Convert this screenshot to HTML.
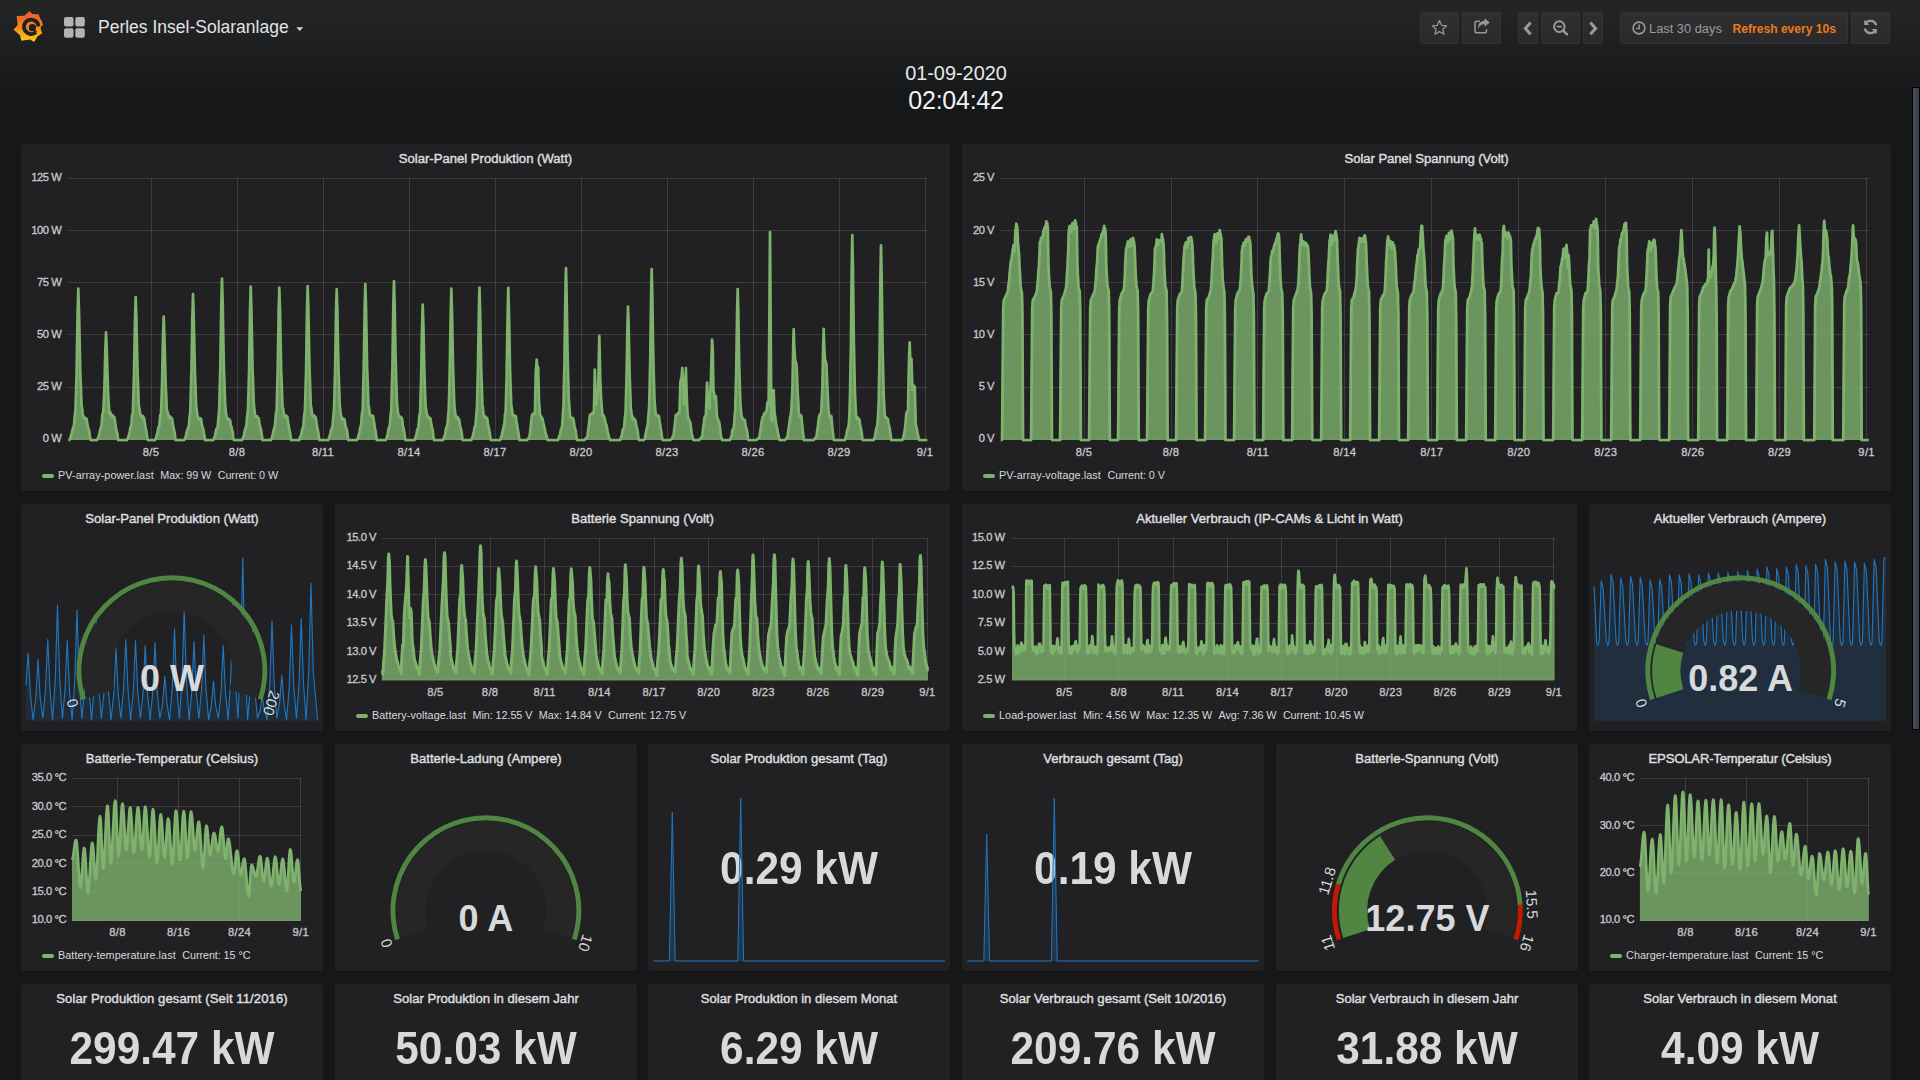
<!DOCTYPE html><html lang="de"><head><meta charset="utf-8"><title>Grafana - Perles Insel-Solaranlage</title><style>
*{box-sizing:border-box;margin:0;padding:0}
html,body{width:1920px;height:1080px;overflow:hidden}
body{background:#161719 linear-gradient(180deg,#222426 10px,#161719 100px) no-repeat;background-size:1920px 1080px;font-family:"Liberation Sans",sans-serif;color:#d8d9da;position:relative}
.panel{position:absolute;background:#212124;border:1px solid #141414;border-radius:3px;overflow:hidden}
.pt{position:absolute;left:0;right:0;top:7px;text-align:center;font-size:13.1px;font-weight:normal;-webkit-text-stroke:0.45px #dcddde;color:#dcddde;line-height:16px;white-space:nowrap;letter-spacing:0}
.lg{position:absolute;bottom:8.9px;height:14px;font-size:10.8px;line-height:14px;color:#d8d9da;white-space:nowrap}
.lg i{display:inline-block;width:12px;height:4px;border-radius:2px;background:#7eb26d;vertical-align:middle;margin:0 4px 1px 0}
.lg .al{letter-spacing:.08px}
.lg .lv{margin-left:6.5px;letter-spacing:-.07px}
.big{position:absolute;left:0;right:0;text-align:center;font-weight:bold;font-size:42.4px;line-height:48px;color:#d8d9da;white-space:nowrap;transform:scaleY(1.1);transform-origin:50% 56%}
svg.ov{position:absolute;left:0;top:0;width:1920px;height:1080px;pointer-events:none;overflow:hidden}
svg text.ax{font-family:"Liberation Sans",sans-serif;font-size:11.2px;fill:#c9cacb;stroke:#c9cacb;stroke-width:0.3px;letter-spacing:-0.45px}
svg text.axx{font-family:"Liberation Sans",sans-serif;font-size:11.2px;fill:#c9cacb;stroke:#c9cacb;stroke-width:0.3px;letter-spacing:0.3px}
svg text.gl{font-family:"Liberation Sans",sans-serif;font-size:15px;fill:#d8d9da}
svg text.gv{font-family:"Liberation Sans",sans-serif;font-weight:bold;fill:#d8d9da}
.nb{position:absolute;top:12px;height:32px;border:1px solid #333336;border-radius:2px;background:linear-gradient(180deg,#2f2f32,#2a2a2d);color:#8e8e8e}
.nb svg{position:absolute;left:0;top:0}
#title{position:absolute;left:98px;top:16px;font-size:17.5px;line-height:22px;color:#e3e3e4;white-space:nowrap}
#clock{position:absolute;left:756px;width:400px;top:62px;text-align:center;color:#e8e8e9}
#clock .d{font-size:19.9px;line-height:22px}
#clock .t{font-size:25px;line-height:29px;margin-top:1.5px;color:#f2f2f3;letter-spacing:-0.25px}
#tp{position:absolute;left:1620px;top:12px;width:228px;height:32px;border:1px solid #333336;border-radius:2px;background:linear-gradient(180deg,#2f2f32,#2a2a2d);white-space:nowrap}
#tp .l{position:absolute;left:28px;top:8px;font-size:12.85px;line-height:16px;color:#9c9c9e}
#tp .r{position:absolute;left:111.5px;top:8px;font-size:12.1px;line-height:16px;color:#eb7b18;font-weight:bold}
#sb{position:absolute;left:1912px;top:87px;width:8px;height:643px;background:linear-gradient(90deg,#474b64,#3b3b40);border:1px solid #000;border-radius:1px}
</style></head><body>
<svg style="position:absolute;left:8px;top:4px" width="44" height="44" viewBox="0 0 1080 1080"><defs><linearGradient id="lg" x1="0" y1="0.15" x2="0" y2="0.88"><stop offset="0" stop-color="#f05a28"/><stop offset="0.25" stop-color="#f26a24"/><stop offset="0.6" stop-color="#f7941d"/><stop offset="1" stop-color="#fdd40c"/></linearGradient>
<mask id="lm"><rect width="1080" height="1080" fill="#000"/><path fill="#fff" d="M525,170 L598,248 L748,250 Q772,290 780,335 Q842,405 860,522 L815,538 L800,600 L840,715 L722,800 L640,934 L548,874 L326,899 L296,764 L136,630 L238,518 L210,296 L402,288 Z"/>
<path fill="#000" d="M713.98,731.59 A224,224 0 1 1 793.45,544.37 L700.68,550.86 A131,131 0 1 0 654.21,660.35 Z"/><circle cx="598" cy="581" r="90" fill="#000"/><path fill="#000" d="M712.91,678.42 A150,150 0 0 1 649.30,722.95 L625.36,657.18 A80,80 0 0 0 659.28,633.42 Z"/></mask></defs>
<rect width="1080" height="1080" fill="url(#lg)" mask="url(#lm)"/>
</svg>
<svg style="position:absolute;left:64px;top:17px" width="21" height="21" viewBox="0 0 21 21"><g fill="#b3b3b3"><rect x="0" y="0" width="9.5" height="9.5" rx="2"/><rect x="11.3" y="0" width="9.5" height="9.5" rx="2"/><rect x="0" y="11.3" width="9.5" height="9.5" rx="2"/><rect x="11.3" y="11.3" width="9.5" height="9.5" rx="2"/></g></svg>
<div id="title">Perles Insel-Solaranlage</div>
<svg style="position:absolute;left:296px;top:27px" width="8" height="5" viewBox="0 0 8 5"><path d="M0.3,0.3 L7.2,0.3 L3.75,4 Z" fill="#d8d9da"/></svg>
<div class="nb" style="left:1420px;width:39px"><svg width="37" height="30" viewBox="0 0 37 30"><path d="M18.5,7.6 L20.6,12.3 L25.6,12.8 L21.9,16.2 L23,21.2 L18.5,18.6 L14,21.2 L15.1,16.2 L11.4,12.8 L16.4,12.3 Z" fill="none" stroke="#969698" stroke-width="1.25" stroke-linejoin="round"/></svg></div>
<div class="nb" style="left:1462px;width:39px"><svg width="37" height="30" viewBox="0 0 37 30"><g transform="translate(0,-1.3)"><path d="M17,9.5 H13.8 Q12,9.5 12,11.3 V19.2 Q12,21 13.8,21 H21.7 Q23.5,21 23.5,19.2 V17.5" fill="none" stroke="#98989a" stroke-width="1.5"/><path d="M21.5,6.5 L26.8,10.8 L21.5,15 V12.6 Q16.5,12.4 15.2,17.5 Q14.3,9.6 21.5,9 Z" fill="#98989a"/></g></svg></div>
<div class="nb" style="left:1518px;width:20px"><svg width="18" height="30" viewBox="0 0 18 30"><path d="M11.6,9.5 L6.4,15.4 L11.6,21.3" fill="none" stroke="#9a9a9c" stroke-width="3"/></svg></div>
<div class="nb" style="left:1541px;width:39px"><svg width="37" height="30" viewBox="0 0 37 30"><circle cx="17.3" cy="13.6" r="5.3" fill="none" stroke="#9a9a9c" stroke-width="2"/><path d="M21.2,17.6 L25,21.4" stroke="#9a9a9c" stroke-width="2.6" stroke-linecap="round"/><path d="M14.6,13.6 H20" stroke="#9a9a9c" stroke-width="1.7"/></svg></div>
<div class="nb" style="left:1583px;width:20px"><svg width="18" height="30" viewBox="0 0 18 30"><path d="M6.4,9.5 L11.6,15.4 L6.4,21.3" fill="none" stroke="#9a9a9c" stroke-width="3"/></svg></div>
<div id="tp"><svg style="position:absolute;left:10px;top:7px" width="16" height="16" viewBox="0 0 16 16"><circle cx="8" cy="8" r="5.9" fill="none" stroke="#9a9a9c" stroke-width="1.6"/><path d="M8.2,4.6 V8.4 H5.4" fill="none" stroke="#9a9a9c" stroke-width="1.5"/></svg><span class="l">Last 30 days</span><span class="r">Refresh every 10s</span></div>
<div class="nb" style="left:1851px;width:39px"><svg width="37" height="30" viewBox="0 0 37 30"><g transform="translate(0,-1)"><path d="M24.2,13.2 A6,6 0 0 0 13.4,11.6" fill="none" stroke="#9a9a9c" stroke-width="2.3"/><path d="M12.2,7.8 V13 H17.4 Z" fill="#9a9a9c"/><path d="M12.8,16.6 A6,6 0 0 0 23.6,18.4" fill="none" stroke="#9a9a9c" stroke-width="2.3"/><path d="M24.8,22.2 V17 H19.6 Z" fill="#9a9a9c"/></g></svg></div>
<div id="clock"><div class="d">01-09-2020</div><div class="t">02:04:42</div></div>
<div id="sb"></div>
<div class="panel " style="left:20px;top:143px;width:931px;height:349px"><div class="pt">Solar-Panel Produktion (Watt)</div><div class="lg" style="left:21px"><i></i><span class="al">PV-array-power.last</span><span class="lv">Max: 99 W</span><span class="lv">Current: 0 W</span></div></div>
<div class="panel " style="left:961px;top:143px;width:931px;height:349px"><div class="pt" style="letter-spacing:-0.045px">Solar Panel Spannung (Volt)</div><div class="lg" style="left:21px"><i></i><span class="al">PV-array-voltage.last</span><span class="lv">Current: 0 V</span></div></div>
<div class="panel " style="left:20px;top:503px;width:304px;height:229px"><div class="pt">Solar-Panel Produktion (Watt)</div></div>
<div class="panel " style="left:334px;top:503px;width:617px;height:229px"><div class="pt">Batterie Spannung (Volt)</div><div class="lg" style="left:21px"><i></i><span class="al">Battery-voltage.last</span><span class="lv">Min: 12.55 V</span><span class="lv">Max: 14.84 V</span><span class="lv">Current: 12.75 V</span></div></div>
<div class="panel " style="left:961px;top:503px;width:617px;height:229px"><div class="pt">Aktueller Verbrauch (IP-CAMs &amp; Licht in Watt)</div><div class="lg" style="left:21px"><i></i><span class="al">Load-power.last</span><span class="lv">Min: 4.56 W</span><span class="lv">Max: 12.35 W</span><span class="lv">Avg: 7.36 W</span><span class="lv">Current: 10.45 W</span></div></div>
<div class="panel " style="left:1588px;top:503px;width:304px;height:229px"><div class="pt">Aktueller Verbrauch (Ampere)</div></div>
<div class="panel " style="left:20px;top:743px;width:304px;height:229px"><div class="pt" style="letter-spacing:0.05px">Batterie-Temperatur (Celsius)</div><div class="lg" style="left:21px"><i></i><span class="al">Battery-temperature.last</span><span class="lv">Current: 15 °C</span></div></div>
<div class="panel " style="left:334px;top:743px;width:304px;height:229px"><div class="pt">Batterie-Ladung (Ampere)</div></div>
<div class="panel " style="left:647px;top:743px;width:304px;height:229px"><div class="pt">Solar Produktion gesamt (Tag)</div><div class="big" style="top:100.7px">0.29 kW</div></div>
<div class="panel " style="left:961px;top:743px;width:304px;height:229px"><div class="pt">Verbrauch gesamt (Tag)</div><div class="big" style="top:100.7px">0.19 kW</div></div>
<div class="panel " style="left:1275px;top:743px;width:304px;height:229px"><div class="pt">Batterie-Spannung (Volt)</div></div>
<div class="panel " style="left:1588px;top:743px;width:304px;height:229px"><div class="pt" style="letter-spacing:-0.17px">EPSOLAR-Temperatur (Celsius)</div><div class="lg" style="left:21px"><i></i><span class="al">Charger-temperature.last</span><span class="lv">Current: 15 °C</span></div></div>
<div class="panel " style="left:20px;top:983px;width:304px;height:229px"><div class="pt" style="letter-spacing:0.085px">Solar Produktion gesamt (Seit 11/2016)</div><div class="big" style="top:41.3px">299.47 kW</div></div>
<div class="panel " style="left:334px;top:983px;width:304px;height:229px"><div class="pt">Solar Produktion in diesem Jahr</div><div class="big" style="top:41.3px">50.03 kW</div></div>
<div class="panel " style="left:647px;top:983px;width:304px;height:229px"><div class="pt">Solar Produktion in diesem Monat</div><div class="big" style="top:41.3px">6.29 kW</div></div>
<div class="panel " style="left:961px;top:983px;width:304px;height:229px"><div class="pt">Solar Verbrauch gesamt (Seit 10/2016)</div><div class="big" style="top:41.3px">209.76 kW</div></div>
<div class="panel " style="left:1275px;top:983px;width:304px;height:229px"><div class="pt">Solar Verbrauch in diesem Jahr</div><div class="big" style="top:41.3px">31.88 kW</div></div>
<div class="panel " style="left:1588px;top:983px;width:304px;height:229px"><div class="pt">Solar Verbrauch in diesem Monat</div><div class="big" style="top:41.3px">4.09 kW</div></div>
<svg class="ov" viewBox="0 0 1920 1080"><clipPath id="c1"><rect x="67.3" y="176.3" width="861.0" height="265.4"/></clipPath><g stroke="rgba(255,255,255,0.13)" stroke-width="1" shape-rendering="crispEdges"><line x1="151" y1="178.3" x2="151" y2="439.3"/><line x1="237" y1="178.3" x2="237" y2="439.3"/><line x1="323" y1="178.3" x2="323" y2="439.3"/><line x1="409" y1="178.3" x2="409" y2="439.3"/><line x1="495" y1="178.3" x2="495" y2="439.3"/><line x1="581" y1="178.3" x2="581" y2="439.3"/><line x1="667" y1="178.3" x2="667" y2="439.3"/><line x1="753" y1="178.3" x2="753" y2="439.3"/><line x1="839" y1="178.3" x2="839" y2="439.3"/><line x1="925" y1="178.3" x2="925" y2="439.3"/><line x1="68.3" y1="439.3" x2="927.3" y2="439.3"/><line x1="68.3" y1="387.1" x2="927.3" y2="387.1"/><line x1="68.3" y1="334.9" x2="927.3" y2="334.9"/><line x1="68.3" y1="282.7" x2="927.3" y2="282.7"/><line x1="68.3" y1="230.5" x2="927.3" y2="230.5"/><line x1="68.3" y1="178.3" x2="927.3" y2="178.3"/></g><g clip-path="url(#c1)"><g transform="translate(0,0.8)"><path d="M68.3,439.3 L68.9,439.3 L69.4,439.3 L69.5,439.1 L70.1,437.6 L70.7,436 L71.1,435.1 L71.3,433.3 L71.9,431.6 L72.5,428.9 L73.1,427.2 L73.7,425.4 L73.9,425.1 L74.3,421.1 L74.7,415.7 L74.9,414 L75.5,409 L76.1,388 L76.6,371.1 L76.7,364.6 L77.3,330.5 L77.6,312 L77.9,302 L78.3,287.7 L78.5,295.1 L79,310.4 L79.1,314.6 L79.7,343.6 L80.2,368.1 L80.3,371.8 L80.9,386.3 L81.5,403.8 L82.1,407.5 L82.7,413.2 L83.3,415.4 L83.5,416.5 L83.9,416.4 L84.5,417.6 L84.8,416.9 L85.1,418.2 L85.7,417.5 L86.3,418.9 L86.7,418.2 L86.9,420.1 L87.5,423.9 L87.6,424 L88.1,427.1 L88.5,427.8 L88.7,428.7 L89.3,430.9 L89.9,435.2 L90.5,439.3 L91.1,439.3 L91.7,439.3 L92.3,439.3 L92.9,439.3 L93.5,439.3 L94.1,439.3 L94.7,439.3 L95.3,439.3 L95.9,439.3 L96.5,439.3 L97,439.3 L97.2,439.3 L97.6,438.3 L98.2,436.8 L98.8,435 L98.8,435.1 L99.4,432.8 L100,429.7 L100.2,428.8 L100.6,427.7 L101.2,425.7 L101.6,423.4 L101.8,420.8 L102.4,413.7 L102.4,414.1 L103,411.9 L103.2,412 L103.6,404.8 L104.2,394 L104.3,390.9 L104.8,372.1 L105.3,348.7 L105.4,347.7 L106,333.3 L106,331.6 L106.6,344.2 L106.7,347.8 L107.2,364.1 L107.8,383.8 L107.9,388.6 L108.4,397.7 L109,407.6 L109.2,412.5 L109.6,411.5 L110.2,412.8 L110.4,411.6 L110.8,413.8 L111.2,414.9 L111.4,414.1 L112,415.2 L112.5,415.3 L112.6,414.4 L113.2,416 L113.8,417.1 L114.3,416.6 L114.4,416.4 L115,420 L115.2,422.4 L115.6,424.8 L116.1,427.8 L116.2,428.8 L116.8,430.6 L116.9,431 L117.4,433 L118,438.2 L118.1,439.3 L118.6,439.3 L119.2,439.3 L119.8,439.3 L120.4,439.3 L121,439.3 L121.6,439.3 L122.2,439.3 L122.8,439.3 L123.4,439.3 L124,439.3 L124.6,439.3 L125.2,439.3 L125.6,439.3 L126.2,439.3 L126.8,439.3 L126.9,439.3 L127.4,438 L128,437.3 L128.6,435.1 L128.6,435.4 L129.2,433 L129.8,430.4 L130,428.9 L130.4,426.5 L131,425.6 L131.4,423.8 L131.6,420.3 L132.1,414.4 L132.2,414.1 L132.8,411.8 L132.9,410.6 L133.4,393.7 L134,374.6 L134,374.8 L134.6,339.8 L135,319.2 L135.2,312.3 L135.7,296.2 L135.8,300.4 L136.4,317.7 L136.4,320.1 L137,347.5 L137.6,371.8 L137.6,372.5 L138.2,388.4 L138.8,405.1 L138.9,405.4 L139.4,407.8 L140,412.4 L140,411.9 L140.6,414.6 L140.8,415.3 L141.2,414.6 L141.8,415.3 L142.1,415.7 L142.4,416.7 L143,415.3 L143.6,417.3 L144,416.9 L144.2,419 L144.8,421.8 L144.9,422.8 L145.4,426.2 L145.8,427.8 L146,429.2 L146.6,431 L146.6,432.3 L147.2,436.5 L147.8,439.3 L147.8,439.3 L148.4,439.3 L149,439.3 L149.6,439.3 L150.2,439.3 L150.8,439.3 L151.4,439.3 L152,439.3 L152.6,439.3 L153.2,439.3 L153.8,439.3 L154.3,439.3 L154.9,439.3 L155,439.3 L155.5,437.9 L156.1,437 L156.6,435.1 L156.7,434.6 L157.3,432.3 L157.9,429.4 L158,428.9 L158.5,426.3 L159.1,425.4 L159.4,424.5 L159.7,420.5 L160.2,415.2 L160.3,414 L160.9,413.9 L161,413 L161.5,398.8 L162,383.6 L162.1,379.3 L162.7,350.1 L163,335.5 L163.3,327.7 L163.7,315.7 L163.9,321.8 L164.4,334.4 L164.5,338.2 L165.1,361.7 L165.6,381.3 L165.7,384.8 L166.3,396.5 L166.8,409.3 L166.9,408.7 L167.5,411 L168,412.6 L168.1,413.1 L168.7,416.4 L168.8,416 L169.3,417.1 L169.9,415.4 L170.1,416.4 L170.5,417.2 L171.1,416.7 L171.7,418 L172,417.7 L172.3,419.3 L172.8,423.5 L172.9,423.6 L173.5,427.2 L173.7,427.8 L174.1,430 L174.5,431 L174.7,431.9 L175.3,437.5 L175.7,439.3 L175.9,439.3 L176.5,439.3 L177.1,439.3 L177.7,439.3 L178.3,439.3 L178.9,439.3 L179.5,439.3 L180.1,439.3 L180.7,439.3 L181.3,439.3 L181.9,439.3 L182.5,439.3 L183,439.3 L183.6,439.3 L184.2,439.3 L184.3,439.3 L184.8,438.1 L185.4,436.5 L186,435.1 L186.6,431.6 L187.2,429.4 L187.3,428.9 L187.8,428.4 L188.4,425.9 L188.7,426 L189,423.5 L189.5,416.6 L189.6,416.9 L190.2,411.4 L190.3,410 L190.8,393.2 L191.3,373.7 L191.4,372.9 L192,337.7 L192.3,316.6 L192.6,308.4 L193,293.4 L193.2,298.6 L193.7,315.5 L193.8,320 L194.4,347.9 L194.9,370.8 L195,372.9 L195.6,388.9 L196.1,404.9 L196.2,404.9 L196.8,409.6 L197.3,414.1 L197.4,414.3 L198,417.7 L198.1,417.5 L198.6,418.6 L199.2,418.8 L199.3,417.9 L199.8,417.3 L200.4,418.2 L201,418 L201.2,419.2 L201.6,422.6 L202.1,425 L202.2,425 L202.8,427.2 L203,427.8 L203.4,429 L203.7,430.9 L204,432.9 L204.6,435.8 L204.9,439.3 L205.2,439.3 L205.8,439.3 L206.4,439.3 L207,439.3 L207.6,439.3 L208.2,439.3 L208.8,439.3 L209.4,439.3 L210,439.3 L210.6,439.3 L211.2,439.3 L211.6,439.3 L212.2,439.3 L212.8,439.3 L213.4,439.3 L213.4,439.1 L214,437.6 L214.6,436 L215,435.1 L215.2,433.6 L215.8,430.5 L216.4,428.9 L216.4,428.3 L217,427.4 L217.6,426.2 L217.7,426.7 L218.2,419.7 L218.5,417.3 L218.8,413.2 L219.3,406.9 L219.4,400.8 L220,377.7 L220.3,366.8 L220.6,347.3 L221.2,309.3 L221.3,303.4 L221.8,283.4 L222,277.9 L222.4,292.4 L222.7,301.8 L223,320.5 L223.6,352 L223.8,363.4 L224.2,375.5 L224.8,393.3 L225.1,401.7 L225.4,405.2 L226,413 L226.3,414.8 L226.6,416 L227,418.1 L227.2,417.1 L227.8,417.6 L228.3,418.5 L228.4,418.1 L229,419.2 L229.6,418.9 L230.2,419.8 L230.2,420.2 L230.8,424.5 L231,425.6 L231.4,425.9 L231.9,427.8 L232,429.2 L232.6,430.3 L232.7,430.9 L233.2,435.9 L233.8,439.2 L233.8,439.3 L234.4,439.3 L235,439.3 L235.6,439.3 L236.2,439.3 L236.8,439.3 L237.4,439.3 L238,439.3 L238.6,439.3 L239.2,439.3 L239.8,439.3 L240.3,439.3 L240.9,439.3 L241.5,439.3 L242.1,439.3 L242.1,439.3 L242.7,437.8 L243.3,436.3 L243.8,435.1 L243.9,435 L244.5,431.2 L245.1,428.9 L245.7,426.9 L246.3,424.7 L246.5,424.5 L246.9,418.1 L247.2,415.1 L247.5,413.3 L248,408.4 L248.1,405.8 L248.7,383.5 L249.1,370 L249.3,354.7 L249.9,318.4 L250,310.4 L250.5,293.5 L250.7,285.7 L251.1,298.5 L251.4,308.6 L251.7,324.8 L252.3,355.5 L252.5,367 L252.9,376.9 L253.5,395.5 L253.8,403.4 L254.1,405.5 L254.7,411.3 L254.9,412.5 L255.3,414.3 L255.7,415.9 L255.9,415.3 L256.5,415.3 L257,416.3 L257.1,415.6 L257.7,417.1 L258.3,417.1 L258.8,417.6 L258.9,418.6 L259.5,423 L259.7,423.4 L260.1,425.6 L260.5,427.8 L260.7,427.8 L261.3,430.2 L261.3,430.9 L261.9,434.8 L262.5,439.3 L262.5,439.3 L263.1,439.3 L263.7,439.3 L264.3,439.3 L264.9,439.3 L265.5,439.3 L266.1,439.3 L266.7,439.3 L267.3,439.3 L267.9,439.3 L268.5,439.3 L269,439.3 L269.6,439.3 L270.2,439.3 L270.8,439.3 L271.4,437.8 L272,436.7 L272.4,435.1 L272.6,435 L273.2,431.6 L273.7,428.9 L273.8,429.2 L274.4,426.7 L275,423.7 L275.1,423 L275.6,416.8 L275.8,413.6 L276.2,411.6 L276.6,408.7 L276.8,403.6 L277.4,380.9 L277.7,370.7 L278,351.2 L278.6,315.1 L278.6,311.3 L279.2,292.5 L279.3,286.9 L279.8,303.8 L280,309.7 L280.4,329 L281,360.9 L281.1,367.5 L281.6,380.1 L282.2,397.7 L282.4,403.6 L282.8,406.6 L283.4,409.5 L283.5,411.1 L284,414.1 L284.3,414.5 L284.6,415.3 L285.2,414.8 L285.5,414.9 L285.8,416 L286.4,414.8 L287,416.4 L287.4,416.1 L287.6,418.3 L288.2,422.6 L288.2,422 L288.8,425.4 L289.1,427.8 L289.4,429.1 L289.8,431 L290,431.6 L290.6,435.9 L291,439.3 L291.2,439.3 L291.8,439.3 L292.4,439.3 L293,439.3 L293.6,439.3 L294.2,439.3 L294.8,439.3 L295.4,439.3 L296,439.3 L296.6,439.3 L297.2,439.3 L297.6,439.3 L298.2,439.3 L298.8,439.3 L299.2,439.3 L299.4,438.7 L300,436.2 L300.6,435.3 L300.8,435.1 L301.2,433.9 L301.8,430.5 L302.2,428.8 L302.4,428.5 L303,426.5 L303.5,423.6 L303.6,422.1 L304.2,414.2 L304.3,414.2 L304.8,410.6 L305,408.3 L305.4,394.1 L306,371.9 L306.1,370.1 L306.6,334.5 L307,309.7 L307.2,302.3 L307.7,285.4 L307.8,289.7 L308.4,308.3 L308.4,311.3 L309,342.8 L309.5,366.6 L309.6,369.9 L310.2,387.3 L310.7,403.1 L310.8,404.8 L311.4,407.4 L311.9,411.7 L312,411.9 L312.6,415.7 L312.7,415 L313.2,415.3 L313.8,415.2 L313.9,415.5 L314.4,415 L315,416.5 L315.6,416.5 L315.7,416.7 L316.2,419.5 L316.6,422.6 L316.8,423.6 L317.4,427.8 L317.4,426.9 L318,430.4 L318.2,431 L318.6,433.9 L319.2,438.6 L319.3,439.3 L319.8,439.3 L320.4,439.3 L321,439.3 L321.6,439.3 L322.2,439.3 L322.8,439.3 L323.4,439.3 L324,439.3 L324.6,439.3 L325.2,439.3 L325.8,439.3 L326.3,439.3 L326.9,439.3 L327.5,439.3 L328.1,439.3 L328.3,439.3 L328.7,438.2 L329.3,436.2 L329.9,435.1 L329.9,434.4 L330.5,431.9 L331.1,428.9 L331.2,428.9 L331.7,428.4 L332.3,425.8 L332.5,426.1 L332.9,420.5 L333.3,416.7 L333.5,413.6 L334,409.2 L334.1,407 L334.7,384.8 L335.1,371.2 L335.3,358.5 L335.9,320 L336,312.7 L336.5,294.8 L336.7,288.4 L337.1,302.4 L337.4,311 L337.7,329 L338.3,358.5 L338.5,368.4 L338.9,379.9 L339.5,396.7 L339.7,403.9 L340.1,407.3 L340.7,413.7 L340.9,414.2 L341.3,415.5 L341.6,417.6 L341.9,418.6 L342.5,417.2 L342.9,418 L343.1,418.8 L343.7,418.9 L344.3,418.4 L344.7,419.2 L344.9,421.7 L345.5,425.8 L345.5,425.1 L346.1,427 L346.4,427.8 L346.7,428.8 L347.1,431 L347.3,431.6 L347.9,436.3 L348.3,439.3 L348.5,439.3 L349.1,439.3 L349.7,439.3 L350.3,439.3 L350.9,439.3 L351.5,439.3 L352.1,439.3 L352.7,439.3 L353.3,439.3 L353.9,439.3 L354.5,439.3 L355,439.3 L355.6,439.3 L356.2,439.3 L356.8,439.3 L356.9,439.3 L357.4,438.1 L358,436.6 L358.5,435.1 L358.6,434 L359.2,432.9 L359.8,429.8 L359.8,428.9 L360.4,426.5 L361,424.3 L361.2,423 L361.6,417.4 L361.9,413.6 L362.2,411.4 L362.7,408.1 L362.8,404.1 L363.4,380.8 L363.7,369.1 L364,351.5 L364.6,313.3 L364.6,308.3 L365.2,288.5 L365.3,283.3 L365.8,299.3 L366,306.8 L366.4,327.5 L367,360.4 L367.1,366 L367.6,379.8 L368.2,397.6 L368.3,402.8 L368.8,406.2 L369.4,410.5 L369.4,411.1 L370,414.1 L370.2,414.5 L370.6,414.5 L371.2,414.8 L371.4,414.9 L371.8,414.9 L372.4,416.5 L373,415 L373.2,416.2 L373.6,418.6 L374.1,422 L374.2,423 L374.8,426.3 L374.9,427.8 L375.4,429.6 L375.7,431 L376,433.3 L376.6,437.7 L376.8,439.3 L377.2,439.3 L377.8,439.3 L378.4,439.3 L379,439.3 L379.6,439.3 L380.2,439.3 L380.8,439.3 L381.4,439.3 L382,439.3 L382.6,439.3 L383.2,439.3 L383.6,439.3 L384.2,439.3 L384.8,439.3 L385.4,439.3 L385.7,439.3 L386,438.3 L386.6,437.7 L387.2,435.1 L387.3,435.1 L387.8,432.6 L388.4,428.6 L388.6,428.8 L389,426.3 L389.6,425.5 L389.9,424.1 L390.2,419.7 L390.6,414.7 L390.8,413.5 L391.4,407.5 L391.4,405.4 L392,381.4 L392.4,367.8 L392.6,351.8 L393.2,312.9 L393.3,305.6 L393.8,286.9 L394,280.3 L394.4,296.8 L394.7,304.2 L395,324.4 L395.6,356.1 L395.8,364.5 L396.2,379.6 L396.8,396.8 L397,402.3 L397.4,407.2 L398,412.1 L398.1,412.2 L398.6,415.1 L398.9,415.5 L399.2,415.3 L399.8,416.2 L400.1,416 L400.4,416.5 L401,416.4 L401.6,417.9 L401.9,417.2 L402.2,419.4 L402.7,423 L402.8,424.6 L403.4,427.2 L403.5,427.8 L404,430.4 L404.3,430.9 L404.6,434.2 L405.2,438 L405.4,439.3 L405.8,439.3 L406.4,439.3 L407,439.3 L407.6,439.3 L408.2,439.3 L408.8,439.3 L409.4,439.3 L410,439.3 L410.6,439.3 L411.2,439.3 L411.8,439.3 L412.3,439.3 L412.9,439.3 L413.5,439.3 L414.1,439.3 L414.4,439.3 L414.7,438.6 L415.3,437.1 L415.9,435.7 L416,435.1 L416.5,432.9 L417.1,429.8 L417.3,428.9 L417.7,428.3 L418.3,426.3 L418.6,424.7 L418.9,420.8 L419.4,415.4 L419.5,414.4 L420.1,412.2 L420.1,411.9 L420.7,391.3 L421.1,378 L421.3,367.5 L421.9,332.8 L422.1,325.1 L422.5,310.7 L422.7,303.7 L423.1,315.7 L423.4,324.1 L423.7,339.6 L424.3,367.2 L424.5,375.4 L424.9,387.3 L425.5,402.9 L425.7,406.9 L426.1,408.3 L426.7,413 L426.8,412.9 L427.3,414.1 L427.5,416.2 L427.9,415.5 L428.5,417.3 L428.7,416.6 L429.1,417.4 L429.7,416.8 L430.3,418.2 L430.5,417.9 L430.9,421.5 L431.3,423.7 L431.5,423.8 L432.1,427.6 L432.2,427.8 L432.7,429.4 L432.9,430.9 L433.3,434.6 L433.9,438.3 L434,439.3 L434.5,439.3 L435.1,439.3 L435.7,439.3 L436.3,439.3 L436.9,439.3 L437.5,439.3 L438.1,439.3 L438.7,439.3 L439.3,439.3 L439.9,439.3 L440.5,439.3 L441,439.3 L441.6,439.3 L442.2,439.3 L442.8,439.3 L443.1,439.3 L443.4,438.5 L444,436.5 L444.6,436.3 L444.7,435.1 L445.2,433.2 L445.8,429.3 L445.9,428.9 L446.4,426.8 L447,425 L447.2,425.3 L447.6,421.8 L448,415.9 L448.2,414 L448.7,409 L448.8,406.3 L449.4,384.5 L449.7,371 L450,355.2 L450.6,317.9 L450.7,312.1 L451.2,293.4 L451.3,287.7 L451.8,305.1 L452,310.7 L452.4,333.5 L453,363.6 L453.1,367.8 L453.6,383.4 L454.2,401.1 L454.3,403.8 L454.8,409 L455.4,413.4 L455.4,414.1 L456,416.8 L456.1,416.7 L456.6,416.2 L457.2,416.1 L457.3,417.2 L457.8,416.6 L458.4,418.8 L459,419.3 L459.1,418.4 L459.6,421.1 L459.9,424.3 L460.2,425.5 L460.7,427.8 L460.8,427.5 L461.4,430.9 L461.5,430.9 L462,434.9 L462.6,439.3 L463.2,439.3 L463.8,439.3 L464.4,439.3 L465,439.3 L465.6,439.3 L466.2,439.3 L466.8,439.3 L467.4,439.3 L468,439.3 L468.6,439.3 L469.2,439.3 L469.6,439.3 L470.2,439.3 L470.8,439.3 L471.3,439.3 L471.4,439 L472,437.4 L472.6,435.9 L472.9,435.1 L473.2,433.2 L473.8,431.5 L474.2,428.9 L474.4,427.6 L475,425.4 L475.5,424.8 L475.6,423.2 L476.2,415.4 L476.2,415.1 L476.8,409.1 L476.9,408.8 L477.4,389.8 L477.9,370.7 L478,364.9 L478.6,326 L478.9,311.1 L479.2,296.6 L479.5,286.7 L479.8,299.7 L480.1,309.4 L480.4,324.3 L481,356.1 L481.2,367.7 L481.6,379 L482.2,396.8 L482.4,403.6 L482.8,406.7 L483.4,412.3 L483.5,412.9 L484,415 L484.3,416.3 L484.6,416.4 L485.2,415.6 L485.5,416.7 L485.8,416.3 L486.4,417.9 L487,417 L487.2,417.9 L487.6,420.5 L488,423.8 L488.2,424.2 L488.8,427 L488.9,427.8 L489.4,430.5 L489.6,431 L490,433.5 L490.6,438.8 L490.7,439.3 L491.2,439.3 L491.8,439.3 L492.4,439.3 L493,439.3 L493.6,439.3 L494.2,439.3 L494.8,439.3 L495.4,439.3 L496,439.3 L496.6,439.3 L497.2,439.3 L497.8,439.3 L498.3,439.3 L498.9,439.3 L499.5,439.3 L500.1,439.3 L500.2,439.3 L500.7,437.9 L501.3,435.9 L501.7,435.1 L501.9,433.7 L502.5,430.8 L503,428.8 L503.1,428.6 L503.7,425.4 L504.3,423.3 L504.3,424 L504.9,415.7 L505,413.9 L505.5,410.6 L505.7,408.8 L506.1,396.2 L506.7,372.7 L506.7,370.9 L507.3,334.2 L507.7,311.1 L507.9,301.7 L508.3,287.1 L508.5,294.8 L508.9,309.6 L509.1,317.6 L509.7,350 L510,367.7 L510.3,376.2 L510.9,393.8 L511.2,403.5 L511.5,405.5 L512.1,409.9 L512.3,411.4 L512.7,413.4 L513,414.7 L513.3,413.8 L513.9,414.8 L514.2,415.2 L514.5,414.9 L515.1,415.3 L515.7,415.2 L516,416.4 L516.3,419.9 L516.8,422.3 L516.9,422.9 L517.5,426.7 L517.6,427.8 L518.1,430.5 L518.3,431 L518.7,434 L519.3,438.4 L519.4,439.3 L519.9,439.3 L520.5,439.3 L521.1,439.3 L521.7,439.3 L522.3,439.3 L522.9,439.3 L523.5,439.3 L524.1,439.3 L524.7,439.3 L525.3,439.3 L525.9,439.3 L526.5,439.3 L527,439.3 L527.6,438.5 L528.2,437.6 L528.8,437.5 L529.2,436.2 L529.4,435.5 L530,432 L530.6,427.5 L530.6,426.8 L531.2,420.7 L531.8,415.9 L532,414.2 L532.4,414.1 L533,412.9 L533.6,413.5 L534.2,412.4 L534.8,413 L534.9,413 L535.4,389.7 L535.8,370.5 L536,369 L536.6,360.3 L536.7,358.9 L537.2,365.8 L537.4,370.3 L537.8,369.3 L538.2,366.3 L538.4,374.9 L538.9,397.4 L539,399.7 L539.6,408.3 L540,414.2 L540.2,415.2 L540.8,415.4 L541.4,416 L542,418.1 L542.1,417.4 L542.6,418.2 L543.2,421.7 L543.8,423.9 L544,424.7 L544.4,426.4 L545,429.7 L545.6,432.6 L545.8,433 L546.2,434.1 L546.8,436.4 L547.4,438.6 L547.6,439.3 L548,439.3 L548.6,439.3 L549.2,439.3 L549.8,439.3 L550.4,439.3 L551,439.3 L551.6,439.3 L552.2,439.3 L552.8,439.3 L553.4,439.3 L554,439.3 L554.6,439.3 L555.2,439.3 L555.6,439.3 L556.2,439.3 L556.8,439.3 L557.4,439.3 L558,439.3 L558,439.2 L558.6,437.5 L559.2,435.4 L559.5,435.1 L559.8,434 L560.4,431.6 L560.8,428.9 L561,428.8 L561.6,427.7 L562,425.8 L562.2,423.9 L562.8,416.4 L562.8,414.6 L563.4,405.8 L563.5,404.9 L564,379.7 L564.5,361.9 L564.6,348.7 L565.2,305.5 L565.4,294.8 L565.8,273.3 L566,267.3 L566.4,284.3 L566.6,293 L567,318.7 L567.6,353.3 L567.7,358.3 L568.2,377.2 L568.8,398.2 L568.9,399.6 L569.4,406 L570,413.9 L570,414.8 L570.6,417 L570.7,417.2 L571.2,416.5 L571.8,417.2 L571.8,417.7 L572.4,418.1 L573,417.5 L573.6,418.9 L573.6,418.8 L574.2,423.6 L574.4,424.7 L574.8,427.3 L575.2,427.8 L575.4,428.7 L575.9,430.9 L576,432.1 L576.6,437.3 L577,439.3 L577.2,439.3 L577.8,439.3 L578.4,439.3 L579,439.3 L579.6,439.3 L580.2,439.3 L580.8,439.3 L581.4,439.3 L582,439.3 L582.6,439.3 L583.2,439.3 L583.8,439.3 L584.3,439.3 L584.9,438.7 L585.5,438 L586.1,437.4 L586.7,436.7 L587.2,436.2 L587.3,436.4 L587.9,431.6 L588.5,426.9 L588.6,426.7 L589.1,421.9 L589.7,416.7 L589.9,414.2 L590.3,413.9 L590.9,413.9 L591.5,412.8 L592.1,413 L592.7,411.8 L593.3,411.5 L593.9,411.7 L593.9,412 L594.5,384.9 L594.8,368.8 L595.1,378.5 L595.7,396.2 L595.7,397.6 L596.3,401 L596.6,403.8 L596.9,400.5 L597.5,394.9 L598.1,388.8 L598.2,387.1 L598.7,363.4 L599.3,335.1 L599.3,335 L599.9,363 L600.2,376.7 L600.5,383.7 L601.1,397.5 L601.1,397.2 L601.7,405.4 L602.3,412.3 L602.5,414.2 L602.9,413.8 L603.5,414.8 L604.1,415.8 L604.7,417.4 L604.7,418.5 L605.3,420.9 L605.9,422.9 L606.5,424.7 L606.5,425.1 L607.1,427.5 L607.7,431.4 L608.2,433 L608.3,433.2 L608.9,436.2 L609.5,437.5 L610,439.3 L610.1,439.3 L610.7,439.3 L611.3,439.3 L611.9,439.3 L612.5,439.3 L613,439.3 L613.6,439.3 L614.2,439.3 L614.8,439.3 L615.4,439.3 L616,439.3 L616.6,439.3 L617.2,439.3 L617.8,439.3 L618.4,439.3 L619,439.3 L619.6,439.3 L620.1,439.3 L620.2,439.1 L620.8,437.4 L621.4,435.4 L621.6,435.1 L622,433.1 L622.6,430 L622.8,428.9 L623.2,428.5 L623.8,427.2 L624.1,426.6 L624.4,423.5 L624.8,417.2 L625,416.4 L625.5,412.5 L625.6,410 L626.2,389.3 L626.5,379 L626.8,363.4 L627.4,327.3 L628,307.4 L628,305.8 L628.6,323.5 L628.6,325.8 L629.2,351.7 L629.7,376.6 L629.8,378.2 L630.4,395.4 L630.8,407.3 L631,408.4 L631.6,412.9 L631.9,414.7 L632.2,415.3 L632.6,418.1 L632.8,418.4 L633.4,418 L633.8,418.5 L634,417.6 L634.6,419.4 L635.2,419.4 L635.5,419.7 L635.8,421.5 L636.3,425.6 L636.4,425 L637,427.7 L637.1,427.8 L637.6,430.3 L637.8,430.9 L638.2,434.9 L638.8,438.8 L638.8,439.3 L639.4,439.3 L640,439.3 L640.6,439.3 L641.2,439.3 L641.6,439.3 L642.2,439.3 L642.8,439.3 L643.4,439.3 L643.8,439.3 L644,438.8 L644.6,438 L645.2,436.3 L645.3,435.1 L645.8,432.5 L646.4,429.6 L646.6,428.9 L647,426.4 L647.6,424.5 L647.8,423.3 L648.2,417.1 L648.5,414 L648.8,410.8 L649.2,405 L649.4,396.4 L650,369 L650.2,362.3 L650.6,329.9 L651.1,295.8 L651.2,289.1 L651.7,268.3 L651.8,273.6 L652.3,294.1 L652.4,301 L653,338.7 L653.4,359 L653.6,369 L654.2,390 L654.5,399.7 L654.8,402.8 L655.4,410.1 L655.6,411.4 L656,414.4 L656.3,414.8 L656.6,414.5 L657.2,415 L657.4,415.2 L657.8,414.6 L658.4,415 L659,415.5 L659.1,416.5 L659.6,420.4 L659.9,422.3 L660.2,424 L660.7,427.8 L660.8,428.8 L661.4,430.9 L661.4,431.6 L662,436.1 L662.5,439.3 L662.6,439.3 L663.2,439.3 L663.8,439.3 L664.4,439.3 L665,439.3 L665.6,439.3 L666.2,439.3 L666.8,439.3 L667.4,439.3 L668,439.3 L668.6,439.3 L669.2,439.3 L669.8,439.3 L670.3,439.3 L670.9,438.6 L671.5,438 L672.1,437.3 L672.7,435.9 L673.2,436.2 L673.3,435.8 L673.9,431.3 L674.5,426.8 L674.5,427 L675.1,421.3 L675.7,415.5 L675.8,414.2 L676.3,414.2 L676.9,414.3 L677.5,413.2 L678.1,412.3 L678.7,412.5 L679.3,411.6 L679.5,412 L679.9,397.2 L680.4,380.9 L680.5,381 L681.1,377.8 L681.6,376.7 L681.7,374.4 L682.3,367.1 L682.3,367.7 L682.9,378.2 L683,378.7 L683.5,393.2 L683.9,403.8 L684.1,403.2 L684.7,401.7 L684.8,401.6 L685.3,384 L685.9,367.4 L685.9,367.4 L686.5,387.8 L686.8,397.4 L687.1,404.5 L687.7,414.2 L687.8,416.3 L688.3,416.7 L688.9,419.3 L689.5,420.4 L690,420.5 L690.1,420.7 L690.7,424.6 L691.3,430.6 L691.8,433 L691.9,433.2 L692.5,436.4 L693.1,437.8 L693.5,439.3 L693.7,439.3 L694.3,439.3 L694.9,439.3 L695.5,439.3 L696.1,439.3 L696.7,439.3 L697.3,439.3 L697.9,439.3 L698.5,439.3 L699,439.3 L699.6,438.7 L700.2,438 L700.8,437.4 L701.4,436.5 L702,436.1 L702,436.6 L702.6,432.3 L703.2,426.9 L703.3,426.8 L703.8,422.7 L704.4,417.4 L704.6,416.3 L705,415.9 L705.6,415.1 L705.9,414.2 L706.2,406 L706.8,390.6 L707.1,381.7 L707.4,388.7 L708,405.3 L708,405.9 L708.6,406.3 L709.2,407.2 L709.4,408 L709.8,399.4 L710.4,388.4 L711,376.7 L711,375.3 L711.6,353.8 L712,338.7 L712.2,340.1 L712.7,347.4 L712.8,351.4 L713.4,387.3 L713.4,389.2 L714,392.4 L714.6,396.3 L714.6,397.5 L715.2,396.4 L715.8,395.6 L715.9,395.5 L716.4,404.9 L716.9,416.2 L717,415.9 L717.6,417.9 L718.2,419.1 L718.8,420.9 L719,420.5 L719.4,422.9 L720,426.7 L720.6,432.3 L720.7,433.1 L721.2,436 L721.8,438.1 L722,439.3 L722.4,439.3 L723,439.3 L723.6,439.3 L724.2,439.3 L724.8,439.3 L725.4,439.3 L726,439.3 L726.6,439.3 L727.2,439.3 L727.6,439.3 L728.2,439.3 L728.8,439.3 L729.4,439.3 L730,439.3 L730,439.2 L730.6,437.5 L731.2,435.9 L731.5,435.1 L731.8,433.6 L732.4,429.1 L732.7,428.9 L733,429 L733.6,427.1 L733.9,426.1 L734.2,422.2 L734.6,416.8 L734.8,413.6 L735.3,409 L735.4,402 L736,379.5 L736.2,371.2 L736.6,344.3 L737.1,312.7 L737.2,306.7 L737.7,288.4 L737.8,293.4 L738.3,310.8 L738.4,317.6 L739,352.6 L739.3,368.2 L739.6,378.6 L740.2,397.4 L740.5,403.9 L740.8,408.2 L741.4,414.1 L741.5,414.2 L742,416.4 L742.2,417.6 L742.6,417.5 L743.2,418.5 L743.3,418 L743.8,419 L744.4,419.3 L745,419.3 L745,420.5 L745.6,423.8 L745.8,425.1 L746.2,427.2 L746.5,427.8 L746.8,429.1 L747.2,431 L747.4,432.1 L748,437.6 L748.3,439.3 L748.6,439.3 L749.2,439.3 L749.8,439.3 L750.4,439.3 L751,439.3 L751.6,439.3 L752.2,439.3 L752.8,439.3 L753.4,439.3 L754,439.3 L754.6,439.3 L755.2,439.3 L755.8,439.3 L756.3,439.3 L756.9,438.7 L757.5,438.1 L758.1,437.5 L758.7,437.5 L759.3,435.6 L759.5,436.1 L759.9,432.5 L760.5,429.3 L760.8,426.8 L761.1,424.9 L761.7,420.4 L762.3,417.7 L762.5,416.3 L762.9,416.3 L763.5,415.8 L764.1,412.9 L764.7,412.3 L765.3,412.3 L765.9,411 L766.5,410.1 L766.6,410.1 L767.1,405.2 L767.4,401.8 L767.7,401.2 L768.3,402.9 L768.6,403.5 L768.9,371.5 L769.4,314.1 L769.5,299.9 L770,231.2 L770.1,245.9 L770.6,313.5 L770.7,328.7 L771.3,408.8 L771.4,418.4 L771.9,419.1 L772.4,420.5 L772.5,417.8 L773.1,404.2 L773.7,389.3 L773.7,390.3 L774.3,406.1 L774.5,410.1 L774.9,414.1 L775.5,417.7 L776,422.6 L776.1,423 L776.7,425.7 L777.3,427.8 L777.7,431 L777.9,432.3 L778.5,434.6 L779.1,437.6 L779.4,439.3 L779.7,439.3 L780.3,439.3 L780.9,439.3 L781.5,439.3 L782.1,439.3 L782.7,439.3 L783.3,439.3 L783.9,439.3 L784.5,439.3 L785,439.3 L785.6,438.6 L786.2,437.8 L786.8,436.5 L787.4,437.4 L787.5,436.2 L788,432.3 L788.6,427.8 L788.8,426.8 L789.2,423.2 L789.8,419.8 L790.1,416.3 L790.4,415.7 L791,412.4 L791.1,412.2 L791.6,404.5 L792.2,391.9 L792.4,387.2 L792.8,368 L793.3,341.1 L793.4,337.1 L793.7,328.2 L794,336.8 L794.3,347.3 L794.6,350.4 L795.2,359.5 L795.2,359.9 L795.8,361.1 L796.4,363.8 L796.5,364.1 L797,374.5 L797.5,387.1 L797.6,390.3 L798.2,400.3 L798.7,410.1 L798.8,411.4 L799.4,414.4 L799.7,416.3 L800,416.1 L800.6,416.5 L801.2,414.7 L801.4,415.3 L801.8,419.9 L802.4,426.2 L802.7,428.9 L803,432.3 L803.6,436.7 L803.9,439.3 L804.2,439.3 L804.8,439.3 L805.4,439.3 L806,439.3 L806.6,439.3 L807.2,439.3 L807.8,439.3 L808.4,439.3 L809,439.3 L809.6,439.3 L810.2,439.3 L810.8,439.3 L811.4,439.3 L812,439.3 L812.6,439.3 L813.2,439.3 L813.6,439.3 L814.2,438.6 L814.8,438 L815.4,437.3 L816,436.2 L816.4,436.2 L816.6,435 L817.2,429.9 L817.7,426.7 L817.8,426.6 L818.4,421 L819,416.3 L819,416.3 L819.6,414.1 L820.2,413.2 L820.8,412.4 L821.2,412.1 L821.4,407.6 L822,395 L822.4,386.9 L822.6,375.1 L823.2,343.6 L823.3,341.4 L823.7,328.1 L823.8,332.5 L824.3,347.4 L824.4,349.5 L825,358.5 L825.2,359.9 L825.6,360.3 L826.2,362.7 L826.5,364.3 L826.8,373.2 L827.4,387.2 L827.4,387.1 L828,399.4 L828.6,410 L828.6,410.5 L829.2,413.8 L829.6,416.3 L829.8,416.6 L830.4,416.2 L831,415.7 L831.3,415.3 L831.6,418.3 L832.2,425.6 L832.6,428.9 L832.8,431.5 L833.4,435.3 L833.9,439.3 L834,439.3 L834.6,439.3 L835.2,439.3 L835.8,439.3 L836.4,439.3 L837,439.3 L837.6,439.3 L838.2,439.3 L838.8,439.3 L839.4,439.3 L840,439.3 L840.6,439.3 L841.2,439.3 L841.8,439.3 L842.3,439.3 L842.9,439.3 L843.5,439.3 L844.1,439.3 L844.7,439.3 L844.8,439.3 L845.3,437.8 L845.9,435.2 L846.2,435.1 L846.5,433.6 L847.1,430 L847.4,428.9 L847.7,428.4 L848.3,425.7 L848.6,425.6 L848.9,422.1 L849.3,416.2 L849.5,410.6 L849.9,398.4 L850.1,390 L850.7,355.5 L850.9,347 L851.3,304.8 L851.7,267.2 L851.9,256.7 L852.3,234.3 L852.5,245.4 L852.9,265 L853.1,281.3 L853.7,328.1 L853.9,342.9 L854.3,362.6 L854.9,389.8 L855,392.9 L855.5,404.3 L856,413.6 L856.1,415 L856.7,417 L856.7,417.3 L857.3,418.2 L857.8,417.5 L857.9,416.7 L858.5,418.2 L859.1,418.5 L859.4,418.7 L859.7,421 L860.1,424.6 L860.3,424.8 L860.9,427.8 L860.9,427.3 L861.5,431 L861.6,430.9 L862.1,435.8 L862.6,439.3 L862.7,439.3 L863.3,439.3 L863.9,439.3 L864.5,439.3 L865.1,439.3 L865.7,439.3 L866.3,439.3 L866.9,439.3 L867.5,439.3 L868.1,439.3 L868.7,439.3 L869.3,439.3 L869.9,439.3 L870.5,439.3 L871,439.3 L871.6,439.3 L872.2,439.3 L872.8,439.3 L873.4,439.3 L873.6,439.3 L874,438.1 L874.6,437.3 L875,435.1 L875.2,434.3 L875.8,430.5 L876.2,428.8 L876.4,427.2 L877,425.7 L877.3,425.2 L877.6,421.4 L878,415.9 L878.2,411.3 L878.7,400.4 L878.8,395.1 L879.4,362.7 L879.6,351.7 L880,315.7 L880.4,275.4 L880.6,266.6 L881,244.5 L881.2,253.9 L881.6,273.6 L881.8,287.9 L882.4,331.9 L882.6,347.5 L883,364 L883.6,390.1 L883.7,395.1 L884.2,404 L884.7,413.3 L884.8,414.6 L885.3,416.7 L885.4,416.2 L886,416.1 L886.4,417.1 L886.6,417.1 L887.2,418 L887.8,418.2 L888,418.4 L888.4,421.9 L888.8,424.2 L889,424.7 L889.5,427.8 L889.6,427 L890.2,430.8 L890.2,431 L890.8,435.3 L891.2,439.3 L891.4,439.3 L892,439.3 L892.6,439.3 L893.2,439.3 L893.8,439.3 L894.4,439.3 L895,439.3 L895.6,439.3 L896.2,439.3 L896.8,439.3 L897.4,439.3 L898,439.3 L898.6,439.3 L899.2,439.3 L899.6,439.3 L900.2,439.3 L900.8,439.3 L901.4,439.3 L902,439.3 L902.3,439.3 L902.6,438.4 L903.2,437.5 L903.8,434.3 L903.9,435.1 L904.4,431.1 L905,428 L905.1,426.8 L905.6,421.7 L906.2,414.3 L906.4,412.2 L906.8,411.4 L907.4,410.4 L908,409.9 L908.6,377.1 L908.9,364 L909.2,353 L909.7,341.5 L909.8,345.6 L910.4,361.9 L911,359.8 L911.5,357.9 L911.6,363.1 L912.2,383.9 L912.4,389.1 L912.8,388.2 L913.4,384.4 L913.5,385 L914,385.3 L914.6,385.8 L914.8,386.1 L915.2,403.4 L915.7,422.5 L915.8,424 L916.4,425.9 L917,429 L917.6,433 L917.6,432.6 L918.2,435.3 L918.8,437.8 L919.2,439.3 L919.4,439.3 L920,439.3 L920.6,439.3 L921.2,439.3 L921.8,439.3 L922.4,439.3 L923,439.3 L923.6,439.3 L924.2,439.3 L924.8,439.3 L925.4,439.3 L926,439.3 L926.6,439.3 L927.2,439.3 L927.3,439.3 L927.3,439.3 L68.3,439.3 Z" fill="#7eb26d" fill-opacity="0.8" stroke="none"/><path d="M68.3,439.3 L68.9,439.3 L69.4,439.3 L69.5,439.1 L70.1,437.6 L70.7,436 L71.1,435.1 L71.3,433.3 L71.9,431.6 L72.5,428.9 L73.1,427.2 L73.7,425.4 L73.9,425.1 L74.3,421.1 L74.7,415.7 L74.9,414 L75.5,409 L76.1,388 L76.6,371.1 L76.7,364.6 L77.3,330.5 L77.6,312 L77.9,302 L78.3,287.7 L78.5,295.1 L79,310.4 L79.1,314.6 L79.7,343.6 L80.2,368.1 L80.3,371.8 L80.9,386.3 L81.5,403.8 L82.1,407.5 L82.7,413.2 L83.3,415.4 L83.5,416.5 L83.9,416.4 L84.5,417.6 L84.8,416.9 L85.1,418.2 L85.7,417.5 L86.3,418.9 L86.7,418.2 L86.9,420.1 L87.5,423.9 L87.6,424 L88.1,427.1 L88.5,427.8 L88.7,428.7 L89.3,430.9 L89.9,435.2 L90.5,439.3 L91.1,439.3 L91.7,439.3 L92.3,439.3 L92.9,439.3 L93.5,439.3 L94.1,439.3 L94.7,439.3 L95.3,439.3 L95.9,439.3 L96.5,439.3 L97,439.3 L97.2,439.3 L97.6,438.3 L98.2,436.8 L98.8,435 L98.8,435.1 L99.4,432.8 L100,429.7 L100.2,428.8 L100.6,427.7 L101.2,425.7 L101.6,423.4 L101.8,420.8 L102.4,413.7 L102.4,414.1 L103,411.9 L103.2,412 L103.6,404.8 L104.2,394 L104.3,390.9 L104.8,372.1 L105.3,348.7 L105.4,347.7 L106,333.3 L106,331.6 L106.6,344.2 L106.7,347.8 L107.2,364.1 L107.8,383.8 L107.9,388.6 L108.4,397.7 L109,407.6 L109.2,412.5 L109.6,411.5 L110.2,412.8 L110.4,411.6 L110.8,413.8 L111.2,414.9 L111.4,414.1 L112,415.2 L112.5,415.3 L112.6,414.4 L113.2,416 L113.8,417.1 L114.3,416.6 L114.4,416.4 L115,420 L115.2,422.4 L115.6,424.8 L116.1,427.8 L116.2,428.8 L116.8,430.6 L116.9,431 L117.4,433 L118,438.2 L118.1,439.3 L118.6,439.3 L119.2,439.3 L119.8,439.3 L120.4,439.3 L121,439.3 L121.6,439.3 L122.2,439.3 L122.8,439.3 L123.4,439.3 L124,439.3 L124.6,439.3 L125.2,439.3 L125.6,439.3 L126.2,439.3 L126.8,439.3 L126.9,439.3 L127.4,438 L128,437.3 L128.6,435.1 L128.6,435.4 L129.2,433 L129.8,430.4 L130,428.9 L130.4,426.5 L131,425.6 L131.4,423.8 L131.6,420.3 L132.1,414.4 L132.2,414.1 L132.8,411.8 L132.9,410.6 L133.4,393.7 L134,374.6 L134,374.8 L134.6,339.8 L135,319.2 L135.2,312.3 L135.7,296.2 L135.8,300.4 L136.4,317.7 L136.4,320.1 L137,347.5 L137.6,371.8 L137.6,372.5 L138.2,388.4 L138.8,405.1 L138.9,405.4 L139.4,407.8 L140,412.4 L140,411.9 L140.6,414.6 L140.8,415.3 L141.2,414.6 L141.8,415.3 L142.1,415.7 L142.4,416.7 L143,415.3 L143.6,417.3 L144,416.9 L144.2,419 L144.8,421.8 L144.9,422.8 L145.4,426.2 L145.8,427.8 L146,429.2 L146.6,431 L146.6,432.3 L147.2,436.5 L147.8,439.3 L147.8,439.3 L148.4,439.3 L149,439.3 L149.6,439.3 L150.2,439.3 L150.8,439.3 L151.4,439.3 L152,439.3 L152.6,439.3 L153.2,439.3 L153.8,439.3 L154.3,439.3 L154.9,439.3 L155,439.3 L155.5,437.9 L156.1,437 L156.6,435.1 L156.7,434.6 L157.3,432.3 L157.9,429.4 L158,428.9 L158.5,426.3 L159.1,425.4 L159.4,424.5 L159.7,420.5 L160.2,415.2 L160.3,414 L160.9,413.9 L161,413 L161.5,398.8 L162,383.6 L162.1,379.3 L162.7,350.1 L163,335.5 L163.3,327.7 L163.7,315.7 L163.9,321.8 L164.4,334.4 L164.5,338.2 L165.1,361.7 L165.6,381.3 L165.7,384.8 L166.3,396.5 L166.8,409.3 L166.9,408.7 L167.5,411 L168,412.6 L168.1,413.1 L168.7,416.4 L168.8,416 L169.3,417.1 L169.9,415.4 L170.1,416.4 L170.5,417.2 L171.1,416.7 L171.7,418 L172,417.7 L172.3,419.3 L172.8,423.5 L172.9,423.6 L173.5,427.2 L173.7,427.8 L174.1,430 L174.5,431 L174.7,431.9 L175.3,437.5 L175.7,439.3 L175.9,439.3 L176.5,439.3 L177.1,439.3 L177.7,439.3 L178.3,439.3 L178.9,439.3 L179.5,439.3 L180.1,439.3 L180.7,439.3 L181.3,439.3 L181.9,439.3 L182.5,439.3 L183,439.3 L183.6,439.3 L184.2,439.3 L184.3,439.3 L184.8,438.1 L185.4,436.5 L186,435.1 L186.6,431.6 L187.2,429.4 L187.3,428.9 L187.8,428.4 L188.4,425.9 L188.7,426 L189,423.5 L189.5,416.6 L189.6,416.9 L190.2,411.4 L190.3,410 L190.8,393.2 L191.3,373.7 L191.4,372.9 L192,337.7 L192.3,316.6 L192.6,308.4 L193,293.4 L193.2,298.6 L193.7,315.5 L193.8,320 L194.4,347.9 L194.9,370.8 L195,372.9 L195.6,388.9 L196.1,404.9 L196.2,404.9 L196.8,409.6 L197.3,414.1 L197.4,414.3 L198,417.7 L198.1,417.5 L198.6,418.6 L199.2,418.8 L199.3,417.9 L199.8,417.3 L200.4,418.2 L201,418 L201.2,419.2 L201.6,422.6 L202.1,425 L202.2,425 L202.8,427.2 L203,427.8 L203.4,429 L203.7,430.9 L204,432.9 L204.6,435.8 L204.9,439.3 L205.2,439.3 L205.8,439.3 L206.4,439.3 L207,439.3 L207.6,439.3 L208.2,439.3 L208.8,439.3 L209.4,439.3 L210,439.3 L210.6,439.3 L211.2,439.3 L211.6,439.3 L212.2,439.3 L212.8,439.3 L213.4,439.3 L213.4,439.1 L214,437.6 L214.6,436 L215,435.1 L215.2,433.6 L215.8,430.5 L216.4,428.9 L216.4,428.3 L217,427.4 L217.6,426.2 L217.7,426.7 L218.2,419.7 L218.5,417.3 L218.8,413.2 L219.3,406.9 L219.4,400.8 L220,377.7 L220.3,366.8 L220.6,347.3 L221.2,309.3 L221.3,303.4 L221.8,283.4 L222,277.9 L222.4,292.4 L222.7,301.8 L223,320.5 L223.6,352 L223.8,363.4 L224.2,375.5 L224.8,393.3 L225.1,401.7 L225.4,405.2 L226,413 L226.3,414.8 L226.6,416 L227,418.1 L227.2,417.1 L227.8,417.6 L228.3,418.5 L228.4,418.1 L229,419.2 L229.6,418.9 L230.2,419.8 L230.2,420.2 L230.8,424.5 L231,425.6 L231.4,425.9 L231.9,427.8 L232,429.2 L232.6,430.3 L232.7,430.9 L233.2,435.9 L233.8,439.2 L233.8,439.3 L234.4,439.3 L235,439.3 L235.6,439.3 L236.2,439.3 L236.8,439.3 L237.4,439.3 L238,439.3 L238.6,439.3 L239.2,439.3 L239.8,439.3 L240.3,439.3 L240.9,439.3 L241.5,439.3 L242.1,439.3 L242.1,439.3 L242.7,437.8 L243.3,436.3 L243.8,435.1 L243.9,435 L244.5,431.2 L245.1,428.9 L245.7,426.9 L246.3,424.7 L246.5,424.5 L246.9,418.1 L247.2,415.1 L247.5,413.3 L248,408.4 L248.1,405.8 L248.7,383.5 L249.1,370 L249.3,354.7 L249.9,318.4 L250,310.4 L250.5,293.5 L250.7,285.7 L251.1,298.5 L251.4,308.6 L251.7,324.8 L252.3,355.5 L252.5,367 L252.9,376.9 L253.5,395.5 L253.8,403.4 L254.1,405.5 L254.7,411.3 L254.9,412.5 L255.3,414.3 L255.7,415.9 L255.9,415.3 L256.5,415.3 L257,416.3 L257.1,415.6 L257.7,417.1 L258.3,417.1 L258.8,417.6 L258.9,418.6 L259.5,423 L259.7,423.4 L260.1,425.6 L260.5,427.8 L260.7,427.8 L261.3,430.2 L261.3,430.9 L261.9,434.8 L262.5,439.3 L262.5,439.3 L263.1,439.3 L263.7,439.3 L264.3,439.3 L264.9,439.3 L265.5,439.3 L266.1,439.3 L266.7,439.3 L267.3,439.3 L267.9,439.3 L268.5,439.3 L269,439.3 L269.6,439.3 L270.2,439.3 L270.8,439.3 L271.4,437.8 L272,436.7 L272.4,435.1 L272.6,435 L273.2,431.6 L273.7,428.9 L273.8,429.2 L274.4,426.7 L275,423.7 L275.1,423 L275.6,416.8 L275.8,413.6 L276.2,411.6 L276.6,408.7 L276.8,403.6 L277.4,380.9 L277.7,370.7 L278,351.2 L278.6,315.1 L278.6,311.3 L279.2,292.5 L279.3,286.9 L279.8,303.8 L280,309.7 L280.4,329 L281,360.9 L281.1,367.5 L281.6,380.1 L282.2,397.7 L282.4,403.6 L282.8,406.6 L283.4,409.5 L283.5,411.1 L284,414.1 L284.3,414.5 L284.6,415.3 L285.2,414.8 L285.5,414.9 L285.8,416 L286.4,414.8 L287,416.4 L287.4,416.1 L287.6,418.3 L288.2,422.6 L288.2,422 L288.8,425.4 L289.1,427.8 L289.4,429.1 L289.8,431 L290,431.6 L290.6,435.9 L291,439.3 L291.2,439.3 L291.8,439.3 L292.4,439.3 L293,439.3 L293.6,439.3 L294.2,439.3 L294.8,439.3 L295.4,439.3 L296,439.3 L296.6,439.3 L297.2,439.3 L297.6,439.3 L298.2,439.3 L298.8,439.3 L299.2,439.3 L299.4,438.7 L300,436.2 L300.6,435.3 L300.8,435.1 L301.2,433.9 L301.8,430.5 L302.2,428.8 L302.4,428.5 L303,426.5 L303.5,423.6 L303.6,422.1 L304.2,414.2 L304.3,414.2 L304.8,410.6 L305,408.3 L305.4,394.1 L306,371.9 L306.1,370.1 L306.6,334.5 L307,309.7 L307.2,302.3 L307.7,285.4 L307.8,289.7 L308.4,308.3 L308.4,311.3 L309,342.8 L309.5,366.6 L309.6,369.9 L310.2,387.3 L310.7,403.1 L310.8,404.8 L311.4,407.4 L311.9,411.7 L312,411.9 L312.6,415.7 L312.7,415 L313.2,415.3 L313.8,415.2 L313.9,415.5 L314.4,415 L315,416.5 L315.6,416.5 L315.7,416.7 L316.2,419.5 L316.6,422.6 L316.8,423.6 L317.4,427.8 L317.4,426.9 L318,430.4 L318.2,431 L318.6,433.9 L319.2,438.6 L319.3,439.3 L319.8,439.3 L320.4,439.3 L321,439.3 L321.6,439.3 L322.2,439.3 L322.8,439.3 L323.4,439.3 L324,439.3 L324.6,439.3 L325.2,439.3 L325.8,439.3 L326.3,439.3 L326.9,439.3 L327.5,439.3 L328.1,439.3 L328.3,439.3 L328.7,438.2 L329.3,436.2 L329.9,435.1 L329.9,434.4 L330.5,431.9 L331.1,428.9 L331.2,428.9 L331.7,428.4 L332.3,425.8 L332.5,426.1 L332.9,420.5 L333.3,416.7 L333.5,413.6 L334,409.2 L334.1,407 L334.7,384.8 L335.1,371.2 L335.3,358.5 L335.9,320 L336,312.7 L336.5,294.8 L336.7,288.4 L337.1,302.4 L337.4,311 L337.7,329 L338.3,358.5 L338.5,368.4 L338.9,379.9 L339.5,396.7 L339.7,403.9 L340.1,407.3 L340.7,413.7 L340.9,414.2 L341.3,415.5 L341.6,417.6 L341.9,418.6 L342.5,417.2 L342.9,418 L343.1,418.8 L343.7,418.9 L344.3,418.4 L344.7,419.2 L344.9,421.7 L345.5,425.8 L345.5,425.1 L346.1,427 L346.4,427.8 L346.7,428.8 L347.1,431 L347.3,431.6 L347.9,436.3 L348.3,439.3 L348.5,439.3 L349.1,439.3 L349.7,439.3 L350.3,439.3 L350.9,439.3 L351.5,439.3 L352.1,439.3 L352.7,439.3 L353.3,439.3 L353.9,439.3 L354.5,439.3 L355,439.3 L355.6,439.3 L356.2,439.3 L356.8,439.3 L356.9,439.3 L357.4,438.1 L358,436.6 L358.5,435.1 L358.6,434 L359.2,432.9 L359.8,429.8 L359.8,428.9 L360.4,426.5 L361,424.3 L361.2,423 L361.6,417.4 L361.9,413.6 L362.2,411.4 L362.7,408.1 L362.8,404.1 L363.4,380.8 L363.7,369.1 L364,351.5 L364.6,313.3 L364.6,308.3 L365.2,288.5 L365.3,283.3 L365.8,299.3 L366,306.8 L366.4,327.5 L367,360.4 L367.1,366 L367.6,379.8 L368.2,397.6 L368.3,402.8 L368.8,406.2 L369.4,410.5 L369.4,411.1 L370,414.1 L370.2,414.5 L370.6,414.5 L371.2,414.8 L371.4,414.9 L371.8,414.9 L372.4,416.5 L373,415 L373.2,416.2 L373.6,418.6 L374.1,422 L374.2,423 L374.8,426.3 L374.9,427.8 L375.4,429.6 L375.7,431 L376,433.3 L376.6,437.7 L376.8,439.3 L377.2,439.3 L377.8,439.3 L378.4,439.3 L379,439.3 L379.6,439.3 L380.2,439.3 L380.8,439.3 L381.4,439.3 L382,439.3 L382.6,439.3 L383.2,439.3 L383.6,439.3 L384.2,439.3 L384.8,439.3 L385.4,439.3 L385.7,439.3 L386,438.3 L386.6,437.7 L387.2,435.1 L387.3,435.1 L387.8,432.6 L388.4,428.6 L388.6,428.8 L389,426.3 L389.6,425.5 L389.9,424.1 L390.2,419.7 L390.6,414.7 L390.8,413.5 L391.4,407.5 L391.4,405.4 L392,381.4 L392.4,367.8 L392.6,351.8 L393.2,312.9 L393.3,305.6 L393.8,286.9 L394,280.3 L394.4,296.8 L394.7,304.2 L395,324.4 L395.6,356.1 L395.8,364.5 L396.2,379.6 L396.8,396.8 L397,402.3 L397.4,407.2 L398,412.1 L398.1,412.2 L398.6,415.1 L398.9,415.5 L399.2,415.3 L399.8,416.2 L400.1,416 L400.4,416.5 L401,416.4 L401.6,417.9 L401.9,417.2 L402.2,419.4 L402.7,423 L402.8,424.6 L403.4,427.2 L403.5,427.8 L404,430.4 L404.3,430.9 L404.6,434.2 L405.2,438 L405.4,439.3 L405.8,439.3 L406.4,439.3 L407,439.3 L407.6,439.3 L408.2,439.3 L408.8,439.3 L409.4,439.3 L410,439.3 L410.6,439.3 L411.2,439.3 L411.8,439.3 L412.3,439.3 L412.9,439.3 L413.5,439.3 L414.1,439.3 L414.4,439.3 L414.7,438.6 L415.3,437.1 L415.9,435.7 L416,435.1 L416.5,432.9 L417.1,429.8 L417.3,428.9 L417.7,428.3 L418.3,426.3 L418.6,424.7 L418.9,420.8 L419.4,415.4 L419.5,414.4 L420.1,412.2 L420.1,411.9 L420.7,391.3 L421.1,378 L421.3,367.5 L421.9,332.8 L422.1,325.1 L422.5,310.7 L422.7,303.7 L423.1,315.7 L423.4,324.1 L423.7,339.6 L424.3,367.2 L424.5,375.4 L424.9,387.3 L425.5,402.9 L425.7,406.9 L426.1,408.3 L426.7,413 L426.8,412.9 L427.3,414.1 L427.5,416.2 L427.9,415.5 L428.5,417.3 L428.7,416.6 L429.1,417.4 L429.7,416.8 L430.3,418.2 L430.5,417.9 L430.9,421.5 L431.3,423.7 L431.5,423.8 L432.1,427.6 L432.2,427.8 L432.7,429.4 L432.9,430.9 L433.3,434.6 L433.9,438.3 L434,439.3 L434.5,439.3 L435.1,439.3 L435.7,439.3 L436.3,439.3 L436.9,439.3 L437.5,439.3 L438.1,439.3 L438.7,439.3 L439.3,439.3 L439.9,439.3 L440.5,439.3 L441,439.3 L441.6,439.3 L442.2,439.3 L442.8,439.3 L443.1,439.3 L443.4,438.5 L444,436.5 L444.6,436.3 L444.7,435.1 L445.2,433.2 L445.8,429.3 L445.9,428.9 L446.4,426.8 L447,425 L447.2,425.3 L447.6,421.8 L448,415.9 L448.2,414 L448.7,409 L448.8,406.3 L449.4,384.5 L449.7,371 L450,355.2 L450.6,317.9 L450.7,312.1 L451.2,293.4 L451.3,287.7 L451.8,305.1 L452,310.7 L452.4,333.5 L453,363.6 L453.1,367.8 L453.6,383.4 L454.2,401.1 L454.3,403.8 L454.8,409 L455.4,413.4 L455.4,414.1 L456,416.8 L456.1,416.7 L456.6,416.2 L457.2,416.1 L457.3,417.2 L457.8,416.6 L458.4,418.8 L459,419.3 L459.1,418.4 L459.6,421.1 L459.9,424.3 L460.2,425.5 L460.7,427.8 L460.8,427.5 L461.4,430.9 L461.5,430.9 L462,434.9 L462.6,439.3 L463.2,439.3 L463.8,439.3 L464.4,439.3 L465,439.3 L465.6,439.3 L466.2,439.3 L466.8,439.3 L467.4,439.3 L468,439.3 L468.6,439.3 L469.2,439.3 L469.6,439.3 L470.2,439.3 L470.8,439.3 L471.3,439.3 L471.4,439 L472,437.4 L472.6,435.9 L472.9,435.1 L473.2,433.2 L473.8,431.5 L474.2,428.9 L474.4,427.6 L475,425.4 L475.5,424.8 L475.6,423.2 L476.2,415.4 L476.2,415.1 L476.8,409.1 L476.9,408.8 L477.4,389.8 L477.9,370.7 L478,364.9 L478.6,326 L478.9,311.1 L479.2,296.6 L479.5,286.7 L479.8,299.7 L480.1,309.4 L480.4,324.3 L481,356.1 L481.2,367.7 L481.6,379 L482.2,396.8 L482.4,403.6 L482.8,406.7 L483.4,412.3 L483.5,412.9 L484,415 L484.3,416.3 L484.6,416.4 L485.2,415.6 L485.5,416.7 L485.8,416.3 L486.4,417.9 L487,417 L487.2,417.9 L487.6,420.5 L488,423.8 L488.2,424.2 L488.8,427 L488.9,427.8 L489.4,430.5 L489.6,431 L490,433.5 L490.6,438.8 L490.7,439.3 L491.2,439.3 L491.8,439.3 L492.4,439.3 L493,439.3 L493.6,439.3 L494.2,439.3 L494.8,439.3 L495.4,439.3 L496,439.3 L496.6,439.3 L497.2,439.3 L497.8,439.3 L498.3,439.3 L498.9,439.3 L499.5,439.3 L500.1,439.3 L500.2,439.3 L500.7,437.9 L501.3,435.9 L501.7,435.1 L501.9,433.7 L502.5,430.8 L503,428.8 L503.1,428.6 L503.7,425.4 L504.3,423.3 L504.3,424 L504.9,415.7 L505,413.9 L505.5,410.6 L505.7,408.8 L506.1,396.2 L506.7,372.7 L506.7,370.9 L507.3,334.2 L507.7,311.1 L507.9,301.7 L508.3,287.1 L508.5,294.8 L508.9,309.6 L509.1,317.6 L509.7,350 L510,367.7 L510.3,376.2 L510.9,393.8 L511.2,403.5 L511.5,405.5 L512.1,409.9 L512.3,411.4 L512.7,413.4 L513,414.7 L513.3,413.8 L513.9,414.8 L514.2,415.2 L514.5,414.9 L515.1,415.3 L515.7,415.2 L516,416.4 L516.3,419.9 L516.8,422.3 L516.9,422.9 L517.5,426.7 L517.6,427.8 L518.1,430.5 L518.3,431 L518.7,434 L519.3,438.4 L519.4,439.3 L519.9,439.3 L520.5,439.3 L521.1,439.3 L521.7,439.3 L522.3,439.3 L522.9,439.3 L523.5,439.3 L524.1,439.3 L524.7,439.3 L525.3,439.3 L525.9,439.3 L526.5,439.3 L527,439.3 L527.6,438.5 L528.2,437.6 L528.8,437.5 L529.2,436.2 L529.4,435.5 L530,432 L530.6,427.5 L530.6,426.8 L531.2,420.7 L531.8,415.9 L532,414.2 L532.4,414.1 L533,412.9 L533.6,413.5 L534.2,412.4 L534.8,413 L534.9,413 L535.4,389.7 L535.8,370.5 L536,369 L536.6,360.3 L536.7,358.9 L537.2,365.8 L537.4,370.3 L537.8,369.3 L538.2,366.3 L538.4,374.9 L538.9,397.4 L539,399.7 L539.6,408.3 L540,414.2 L540.2,415.2 L540.8,415.4 L541.4,416 L542,418.1 L542.1,417.4 L542.6,418.2 L543.2,421.7 L543.8,423.9 L544,424.7 L544.4,426.4 L545,429.7 L545.6,432.6 L545.8,433 L546.2,434.1 L546.8,436.4 L547.4,438.6 L547.6,439.3 L548,439.3 L548.6,439.3 L549.2,439.3 L549.8,439.3 L550.4,439.3 L551,439.3 L551.6,439.3 L552.2,439.3 L552.8,439.3 L553.4,439.3 L554,439.3 L554.6,439.3 L555.2,439.3 L555.6,439.3 L556.2,439.3 L556.8,439.3 L557.4,439.3 L558,439.3 L558,439.2 L558.6,437.5 L559.2,435.4 L559.5,435.1 L559.8,434 L560.4,431.6 L560.8,428.9 L561,428.8 L561.6,427.7 L562,425.8 L562.2,423.9 L562.8,416.4 L562.8,414.6 L563.4,405.8 L563.5,404.9 L564,379.7 L564.5,361.9 L564.6,348.7 L565.2,305.5 L565.4,294.8 L565.8,273.3 L566,267.3 L566.4,284.3 L566.6,293 L567,318.7 L567.6,353.3 L567.7,358.3 L568.2,377.2 L568.8,398.2 L568.9,399.6 L569.4,406 L570,413.9 L570,414.8 L570.6,417 L570.7,417.2 L571.2,416.5 L571.8,417.2 L571.8,417.7 L572.4,418.1 L573,417.5 L573.6,418.9 L573.6,418.8 L574.2,423.6 L574.4,424.7 L574.8,427.3 L575.2,427.8 L575.4,428.7 L575.9,430.9 L576,432.1 L576.6,437.3 L577,439.3 L577.2,439.3 L577.8,439.3 L578.4,439.3 L579,439.3 L579.6,439.3 L580.2,439.3 L580.8,439.3 L581.4,439.3 L582,439.3 L582.6,439.3 L583.2,439.3 L583.8,439.3 L584.3,439.3 L584.9,438.7 L585.5,438 L586.1,437.4 L586.7,436.7 L587.2,436.2 L587.3,436.4 L587.9,431.6 L588.5,426.9 L588.6,426.7 L589.1,421.9 L589.7,416.7 L589.9,414.2 L590.3,413.9 L590.9,413.9 L591.5,412.8 L592.1,413 L592.7,411.8 L593.3,411.5 L593.9,411.7 L593.9,412 L594.5,384.9 L594.8,368.8 L595.1,378.5 L595.7,396.2 L595.7,397.6 L596.3,401 L596.6,403.8 L596.9,400.5 L597.5,394.9 L598.1,388.8 L598.2,387.1 L598.7,363.4 L599.3,335.1 L599.3,335 L599.9,363 L600.2,376.7 L600.5,383.7 L601.1,397.5 L601.1,397.2 L601.7,405.4 L602.3,412.3 L602.5,414.2 L602.9,413.8 L603.5,414.8 L604.1,415.8 L604.7,417.4 L604.7,418.5 L605.3,420.9 L605.9,422.9 L606.5,424.7 L606.5,425.1 L607.1,427.5 L607.7,431.4 L608.2,433 L608.3,433.2 L608.9,436.2 L609.5,437.5 L610,439.3 L610.1,439.3 L610.7,439.3 L611.3,439.3 L611.9,439.3 L612.5,439.3 L613,439.3 L613.6,439.3 L614.2,439.3 L614.8,439.3 L615.4,439.3 L616,439.3 L616.6,439.3 L617.2,439.3 L617.8,439.3 L618.4,439.3 L619,439.3 L619.6,439.3 L620.1,439.3 L620.2,439.1 L620.8,437.4 L621.4,435.4 L621.6,435.1 L622,433.1 L622.6,430 L622.8,428.9 L623.2,428.5 L623.8,427.2 L624.1,426.6 L624.4,423.5 L624.8,417.2 L625,416.4 L625.5,412.5 L625.6,410 L626.2,389.3 L626.5,379 L626.8,363.4 L627.4,327.3 L628,307.4 L628,305.8 L628.6,323.5 L628.6,325.8 L629.2,351.7 L629.7,376.6 L629.8,378.2 L630.4,395.4 L630.8,407.3 L631,408.4 L631.6,412.9 L631.9,414.7 L632.2,415.3 L632.6,418.1 L632.8,418.4 L633.4,418 L633.8,418.5 L634,417.6 L634.6,419.4 L635.2,419.4 L635.5,419.7 L635.8,421.5 L636.3,425.6 L636.4,425 L637,427.7 L637.1,427.8 L637.6,430.3 L637.8,430.9 L638.2,434.9 L638.8,438.8 L638.8,439.3 L639.4,439.3 L640,439.3 L640.6,439.3 L641.2,439.3 L641.6,439.3 L642.2,439.3 L642.8,439.3 L643.4,439.3 L643.8,439.3 L644,438.8 L644.6,438 L645.2,436.3 L645.3,435.1 L645.8,432.5 L646.4,429.6 L646.6,428.9 L647,426.4 L647.6,424.5 L647.8,423.3 L648.2,417.1 L648.5,414 L648.8,410.8 L649.2,405 L649.4,396.4 L650,369 L650.2,362.3 L650.6,329.9 L651.1,295.8 L651.2,289.1 L651.7,268.3 L651.8,273.6 L652.3,294.1 L652.4,301 L653,338.7 L653.4,359 L653.6,369 L654.2,390 L654.5,399.7 L654.8,402.8 L655.4,410.1 L655.6,411.4 L656,414.4 L656.3,414.8 L656.6,414.5 L657.2,415 L657.4,415.2 L657.8,414.6 L658.4,415 L659,415.5 L659.1,416.5 L659.6,420.4 L659.9,422.3 L660.2,424 L660.7,427.8 L660.8,428.8 L661.4,430.9 L661.4,431.6 L662,436.1 L662.5,439.3 L662.6,439.3 L663.2,439.3 L663.8,439.3 L664.4,439.3 L665,439.3 L665.6,439.3 L666.2,439.3 L666.8,439.3 L667.4,439.3 L668,439.3 L668.6,439.3 L669.2,439.3 L669.8,439.3 L670.3,439.3 L670.9,438.6 L671.5,438 L672.1,437.3 L672.7,435.9 L673.2,436.2 L673.3,435.8 L673.9,431.3 L674.5,426.8 L674.5,427 L675.1,421.3 L675.7,415.5 L675.8,414.2 L676.3,414.2 L676.9,414.3 L677.5,413.2 L678.1,412.3 L678.7,412.5 L679.3,411.6 L679.5,412 L679.9,397.2 L680.4,380.9 L680.5,381 L681.1,377.8 L681.6,376.7 L681.7,374.4 L682.3,367.1 L682.3,367.7 L682.9,378.2 L683,378.7 L683.5,393.2 L683.9,403.8 L684.1,403.2 L684.7,401.7 L684.8,401.6 L685.3,384 L685.9,367.4 L685.9,367.4 L686.5,387.8 L686.8,397.4 L687.1,404.5 L687.7,414.2 L687.8,416.3 L688.3,416.7 L688.9,419.3 L689.5,420.4 L690,420.5 L690.1,420.7 L690.7,424.6 L691.3,430.6 L691.8,433 L691.9,433.2 L692.5,436.4 L693.1,437.8 L693.5,439.3 L693.7,439.3 L694.3,439.3 L694.9,439.3 L695.5,439.3 L696.1,439.3 L696.7,439.3 L697.3,439.3 L697.9,439.3 L698.5,439.3 L699,439.3 L699.6,438.7 L700.2,438 L700.8,437.4 L701.4,436.5 L702,436.1 L702,436.6 L702.6,432.3 L703.2,426.9 L703.3,426.8 L703.8,422.7 L704.4,417.4 L704.6,416.3 L705,415.9 L705.6,415.1 L705.9,414.2 L706.2,406 L706.8,390.6 L707.1,381.7 L707.4,388.7 L708,405.3 L708,405.9 L708.6,406.3 L709.2,407.2 L709.4,408 L709.8,399.4 L710.4,388.4 L711,376.7 L711,375.3 L711.6,353.8 L712,338.7 L712.2,340.1 L712.7,347.4 L712.8,351.4 L713.4,387.3 L713.4,389.2 L714,392.4 L714.6,396.3 L714.6,397.5 L715.2,396.4 L715.8,395.6 L715.9,395.5 L716.4,404.9 L716.9,416.2 L717,415.9 L717.6,417.9 L718.2,419.1 L718.8,420.9 L719,420.5 L719.4,422.9 L720,426.7 L720.6,432.3 L720.7,433.1 L721.2,436 L721.8,438.1 L722,439.3 L722.4,439.3 L723,439.3 L723.6,439.3 L724.2,439.3 L724.8,439.3 L725.4,439.3 L726,439.3 L726.6,439.3 L727.2,439.3 L727.6,439.3 L728.2,439.3 L728.8,439.3 L729.4,439.3 L730,439.3 L730,439.2 L730.6,437.5 L731.2,435.9 L731.5,435.1 L731.8,433.6 L732.4,429.1 L732.7,428.9 L733,429 L733.6,427.1 L733.9,426.1 L734.2,422.2 L734.6,416.8 L734.8,413.6 L735.3,409 L735.4,402 L736,379.5 L736.2,371.2 L736.6,344.3 L737.1,312.7 L737.2,306.7 L737.7,288.4 L737.8,293.4 L738.3,310.8 L738.4,317.6 L739,352.6 L739.3,368.2 L739.6,378.6 L740.2,397.4 L740.5,403.9 L740.8,408.2 L741.4,414.1 L741.5,414.2 L742,416.4 L742.2,417.6 L742.6,417.5 L743.2,418.5 L743.3,418 L743.8,419 L744.4,419.3 L745,419.3 L745,420.5 L745.6,423.8 L745.8,425.1 L746.2,427.2 L746.5,427.8 L746.8,429.1 L747.2,431 L747.4,432.1 L748,437.6 L748.3,439.3 L748.6,439.3 L749.2,439.3 L749.8,439.3 L750.4,439.3 L751,439.3 L751.6,439.3 L752.2,439.3 L752.8,439.3 L753.4,439.3 L754,439.3 L754.6,439.3 L755.2,439.3 L755.8,439.3 L756.3,439.3 L756.9,438.7 L757.5,438.1 L758.1,437.5 L758.7,437.5 L759.3,435.6 L759.5,436.1 L759.9,432.5 L760.5,429.3 L760.8,426.8 L761.1,424.9 L761.7,420.4 L762.3,417.7 L762.5,416.3 L762.9,416.3 L763.5,415.8 L764.1,412.9 L764.7,412.3 L765.3,412.3 L765.9,411 L766.5,410.1 L766.6,410.1 L767.1,405.2 L767.4,401.8 L767.7,401.2 L768.3,402.9 L768.6,403.5 L768.9,371.5 L769.4,314.1 L769.5,299.9 L770,231.2 L770.1,245.9 L770.6,313.5 L770.7,328.7 L771.3,408.8 L771.4,418.4 L771.9,419.1 L772.4,420.5 L772.5,417.8 L773.1,404.2 L773.7,389.3 L773.7,390.3 L774.3,406.1 L774.5,410.1 L774.9,414.1 L775.5,417.7 L776,422.6 L776.1,423 L776.7,425.7 L777.3,427.8 L777.7,431 L777.9,432.3 L778.5,434.6 L779.1,437.6 L779.4,439.3 L779.7,439.3 L780.3,439.3 L780.9,439.3 L781.5,439.3 L782.1,439.3 L782.7,439.3 L783.3,439.3 L783.9,439.3 L784.5,439.3 L785,439.3 L785.6,438.6 L786.2,437.8 L786.8,436.5 L787.4,437.4 L787.5,436.2 L788,432.3 L788.6,427.8 L788.8,426.8 L789.2,423.2 L789.8,419.8 L790.1,416.3 L790.4,415.7 L791,412.4 L791.1,412.2 L791.6,404.5 L792.2,391.9 L792.4,387.2 L792.8,368 L793.3,341.1 L793.4,337.1 L793.7,328.2 L794,336.8 L794.3,347.3 L794.6,350.4 L795.2,359.5 L795.2,359.9 L795.8,361.1 L796.4,363.8 L796.5,364.1 L797,374.5 L797.5,387.1 L797.6,390.3 L798.2,400.3 L798.7,410.1 L798.8,411.4 L799.4,414.4 L799.7,416.3 L800,416.1 L800.6,416.5 L801.2,414.7 L801.4,415.3 L801.8,419.9 L802.4,426.2 L802.7,428.9 L803,432.3 L803.6,436.7 L803.9,439.3 L804.2,439.3 L804.8,439.3 L805.4,439.3 L806,439.3 L806.6,439.3 L807.2,439.3 L807.8,439.3 L808.4,439.3 L809,439.3 L809.6,439.3 L810.2,439.3 L810.8,439.3 L811.4,439.3 L812,439.3 L812.6,439.3 L813.2,439.3 L813.6,439.3 L814.2,438.6 L814.8,438 L815.4,437.3 L816,436.2 L816.4,436.2 L816.6,435 L817.2,429.9 L817.7,426.7 L817.8,426.6 L818.4,421 L819,416.3 L819,416.3 L819.6,414.1 L820.2,413.2 L820.8,412.4 L821.2,412.1 L821.4,407.6 L822,395 L822.4,386.9 L822.6,375.1 L823.2,343.6 L823.3,341.4 L823.7,328.1 L823.8,332.5 L824.3,347.4 L824.4,349.5 L825,358.5 L825.2,359.9 L825.6,360.3 L826.2,362.7 L826.5,364.3 L826.8,373.2 L827.4,387.2 L827.4,387.1 L828,399.4 L828.6,410 L828.6,410.5 L829.2,413.8 L829.6,416.3 L829.8,416.6 L830.4,416.2 L831,415.7 L831.3,415.3 L831.6,418.3 L832.2,425.6 L832.6,428.9 L832.8,431.5 L833.4,435.3 L833.9,439.3 L834,439.3 L834.6,439.3 L835.2,439.3 L835.8,439.3 L836.4,439.3 L837,439.3 L837.6,439.3 L838.2,439.3 L838.8,439.3 L839.4,439.3 L840,439.3 L840.6,439.3 L841.2,439.3 L841.8,439.3 L842.3,439.3 L842.9,439.3 L843.5,439.3 L844.1,439.3 L844.7,439.3 L844.8,439.3 L845.3,437.8 L845.9,435.2 L846.2,435.1 L846.5,433.6 L847.1,430 L847.4,428.9 L847.7,428.4 L848.3,425.7 L848.6,425.6 L848.9,422.1 L849.3,416.2 L849.5,410.6 L849.9,398.4 L850.1,390 L850.7,355.5 L850.9,347 L851.3,304.8 L851.7,267.2 L851.9,256.7 L852.3,234.3 L852.5,245.4 L852.9,265 L853.1,281.3 L853.7,328.1 L853.9,342.9 L854.3,362.6 L854.9,389.8 L855,392.9 L855.5,404.3 L856,413.6 L856.1,415 L856.7,417 L856.7,417.3 L857.3,418.2 L857.8,417.5 L857.9,416.7 L858.5,418.2 L859.1,418.5 L859.4,418.7 L859.7,421 L860.1,424.6 L860.3,424.8 L860.9,427.8 L860.9,427.3 L861.5,431 L861.6,430.9 L862.1,435.8 L862.6,439.3 L862.7,439.3 L863.3,439.3 L863.9,439.3 L864.5,439.3 L865.1,439.3 L865.7,439.3 L866.3,439.3 L866.9,439.3 L867.5,439.3 L868.1,439.3 L868.7,439.3 L869.3,439.3 L869.9,439.3 L870.5,439.3 L871,439.3 L871.6,439.3 L872.2,439.3 L872.8,439.3 L873.4,439.3 L873.6,439.3 L874,438.1 L874.6,437.3 L875,435.1 L875.2,434.3 L875.8,430.5 L876.2,428.8 L876.4,427.2 L877,425.7 L877.3,425.2 L877.6,421.4 L878,415.9 L878.2,411.3 L878.7,400.4 L878.8,395.1 L879.4,362.7 L879.6,351.7 L880,315.7 L880.4,275.4 L880.6,266.6 L881,244.5 L881.2,253.9 L881.6,273.6 L881.8,287.9 L882.4,331.9 L882.6,347.5 L883,364 L883.6,390.1 L883.7,395.1 L884.2,404 L884.7,413.3 L884.8,414.6 L885.3,416.7 L885.4,416.2 L886,416.1 L886.4,417.1 L886.6,417.1 L887.2,418 L887.8,418.2 L888,418.4 L888.4,421.9 L888.8,424.2 L889,424.7 L889.5,427.8 L889.6,427 L890.2,430.8 L890.2,431 L890.8,435.3 L891.2,439.3 L891.4,439.3 L892,439.3 L892.6,439.3 L893.2,439.3 L893.8,439.3 L894.4,439.3 L895,439.3 L895.6,439.3 L896.2,439.3 L896.8,439.3 L897.4,439.3 L898,439.3 L898.6,439.3 L899.2,439.3 L899.6,439.3 L900.2,439.3 L900.8,439.3 L901.4,439.3 L902,439.3 L902.3,439.3 L902.6,438.4 L903.2,437.5 L903.8,434.3 L903.9,435.1 L904.4,431.1 L905,428 L905.1,426.8 L905.6,421.7 L906.2,414.3 L906.4,412.2 L906.8,411.4 L907.4,410.4 L908,409.9 L908.6,377.1 L908.9,364 L909.2,353 L909.7,341.5 L909.8,345.6 L910.4,361.9 L911,359.8 L911.5,357.9 L911.6,363.1 L912.2,383.9 L912.4,389.1 L912.8,388.2 L913.4,384.4 L913.5,385 L914,385.3 L914.6,385.8 L914.8,386.1 L915.2,403.4 L915.7,422.5 L915.8,424 L916.4,425.9 L917,429 L917.6,433 L917.6,432.6 L918.2,435.3 L918.8,437.8 L919.2,439.3 L919.4,439.3 L920,439.3 L920.6,439.3 L921.2,439.3 L921.8,439.3 L922.4,439.3 L923,439.3 L923.6,439.3 L924.2,439.3 L924.8,439.3 L925.4,439.3 L926,439.3 L926.6,439.3 L927.2,439.3 L927.3,439.3" fill="none" stroke="#7eb26d" stroke-width="2.7" stroke-linejoin="round" stroke-linecap="butt"/></g></g><text class="ax" x="61.4" y="442.4" text-anchor="end">0 W</text><text class="ax" x="61.4" y="390.2" text-anchor="end">25 W</text><text class="ax" x="61.4" y="338" text-anchor="end">50 W</text><text class="ax" x="61.4" y="285.8" text-anchor="end">75 W</text><text class="ax" x="61.4" y="233.6" text-anchor="end">100 W</text><text class="ax" x="61.4" y="181.4" text-anchor="end">125 W</text><text class="axx" x="151" y="456.3" text-anchor="middle">8/5</text><text class="axx" x="237" y="456.3" text-anchor="middle">8/8</text><text class="axx" x="323" y="456.3" text-anchor="middle">8/11</text><text class="axx" x="409" y="456.3" text-anchor="middle">8/14</text><text class="axx" x="495" y="456.3" text-anchor="middle">8/17</text><text class="axx" x="581" y="456.3" text-anchor="middle">8/20</text><text class="axx" x="667" y="456.3" text-anchor="middle">8/23</text><text class="axx" x="753" y="456.3" text-anchor="middle">8/26</text><text class="axx" x="839" y="456.3" text-anchor="middle">8/29</text><text class="axx" x="925" y="456.3" text-anchor="middle">9/1</text><clipPath id="c2"><rect x="999.7" y="176.3" width="870.0" height="265.4"/></clipPath><g stroke="rgba(255,255,255,0.13)" stroke-width="1" shape-rendering="crispEdges"><line x1="1084" y1="178.3" x2="1084" y2="439.3"/><line x1="1171" y1="178.3" x2="1171" y2="439.3"/><line x1="1257.9" y1="178.3" x2="1257.9" y2="439.3"/><line x1="1344.8" y1="178.3" x2="1344.8" y2="439.3"/><line x1="1431.8" y1="178.3" x2="1431.8" y2="439.3"/><line x1="1518.8" y1="178.3" x2="1518.8" y2="439.3"/><line x1="1605.7" y1="178.3" x2="1605.7" y2="439.3"/><line x1="1692.7" y1="178.3" x2="1692.7" y2="439.3"/><line x1="1779.6" y1="178.3" x2="1779.6" y2="439.3"/><line x1="1866.6" y1="178.3" x2="1866.6" y2="439.3"/><line x1="1000.7" y1="439.3" x2="1868.7" y2="439.3"/><line x1="1000.7" y1="387.1" x2="1868.7" y2="387.1"/><line x1="1000.7" y1="334.9" x2="1868.7" y2="334.9"/><line x1="1000.7" y1="282.7" x2="1868.7" y2="282.7"/><line x1="1000.7" y1="230.5" x2="1868.7" y2="230.5"/><line x1="1000.7" y1="178.3" x2="1868.7" y2="178.3"/></g><g clip-path="url(#c2)"><g transform="translate(0,0.8)"><path d="M1000.7,439.3 L1001.2,439.3 L1001.8,439.3 L1002.1,438.8 L1002.4,408.1 L1002.6,376.3 L1002.9,347.4 L1003.3,305.7 L1003.5,304.1 L1003.8,299.4 L1004,299 L1004.6,297.8 L1005.1,296.7 L1005.7,295.5 L1005.8,295.2 L1006.2,294.2 L1006.8,293 L1007.3,291.7 L1007.8,290.6 L1007.9,290.2 L1008.4,284.9 L1008.5,283.8 L1009,281.6 L1009.4,276.8 L1009.5,274.1 L1010.1,268.2 L1010.2,267.8 L1010.6,263.7 L1010.9,259.7 L1011.2,259.6 L1011.7,258 L1012,254 L1012.2,254.1 L1012.8,248.5 L1013.4,246.9 L1013.4,244.6 L1013.9,247.5 L1014.4,251 L1014.5,247.8 L1015,241.9 L1015.3,233.1 L1015.6,229.7 L1016.1,225.7 L1016.3,222.9 L1016.7,224 L1017.1,227 L1017.2,225.8 L1017.8,237 L1018,243.7 L1018.3,244.6 L1018.8,254.6 L1018.9,252.1 L1019.4,261.8 L1019.4,263.7 L1020,274.4 L1020.1,274.8 L1020.5,284 L1020.7,286.6 L1021.1,288.5 L1021.6,291.1 L1021.9,292.4 L1022.2,303.7 L1022.4,313.9 L1022.7,376.7 L1023,439.3 L1023.2,439.3 L1023.8,439.3 L1024.4,439.3 L1024.9,439.3 L1025.5,439.3 L1026,439.3 L1026.5,439.3 L1027.1,439.3 L1027.7,439.3 L1028.2,439.3 L1028.8,439.3 L1029.3,439.3 L1029.7,439.3 L1030.2,439.3 L1030.8,439.3 L1031.1,439.3 L1031.4,408.7 L1031.6,376.6 L1031.9,347.7 L1032.3,305.8 L1032.5,304.1 L1032.8,299.4 L1033,299.1 L1033.5,298.1 L1034.1,297.2 L1034.7,296.2 L1034.8,296 L1035.2,294.9 L1035.8,293.5 L1036.3,292.1 L1036.8,290.8 L1036.9,290.2 L1037.4,284.8 L1037.5,283.8 L1038,278.4 L1038.4,271.4 L1038.5,269.7 L1039,266.4 L1039.1,262 L1039.6,252.1 L1039.8,242.5 L1040.2,240.8 L1040.7,241.5 L1041,237.2 L1041.2,238.4 L1041.8,236.6 L1042.3,237.7 L1042.4,237.5 L1042.9,235 L1043.5,230.1 L1043.7,232.2 L1044,229.2 L1044.5,227.2 L1045,226 L1045.1,227.8 L1045.7,225.3 L1046.2,222.1 L1046.3,220.6 L1046.8,223.6 L1047.1,221.8 L1047.3,223.2 L1047.8,227.6 L1047.9,235.6 L1048.4,260.2 L1048.4,264.1 L1049,276.4 L1049,276 L1049.5,283.6 L1049.6,284.8 L1050,287.2 L1050.6,290 L1050.8,291.3 L1051.2,306.6 L1051.3,313.8 L1051.7,393.3 L1051.9,438.5 L1052.2,439.3 L1052.8,439.3 L1053.4,439.3 L1053.9,439.3 L1054.5,439.3 L1055,439.3 L1055.5,439.3 L1056.1,439.3 L1056.7,439.3 L1057.2,439.3 L1057.8,439.3 L1058.3,439.3 L1058.7,439.3 L1059.2,439.3 L1059.8,439.3 L1060.1,439.1 L1060.4,409.3 L1060.6,377.1 L1060.9,348 L1061.3,305.8 L1061.5,304.1 L1061.8,299.4 L1062,299 L1062.5,297.7 L1063.1,296.4 L1063.7,295.1 L1063.8,294.8 L1064.2,293.4 L1064.8,291.6 L1065.3,289.8 L1065.8,288.2 L1065.9,287.7 L1066.4,284.3 L1066.5,283.7 L1067,273.1 L1067.4,267.9 L1067.5,266.6 L1068,254 L1068.1,254.9 L1068.6,237.5 L1068.8,230.7 L1069.2,228.1 L1069.7,225.1 L1070,225.5 L1070.2,226.6 L1070.8,230 L1071.3,228.5 L1071.4,231.5 L1071.9,226.6 L1072.5,222.2 L1072.6,223.9 L1073,223.3 L1073.5,224.9 L1074,227.9 L1074.1,226.1 L1074.7,224.3 L1075.1,219.6 L1075.2,221.1 L1075.8,221.1 L1076,224.3 L1076.3,225.5 L1076.7,225.8 L1076.9,235.1 L1077.3,259.9 L1077.4,264.4 L1077.9,276.5 L1078,276.3 L1078.5,286.7 L1078.5,286.9 L1079,288.5 L1079.6,290.1 L1079.7,290.5 L1080.2,310.1 L1080.2,313.8 L1080.7,410.1 L1080.8,439 L1081.2,439.3 L1081.8,439.3 L1082.4,439.3 L1082.9,439.3 L1083.5,439.3 L1084,439.3 L1084.5,439.3 L1085.1,439.3 L1085.7,439.3 L1086.2,439.3 L1086.8,439.3 L1087.3,439.3 L1087.7,439.3 L1088.2,439.3 L1088.8,439.3 L1089.1,439.3 L1089.4,410 L1089.6,376.4 L1089.9,348.2 L1090.3,305.9 L1090.5,304.1 L1090.8,299.4 L1091,299 L1091.5,297.8 L1092.1,296.6 L1092.7,295.3 L1092.7,295.1 L1093.2,294 L1093.8,292.6 L1094.3,291.3 L1094.8,290.1 L1094.9,289.3 L1095.4,284.3 L1095.5,283.7 L1096,276.9 L1096.4,268.9 L1096.5,267.7 L1097,263 L1097.1,263 L1097.6,252.6 L1097.8,245.8 L1098.2,246.1 L1098.7,243.2 L1098.9,244.5 L1099.2,242.6 L1099.8,240.3 L1100.2,238.8 L1100.4,237.9 L1100.9,238.3 L1101.5,234 L1101.6,234.6 L1102,232.8 L1102.5,233.9 L1102.9,233.8 L1103.1,230.2 L1103.7,228.9 L1104.2,225.1 L1104.2,226.7 L1104.8,227.6 L1105,227.8 L1105.3,230 L1105.6,232.7 L1105.9,244.2 L1106.2,262.5 L1106.4,266.4 L1106.8,274.8 L1107,278.3 L1107.4,284.4 L1107.5,284.7 L1108,287.2 L1108.6,289.7 L1108.7,289.9 L1109.2,313.8 L1109.7,427.1 L1109.8,439.3 L1110.2,439.3 L1110.8,439.3 L1111.4,439.3 L1111.9,439.3 L1112.5,439.3 L1113,439.3 L1113.5,439.3 L1114.1,439.3 L1114.7,439.3 L1115.2,439.3 L1115.8,439.3 L1116.3,439.3 L1116.7,439.3 L1117.2,439.3 L1117.8,439.3 L1118.1,439.3 L1118.4,410.6 L1118.6,376.8 L1118.9,348.5 L1119.3,306 L1119.5,304.1 L1119.8,299.5 L1120,298.8 L1120.5,296.8 L1121.1,294.9 L1121.7,292.9 L1121.7,292.6 L1122.2,291.8 L1122.8,290.9 L1123.3,290 L1123.7,289.2 L1123.9,288.3 L1124.4,284 L1124.4,283.7 L1125,272.1 L1125.3,262.3 L1125.5,259.2 L1126,248.8 L1126,250.9 L1126.6,246 L1126.8,246 L1127.2,243.9 L1127.7,242.2 L1127.9,240.6 L1128.2,241.2 L1128.8,243.4 L1129.2,244.4 L1129.4,246.3 L1129.9,243.2 L1130.5,239.6 L1130.5,238.5 L1131,242.1 L1131.5,242.7 L1131.8,244.1 L1132.1,244.4 L1132.7,238.6 L1133,237 L1133.2,238.6 L1133.8,240.9 L1133.9,240.8 L1134.3,243.9 L1134.6,245.6 L1134.9,254.3 L1135.2,262 L1135.4,267.9 L1135.8,276 L1136,278.6 L1136.4,284.8 L1136.5,285.3 L1137,287.5 L1137.6,289.7 L1137.6,291 L1138.1,315.1 L1138.2,329.6 L1138.7,439.3 L1138.7,439.3 L1139.2,439.3 L1139.8,439.3 L1140.4,439.3 L1140.9,439.3 L1141.5,439.3 L1142,439.3 L1142.5,439.3 L1143.1,439.3 L1143.7,439.3 L1144.2,439.3 L1144.8,439.3 L1145.3,439.3 L1145.7,439.3 L1146.2,439.3 L1146.8,439.3 L1147.1,438.8 L1147.4,411.2 L1147.6,376.2 L1147.9,348.8 L1148.3,306.1 L1148.5,304.1 L1148.8,299.4 L1149,298.8 L1149.5,297.1 L1150.1,295.3 L1150.7,293.5 L1150.7,293.3 L1151.2,292.6 L1151.8,291.9 L1152.3,291.1 L1152.7,290.5 L1152.9,289.2 L1153.4,283.9 L1153.4,283.7 L1154,274.4 L1154.3,268.9 L1154.5,264.1 L1155,249.8 L1155,247.8 L1155.6,246.9 L1155.7,246 L1156.2,244.3 L1156.7,240 L1156.9,238.5 L1157.2,239.8 L1157.8,241.8 L1158.2,244.1 L1158.4,242.6 L1158.9,240.3 L1159.5,239.3 L1159.5,239.5 L1160,241 L1160.5,239.7 L1160.8,240.9 L1161.1,240.2 L1161.7,237.2 L1161.9,233.4 L1162.2,236.1 L1162.8,239.6 L1162.8,237.7 L1163.3,241.9 L1163.5,243.6 L1163.9,252.3 L1164.1,261.8 L1164.4,269.2 L1164.7,275.7 L1165,280.7 L1165.3,285.7 L1165.5,286.3 L1166,288.1 L1166.5,289.8 L1166.6,294.7 L1167,315 L1167.2,346.4 L1167.6,438.4 L1167.7,439.3 L1168.2,439.3 L1168.8,439.3 L1169.4,439.3 L1169.9,439.3 L1170.5,439.3 L1171,439.3 L1171.5,439.3 L1172.1,439.3 L1172.7,439.3 L1173.2,439.3 L1173.8,439.3 L1174.3,439.3 L1174.7,439.3 L1175.2,439.3 L1175.8,439.3 L1176.1,439.3 L1176.4,411.9 L1176.6,376.6 L1176.9,349 L1177.3,305.6 L1177.5,304.1 L1177.8,299.4 L1178,298.9 L1178.5,297.2 L1179.1,295.6 L1179.7,294 L1179.7,293.8 L1180.2,293.1 L1180.8,292.3 L1181.3,291.6 L1181.7,291 L1181.9,289.4 L1182.4,283.6 L1183,271 L1183.3,264.4 L1183.5,259.7 L1184,253.7 L1184,253.6 L1184.6,246.2 L1184.7,245.2 L1185.2,246.2 L1185.7,241.9 L1185.8,242.4 L1186.2,241.4 L1186.8,243.9 L1187.1,247 L1187.4,245.7 L1187.9,243.2 L1188.4,237.2 L1188.5,239.9 L1189,239.6 L1189.5,241 L1189.7,240.7 L1190.1,239.1 L1190.7,236 L1190.9,237.4 L1191.2,236.5 L1191.7,240.9 L1191.8,240 L1192.3,244.1 L1192.4,245.2 L1192.9,256.3 L1193,261.9 L1193.4,271.3 L1193.6,275.5 L1194,281.2 L1194.2,285.9 L1194.5,287.2 L1195,289.9 L1195.4,291.8 L1195.6,299.9 L1195.9,315 L1196.2,363.3 L1196.5,438.9 L1196.7,439.3 L1197.2,439.3 L1197.8,439.3 L1198.4,439.3 L1198.9,439.3 L1199.5,439.3 L1200,439.3 L1200.5,439.3 L1201.1,439.3 L1201.7,439.3 L1202.2,439.3 L1202.8,439.3 L1203.3,439.3 L1203.7,439.3 L1204.2,439.3 L1204.8,439.3 L1205.1,439.1 L1205.4,412.5 L1205.6,377.1 L1205.9,349.3 L1206.3,305.6 L1206.5,304.1 L1206.8,299.4 L1207,299.1 L1207.5,298.2 L1208.1,297.3 L1208.7,296.3 L1208.7,296.3 L1209.2,294.6 L1209.8,292.8 L1210.3,291 L1210.7,289.8 L1210.9,288.3 L1211.4,283.8 L1211.4,283.2 L1212,271.2 L1212.3,263.7 L1212.5,262 L1213,255.4 L1213,253.3 L1213.6,241.7 L1213.7,239.8 L1214.2,236.9 L1214.7,233.3 L1214.8,234.5 L1215.2,235.7 L1215.8,240.1 L1216.1,242.5 L1216.4,238.1 L1216.9,235.6 L1217.4,232.6 L1217.5,233.4 L1218,235.9 L1218.5,238.4 L1218.7,236.8 L1219.1,233.3 L1219.7,229.3 L1219.8,229.8 L1220.2,232.1 L1220.7,234 L1220.8,236.3 L1221.3,237 L1221.4,239.2 L1221.9,258.8 L1222,263.6 L1222.4,270.9 L1222.6,277.1 L1223,282.3 L1223.2,284.8 L1223.5,286.6 L1224,289.3 L1224.3,290.8 L1224.6,302.9 L1224.8,314.9 L1225.2,380.3 L1225.4,439.3 L1225.7,439.3 L1226.2,439.3 L1226.8,439.3 L1227.4,439.3 L1227.9,439.3 L1228.5,439.3 L1229,439.3 L1229.5,439.3 L1230.1,439.3 L1230.7,439.3 L1231.2,439.3 L1231.8,439.3 L1232.3,439.3 L1232.7,439.3 L1233.2,439.3 L1233.8,439.3 L1234.1,439.3 L1234.4,413.1 L1234.6,376.4 L1234.9,349.6 L1235.3,305.6 L1235.5,304.1 L1235.8,299.4 L1236,298.7 L1236.5,296.6 L1237.1,294.4 L1237.7,292.3 L1237.7,292.1 L1238.2,291.3 L1238.8,290.5 L1239.3,289.7 L1239.7,289.2 L1239.9,287.7 L1240.4,283.8 L1240.4,283.1 L1241,275.8 L1241.2,269.2 L1241.5,264.5 L1241.9,250.2 L1242,250 L1242.6,246.9 L1242.6,245 L1243.2,245.2 L1243.7,243 L1243.7,241.9 L1244.2,243.9 L1244.8,245 L1245,243.5 L1245.4,241.5 L1245.9,238.6 L1246.3,239.5 L1246.5,238.6 L1247,240 L1247.5,239.9 L1247.6,240.4 L1248.1,236.5 L1248.7,236 L1248.8,236.7 L1249.2,236.4 L1249.6,240.5 L1249.8,239.5 L1250.3,243.3 L1250.3,241.9 L1250.9,260.1 L1250.9,261.4 L1251.4,275.1 L1251.5,276.3 L1252,283.2 L1252.1,285.2 L1252.5,287.7 L1253,290.9 L1253.3,292.2 L1253.6,307.1 L1253.8,314.9 L1254.2,397.5 L1254.4,439.3 L1254.7,439.3 L1255.2,439.3 L1255.8,439.3 L1256.4,439.3 L1256.9,439.3 L1257.5,439.3 L1258,439.3 L1258.5,439.3 L1259.1,439.3 L1259.7,439.3 L1260.2,439.3 L1260.8,439.3 L1261.3,439.3 L1261.7,439.3 L1262.2,439.3 L1262.8,439.3 L1263.2,439.3 L1263.4,413.8 L1263.6,376.8 L1263.9,349.9 L1264.3,305.6 L1264.5,304.1 L1264.8,299.4 L1265,298.8 L1265.5,296.8 L1266.1,294.9 L1266.7,292.9 L1266.7,292.8 L1267.2,292.3 L1267.8,291.8 L1268.3,291.2 L1268.7,290.9 L1268.9,288.8 L1269.3,283.8 L1269.4,283.1 L1270,272.7 L1270.2,270 L1270.5,262.3 L1270.9,257.2 L1271,256.7 L1271.6,254.4 L1271.6,254.1 L1272.2,250.3 L1272.7,251.5 L1272.7,249.9 L1273.2,248.6 L1273.8,248 L1274,245.8 L1274.4,244.2 L1274.9,244.3 L1275.3,241.6 L1275.5,241.3 L1276,242.2 L1276.5,237.5 L1276.6,239 L1277.1,237.8 L1277.7,233.5 L1277.9,233.8 L1278.2,232.5 L1278.6,235.2 L1278.8,233.9 L1279.2,239.8 L1279.3,241.6 L1279.8,262.2 L1279.9,261.5 L1280.4,276.5 L1280.4,277.2 L1281,285.9 L1281,287 L1281.5,289.3 L1282,291.9 L1282.2,292.7 L1282.6,310.7 L1282.7,314.8 L1283.2,414.8 L1283.3,439.3 L1283.7,439.3 L1284.2,439.3 L1284.8,439.3 L1285.4,439.3 L1285.9,439.3 L1286.5,439.3 L1287,439.3 L1287.5,439.3 L1288.1,439.3 L1288.7,439.3 L1289.2,439.3 L1289.8,439.3 L1290.3,439.3 L1290.7,439.3 L1291.2,439.3 L1291.8,439.3 L1292.2,438.8 L1292.4,414.5 L1292.6,377.3 L1292.9,350.2 L1293.3,305.7 L1293.5,304.1 L1293.8,299.4 L1294,298.9 L1294.5,297.5 L1295.1,296 L1295.7,294.5 L1295.7,294.5 L1296.2,292.9 L1296.8,291.2 L1297.3,289.5 L1297.6,288.5 L1297.9,287 L1298.3,283.7 L1298.4,283.5 L1299,270.3 L1299.2,265.5 L1299.5,254.9 L1299.9,247.7 L1300,244.4 L1300.6,241 L1300.6,239 L1301.2,233.6 L1301.2,234.6 L1301.7,239.9 L1302.1,243.2 L1302.2,244.2 L1302.8,242.8 L1303.4,241.6 L1303.4,240.7 L1303.9,241.9 L1304.5,241.4 L1304.7,244.7 L1305,243.8 L1305.5,242.8 L1306,242.5 L1306.1,242.4 L1306.7,244 L1307.2,244.4 L1307.2,246.2 L1307.8,245.1 L1308.2,249.1 L1308.3,249.7 L1308.8,261 L1308.9,263.3 L1309.4,276.5 L1309.4,275.6 L1309.9,286.2 L1310,286.2 L1310.5,289.1 L1311,292 L1311.1,292.4 L1311.6,314.7 L1312.2,432.3 L1312.2,438.7 L1312.7,439.3 L1313.2,439.3 L1313.8,439.3 L1314.4,439.3 L1314.9,439.3 L1315.5,439.3 L1316,439.3 L1316.5,439.3 L1317.1,439.3 L1317.7,439.3 L1318.2,439.3 L1318.8,439.3 L1319.3,439.3 L1319.7,439.3 L1320.2,439.3 L1320.8,439.3 L1321.2,439.3 L1321.4,415.1 L1321.7,376.5 L1321.9,350.5 L1322.3,305.7 L1322.5,304.1 L1322.8,299.4 L1323,298.8 L1323.5,296.9 L1324.1,294.9 L1324.7,293 L1324.7,293 L1325.2,292.4 L1325.8,291.7 L1326.3,291.1 L1326.6,290.7 L1326.9,288.3 L1327.3,283.7 L1327.4,281.2 L1328,269.9 L1328.2,266.7 L1328.5,261 L1328.9,256.8 L1329,252.1 L1329.5,243.7 L1329.6,239.8 L1330.2,238.1 L1330.6,233.8 L1330.7,236.4 L1331.2,239.8 L1331.8,244 L1331.9,242.6 L1332.4,239.3 L1332.9,237.5 L1333.2,234.9 L1333.5,235.6 L1334,236.2 L1334.5,239.3 L1334.5,239.4 L1335.1,233.2 L1335.6,230.4 L1335.7,231.8 L1336.2,233 L1336.4,235 L1336.8,238.8 L1337.1,238.8 L1337.3,248.5 L1337.7,262 L1337.9,265 L1338.3,275.9 L1338.4,278.3 L1338.9,285.5 L1339,286 L1339.5,288.3 L1340,290.6 L1340,291.5 L1340.5,314.7 L1340.6,331.9 L1341.1,439.2 L1341.2,439.3 L1341.7,439.3 L1342.2,439.3 L1342.8,439.3 L1343.4,439.3 L1343.9,439.3 L1344.5,439.3 L1345,439.3 L1345.5,439.3 L1346.1,439.3 L1346.7,439.3 L1347.2,439.3 L1347.8,439.3 L1348.3,439.3 L1348.7,439.3 L1349.2,439.3 L1349.8,439.3 L1350.2,439.1 L1350.4,415.8 L1350.7,377 L1350.9,350.7 L1351.3,305.7 L1351.5,304.1 L1351.8,299.5 L1352,299.1 L1352.5,298.1 L1353.1,297.1 L1353.7,296.1 L1354.2,294 L1354.8,291.9 L1355.3,289.7 L1355.6,288.6 L1355.9,286.8 L1356.3,283.7 L1356.4,282.5 L1357,272 L1357.1,265.9 L1357.5,258.3 L1357.8,253.8 L1358,247.8 L1358.5,245.6 L1358.6,245.4 L1359.2,239.5 L1359.6,237.1 L1359.7,238.1 L1360.2,240.1 L1360.8,241.5 L1360.9,240.4 L1361.4,239.7 L1361.9,239.3 L1362.2,238.9 L1362.5,237.4 L1363,240 L1363.4,241 L1363.5,239.6 L1364.1,237 L1364.5,235.3 L1364.7,234.6 L1365.2,236.2 L1365.4,239 L1365.8,240.8 L1366,243.7 L1366.3,250.6 L1366.6,261.9 L1366.9,266.6 L1367.2,275.3 L1367.4,277.5 L1367.8,285.2 L1368,286 L1368.5,288.5 L1369,290.6 L1369,295.3 L1369.4,314.6 L1369.6,349.1 L1370,439.3 L1370.2,439.3 L1370.7,439.3 L1371.2,439.3 L1371.8,439.3 L1372.4,439.3 L1372.9,439.3 L1373.5,439.3 L1374,439.3 L1374.5,439.3 L1375.1,439.3 L1375.7,439.3 L1376.2,439.3 L1376.8,439.3 L1377.3,439.3 L1377.7,439.3 L1378.2,439.3 L1378.8,439.3 L1379.2,439.3 L1379.4,416.5 L1379.7,376.3 L1379.9,351 L1380.3,305.8 L1380.5,304.1 L1380.8,299.4 L1381,299 L1381.5,297.7 L1382.1,296.5 L1382.6,295.3 L1382.7,295.2 L1383.2,294.3 L1383.8,293.3 L1384.3,292.3 L1384.6,291.8 L1384.9,288.5 L1385.2,283.7 L1385.4,280.3 L1386,267 L1386.1,261.2 L1386.5,256.2 L1386.8,250.5 L1387,246.9 L1387.5,239.1 L1387.6,238.9 L1388.1,236.2 L1388.2,235.7 L1388.7,242 L1389,243.8 L1389.2,243.8 L1389.8,242 L1390.2,242 L1390.4,240.4 L1390.9,244.2 L1391.5,247.3 L1391.5,247.8 L1392,245.9 L1392.5,243.8 L1392.8,241.5 L1393.1,243.8 L1393.7,246 L1394,244.3 L1394.2,245.8 L1394.8,250.2 L1395,251.2 L1395.3,257.6 L1395.6,262.3 L1395.9,267.7 L1396.1,274.7 L1396.4,280.4 L1396.7,286.2 L1397,287.4 L1397.5,290.3 L1397.9,292.5 L1398,300.2 L1398.4,314.6 L1398.6,366.6 L1398.9,439.3 L1399.2,439.3 L1399.7,439.3 L1400.2,439.3 L1400.8,439.3 L1401.4,439.3 L1401.9,439.3 L1402.5,439.3 L1403,439.3 L1403.5,439.3 L1404.1,439.3 L1404.7,439.3 L1405.2,439.3 L1405.8,439.3 L1406.3,439.3 L1406.7,439.3 L1407.2,439.3 L1407.8,439.3 L1408.2,439.3 L1408.4,417.2 L1408.7,376.7 L1408.9,351.3 L1409.3,305.9 L1409.5,304.1 L1409.8,299.4 L1410,298.9 L1410.5,297.2 L1411.1,295.6 L1411.6,294.1 L1411.7,294.1 L1412.2,293.3 L1412.8,292.6 L1413.3,291.9 L1413.5,291.6 L1413.9,288.1 L1414.2,283.7 L1414.4,282.9 L1415,279.6 L1415.1,280.7 L1415.5,272.8 L1415.8,270.6 L1416,268.2 L1416.4,265.2 L1416.6,263.4 L1417.2,259.2 L1417.5,254.4 L1417.7,255.3 L1418.2,253.4 L1418.8,248.7 L1418.8,250.6 L1419.4,248.9 L1419.8,248.4 L1419.9,248.8 L1420.5,240.5 L1420.6,235.1 L1421,230.9 L1421.5,225.2 L1421.6,225.9 L1422.1,225.3 L1422.3,229.1 L1422.7,233.9 L1423.2,245.3 L1423.2,245.4 L1423.8,252.7 L1423.9,252.3 L1424.3,259.7 L1424.5,261.7 L1424.9,269.8 L1425.1,275.4 L1425.4,282.7 L1425.7,286.6 L1426,287.7 L1426.5,289.6 L1426.8,290.8 L1427,303 L1427.3,314.5 L1427.6,384.2 L1427.9,438.6 L1428.2,439.3 L1428.7,439.3 L1429.2,439.3 L1429.8,439.3 L1430.4,439.3 L1430.9,439.3 L1431.5,439.3 L1432,439.3 L1432.5,439.3 L1433.1,439.3 L1433.7,439.3 L1434.2,439.3 L1434.8,439.3 L1435.3,439.3 L1435.7,439.3 L1436.2,439.3 L1436.8,439.3 L1437.2,438.8 L1437.4,417.9 L1437.7,377.2 L1437.9,351.6 L1438.3,306 L1438.5,304.1 L1438.8,299.4 L1439,298.7 L1439.5,296.7 L1440.1,294.8 L1440.6,292.9 L1440.7,292.8 L1441.2,291.8 L1441.8,290.8 L1442.3,289.8 L1442.5,289.3 L1442.9,286.7 L1443.2,283.6 L1443.4,280.7 L1444,266.7 L1444.1,262.6 L1444.5,260.2 L1444.7,255.6 L1445,248.1 L1445.4,239.6 L1445.6,239.6 L1446.2,237 L1446.5,235.1 L1446.7,237.5 L1447.2,239.2 L1447.8,239.3 L1447.8,241.2 L1448.4,236.3 L1448.9,233.2 L1449,232 L1449.5,236.9 L1450,236.9 L1450.3,238.4 L1450.5,236.4 L1451.1,232 L1451.4,229.8 L1451.7,230.8 L1452.2,234.3 L1452.2,233.2 L1452.8,237.4 L1452.9,236.7 L1453.3,256.4 L1453.4,263.5 L1453.9,273.9 L1454,276.7 L1454.4,283.6 L1454.6,286.6 L1455,288.2 L1455.5,290.5 L1455.7,291.4 L1456,307 L1456.2,314.5 L1456.6,401.9 L1456.8,439.1 L1457.2,439.3 L1457.7,439.3 L1458.2,439.3 L1458.8,439.3 L1459.4,439.3 L1459.9,439.3 L1460.5,439.3 L1461,439.3 L1461.5,439.3 L1462.1,439.3 L1462.7,439.3 L1463.2,439.3 L1463.8,439.3 L1464.3,439.3 L1464.7,439.3 L1465.2,439.3 L1465.8,439.3 L1466.2,439.3 L1466.4,418.6 L1466.7,376.5 L1466.9,351.9 L1467.3,306.1 L1467.5,304.1 L1467.8,299.4 L1468,299.1 L1468.5,298.1 L1469.1,297.1 L1469.6,296.2 L1469.7,296.1 L1470.2,293.9 L1470.8,291.8 L1471.3,289.7 L1471.5,288.9 L1471.9,286.3 L1472.2,283.8 L1472.4,277.7 L1473,268.5 L1473,264.6 L1473.5,256.9 L1473.7,248.3 L1474,242.5 L1474.4,235.3 L1474.6,233.5 L1475,227.7 L1475.2,232.3 L1475.7,238.3 L1475.9,238.5 L1476.2,236.5 L1476.8,235.5 L1477.1,234.4 L1477.4,235.2 L1477.9,238 L1478.4,239 L1478.5,238.1 L1479,235.5 L1479.5,236 L1479.6,233.9 L1480.1,236.2 L1480.7,238.6 L1480.9,237.8 L1481.2,240.1 L1481.8,243.8 L1481.8,242.3 L1482.3,260.5 L1482.4,262.5 L1482.9,273.1 L1482.9,275 L1483.4,283.9 L1483.5,285.5 L1484,287.2 L1484.5,289.4 L1484.6,289.9 L1485,310.6 L1485.1,314.4 L1485.6,419.8 L1485.7,439.3 L1486.2,439.3 L1486.7,439.3 L1487.2,439.3 L1487.8,439.3 L1488.4,439.3 L1488.9,439.3 L1489.5,439.3 L1490,439.3 L1490.5,439.3 L1491.1,439.3 L1491.7,439.3 L1492.2,439.3 L1492.8,439.3 L1493.3,439.3 L1493.7,439.3 L1494.2,439.3 L1494.8,439.3 L1495.2,439.1 L1495.4,419.3 L1495.7,376.9 L1495.9,352.2 L1496.3,306.2 L1496.5,304.1 L1496.8,299.4 L1497,298.8 L1497.5,296.9 L1498.1,295 L1498.6,293.3 L1498.7,293.2 L1499.2,292.4 L1499.8,291.6 L1500.3,290.8 L1500.5,290.5 L1500.9,287 L1501.2,283.8 L1501.4,278.6 L1502,261.9 L1502,259.8 L1502.5,254.4 L1502.7,252.2 L1503,238.9 L1503.3,229 L1503.6,226.9 L1503.9,225.2 L1504.2,228.6 L1504.7,234.1 L1504.8,235.1 L1505.2,232.3 L1505.8,232.9 L1506.1,232.1 L1506.4,232 L1506.9,232.9 L1507.3,237.5 L1507.5,237.7 L1508,235.6 L1508.5,232.1 L1508.6,231.9 L1509.1,234.8 L1509.7,236.2 L1509.8,235 L1510.2,236.6 L1510.7,238.8 L1510.8,239.7 L1511.3,263.4 L1511.3,262.1 L1511.9,274.9 L1511.9,274.7 L1512.4,285 L1512.4,285.5 L1513,287.4 L1513.5,289.6 L1513.6,290.1 L1514,314.4 L1514,316.6 L1514.6,437.9 L1514.6,439.3 L1515.2,439.3 L1515.7,439.3 L1516.2,439.3 L1516.8,439.3 L1517.4,439.3 L1517.9,439.3 L1518.5,439.3 L1519,439.3 L1519.5,439.3 L1520.1,439.3 L1520.7,439.3 L1521.2,439.3 L1521.8,439.3 L1522.3,439.3 L1522.7,439.3 L1523.2,439.3 L1523.8,439.3 L1524.2,439.3 L1524.4,420 L1524.7,376.2 L1524.9,352.5 L1525.3,305.6 L1525.5,304.1 L1525.8,299.4 L1526,299 L1526.5,297.8 L1527.1,296.6 L1527.6,295.5 L1527.7,295.3 L1528.2,293.8 L1528.8,292.2 L1529.3,290.7 L1529.5,290.1 L1529.9,286.6 L1530.1,283.8 L1530.4,279.9 L1531,275.2 L1531,273.8 L1531.5,260.7 L1531.7,255.4 L1532,251.5 L1532.3,249 L1532.6,248.5 L1533.2,244.8 L1533.4,246.2 L1533.7,242.6 L1534.2,242.3 L1534.6,241.1 L1534.8,239.5 L1535.4,237.8 L1535.9,238.2 L1535.9,236.4 L1536.5,236.3 L1537,233.4 L1537.1,233.5 L1537.5,229.4 L1538.1,227.2 L1538.3,227.3 L1538.7,229.7 L1539.1,227.7 L1539.2,230.8 L1539.7,237.5 L1539.8,238 L1540.2,260.2 L1540.3,265.1 L1540.8,278.3 L1540.9,277.8 L1541.4,284.8 L1541.4,285.1 L1542,288.9 L1542.5,292.7 L1542.5,293.2 L1543,314.3 L1543,334.3 L1543.5,438.4 L1543.6,439.3 L1544.2,439.3 L1544.7,439.3 L1545.2,439.3 L1545.8,439.3 L1546.4,439.3 L1546.9,439.3 L1547.5,439.3 L1548,439.3 L1548.5,439.3 L1549.1,439.3 L1549.7,439.3 L1550.2,439.3 L1550.8,439.3 L1551.3,439.3 L1551.7,439.3 L1552.2,439.3 L1552.8,439.3 L1553.2,439.3 L1553.4,420.7 L1553.7,376.6 L1553.9,352.8 L1554.3,305.6 L1554.5,304.2 L1554.8,299.4 L1555,298.6 L1555.5,296.4 L1556.1,294.3 L1556.6,292.3 L1556.7,292.3 L1557.2,292.2 L1557.8,292 L1558.3,291.8 L1558.5,291.8 L1558.9,287.1 L1559.1,283.8 L1559.4,281.6 L1560,276.8 L1560,275.8 L1560.5,268.1 L1560.6,266.2 L1561,264.6 L1561.3,264.3 L1561.6,262.5 L1562.2,257.7 L1562.4,257.9 L1562.7,256.6 L1563.2,250.5 L1563.6,248.3 L1563.8,247.8 L1564.4,252.8 L1564.6,253.2 L1564.9,255.6 L1565.4,256.9 L1565.5,254.2 L1566,248.2 L1566.3,244.8 L1566.5,244.1 L1567,250 L1567.1,250.3 L1567.7,259.8 L1567.9,267 L1568.2,258.7 L1568.6,254.1 L1568.8,257.6 L1569.2,262.8 L1569.3,265.7 L1569.7,276.8 L1569.9,278.4 L1570.3,285 L1570.4,285.6 L1571,287.8 L1571.4,289.7 L1571.5,294.4 L1571.9,314.3 L1572,352.1 L1572.4,438.9 L1572.6,439.3 L1573.2,439.3 L1573.7,439.3 L1574.2,439.3 L1574.8,439.3 L1575.4,439.3 L1575.9,439.3 L1576.5,439.3 L1577,439.3 L1577.5,439.3 L1578.1,439.3 L1578.7,439.3 L1579.2,439.3 L1579.8,439.3 L1580.3,439.3 L1580.7,439.3 L1581.2,439.3 L1581.8,439.3 L1582.2,438.9 L1582.4,421.4 L1582.7,377.1 L1582.9,353.2 L1583.3,305.6 L1583.5,304.2 L1583.8,299.5 L1584,298.6 L1584.5,296.4 L1585.1,294.2 L1585.6,292.2 L1585.7,292.2 L1586.2,291.9 L1586.8,291.6 L1587.3,291.4 L1587.5,291.2 L1587.9,286.6 L1588.1,283.7 L1588.4,278.7 L1588.9,265.8 L1589,263.4 L1589.5,258.5 L1589.6,256.2 L1590,236.3 L1590.2,228.8 L1590.6,227.3 L1591.2,224.6 L1591.3,225.2 L1591.7,225.2 L1592.2,225.1 L1592.5,225.3 L1592.8,224.4 L1593.4,223.9 L1593.8,220.7 L1593.9,224.4 L1594.5,223.1 L1595,227.2 L1595,226.5 L1595.5,223.1 L1596.1,220.2 L1596.1,218 L1596.7,223.6 L1596.9,223.7 L1597.2,225.7 L1597.5,228.5 L1597.8,242.2 L1598.1,262.3 L1598.3,269.1 L1598.7,275.9 L1598.9,278.4 L1599.2,284.7 L1599.4,285.8 L1600,289 L1600.3,291.1 L1600.5,299.4 L1600.8,314.2 L1601,370.1 L1601.4,439.3 L1601.6,439.3 L1602.2,439.3 L1602.7,439.3 L1603.2,439.3 L1603.8,439.3 L1604.4,439.3 L1604.9,439.3 L1605.5,439.3 L1606,439.3 L1606.5,439.3 L1607.1,439.3 L1607.7,439.3 L1608.2,439.3 L1608.8,439.3 L1609.3,439.3 L1609.7,439.3 L1610.2,439.3 L1610.8,439.3 L1611.2,439.3 L1611.4,422.1 L1611.7,376.4 L1611.9,353.5 L1612.3,305.6 L1612.5,304.2 L1612.8,299.4 L1613,299 L1613.5,297.9 L1614.1,296.9 L1614.6,295.9 L1614.7,295.7 L1615.2,293.7 L1615.8,291.7 L1616.3,289.7 L1616.4,289.2 L1616.9,285.7 L1617.1,283.7 L1617.4,281 L1617.9,276.3 L1618,276.9 L1618.5,262.6 L1618.6,260 L1619,252.9 L1619.2,246.6 L1619.6,246.3 L1620.2,241.8 L1620.3,238.8 L1620.7,238.7 L1621.2,237.5 L1621.5,236.4 L1621.8,233.3 L1622.4,231.7 L1622.7,231.8 L1622.9,232.1 L1623.5,230.4 L1623.9,227.2 L1624,227.4 L1624.5,223.2 L1625.1,222.7 L1625.2,222.9 L1625.7,222 L1625.9,222 L1626.2,228.4 L1626.5,232 L1626.8,248 L1627,262 L1627.3,270 L1627.6,275.8 L1627.9,282.6 L1628.1,285.9 L1628.4,287.2 L1629,290 L1629.2,291.6 L1629.5,303.4 L1629.7,314.1 L1630,388.3 L1630.3,439.3 L1630.6,439.3 L1631.2,439.3 L1631.7,439.3 L1632.2,439.3 L1632.8,439.3 L1633.4,439.3 L1633.9,439.3 L1634.5,439.3 L1635,439.3 L1635.5,439.3 L1636.1,439.3 L1636.7,439.3 L1637.2,439.3 L1637.8,439.3 L1638.3,439.3 L1638.7,439.3 L1639.2,439.3 L1639.8,439.3 L1640.2,439.1 L1640.4,422.9 L1640.7,376.8 L1640.9,353.8 L1641.3,305.7 L1641.5,304.2 L1641.8,299.4 L1642,298.7 L1642.5,296.7 L1643.1,294.7 L1643.6,293.1 L1643.7,292.9 L1644.2,292.1 L1644.8,291.3 L1645.3,290.5 L1645.4,290.3 L1645.9,285.9 L1646.1,283.7 L1646.4,277.4 L1646.9,268.8 L1647,266.4 L1647.5,253.6 L1647.5,252 L1648,248 L1648.2,249.2 L1648.6,246.1 L1649.2,242.1 L1649.2,240.7 L1649.7,243.4 L1650.2,246.5 L1650.5,250.3 L1650.8,248.5 L1651.4,242 L1651.7,243.1 L1651.9,242.4 L1652.5,243.2 L1652.9,245.5 L1653,245.3 L1653.5,239.5 L1653.9,239.1 L1654.1,238.9 L1654.7,240.7 L1654.8,243.9 L1655.2,245.9 L1655.4,246.7 L1655.8,255.9 L1656,263 L1656.3,271 L1656.5,278 L1656.9,283 L1657.1,287.3 L1657.4,288.5 L1658,290.6 L1658.2,291.6 L1658.5,307.2 L1658.6,314.1 L1659,406.6 L1659.2,438.2 L1659.6,439.3 L1660.2,439.3 L1660.7,439.3 L1661.2,439.3 L1661.8,439.3 L1662.4,439.3 L1662.9,439.3 L1663.5,439.3 L1664,439.3 L1664.5,439.3 L1665.1,439.3 L1665.7,439.3 L1666.2,439.3 L1666.8,439.3 L1667.3,439.3 L1667.7,439.3 L1668.2,439.3 L1668.8,439.3 L1669.2,439.3 L1669.4,423.6 L1669.7,376 L1669.9,349.6 L1670.2,303.5 L1670.5,300.4 L1670.7,296.3 L1671,295.6 L1671.5,294.3 L1672.1,293.1 L1672.5,292 L1672.7,291.8 L1673.2,290.4 L1673.8,289.1 L1674.2,287.9 L1674.3,287.7 L1674.9,286.6 L1675.4,285.5 L1676,284.4 L1676.5,283.2 L1677,281.8 L1677.1,280.6 L1677.6,275.2 L1678.2,269.6 L1678.6,266 L1678.7,264.9 L1679.2,258.1 L1679.8,254.8 L1679.8,255.4 L1680.4,246.5 L1680.7,240.8 L1680.9,237.5 L1681.4,229.4 L1681.5,230.8 L1682,240.1 L1682,238.8 L1682.5,249.8 L1682.7,252.8 L1683.1,255.7 L1683.7,258.8 L1683.7,259.6 L1684.2,262.1 L1684.8,265.9 L1685.3,269.6 L1685.9,273.8 L1686.4,279.7 L1686.6,278.8 L1687,283.7 L1687.2,286.9 L1687.5,305.1 L1687.7,313.9 L1688,422.3 L1688.1,438.6 L1688.6,439.3 L1689.2,439.3 L1689.7,439.3 L1690.2,439.3 L1690.8,439.3 L1691.4,439.3 L1691.9,439.3 L1692.5,439.3 L1693,439.3 L1693.5,439.3 L1694.1,439.3 L1694.7,439.3 L1695.2,439.3 L1695.8,439.3 L1696.3,439.3 L1696.7,439.3 L1697.2,439.3 L1697.8,439.3 L1698.2,439.3 L1698.4,424.4 L1698.7,376.5 L1698.9,350 L1699.2,303.6 L1699.5,300.4 L1699.7,296.3 L1700,295.6 L1700.5,294.4 L1701.1,293.1 L1701.5,292.1 L1701.7,291.7 L1702.2,290 L1702.8,288.3 L1703.2,286.9 L1703.3,286.7 L1703.9,285.9 L1704.4,285.1 L1705,284.3 L1705.5,283.5 L1706,283.9 L1706.6,282.9 L1707.2,281.9 L1707.7,278.5 L1708.1,280.7 L1708.2,274.8 L1708.7,248.8 L1708.8,255.5 L1709.2,276.7 L1709.4,275.8 L1709.9,274.9 L1710,276.6 L1710.5,275.7 L1711,273.2 L1711.4,271.6 L1711.5,272 L1712.1,269 L1712.7,265.2 L1712.8,267.3 L1713.2,262.9 L1713.7,256.6 L1713.8,255.4 L1714.2,232.1 L1714.3,231.5 L1714.6,226.8 L1714.9,234.1 L1715.1,238.7 L1715.4,254.3 L1715.8,273.1 L1716,280.2 L1716.2,287.2 L1716.5,308.7 L1716.6,313.9 L1717,439.3 L1717,439.3 L1717.6,439.3 L1718.2,439.3 L1718.7,439.3 L1719.2,439.3 L1719.8,439.3 L1720.4,439.3 L1720.9,439.3 L1721.5,439.3 L1722,439.3 L1722.5,439.3 L1723.1,439.3 L1723.7,439.3 L1724.2,439.3 L1724.8,439.3 L1725.3,439.3 L1725.7,439.3 L1726.2,439.3 L1726.8,439.3 L1727.2,438.9 L1727.4,425.1 L1727.7,377.1 L1727.9,350.4 L1728.2,303.6 L1728.5,300.4 L1728.7,296.3 L1729,295.3 L1729.5,293.5 L1730.1,291.7 L1730.5,290.3 L1730.7,290.1 L1731.2,289.3 L1731.8,288.5 L1732.2,287.9 L1732.3,287.5 L1732.9,286.1 L1733.4,284.7 L1734,283.3 L1734.5,281.8 L1735,281.8 L1735.5,280.2 L1735.6,277.6 L1736.2,276.5 L1736.7,270.1 L1736.9,268.6 L1737.2,266.1 L1737.8,258.6 L1738.1,254.5 L1738.4,246.8 L1738.9,237.9 L1739,237 L1739.5,229 L1739.6,225.7 L1740,230.1 L1740.3,231.3 L1740.5,235.9 L1741,247.2 L1741.1,248.1 L1741.7,256.7 L1742,260.1 L1742.2,259.6 L1742.8,265.5 L1743.3,269.5 L1743.9,273.8 L1744.4,279.5 L1744.5,280.1 L1745,285.7 L1745,287.1 L1745.5,313.9 L1745.5,316.3 L1746,439.3 L1746,439.3 L1746.6,439.3 L1747.2,439.3 L1747.7,439.3 L1748.2,439.3 L1748.8,439.3 L1749.4,439.3 L1749.9,439.3 L1750.5,439.3 L1751,439.3 L1751.5,439.3 L1752.1,439.3 L1752.7,439.3 L1753.2,439.3 L1753.8,439.3 L1754.3,439.3 L1754.7,439.3 L1755.2,439.3 L1755.8,439.3 L1756.2,439.3 L1756.4,425.9 L1756.7,376.2 L1756.9,350.8 L1757.2,303.8 L1757.5,300.4 L1757.7,296.3 L1758,295.5 L1758.5,294.1 L1759.1,292.6 L1759.5,291.5 L1759.7,291.2 L1760.2,289.8 L1760.8,288.3 L1761.2,287.3 L1761.3,286.7 L1761.9,284.3 L1762.4,281.9 L1763,278.1 L1763,280 L1763.5,273 L1764,265.6 L1764.3,264.6 L1764.6,261.1 L1765.2,258.8 L1765.7,256.8 L1766.2,244.5 L1766.5,235.2 L1766.8,233.6 L1767,231.9 L1767.4,246.9 L1767.5,255.2 L1767.9,254.7 L1768.4,254.3 L1768.5,252.5 L1769,253.9 L1769.5,252.6 L1770.1,251 L1770.7,251.1 L1770.7,252.8 L1771.2,243.7 L1771.6,233.9 L1771.8,232.4 L1772.2,230 L1772.3,230 L1772.6,242.4 L1772.9,249.4 L1773.4,267.5 L1773.6,272.3 L1774,283.7 L1774,287 L1774.4,313.9 L1774.5,338.4 L1774.9,439.3 L1775,439.3 L1775.6,439.3 L1776.2,439.3 L1776.7,439.3 L1777.2,439.3 L1777.8,439.3 L1778.4,439.3 L1778.9,439.3 L1779.5,439.3 L1780,439.3 L1780.5,439.3 L1781.1,439.3 L1781.7,439.3 L1782.2,439.3 L1782.8,439.3 L1783.3,439.3 L1783.7,439.3 L1784.2,439.3 L1784.8,439.3 L1785.3,439.2 L1785.4,426.7 L1785.7,376.8 L1785.9,351.1 L1786.2,304 L1786.5,300.4 L1786.7,296.3 L1787,295.4 L1787.5,293.8 L1788.1,292.2 L1788.5,291 L1788.7,290.7 L1789.2,289.4 L1789.8,288.2 L1790.1,287.3 L1790.3,287.1 L1790.9,286.5 L1791.4,285.8 L1792,285.2 L1792.5,284.6 L1793,283.9 L1793.6,283.3 L1794.2,282.7 L1794.7,280.7 L1794.9,280.4 L1795.2,278.9 L1795.8,274.5 L1796.3,270.7 L1796.4,272.2 L1796.9,263.9 L1797.5,255.5 L1797.5,255.8 L1798,245.2 L1798.4,235.8 L1798.5,234.7 L1799,226.5 L1799.1,224.6 L1799.7,235.3 L1799.7,233.7 L1800.2,245.9 L1800.4,246.5 L1800.8,252.8 L1801.3,259.7 L1801.4,258.5 L1801.9,269.2 L1802.3,279.8 L1802.4,278.9 L1802.9,286.9 L1803,291.1 L1803.3,313.9 L1803.5,360.8 L1803.8,438.4 L1804,439.3 L1804.6,439.3 L1805.2,439.3 L1805.7,439.3 L1806.2,439.3 L1806.8,439.3 L1807.4,439.3 L1807.9,439.3 L1808.5,439.3 L1809,439.3 L1809.5,439.3 L1810.1,439.3 L1810.7,439.3 L1811.2,439.3 L1811.8,439.3 L1812.3,439.3 L1812.7,439.3 L1813.2,439.3 L1813.8,439.3 L1814.3,439.3 L1814.4,427.5 L1814.7,377.3 L1814.9,351.6 L1815.2,304.1 L1815.5,300.4 L1815.7,296.3 L1816,295.6 L1816.5,294.3 L1817.1,293 L1817.5,292 L1817.7,291.6 L1818.2,290 L1818.8,288.4 L1819.1,287.3 L1819.3,286.2 L1819.9,282.8 L1820.2,279.4 L1820.4,280.1 L1821,274 L1821.5,270.8 L1821.6,270.9 L1822,265.1 L1822.6,260.6 L1822.8,258.3 L1823.2,248.9 L1823.7,230.9 L1823.7,231 L1824.2,220.4 L1824.3,220.1 L1824.8,229.4 L1825,234.3 L1825.4,231.2 L1825.9,230.1 L1825.9,229.5 L1826.5,232.5 L1827,237.2 L1827.3,238.2 L1827.5,245.3 L1828.1,254.4 L1828.7,256.8 L1829.2,263.9 L1829.8,268.8 L1830.3,273.5 L1830.9,275.2 L1831.3,281 L1831.4,281.6 L1831.8,286.9 L1832,295.8 L1832.2,313.9 L1832.5,383.3 L1832.7,439.1 L1833,439.3 L1833.6,439.3 L1834.2,439.3 L1834.7,439.3 L1835.2,439.3 L1835.8,439.3 L1836.4,439.3 L1836.9,439.3 L1837.5,439.3 L1838,439.3 L1838.5,439.3 L1839.1,439.3 L1839.7,439.3 L1840.2,439.3 L1840.8,439.3 L1841.3,439.3 L1841.7,439.3 L1842.2,439.3 L1842.8,439.3 L1843.3,439.3 L1843.4,428.2 L1843.7,376.5 L1843.9,352 L1844.3,303.5 L1844.5,300.4 L1844.7,296.3 L1845,295.4 L1845.5,293.7 L1846.1,292 L1846.5,290.8 L1846.7,290.4 L1847.2,289 L1847.8,287.5 L1848.1,286.6 L1848.3,284.9 L1848.9,280.1 L1849,277.4 L1849.4,275.6 L1850,273.9 L1850.4,269.7 L1850.5,267.1 L1851,262.5 L1851.6,255 L1851.6,255.5 L1852.2,243.8 L1852.5,237 L1852.7,229.8 L1853.1,224.6 L1853.2,226.4 L1853.8,239.2 L1854.4,237 L1854.6,237.1 L1854.9,238.8 L1855.5,238.6 L1856,244.2 L1856,241.3 L1856.5,253.2 L1856.8,257.6 L1857.1,260.5 L1857.7,262.2 L1858.2,265.3 L1858.8,271 L1859.3,275.3 L1859.9,278.4 L1860.2,279.9 L1860.4,281.3 L1860.7,286.8 L1861,300.6 L1861.2,314 L1861.5,406.1 L1861.6,439.3 L1862,439.3 L1862.6,439.3 L1863.2,439.3 L1863.7,439.3 L1864.2,439.3 L1864.8,439.3 L1865.4,439.3 L1865.9,439.3 L1866.5,439.3 L1867,439.3 L1867.5,439.3 L1868.1,439.3 L1868.7,439.3 L1868.7,439.3 L1868.7,439.3 L1000.7,439.3 Z" fill="#7eb26d" fill-opacity="0.8" stroke="none"/><path d="M1000.7,439.3 L1001.2,439.3 L1001.8,439.3 L1002.1,438.8 L1002.4,408.1 L1002.6,376.3 L1002.9,347.4 L1003.3,305.7 L1003.5,304.1 L1003.8,299.4 L1004,299 L1004.6,297.8 L1005.1,296.7 L1005.7,295.5 L1005.8,295.2 L1006.2,294.2 L1006.8,293 L1007.3,291.7 L1007.8,290.6 L1007.9,290.2 L1008.4,284.9 L1008.5,283.8 L1009,281.6 L1009.4,276.8 L1009.5,274.1 L1010.1,268.2 L1010.2,267.8 L1010.6,263.7 L1010.9,259.7 L1011.2,259.6 L1011.7,258 L1012,254 L1012.2,254.1 L1012.8,248.5 L1013.4,246.9 L1013.4,244.6 L1013.9,247.5 L1014.4,251 L1014.5,247.8 L1015,241.9 L1015.3,233.1 L1015.6,229.7 L1016.1,225.7 L1016.3,222.9 L1016.7,224 L1017.1,227 L1017.2,225.8 L1017.8,237 L1018,243.7 L1018.3,244.6 L1018.8,254.6 L1018.9,252.1 L1019.4,261.8 L1019.4,263.7 L1020,274.4 L1020.1,274.8 L1020.5,284 L1020.7,286.6 L1021.1,288.5 L1021.6,291.1 L1021.9,292.4 L1022.2,303.7 L1022.4,313.9 L1022.7,376.7 L1023,439.3 L1023.2,439.3 L1023.8,439.3 L1024.4,439.3 L1024.9,439.3 L1025.5,439.3 L1026,439.3 L1026.5,439.3 L1027.1,439.3 L1027.7,439.3 L1028.2,439.3 L1028.8,439.3 L1029.3,439.3 L1029.7,439.3 L1030.2,439.3 L1030.8,439.3 L1031.1,439.3 L1031.4,408.7 L1031.6,376.6 L1031.9,347.7 L1032.3,305.8 L1032.5,304.1 L1032.8,299.4 L1033,299.1 L1033.5,298.1 L1034.1,297.2 L1034.7,296.2 L1034.8,296 L1035.2,294.9 L1035.8,293.5 L1036.3,292.1 L1036.8,290.8 L1036.9,290.2 L1037.4,284.8 L1037.5,283.8 L1038,278.4 L1038.4,271.4 L1038.5,269.7 L1039,266.4 L1039.1,262 L1039.6,252.1 L1039.8,242.5 L1040.2,240.8 L1040.7,241.5 L1041,237.2 L1041.2,238.4 L1041.8,236.6 L1042.3,237.7 L1042.4,237.5 L1042.9,235 L1043.5,230.1 L1043.7,232.2 L1044,229.2 L1044.5,227.2 L1045,226 L1045.1,227.8 L1045.7,225.3 L1046.2,222.1 L1046.3,220.6 L1046.8,223.6 L1047.1,221.8 L1047.3,223.2 L1047.8,227.6 L1047.9,235.6 L1048.4,260.2 L1048.4,264.1 L1049,276.4 L1049,276 L1049.5,283.6 L1049.6,284.8 L1050,287.2 L1050.6,290 L1050.8,291.3 L1051.2,306.6 L1051.3,313.8 L1051.7,393.3 L1051.9,438.5 L1052.2,439.3 L1052.8,439.3 L1053.4,439.3 L1053.9,439.3 L1054.5,439.3 L1055,439.3 L1055.5,439.3 L1056.1,439.3 L1056.7,439.3 L1057.2,439.3 L1057.8,439.3 L1058.3,439.3 L1058.7,439.3 L1059.2,439.3 L1059.8,439.3 L1060.1,439.1 L1060.4,409.3 L1060.6,377.1 L1060.9,348 L1061.3,305.8 L1061.5,304.1 L1061.8,299.4 L1062,299 L1062.5,297.7 L1063.1,296.4 L1063.7,295.1 L1063.8,294.8 L1064.2,293.4 L1064.8,291.6 L1065.3,289.8 L1065.8,288.2 L1065.9,287.7 L1066.4,284.3 L1066.5,283.7 L1067,273.1 L1067.4,267.9 L1067.5,266.6 L1068,254 L1068.1,254.9 L1068.6,237.5 L1068.8,230.7 L1069.2,228.1 L1069.7,225.1 L1070,225.5 L1070.2,226.6 L1070.8,230 L1071.3,228.5 L1071.4,231.5 L1071.9,226.6 L1072.5,222.2 L1072.6,223.9 L1073,223.3 L1073.5,224.9 L1074,227.9 L1074.1,226.1 L1074.7,224.3 L1075.1,219.6 L1075.2,221.1 L1075.8,221.1 L1076,224.3 L1076.3,225.5 L1076.7,225.8 L1076.9,235.1 L1077.3,259.9 L1077.4,264.4 L1077.9,276.5 L1078,276.3 L1078.5,286.7 L1078.5,286.9 L1079,288.5 L1079.6,290.1 L1079.7,290.5 L1080.2,310.1 L1080.2,313.8 L1080.7,410.1 L1080.8,439 L1081.2,439.3 L1081.8,439.3 L1082.4,439.3 L1082.9,439.3 L1083.5,439.3 L1084,439.3 L1084.5,439.3 L1085.1,439.3 L1085.7,439.3 L1086.2,439.3 L1086.8,439.3 L1087.3,439.3 L1087.7,439.3 L1088.2,439.3 L1088.8,439.3 L1089.1,439.3 L1089.4,410 L1089.6,376.4 L1089.9,348.2 L1090.3,305.9 L1090.5,304.1 L1090.8,299.4 L1091,299 L1091.5,297.8 L1092.1,296.6 L1092.7,295.3 L1092.7,295.1 L1093.2,294 L1093.8,292.6 L1094.3,291.3 L1094.8,290.1 L1094.9,289.3 L1095.4,284.3 L1095.5,283.7 L1096,276.9 L1096.4,268.9 L1096.5,267.7 L1097,263 L1097.1,263 L1097.6,252.6 L1097.8,245.8 L1098.2,246.1 L1098.7,243.2 L1098.9,244.5 L1099.2,242.6 L1099.8,240.3 L1100.2,238.8 L1100.4,237.9 L1100.9,238.3 L1101.5,234 L1101.6,234.6 L1102,232.8 L1102.5,233.9 L1102.9,233.8 L1103.1,230.2 L1103.7,228.9 L1104.2,225.1 L1104.2,226.7 L1104.8,227.6 L1105,227.8 L1105.3,230 L1105.6,232.7 L1105.9,244.2 L1106.2,262.5 L1106.4,266.4 L1106.8,274.8 L1107,278.3 L1107.4,284.4 L1107.5,284.7 L1108,287.2 L1108.6,289.7 L1108.7,289.9 L1109.2,313.8 L1109.7,427.1 L1109.8,439.3 L1110.2,439.3 L1110.8,439.3 L1111.4,439.3 L1111.9,439.3 L1112.5,439.3 L1113,439.3 L1113.5,439.3 L1114.1,439.3 L1114.7,439.3 L1115.2,439.3 L1115.8,439.3 L1116.3,439.3 L1116.7,439.3 L1117.2,439.3 L1117.8,439.3 L1118.1,439.3 L1118.4,410.6 L1118.6,376.8 L1118.9,348.5 L1119.3,306 L1119.5,304.1 L1119.8,299.5 L1120,298.8 L1120.5,296.8 L1121.1,294.9 L1121.7,292.9 L1121.7,292.6 L1122.2,291.8 L1122.8,290.9 L1123.3,290 L1123.7,289.2 L1123.9,288.3 L1124.4,284 L1124.4,283.7 L1125,272.1 L1125.3,262.3 L1125.5,259.2 L1126,248.8 L1126,250.9 L1126.6,246 L1126.8,246 L1127.2,243.9 L1127.7,242.2 L1127.9,240.6 L1128.2,241.2 L1128.8,243.4 L1129.2,244.4 L1129.4,246.3 L1129.9,243.2 L1130.5,239.6 L1130.5,238.5 L1131,242.1 L1131.5,242.7 L1131.8,244.1 L1132.1,244.4 L1132.7,238.6 L1133,237 L1133.2,238.6 L1133.8,240.9 L1133.9,240.8 L1134.3,243.9 L1134.6,245.6 L1134.9,254.3 L1135.2,262 L1135.4,267.9 L1135.8,276 L1136,278.6 L1136.4,284.8 L1136.5,285.3 L1137,287.5 L1137.6,289.7 L1137.6,291 L1138.1,315.1 L1138.2,329.6 L1138.7,439.3 L1138.7,439.3 L1139.2,439.3 L1139.8,439.3 L1140.4,439.3 L1140.9,439.3 L1141.5,439.3 L1142,439.3 L1142.5,439.3 L1143.1,439.3 L1143.7,439.3 L1144.2,439.3 L1144.8,439.3 L1145.3,439.3 L1145.7,439.3 L1146.2,439.3 L1146.8,439.3 L1147.1,438.8 L1147.4,411.2 L1147.6,376.2 L1147.9,348.8 L1148.3,306.1 L1148.5,304.1 L1148.8,299.4 L1149,298.8 L1149.5,297.1 L1150.1,295.3 L1150.7,293.5 L1150.7,293.3 L1151.2,292.6 L1151.8,291.9 L1152.3,291.1 L1152.7,290.5 L1152.9,289.2 L1153.4,283.9 L1153.4,283.7 L1154,274.4 L1154.3,268.9 L1154.5,264.1 L1155,249.8 L1155,247.8 L1155.6,246.9 L1155.7,246 L1156.2,244.3 L1156.7,240 L1156.9,238.5 L1157.2,239.8 L1157.8,241.8 L1158.2,244.1 L1158.4,242.6 L1158.9,240.3 L1159.5,239.3 L1159.5,239.5 L1160,241 L1160.5,239.7 L1160.8,240.9 L1161.1,240.2 L1161.7,237.2 L1161.9,233.4 L1162.2,236.1 L1162.8,239.6 L1162.8,237.7 L1163.3,241.9 L1163.5,243.6 L1163.9,252.3 L1164.1,261.8 L1164.4,269.2 L1164.7,275.7 L1165,280.7 L1165.3,285.7 L1165.5,286.3 L1166,288.1 L1166.5,289.8 L1166.6,294.7 L1167,315 L1167.2,346.4 L1167.6,438.4 L1167.7,439.3 L1168.2,439.3 L1168.8,439.3 L1169.4,439.3 L1169.9,439.3 L1170.5,439.3 L1171,439.3 L1171.5,439.3 L1172.1,439.3 L1172.7,439.3 L1173.2,439.3 L1173.8,439.3 L1174.3,439.3 L1174.7,439.3 L1175.2,439.3 L1175.8,439.3 L1176.1,439.3 L1176.4,411.9 L1176.6,376.6 L1176.9,349 L1177.3,305.6 L1177.5,304.1 L1177.8,299.4 L1178,298.9 L1178.5,297.2 L1179.1,295.6 L1179.7,294 L1179.7,293.8 L1180.2,293.1 L1180.8,292.3 L1181.3,291.6 L1181.7,291 L1181.9,289.4 L1182.4,283.6 L1183,271 L1183.3,264.4 L1183.5,259.7 L1184,253.7 L1184,253.6 L1184.6,246.2 L1184.7,245.2 L1185.2,246.2 L1185.7,241.9 L1185.8,242.4 L1186.2,241.4 L1186.8,243.9 L1187.1,247 L1187.4,245.7 L1187.9,243.2 L1188.4,237.2 L1188.5,239.9 L1189,239.6 L1189.5,241 L1189.7,240.7 L1190.1,239.1 L1190.7,236 L1190.9,237.4 L1191.2,236.5 L1191.7,240.9 L1191.8,240 L1192.3,244.1 L1192.4,245.2 L1192.9,256.3 L1193,261.9 L1193.4,271.3 L1193.6,275.5 L1194,281.2 L1194.2,285.9 L1194.5,287.2 L1195,289.9 L1195.4,291.8 L1195.6,299.9 L1195.9,315 L1196.2,363.3 L1196.5,438.9 L1196.7,439.3 L1197.2,439.3 L1197.8,439.3 L1198.4,439.3 L1198.9,439.3 L1199.5,439.3 L1200,439.3 L1200.5,439.3 L1201.1,439.3 L1201.7,439.3 L1202.2,439.3 L1202.8,439.3 L1203.3,439.3 L1203.7,439.3 L1204.2,439.3 L1204.8,439.3 L1205.1,439.1 L1205.4,412.5 L1205.6,377.1 L1205.9,349.3 L1206.3,305.6 L1206.5,304.1 L1206.8,299.4 L1207,299.1 L1207.5,298.2 L1208.1,297.3 L1208.7,296.3 L1208.7,296.3 L1209.2,294.6 L1209.8,292.8 L1210.3,291 L1210.7,289.8 L1210.9,288.3 L1211.4,283.8 L1211.4,283.2 L1212,271.2 L1212.3,263.7 L1212.5,262 L1213,255.4 L1213,253.3 L1213.6,241.7 L1213.7,239.8 L1214.2,236.9 L1214.7,233.3 L1214.8,234.5 L1215.2,235.7 L1215.8,240.1 L1216.1,242.5 L1216.4,238.1 L1216.9,235.6 L1217.4,232.6 L1217.5,233.4 L1218,235.9 L1218.5,238.4 L1218.7,236.8 L1219.1,233.3 L1219.7,229.3 L1219.8,229.8 L1220.2,232.1 L1220.7,234 L1220.8,236.3 L1221.3,237 L1221.4,239.2 L1221.9,258.8 L1222,263.6 L1222.4,270.9 L1222.6,277.1 L1223,282.3 L1223.2,284.8 L1223.5,286.6 L1224,289.3 L1224.3,290.8 L1224.6,302.9 L1224.8,314.9 L1225.2,380.3 L1225.4,439.3 L1225.7,439.3 L1226.2,439.3 L1226.8,439.3 L1227.4,439.3 L1227.9,439.3 L1228.5,439.3 L1229,439.3 L1229.5,439.3 L1230.1,439.3 L1230.7,439.3 L1231.2,439.3 L1231.8,439.3 L1232.3,439.3 L1232.7,439.3 L1233.2,439.3 L1233.8,439.3 L1234.1,439.3 L1234.4,413.1 L1234.6,376.4 L1234.9,349.6 L1235.3,305.6 L1235.5,304.1 L1235.8,299.4 L1236,298.7 L1236.5,296.6 L1237.1,294.4 L1237.7,292.3 L1237.7,292.1 L1238.2,291.3 L1238.8,290.5 L1239.3,289.7 L1239.7,289.2 L1239.9,287.7 L1240.4,283.8 L1240.4,283.1 L1241,275.8 L1241.2,269.2 L1241.5,264.5 L1241.9,250.2 L1242,250 L1242.6,246.9 L1242.6,245 L1243.2,245.2 L1243.7,243 L1243.7,241.9 L1244.2,243.9 L1244.8,245 L1245,243.5 L1245.4,241.5 L1245.9,238.6 L1246.3,239.5 L1246.5,238.6 L1247,240 L1247.5,239.9 L1247.6,240.4 L1248.1,236.5 L1248.7,236 L1248.8,236.7 L1249.2,236.4 L1249.6,240.5 L1249.8,239.5 L1250.3,243.3 L1250.3,241.9 L1250.9,260.1 L1250.9,261.4 L1251.4,275.1 L1251.5,276.3 L1252,283.2 L1252.1,285.2 L1252.5,287.7 L1253,290.9 L1253.3,292.2 L1253.6,307.1 L1253.8,314.9 L1254.2,397.5 L1254.4,439.3 L1254.7,439.3 L1255.2,439.3 L1255.8,439.3 L1256.4,439.3 L1256.9,439.3 L1257.5,439.3 L1258,439.3 L1258.5,439.3 L1259.1,439.3 L1259.7,439.3 L1260.2,439.3 L1260.8,439.3 L1261.3,439.3 L1261.7,439.3 L1262.2,439.3 L1262.8,439.3 L1263.2,439.3 L1263.4,413.8 L1263.6,376.8 L1263.9,349.9 L1264.3,305.6 L1264.5,304.1 L1264.8,299.4 L1265,298.8 L1265.5,296.8 L1266.1,294.9 L1266.7,292.9 L1266.7,292.8 L1267.2,292.3 L1267.8,291.8 L1268.3,291.2 L1268.7,290.9 L1268.9,288.8 L1269.3,283.8 L1269.4,283.1 L1270,272.7 L1270.2,270 L1270.5,262.3 L1270.9,257.2 L1271,256.7 L1271.6,254.4 L1271.6,254.1 L1272.2,250.3 L1272.7,251.5 L1272.7,249.9 L1273.2,248.6 L1273.8,248 L1274,245.8 L1274.4,244.2 L1274.9,244.3 L1275.3,241.6 L1275.5,241.3 L1276,242.2 L1276.5,237.5 L1276.6,239 L1277.1,237.8 L1277.7,233.5 L1277.9,233.8 L1278.2,232.5 L1278.6,235.2 L1278.8,233.9 L1279.2,239.8 L1279.3,241.6 L1279.8,262.2 L1279.9,261.5 L1280.4,276.5 L1280.4,277.2 L1281,285.9 L1281,287 L1281.5,289.3 L1282,291.9 L1282.2,292.7 L1282.6,310.7 L1282.7,314.8 L1283.2,414.8 L1283.3,439.3 L1283.7,439.3 L1284.2,439.3 L1284.8,439.3 L1285.4,439.3 L1285.9,439.3 L1286.5,439.3 L1287,439.3 L1287.5,439.3 L1288.1,439.3 L1288.7,439.3 L1289.2,439.3 L1289.8,439.3 L1290.3,439.3 L1290.7,439.3 L1291.2,439.3 L1291.8,439.3 L1292.2,438.8 L1292.4,414.5 L1292.6,377.3 L1292.9,350.2 L1293.3,305.7 L1293.5,304.1 L1293.8,299.4 L1294,298.9 L1294.5,297.5 L1295.1,296 L1295.7,294.5 L1295.7,294.5 L1296.2,292.9 L1296.8,291.2 L1297.3,289.5 L1297.6,288.5 L1297.9,287 L1298.3,283.7 L1298.4,283.5 L1299,270.3 L1299.2,265.5 L1299.5,254.9 L1299.9,247.7 L1300,244.4 L1300.6,241 L1300.6,239 L1301.2,233.6 L1301.2,234.6 L1301.7,239.9 L1302.1,243.2 L1302.2,244.2 L1302.8,242.8 L1303.4,241.6 L1303.4,240.7 L1303.9,241.9 L1304.5,241.4 L1304.7,244.7 L1305,243.8 L1305.5,242.8 L1306,242.5 L1306.1,242.4 L1306.7,244 L1307.2,244.4 L1307.2,246.2 L1307.8,245.1 L1308.2,249.1 L1308.3,249.7 L1308.8,261 L1308.9,263.3 L1309.4,276.5 L1309.4,275.6 L1309.9,286.2 L1310,286.2 L1310.5,289.1 L1311,292 L1311.1,292.4 L1311.6,314.7 L1312.2,432.3 L1312.2,438.7 L1312.7,439.3 L1313.2,439.3 L1313.8,439.3 L1314.4,439.3 L1314.9,439.3 L1315.5,439.3 L1316,439.3 L1316.5,439.3 L1317.1,439.3 L1317.7,439.3 L1318.2,439.3 L1318.8,439.3 L1319.3,439.3 L1319.7,439.3 L1320.2,439.3 L1320.8,439.3 L1321.2,439.3 L1321.4,415.1 L1321.7,376.5 L1321.9,350.5 L1322.3,305.7 L1322.5,304.1 L1322.8,299.4 L1323,298.8 L1323.5,296.9 L1324.1,294.9 L1324.7,293 L1324.7,293 L1325.2,292.4 L1325.8,291.7 L1326.3,291.1 L1326.6,290.7 L1326.9,288.3 L1327.3,283.7 L1327.4,281.2 L1328,269.9 L1328.2,266.7 L1328.5,261 L1328.9,256.8 L1329,252.1 L1329.5,243.7 L1329.6,239.8 L1330.2,238.1 L1330.6,233.8 L1330.7,236.4 L1331.2,239.8 L1331.8,244 L1331.9,242.6 L1332.4,239.3 L1332.9,237.5 L1333.2,234.9 L1333.5,235.6 L1334,236.2 L1334.5,239.3 L1334.5,239.4 L1335.1,233.2 L1335.6,230.4 L1335.7,231.8 L1336.2,233 L1336.4,235 L1336.8,238.8 L1337.1,238.8 L1337.3,248.5 L1337.7,262 L1337.9,265 L1338.3,275.9 L1338.4,278.3 L1338.9,285.5 L1339,286 L1339.5,288.3 L1340,290.6 L1340,291.5 L1340.5,314.7 L1340.6,331.9 L1341.1,439.2 L1341.2,439.3 L1341.7,439.3 L1342.2,439.3 L1342.8,439.3 L1343.4,439.3 L1343.9,439.3 L1344.5,439.3 L1345,439.3 L1345.5,439.3 L1346.1,439.3 L1346.7,439.3 L1347.2,439.3 L1347.8,439.3 L1348.3,439.3 L1348.7,439.3 L1349.2,439.3 L1349.8,439.3 L1350.2,439.1 L1350.4,415.8 L1350.7,377 L1350.9,350.7 L1351.3,305.7 L1351.5,304.1 L1351.8,299.5 L1352,299.1 L1352.5,298.1 L1353.1,297.1 L1353.7,296.1 L1354.2,294 L1354.8,291.9 L1355.3,289.7 L1355.6,288.6 L1355.9,286.8 L1356.3,283.7 L1356.4,282.5 L1357,272 L1357.1,265.9 L1357.5,258.3 L1357.8,253.8 L1358,247.8 L1358.5,245.6 L1358.6,245.4 L1359.2,239.5 L1359.6,237.1 L1359.7,238.1 L1360.2,240.1 L1360.8,241.5 L1360.9,240.4 L1361.4,239.7 L1361.9,239.3 L1362.2,238.9 L1362.5,237.4 L1363,240 L1363.4,241 L1363.5,239.6 L1364.1,237 L1364.5,235.3 L1364.7,234.6 L1365.2,236.2 L1365.4,239 L1365.8,240.8 L1366,243.7 L1366.3,250.6 L1366.6,261.9 L1366.9,266.6 L1367.2,275.3 L1367.4,277.5 L1367.8,285.2 L1368,286 L1368.5,288.5 L1369,290.6 L1369,295.3 L1369.4,314.6 L1369.6,349.1 L1370,439.3 L1370.2,439.3 L1370.7,439.3 L1371.2,439.3 L1371.8,439.3 L1372.4,439.3 L1372.9,439.3 L1373.5,439.3 L1374,439.3 L1374.5,439.3 L1375.1,439.3 L1375.7,439.3 L1376.2,439.3 L1376.8,439.3 L1377.3,439.3 L1377.7,439.3 L1378.2,439.3 L1378.8,439.3 L1379.2,439.3 L1379.4,416.5 L1379.7,376.3 L1379.9,351 L1380.3,305.8 L1380.5,304.1 L1380.8,299.4 L1381,299 L1381.5,297.7 L1382.1,296.5 L1382.6,295.3 L1382.7,295.2 L1383.2,294.3 L1383.8,293.3 L1384.3,292.3 L1384.6,291.8 L1384.9,288.5 L1385.2,283.7 L1385.4,280.3 L1386,267 L1386.1,261.2 L1386.5,256.2 L1386.8,250.5 L1387,246.9 L1387.5,239.1 L1387.6,238.9 L1388.1,236.2 L1388.2,235.7 L1388.7,242 L1389,243.8 L1389.2,243.8 L1389.8,242 L1390.2,242 L1390.4,240.4 L1390.9,244.2 L1391.5,247.3 L1391.5,247.8 L1392,245.9 L1392.5,243.8 L1392.8,241.5 L1393.1,243.8 L1393.7,246 L1394,244.3 L1394.2,245.8 L1394.8,250.2 L1395,251.2 L1395.3,257.6 L1395.6,262.3 L1395.9,267.7 L1396.1,274.7 L1396.4,280.4 L1396.7,286.2 L1397,287.4 L1397.5,290.3 L1397.9,292.5 L1398,300.2 L1398.4,314.6 L1398.6,366.6 L1398.9,439.3 L1399.2,439.3 L1399.7,439.3 L1400.2,439.3 L1400.8,439.3 L1401.4,439.3 L1401.9,439.3 L1402.5,439.3 L1403,439.3 L1403.5,439.3 L1404.1,439.3 L1404.7,439.3 L1405.2,439.3 L1405.8,439.3 L1406.3,439.3 L1406.7,439.3 L1407.2,439.3 L1407.8,439.3 L1408.2,439.3 L1408.4,417.2 L1408.7,376.7 L1408.9,351.3 L1409.3,305.9 L1409.5,304.1 L1409.8,299.4 L1410,298.9 L1410.5,297.2 L1411.1,295.6 L1411.6,294.1 L1411.7,294.1 L1412.2,293.3 L1412.8,292.6 L1413.3,291.9 L1413.5,291.6 L1413.9,288.1 L1414.2,283.7 L1414.4,282.9 L1415,279.6 L1415.1,280.7 L1415.5,272.8 L1415.8,270.6 L1416,268.2 L1416.4,265.2 L1416.6,263.4 L1417.2,259.2 L1417.5,254.4 L1417.7,255.3 L1418.2,253.4 L1418.8,248.7 L1418.8,250.6 L1419.4,248.9 L1419.8,248.4 L1419.9,248.8 L1420.5,240.5 L1420.6,235.1 L1421,230.9 L1421.5,225.2 L1421.6,225.9 L1422.1,225.3 L1422.3,229.1 L1422.7,233.9 L1423.2,245.3 L1423.2,245.4 L1423.8,252.7 L1423.9,252.3 L1424.3,259.7 L1424.5,261.7 L1424.9,269.8 L1425.1,275.4 L1425.4,282.7 L1425.7,286.6 L1426,287.7 L1426.5,289.6 L1426.8,290.8 L1427,303 L1427.3,314.5 L1427.6,384.2 L1427.9,438.6 L1428.2,439.3 L1428.7,439.3 L1429.2,439.3 L1429.8,439.3 L1430.4,439.3 L1430.9,439.3 L1431.5,439.3 L1432,439.3 L1432.5,439.3 L1433.1,439.3 L1433.7,439.3 L1434.2,439.3 L1434.8,439.3 L1435.3,439.3 L1435.7,439.3 L1436.2,439.3 L1436.8,439.3 L1437.2,438.8 L1437.4,417.9 L1437.7,377.2 L1437.9,351.6 L1438.3,306 L1438.5,304.1 L1438.8,299.4 L1439,298.7 L1439.5,296.7 L1440.1,294.8 L1440.6,292.9 L1440.7,292.8 L1441.2,291.8 L1441.8,290.8 L1442.3,289.8 L1442.5,289.3 L1442.9,286.7 L1443.2,283.6 L1443.4,280.7 L1444,266.7 L1444.1,262.6 L1444.5,260.2 L1444.7,255.6 L1445,248.1 L1445.4,239.6 L1445.6,239.6 L1446.2,237 L1446.5,235.1 L1446.7,237.5 L1447.2,239.2 L1447.8,239.3 L1447.8,241.2 L1448.4,236.3 L1448.9,233.2 L1449,232 L1449.5,236.9 L1450,236.9 L1450.3,238.4 L1450.5,236.4 L1451.1,232 L1451.4,229.8 L1451.7,230.8 L1452.2,234.3 L1452.2,233.2 L1452.8,237.4 L1452.9,236.7 L1453.3,256.4 L1453.4,263.5 L1453.9,273.9 L1454,276.7 L1454.4,283.6 L1454.6,286.6 L1455,288.2 L1455.5,290.5 L1455.7,291.4 L1456,307 L1456.2,314.5 L1456.6,401.9 L1456.8,439.1 L1457.2,439.3 L1457.7,439.3 L1458.2,439.3 L1458.8,439.3 L1459.4,439.3 L1459.9,439.3 L1460.5,439.3 L1461,439.3 L1461.5,439.3 L1462.1,439.3 L1462.7,439.3 L1463.2,439.3 L1463.8,439.3 L1464.3,439.3 L1464.7,439.3 L1465.2,439.3 L1465.8,439.3 L1466.2,439.3 L1466.4,418.6 L1466.7,376.5 L1466.9,351.9 L1467.3,306.1 L1467.5,304.1 L1467.8,299.4 L1468,299.1 L1468.5,298.1 L1469.1,297.1 L1469.6,296.2 L1469.7,296.1 L1470.2,293.9 L1470.8,291.8 L1471.3,289.7 L1471.5,288.9 L1471.9,286.3 L1472.2,283.8 L1472.4,277.7 L1473,268.5 L1473,264.6 L1473.5,256.9 L1473.7,248.3 L1474,242.5 L1474.4,235.3 L1474.6,233.5 L1475,227.7 L1475.2,232.3 L1475.7,238.3 L1475.9,238.5 L1476.2,236.5 L1476.8,235.5 L1477.1,234.4 L1477.4,235.2 L1477.9,238 L1478.4,239 L1478.5,238.1 L1479,235.5 L1479.5,236 L1479.6,233.9 L1480.1,236.2 L1480.7,238.6 L1480.9,237.8 L1481.2,240.1 L1481.8,243.8 L1481.8,242.3 L1482.3,260.5 L1482.4,262.5 L1482.9,273.1 L1482.9,275 L1483.4,283.9 L1483.5,285.5 L1484,287.2 L1484.5,289.4 L1484.6,289.9 L1485,310.6 L1485.1,314.4 L1485.6,419.8 L1485.7,439.3 L1486.2,439.3 L1486.7,439.3 L1487.2,439.3 L1487.8,439.3 L1488.4,439.3 L1488.9,439.3 L1489.5,439.3 L1490,439.3 L1490.5,439.3 L1491.1,439.3 L1491.7,439.3 L1492.2,439.3 L1492.8,439.3 L1493.3,439.3 L1493.7,439.3 L1494.2,439.3 L1494.8,439.3 L1495.2,439.1 L1495.4,419.3 L1495.7,376.9 L1495.9,352.2 L1496.3,306.2 L1496.5,304.1 L1496.8,299.4 L1497,298.8 L1497.5,296.9 L1498.1,295 L1498.6,293.3 L1498.7,293.2 L1499.2,292.4 L1499.8,291.6 L1500.3,290.8 L1500.5,290.5 L1500.9,287 L1501.2,283.8 L1501.4,278.6 L1502,261.9 L1502,259.8 L1502.5,254.4 L1502.7,252.2 L1503,238.9 L1503.3,229 L1503.6,226.9 L1503.9,225.2 L1504.2,228.6 L1504.7,234.1 L1504.8,235.1 L1505.2,232.3 L1505.8,232.9 L1506.1,232.1 L1506.4,232 L1506.9,232.9 L1507.3,237.5 L1507.5,237.7 L1508,235.6 L1508.5,232.1 L1508.6,231.9 L1509.1,234.8 L1509.7,236.2 L1509.8,235 L1510.2,236.6 L1510.7,238.8 L1510.8,239.7 L1511.3,263.4 L1511.3,262.1 L1511.9,274.9 L1511.9,274.7 L1512.4,285 L1512.4,285.5 L1513,287.4 L1513.5,289.6 L1513.6,290.1 L1514,314.4 L1514,316.6 L1514.6,437.9 L1514.6,439.3 L1515.2,439.3 L1515.7,439.3 L1516.2,439.3 L1516.8,439.3 L1517.4,439.3 L1517.9,439.3 L1518.5,439.3 L1519,439.3 L1519.5,439.3 L1520.1,439.3 L1520.7,439.3 L1521.2,439.3 L1521.8,439.3 L1522.3,439.3 L1522.7,439.3 L1523.2,439.3 L1523.8,439.3 L1524.2,439.3 L1524.4,420 L1524.7,376.2 L1524.9,352.5 L1525.3,305.6 L1525.5,304.1 L1525.8,299.4 L1526,299 L1526.5,297.8 L1527.1,296.6 L1527.6,295.5 L1527.7,295.3 L1528.2,293.8 L1528.8,292.2 L1529.3,290.7 L1529.5,290.1 L1529.9,286.6 L1530.1,283.8 L1530.4,279.9 L1531,275.2 L1531,273.8 L1531.5,260.7 L1531.7,255.4 L1532,251.5 L1532.3,249 L1532.6,248.5 L1533.2,244.8 L1533.4,246.2 L1533.7,242.6 L1534.2,242.3 L1534.6,241.1 L1534.8,239.5 L1535.4,237.8 L1535.9,238.2 L1535.9,236.4 L1536.5,236.3 L1537,233.4 L1537.1,233.5 L1537.5,229.4 L1538.1,227.2 L1538.3,227.3 L1538.7,229.7 L1539.1,227.7 L1539.2,230.8 L1539.7,237.5 L1539.8,238 L1540.2,260.2 L1540.3,265.1 L1540.8,278.3 L1540.9,277.8 L1541.4,284.8 L1541.4,285.1 L1542,288.9 L1542.5,292.7 L1542.5,293.2 L1543,314.3 L1543,334.3 L1543.5,438.4 L1543.6,439.3 L1544.2,439.3 L1544.7,439.3 L1545.2,439.3 L1545.8,439.3 L1546.4,439.3 L1546.9,439.3 L1547.5,439.3 L1548,439.3 L1548.5,439.3 L1549.1,439.3 L1549.7,439.3 L1550.2,439.3 L1550.8,439.3 L1551.3,439.3 L1551.7,439.3 L1552.2,439.3 L1552.8,439.3 L1553.2,439.3 L1553.4,420.7 L1553.7,376.6 L1553.9,352.8 L1554.3,305.6 L1554.5,304.2 L1554.8,299.4 L1555,298.6 L1555.5,296.4 L1556.1,294.3 L1556.6,292.3 L1556.7,292.3 L1557.2,292.2 L1557.8,292 L1558.3,291.8 L1558.5,291.8 L1558.9,287.1 L1559.1,283.8 L1559.4,281.6 L1560,276.8 L1560,275.8 L1560.5,268.1 L1560.6,266.2 L1561,264.6 L1561.3,264.3 L1561.6,262.5 L1562.2,257.7 L1562.4,257.9 L1562.7,256.6 L1563.2,250.5 L1563.6,248.3 L1563.8,247.8 L1564.4,252.8 L1564.6,253.2 L1564.9,255.6 L1565.4,256.9 L1565.5,254.2 L1566,248.2 L1566.3,244.8 L1566.5,244.1 L1567,250 L1567.1,250.3 L1567.7,259.8 L1567.9,267 L1568.2,258.7 L1568.6,254.1 L1568.8,257.6 L1569.2,262.8 L1569.3,265.7 L1569.7,276.8 L1569.9,278.4 L1570.3,285 L1570.4,285.6 L1571,287.8 L1571.4,289.7 L1571.5,294.4 L1571.9,314.3 L1572,352.1 L1572.4,438.9 L1572.6,439.3 L1573.2,439.3 L1573.7,439.3 L1574.2,439.3 L1574.8,439.3 L1575.4,439.3 L1575.9,439.3 L1576.5,439.3 L1577,439.3 L1577.5,439.3 L1578.1,439.3 L1578.7,439.3 L1579.2,439.3 L1579.8,439.3 L1580.3,439.3 L1580.7,439.3 L1581.2,439.3 L1581.8,439.3 L1582.2,438.9 L1582.4,421.4 L1582.7,377.1 L1582.9,353.2 L1583.3,305.6 L1583.5,304.2 L1583.8,299.5 L1584,298.6 L1584.5,296.4 L1585.1,294.2 L1585.6,292.2 L1585.7,292.2 L1586.2,291.9 L1586.8,291.6 L1587.3,291.4 L1587.5,291.2 L1587.9,286.6 L1588.1,283.7 L1588.4,278.7 L1588.9,265.8 L1589,263.4 L1589.5,258.5 L1589.6,256.2 L1590,236.3 L1590.2,228.8 L1590.6,227.3 L1591.2,224.6 L1591.3,225.2 L1591.7,225.2 L1592.2,225.1 L1592.5,225.3 L1592.8,224.4 L1593.4,223.9 L1593.8,220.7 L1593.9,224.4 L1594.5,223.1 L1595,227.2 L1595,226.5 L1595.5,223.1 L1596.1,220.2 L1596.1,218 L1596.7,223.6 L1596.9,223.7 L1597.2,225.7 L1597.5,228.5 L1597.8,242.2 L1598.1,262.3 L1598.3,269.1 L1598.7,275.9 L1598.9,278.4 L1599.2,284.7 L1599.4,285.8 L1600,289 L1600.3,291.1 L1600.5,299.4 L1600.8,314.2 L1601,370.1 L1601.4,439.3 L1601.6,439.3 L1602.2,439.3 L1602.7,439.3 L1603.2,439.3 L1603.8,439.3 L1604.4,439.3 L1604.9,439.3 L1605.5,439.3 L1606,439.3 L1606.5,439.3 L1607.1,439.3 L1607.7,439.3 L1608.2,439.3 L1608.8,439.3 L1609.3,439.3 L1609.7,439.3 L1610.2,439.3 L1610.8,439.3 L1611.2,439.3 L1611.4,422.1 L1611.7,376.4 L1611.9,353.5 L1612.3,305.6 L1612.5,304.2 L1612.8,299.4 L1613,299 L1613.5,297.9 L1614.1,296.9 L1614.6,295.9 L1614.7,295.7 L1615.2,293.7 L1615.8,291.7 L1616.3,289.7 L1616.4,289.2 L1616.9,285.7 L1617.1,283.7 L1617.4,281 L1617.9,276.3 L1618,276.9 L1618.5,262.6 L1618.6,260 L1619,252.9 L1619.2,246.6 L1619.6,246.3 L1620.2,241.8 L1620.3,238.8 L1620.7,238.7 L1621.2,237.5 L1621.5,236.4 L1621.8,233.3 L1622.4,231.7 L1622.7,231.8 L1622.9,232.1 L1623.5,230.4 L1623.9,227.2 L1624,227.4 L1624.5,223.2 L1625.1,222.7 L1625.2,222.9 L1625.7,222 L1625.9,222 L1626.2,228.4 L1626.5,232 L1626.8,248 L1627,262 L1627.3,270 L1627.6,275.8 L1627.9,282.6 L1628.1,285.9 L1628.4,287.2 L1629,290 L1629.2,291.6 L1629.5,303.4 L1629.7,314.1 L1630,388.3 L1630.3,439.3 L1630.6,439.3 L1631.2,439.3 L1631.7,439.3 L1632.2,439.3 L1632.8,439.3 L1633.4,439.3 L1633.9,439.3 L1634.5,439.3 L1635,439.3 L1635.5,439.3 L1636.1,439.3 L1636.7,439.3 L1637.2,439.3 L1637.8,439.3 L1638.3,439.3 L1638.7,439.3 L1639.2,439.3 L1639.8,439.3 L1640.2,439.1 L1640.4,422.9 L1640.7,376.8 L1640.9,353.8 L1641.3,305.7 L1641.5,304.2 L1641.8,299.4 L1642,298.7 L1642.5,296.7 L1643.1,294.7 L1643.6,293.1 L1643.7,292.9 L1644.2,292.1 L1644.8,291.3 L1645.3,290.5 L1645.4,290.3 L1645.9,285.9 L1646.1,283.7 L1646.4,277.4 L1646.9,268.8 L1647,266.4 L1647.5,253.6 L1647.5,252 L1648,248 L1648.2,249.2 L1648.6,246.1 L1649.2,242.1 L1649.2,240.7 L1649.7,243.4 L1650.2,246.5 L1650.5,250.3 L1650.8,248.5 L1651.4,242 L1651.7,243.1 L1651.9,242.4 L1652.5,243.2 L1652.9,245.5 L1653,245.3 L1653.5,239.5 L1653.9,239.1 L1654.1,238.9 L1654.7,240.7 L1654.8,243.9 L1655.2,245.9 L1655.4,246.7 L1655.8,255.9 L1656,263 L1656.3,271 L1656.5,278 L1656.9,283 L1657.1,287.3 L1657.4,288.5 L1658,290.6 L1658.2,291.6 L1658.5,307.2 L1658.6,314.1 L1659,406.6 L1659.2,438.2 L1659.6,439.3 L1660.2,439.3 L1660.7,439.3 L1661.2,439.3 L1661.8,439.3 L1662.4,439.3 L1662.9,439.3 L1663.5,439.3 L1664,439.3 L1664.5,439.3 L1665.1,439.3 L1665.7,439.3 L1666.2,439.3 L1666.8,439.3 L1667.3,439.3 L1667.7,439.3 L1668.2,439.3 L1668.8,439.3 L1669.2,439.3 L1669.4,423.6 L1669.7,376 L1669.9,349.6 L1670.2,303.5 L1670.5,300.4 L1670.7,296.3 L1671,295.6 L1671.5,294.3 L1672.1,293.1 L1672.5,292 L1672.7,291.8 L1673.2,290.4 L1673.8,289.1 L1674.2,287.9 L1674.3,287.7 L1674.9,286.6 L1675.4,285.5 L1676,284.4 L1676.5,283.2 L1677,281.8 L1677.1,280.6 L1677.6,275.2 L1678.2,269.6 L1678.6,266 L1678.7,264.9 L1679.2,258.1 L1679.8,254.8 L1679.8,255.4 L1680.4,246.5 L1680.7,240.8 L1680.9,237.5 L1681.4,229.4 L1681.5,230.8 L1682,240.1 L1682,238.8 L1682.5,249.8 L1682.7,252.8 L1683.1,255.7 L1683.7,258.8 L1683.7,259.6 L1684.2,262.1 L1684.8,265.9 L1685.3,269.6 L1685.9,273.8 L1686.4,279.7 L1686.6,278.8 L1687,283.7 L1687.2,286.9 L1687.5,305.1 L1687.7,313.9 L1688,422.3 L1688.1,438.6 L1688.6,439.3 L1689.2,439.3 L1689.7,439.3 L1690.2,439.3 L1690.8,439.3 L1691.4,439.3 L1691.9,439.3 L1692.5,439.3 L1693,439.3 L1693.5,439.3 L1694.1,439.3 L1694.7,439.3 L1695.2,439.3 L1695.8,439.3 L1696.3,439.3 L1696.7,439.3 L1697.2,439.3 L1697.8,439.3 L1698.2,439.3 L1698.4,424.4 L1698.7,376.5 L1698.9,350 L1699.2,303.6 L1699.5,300.4 L1699.7,296.3 L1700,295.6 L1700.5,294.4 L1701.1,293.1 L1701.5,292.1 L1701.7,291.7 L1702.2,290 L1702.8,288.3 L1703.2,286.9 L1703.3,286.7 L1703.9,285.9 L1704.4,285.1 L1705,284.3 L1705.5,283.5 L1706,283.9 L1706.6,282.9 L1707.2,281.9 L1707.7,278.5 L1708.1,280.7 L1708.2,274.8 L1708.7,248.8 L1708.8,255.5 L1709.2,276.7 L1709.4,275.8 L1709.9,274.9 L1710,276.6 L1710.5,275.7 L1711,273.2 L1711.4,271.6 L1711.5,272 L1712.1,269 L1712.7,265.2 L1712.8,267.3 L1713.2,262.9 L1713.7,256.6 L1713.8,255.4 L1714.2,232.1 L1714.3,231.5 L1714.6,226.8 L1714.9,234.1 L1715.1,238.7 L1715.4,254.3 L1715.8,273.1 L1716,280.2 L1716.2,287.2 L1716.5,308.7 L1716.6,313.9 L1717,439.3 L1717,439.3 L1717.6,439.3 L1718.2,439.3 L1718.7,439.3 L1719.2,439.3 L1719.8,439.3 L1720.4,439.3 L1720.9,439.3 L1721.5,439.3 L1722,439.3 L1722.5,439.3 L1723.1,439.3 L1723.7,439.3 L1724.2,439.3 L1724.8,439.3 L1725.3,439.3 L1725.7,439.3 L1726.2,439.3 L1726.8,439.3 L1727.2,438.9 L1727.4,425.1 L1727.7,377.1 L1727.9,350.4 L1728.2,303.6 L1728.5,300.4 L1728.7,296.3 L1729,295.3 L1729.5,293.5 L1730.1,291.7 L1730.5,290.3 L1730.7,290.1 L1731.2,289.3 L1731.8,288.5 L1732.2,287.9 L1732.3,287.5 L1732.9,286.1 L1733.4,284.7 L1734,283.3 L1734.5,281.8 L1735,281.8 L1735.5,280.2 L1735.6,277.6 L1736.2,276.5 L1736.7,270.1 L1736.9,268.6 L1737.2,266.1 L1737.8,258.6 L1738.1,254.5 L1738.4,246.8 L1738.9,237.9 L1739,237 L1739.5,229 L1739.6,225.7 L1740,230.1 L1740.3,231.3 L1740.5,235.9 L1741,247.2 L1741.1,248.1 L1741.7,256.7 L1742,260.1 L1742.2,259.6 L1742.8,265.5 L1743.3,269.5 L1743.9,273.8 L1744.4,279.5 L1744.5,280.1 L1745,285.7 L1745,287.1 L1745.5,313.9 L1745.5,316.3 L1746,439.3 L1746,439.3 L1746.6,439.3 L1747.2,439.3 L1747.7,439.3 L1748.2,439.3 L1748.8,439.3 L1749.4,439.3 L1749.9,439.3 L1750.5,439.3 L1751,439.3 L1751.5,439.3 L1752.1,439.3 L1752.7,439.3 L1753.2,439.3 L1753.8,439.3 L1754.3,439.3 L1754.7,439.3 L1755.2,439.3 L1755.8,439.3 L1756.2,439.3 L1756.4,425.9 L1756.7,376.2 L1756.9,350.8 L1757.2,303.8 L1757.5,300.4 L1757.7,296.3 L1758,295.5 L1758.5,294.1 L1759.1,292.6 L1759.5,291.5 L1759.7,291.2 L1760.2,289.8 L1760.8,288.3 L1761.2,287.3 L1761.3,286.7 L1761.9,284.3 L1762.4,281.9 L1763,278.1 L1763,280 L1763.5,273 L1764,265.6 L1764.3,264.6 L1764.6,261.1 L1765.2,258.8 L1765.7,256.8 L1766.2,244.5 L1766.5,235.2 L1766.8,233.6 L1767,231.9 L1767.4,246.9 L1767.5,255.2 L1767.9,254.7 L1768.4,254.3 L1768.5,252.5 L1769,253.9 L1769.5,252.6 L1770.1,251 L1770.7,251.1 L1770.7,252.8 L1771.2,243.7 L1771.6,233.9 L1771.8,232.4 L1772.2,230 L1772.3,230 L1772.6,242.4 L1772.9,249.4 L1773.4,267.5 L1773.6,272.3 L1774,283.7 L1774,287 L1774.4,313.9 L1774.5,338.4 L1774.9,439.3 L1775,439.3 L1775.6,439.3 L1776.2,439.3 L1776.7,439.3 L1777.2,439.3 L1777.8,439.3 L1778.4,439.3 L1778.9,439.3 L1779.5,439.3 L1780,439.3 L1780.5,439.3 L1781.1,439.3 L1781.7,439.3 L1782.2,439.3 L1782.8,439.3 L1783.3,439.3 L1783.7,439.3 L1784.2,439.3 L1784.8,439.3 L1785.3,439.2 L1785.4,426.7 L1785.7,376.8 L1785.9,351.1 L1786.2,304 L1786.5,300.4 L1786.7,296.3 L1787,295.4 L1787.5,293.8 L1788.1,292.2 L1788.5,291 L1788.7,290.7 L1789.2,289.4 L1789.8,288.2 L1790.1,287.3 L1790.3,287.1 L1790.9,286.5 L1791.4,285.8 L1792,285.2 L1792.5,284.6 L1793,283.9 L1793.6,283.3 L1794.2,282.7 L1794.7,280.7 L1794.9,280.4 L1795.2,278.9 L1795.8,274.5 L1796.3,270.7 L1796.4,272.2 L1796.9,263.9 L1797.5,255.5 L1797.5,255.8 L1798,245.2 L1798.4,235.8 L1798.5,234.7 L1799,226.5 L1799.1,224.6 L1799.7,235.3 L1799.7,233.7 L1800.2,245.9 L1800.4,246.5 L1800.8,252.8 L1801.3,259.7 L1801.4,258.5 L1801.9,269.2 L1802.3,279.8 L1802.4,278.9 L1802.9,286.9 L1803,291.1 L1803.3,313.9 L1803.5,360.8 L1803.8,438.4 L1804,439.3 L1804.6,439.3 L1805.2,439.3 L1805.7,439.3 L1806.2,439.3 L1806.8,439.3 L1807.4,439.3 L1807.9,439.3 L1808.5,439.3 L1809,439.3 L1809.5,439.3 L1810.1,439.3 L1810.7,439.3 L1811.2,439.3 L1811.8,439.3 L1812.3,439.3 L1812.7,439.3 L1813.2,439.3 L1813.8,439.3 L1814.3,439.3 L1814.4,427.5 L1814.7,377.3 L1814.9,351.6 L1815.2,304.1 L1815.5,300.4 L1815.7,296.3 L1816,295.6 L1816.5,294.3 L1817.1,293 L1817.5,292 L1817.7,291.6 L1818.2,290 L1818.8,288.4 L1819.1,287.3 L1819.3,286.2 L1819.9,282.8 L1820.2,279.4 L1820.4,280.1 L1821,274 L1821.5,270.8 L1821.6,270.9 L1822,265.1 L1822.6,260.6 L1822.8,258.3 L1823.2,248.9 L1823.7,230.9 L1823.7,231 L1824.2,220.4 L1824.3,220.1 L1824.8,229.4 L1825,234.3 L1825.4,231.2 L1825.9,230.1 L1825.9,229.5 L1826.5,232.5 L1827,237.2 L1827.3,238.2 L1827.5,245.3 L1828.1,254.4 L1828.7,256.8 L1829.2,263.9 L1829.8,268.8 L1830.3,273.5 L1830.9,275.2 L1831.3,281 L1831.4,281.6 L1831.8,286.9 L1832,295.8 L1832.2,313.9 L1832.5,383.3 L1832.7,439.1 L1833,439.3 L1833.6,439.3 L1834.2,439.3 L1834.7,439.3 L1835.2,439.3 L1835.8,439.3 L1836.4,439.3 L1836.9,439.3 L1837.5,439.3 L1838,439.3 L1838.5,439.3 L1839.1,439.3 L1839.7,439.3 L1840.2,439.3 L1840.8,439.3 L1841.3,439.3 L1841.7,439.3 L1842.2,439.3 L1842.8,439.3 L1843.3,439.3 L1843.4,428.2 L1843.7,376.5 L1843.9,352 L1844.3,303.5 L1844.5,300.4 L1844.7,296.3 L1845,295.4 L1845.5,293.7 L1846.1,292 L1846.5,290.8 L1846.7,290.4 L1847.2,289 L1847.8,287.5 L1848.1,286.6 L1848.3,284.9 L1848.9,280.1 L1849,277.4 L1849.4,275.6 L1850,273.9 L1850.4,269.7 L1850.5,267.1 L1851,262.5 L1851.6,255 L1851.6,255.5 L1852.2,243.8 L1852.5,237 L1852.7,229.8 L1853.1,224.6 L1853.2,226.4 L1853.8,239.2 L1854.4,237 L1854.6,237.1 L1854.9,238.8 L1855.5,238.6 L1856,244.2 L1856,241.3 L1856.5,253.2 L1856.8,257.6 L1857.1,260.5 L1857.7,262.2 L1858.2,265.3 L1858.8,271 L1859.3,275.3 L1859.9,278.4 L1860.2,279.9 L1860.4,281.3 L1860.7,286.8 L1861,300.6 L1861.2,314 L1861.5,406.1 L1861.6,439.3 L1862,439.3 L1862.6,439.3 L1863.2,439.3 L1863.7,439.3 L1864.2,439.3 L1864.8,439.3 L1865.4,439.3 L1865.9,439.3 L1866.5,439.3 L1867,439.3 L1867.5,439.3 L1868.1,439.3 L1868.7,439.3 L1868.7,439.3" fill="none" stroke="#7eb26d" stroke-width="2.8" stroke-linejoin="round" stroke-linecap="butt"/></g></g><text class="ax" x="994.1" y="442.4" text-anchor="end">0 V</text><text class="ax" x="994.1" y="390.2" text-anchor="end">5 V</text><text class="ax" x="994.1" y="338" text-anchor="end">10 V</text><text class="ax" x="994.1" y="285.8" text-anchor="end">15 V</text><text class="ax" x="994.1" y="233.6" text-anchor="end">20 V</text><text class="ax" x="994.1" y="181.4" text-anchor="end">25 V</text><text class="axx" x="1084" y="456.3" text-anchor="middle">8/5</text><text class="axx" x="1171" y="456.3" text-anchor="middle">8/8</text><text class="axx" x="1257.9" y="456.3" text-anchor="middle">8/11</text><text class="axx" x="1344.8" y="456.3" text-anchor="middle">8/14</text><text class="axx" x="1431.8" y="456.3" text-anchor="middle">8/17</text><text class="axx" x="1518.8" y="456.3" text-anchor="middle">8/20</text><text class="axx" x="1605.7" y="456.3" text-anchor="middle">8/23</text><text class="axx" x="1692.7" y="456.3" text-anchor="middle">8/26</text><text class="axx" x="1779.6" y="456.3" text-anchor="middle">8/29</text><text class="axx" x="1866.6" y="456.3" text-anchor="middle">9/1</text><clipPath id="c3"><rect x="380.8" y="536.0" width="548.0999999999999" height="146.10000000000005"/></clipPath><g stroke="rgba(255,255,255,0.13)" stroke-width="1" shape-rendering="crispEdges"><line x1="435.4" y1="538" x2="435.4" y2="679.7"/><line x1="490.1" y1="538" x2="490.1" y2="679.7"/><line x1="544.7" y1="538" x2="544.7" y2="679.7"/><line x1="599.4" y1="538" x2="599.4" y2="679.7"/><line x1="654.1" y1="538" x2="654.1" y2="679.7"/><line x1="708.8" y1="538" x2="708.8" y2="679.7"/><line x1="763.4" y1="538" x2="763.4" y2="679.7"/><line x1="818.1" y1="538" x2="818.1" y2="679.7"/><line x1="872.8" y1="538" x2="872.8" y2="679.7"/><line x1="927.4" y1="538" x2="927.4" y2="679.7"/><line x1="381.8" y1="679.7" x2="927.9" y2="679.7"/><line x1="381.8" y1="651.4" x2="927.9" y2="651.4"/><line x1="381.8" y1="623" x2="927.9" y2="623"/><line x1="381.8" y1="594.7" x2="927.9" y2="594.7"/><line x1="381.8" y1="566.3" x2="927.9" y2="566.3"/><line x1="381.8" y1="538" x2="927.9" y2="538"/></g><g clip-path="url(#c3)"><g transform="translate(0,0.8)"><path d="M381.8,669.7 L382.3,670.8 L382.8,672.3 L382.9,673.3 L383.3,666.6 L383.5,662.2 L383.8,659.3 L384.3,653.3 L384.7,647.9 L384.8,645.6 L385.3,633.6 L385.7,624.2 L385.8,622.3 L386.3,610.5 L386.7,598.9 L386.8,597.6 L387.3,589.3 L387.7,581.2 L387.8,579 L388.3,560.6 L388.3,558.6 L388.8,553.2 L389.3,559.8 L389.4,560.7 L389.8,576.3 L389.9,580.5 L390.3,591.5 L390.6,599.8 L390.8,604.1 L391.3,614.1 L391.8,617.6 L392,618.2 L392.3,619.7 L392.8,620.8 L393.3,628.3 L393.6,633.8 L393.8,636.2 L394.3,642.3 L394.7,646.2 L394.8,647.5 L395.3,650.3 L395.8,653.8 L396,654.8 L396.3,656.4 L396.8,659 L397,659.7 L397.3,661 L397.8,662.6 L398.1,664.1 L398.3,664.5 L398.8,666.3 L399.1,667.1 L399.3,667.9 L399.8,669.6 L400,668.9 L400.5,670.9 L401,672.1 L401.2,673.2 L401.5,664.1 L401.8,656.9 L402,654.2 L402.5,646.7 L402.6,644.1 L403,644.5 L403.3,646.3 L403.5,638.5 L404,622 L404.3,612.2 L404.5,609.6 L405,603 L405.5,597 L406,592.2 L406.5,585.5 L406.6,585.1 L407,572.8 L407.5,559.2 L407.6,555.6 L408,571 L408.3,583.3 L408.5,590 L409,609.1 L409.5,615.5 L409.7,617.2 L410,614.2 L410.5,607.6 L411,610.1 L411.3,611.5 L411.5,618.4 L412,634.3 L412.2,639.5 L412.5,642.7 L413,645.9 L413.5,650 L413.6,651.5 L414,654.9 L414.5,659.3 L415,660.7 L415.5,662.3 L416,663.9 L416.5,665.4 L417,666.6 L417.2,667.8 L417.5,668.4 L418,668.9 L418.2,668.6 L418.7,671 L419.2,672.7 L419.4,674.2 L419.7,668.8 L420,662.6 L420.2,661.3 L420.7,654.6 L421.2,648.6 L421.2,649.1 L421.7,637.5 L422.2,626.4 L422.3,623.8 L422.7,614.4 L423.2,601.7 L423.3,598.9 L423.7,595.3 L424.2,589.4 L424.3,586.9 L424.7,572.5 L424.9,565.1 L425.2,561.4 L425.4,558.8 L425.7,562.9 L425.9,566 L426.2,572.7 L426.5,580.7 L426.7,586 L427.2,600.6 L427.7,610.7 L427.9,614.3 L428.2,617 L428.6,618.5 L428.7,618.7 L429.2,621.3 L429.3,621.8 L429.7,626.9 L430.1,633.6 L430.2,634.9 L430.7,640.7 L431.2,646.6 L431.7,650.7 L432.2,653.7 L432.4,655 L432.7,655.8 L433.2,658.9 L433.4,659.4 L433.7,661.5 L434.2,663.4 L434.5,664.2 L434.7,664.6 L435.2,666.8 L435.5,668.2 L435.7,668.7 L436.2,669.1 L436.4,668.7 L436.9,670.6 L437.4,671.5 L437.7,671.4 L437.9,669 L438.4,662.2 L438.4,662.8 L438.9,657.9 L439.4,652.6 L439.8,648.1 L439.9,646.2 L440.4,636.3 L440.9,626.4 L441,624.3 L441.4,616 L441.9,604.7 L442.2,599.8 L442.4,596.3 L442.9,586.9 L443.4,579.3 L443.4,577.9 L443.9,562.2 L444,556.6 L444.4,553.1 L444.6,552 L444.9,555 L445.1,557.9 L445.4,568.2 L445.7,580.5 L445.9,586.5 L446.4,600.6 L446.9,611.2 L447.1,615.6 L447.4,616.6 L447.8,619.3 L447.9,619 L448.4,622.1 L448.5,621.3 L448.9,627.3 L449.3,632.6 L449.4,633.9 L449.9,640.1 L450.4,646.7 L450.6,655.4 L450.9,656 L451.4,659.3 L451.6,660.1 L451.9,660.9 L452.4,663.1 L452.7,664.5 L452.9,664.5 L453.4,666.6 L453.7,668 L453.9,668.5 L454.4,668.6 L454.6,669.3 L455.1,670.5 L455.6,671.1 L456,671.5 L456.1,670.2 L456.5,662.2 L456.6,661.3 L457.1,655.3 L457.6,649.1 L457.7,649.2 L458.1,638.5 L458.6,626.4 L458.7,624.7 L459.1,614.7 L459.6,601.9 L459.7,599.2 L460.1,596.5 L460.6,592.9 L460.7,591.9 L461.1,576 L461.2,570.4 L461.6,565.8 L461.7,564.6 L462.1,569.6 L462.2,570.2 L462.6,576.5 L462.8,581.1 L463.1,589 L463.5,600.6 L463.6,602.3 L464.1,610.9 L464.2,612.3 L464.6,614.6 L464.9,616.6 L465.1,617.7 L465.6,619.5 L466.1,628.5 L466.4,633.1 L466.6,635.4 L467.1,642 L467.5,647.4 L467.6,647.9 L468.1,650.7 L468.6,653.4 L468.8,654.4 L469.1,656.5 L469.6,658.4 L469.8,659.7 L470.1,661.2 L470.6,663.3 L470.9,664.4 L471.1,664.8 L471.6,666.9 L471.9,667.5 L472.1,668.2 L472.6,669.5 L472.8,669.5 L473.3,670.2 L473.8,671.3 L474.2,671.7 L474.3,670.5 L474.8,663.7 L474.9,662.2 L475.3,657.3 L475.8,652.3 L476.1,648.6 L476.3,644.9 L476.8,633.2 L477.2,623.9 L477.3,622.2 L477.8,610.6 L478.3,599.1 L478.8,587 L479.3,575.3 L479.4,574.3 L479.8,558.1 L480,551.7 L480.3,548.1 L480.5,545 L480.8,549.7 L481.1,552.7 L481.3,565.6 L481.6,580 L481.8,586.6 L482.3,601 L482.8,608.2 L483,612.4 L483.3,613.2 L483.7,615.7 L483.8,615.8 L484.3,617.7 L484.4,618.6 L484.8,625.6 L485.2,633.9 L485.3,634.1 L485.8,640.6 L486.3,646.5 L486.8,653 L487,654.4 L487.3,655.7 L487.8,659.4 L488,660.1 L488.3,661 L488.8,662.7 L489.1,664.7 L489.3,665.5 L489.8,667.1 L490.1,667.6 L490.3,667.8 L490.8,669.3 L491,669 L491.5,670.4 L492,672.4 L492.5,673.2 L492.5,672.5 L493,664.7 L493.1,662.4 L493.5,658.7 L494,652.3 L494.4,648.1 L494.5,645.1 L495,634.4 L495.5,624.2 L495.5,623.3 L496,611.1 L496.5,600.3 L496.5,599.8 L497,597.4 L497.5,595.5 L497.6,595.8 L498,580.7 L498.2,573 L498.5,570.2 L498.7,567.8 L499,571.6 L499.2,574.2 L499.5,577.4 L499.8,580.9 L500,585.9 L500.5,599.7 L501,610 L501.2,613.2 L501.5,615.3 L501.9,616.9 L502,617.7 L502.5,620.2 L502.6,620.6 L503,627.4 L503.4,633.3 L503.5,634.6 L504,641.1 L504.5,647 L505,652.7 L505.2,654.4 L505.5,656.8 L506,658.2 L506.2,659.9 L506.5,661 L507,663.2 L507.3,663.9 L507.5,664.6 L508,666.7 L508.3,667.8 L508.5,667.9 L509,668.6 L509.2,668.1 L509.7,669.8 L510.2,671.3 L510.7,672.3 L510.8,671.8 L511.2,664.6 L511.3,662.1 L511.7,657.7 L512.2,652.3 L512.5,649 L512.7,643.7 L513.2,632 L513.5,624 L513.7,618.9 L514.2,606.1 L514.5,599.6 L514.7,596.5 L515.2,592.1 L515.5,589 L515.7,579.5 L516,566.9 L516.2,564.9 L516.5,560.2 L516.7,563.4 L517,567.7 L517.2,570.9 L517.6,580.3 L517.7,584 L518.2,597.7 L518.3,600.4 L518.7,607.7 L519,613.5 L519.2,614.2 L519.7,616.5 L520.2,619.3 L520.4,619.9 L520.7,625.4 L521.2,633.5 L521.7,639.2 L522.2,646.1 L522.3,646.3 L522.7,649.2 L523.2,653.9 L523.4,654.2 L523.7,656.5 L524.2,658.5 L524.4,659.5 L524.7,661.4 L525.2,662.9 L525.5,664.2 L525.7,664.7 L526.2,667.1 L526.5,667.5 L526.7,667.5 L527.2,668.9 L527.4,668.6 L527.9,670.5 L528.4,671.8 L528.9,673.5 L529,674.1 L529.4,668.2 L529.7,662.5 L529.9,660.3 L530.4,655.6 L530.9,649.3 L531,648.3 L531.4,641.5 L531.9,630.2 L532.2,624.6 L532.4,620.6 L532.9,609.1 L533.4,599.2 L533.4,599 L533.9,596.9 L534.4,595.1 L534.5,594.9 L534.9,581.5 L535.2,572.6 L535.4,569.2 L535.7,566 L535.9,568.8 L536.2,572.8 L536.4,575.3 L536.8,580.8 L536.9,583.5 L537.4,597 L537.5,601 L537.9,607 L538.2,612.3 L538.4,612.7 L538.9,616.1 L539.4,618.1 L539.6,618.9 L539.9,624.1 L540.4,632.9 L540.9,639.6 L541.4,645.1 L541.5,647.4 L541.6,655.1 L541.9,656.8 L542.4,659.4 L542.6,659.5 L542.9,660.8 L543.4,663.6 L543.7,664.8 L543.9,665.2 L544.4,666.4 L544.7,667.4 L544.9,667.8 L545.4,669 L545.6,668.9 L546.1,669.9 L546.6,671.2 L547.1,673.1 L547.3,673.6 L547.6,667.6 L547.9,663.3 L548.1,660.1 L548.6,654.3 L549.1,648.5 L549.1,648.7 L549.6,638.7 L550.1,627.8 L550.3,624 L550.6,615.7 L551.1,604.3 L551.3,599.5 L551.6,598 L552.1,597.2 L552.4,596.2 L552.6,588.1 L553,574.5 L553.1,572.2 L553.5,567.8 L553.6,569.3 L554.1,574.8 L554.1,575.4 L554.6,580.9 L555.1,594.6 L555.3,601 L555.6,606.8 L556,615.3 L556.1,616.1 L556.6,618.8 L556.7,618.8 L557.1,620.5 L557.4,622.8 L557.6,624.6 L558.1,631.7 L558.2,633.8 L558.6,638.4 L559.1,644.7 L559.3,647.4 L559.6,651.5 L559.8,654.2 L560.1,656.5 L560.6,658.3 L560.8,659.6 L561.1,661.6 L561.6,662.7 L561.9,664.3 L562.1,664.5 L562.6,666.5 L562.9,667.5 L563.1,668.4 L563.6,668.7 L563.8,668.5 L564.3,669 L564.8,670.3 L565.3,671.7 L565.6,672.2 L565.8,668.4 L566.1,663.1 L566.3,661.1 L566.8,654.4 L567.3,648.2 L567.3,648 L567.8,636.3 L568.3,624.2 L568.3,624.5 L568.8,611.8 L569.3,598.9 L569.3,599.3 L569.8,598.2 L570.3,595.7 L570.3,594.7 L570.8,575.5 L570.8,573.9 L571.3,568 L571.8,574.1 L571.8,575.2 L572.3,580.2 L572.4,580.9 L572.8,591.5 L573.1,600.8 L573.3,602.7 L573.8,608.7 L574.3,611.6 L574.5,612.8 L574.8,613.6 L575.2,615.6 L575.3,618 L575.8,629.2 L576,633.7 L576.3,636.9 L576.8,643.7 L577.1,647.5 L577.3,648.7 L577.8,653.1 L578,654.5 L578.3,656.9 L578.8,659 L579,660 L579.3,661.7 L579.8,662.5 L580.1,664.8 L580.3,665.6 L580.8,666.8 L581.1,668.3 L581.3,668 L581.8,669.3 L582,668 L582.5,670.3 L583,671.3 L583.5,673.4 L583.8,673.8 L584,671.2 L584.4,663 L584.5,662.1 L585,655.4 L585.5,649.7 L585.6,648.8 L586,640.3 L586.5,628.2 L586.7,623.5 L587,616.4 L587.5,605 L587.7,599.8 L588,598.5 L588.5,596.1 L588.7,595.3 L589,584.8 L589.3,571.9 L589.5,569.4 L589.8,566.7 L590,568.2 L590.4,573.2 L590.5,574.7 L590.9,579.9 L591,582.7 L591.5,598.1 L591.6,600.6 L592,609 L592.3,615.1 L592.5,617.4 L593,619.9 L593.5,621.2 L593.7,623 L594,626.6 L594.5,633.4 L595,639.2 L595.5,645 L595.6,647.3 L596,651.8 L596.2,654.4 L596.5,655.8 L597,658.8 L597.2,659.3 L597.5,661.3 L598,663.3 L598.3,664.8 L598.5,664.7 L599,666.8 L599.3,668.1 L599.5,668.6 L600,668.8 L600.2,668.3 L600.7,669.2 L601.2,670.8 L601.7,671.1 L602.1,672.8 L602.2,670.4 L602.7,662.3 L602.7,662.2 L603.2,657 L603.7,650.8 L603.9,648.1 L604.2,640.6 L604.7,628.8 L604.9,623.8 L605.2,617.4 L605.7,604.4 L605.9,598.9 L606.2,600 L606.7,601.1 L606.9,601.9 L607.2,591.5 L607.5,578.2 L607.7,577.3 L608,573 L608.2,576.1 L608.6,580.5 L608.7,579.9 L609.1,580.9 L609.2,584 L609.7,598 L609.8,600.2 L610.2,606.5 L610.5,612 L610.7,612.8 L611.2,614.6 L611.7,617.7 L611.9,618 L612.2,623.9 L612.7,632.8 L613.2,639.3 L613.7,645.2 L613.8,646.8 L614.2,652.5 L614.4,655.2 L614.7,656.9 L615.2,658.4 L615.4,660.4 L615.7,661.7 L616.2,662.5 L616.5,664.8 L616.7,664.5 L617.2,667.3 L617.5,667.8 L617.7,668.6 L618.2,668.7 L618.4,667.7 L618.9,668.7 L619.4,670.5 L619.9,671.3 L620.4,672.5 L620.4,672 L620.9,662.2 L620.9,662 L621.4,654.6 L621.9,648.8 L621.9,647.6 L622.4,634.3 L622.8,624 L622.9,621.1 L623.4,606.2 L623.6,599.3 L623.9,597.7 L624.4,593.1 L624.5,592.1 L624.9,574.2 L625,569.5 L625.4,563.9 L625.9,570.6 L625.9,571.1 L626.4,578.1 L626.5,580.7 L626.9,591.9 L627.2,600.9 L627.4,603.8 L627.9,611.7 L628.4,613.5 L628.6,614.9 L628.9,615.7 L629.4,617.3 L629.9,627.4 L630.2,632.6 L630.4,635.6 L630.9,642 L631.3,646.2 L631.4,646.9 L631.9,649.9 L632.4,653.6 L632.6,654.4 L632.9,656.4 L633.4,658.2 L633.6,659.3 L633.9,661.4 L634.4,662.6 L634.7,664.8 L634.9,665.6 L635.4,666.5 L635.7,668.1 L635.9,668.1 L636.4,668.9 L636.6,668.2 L637.1,669.1 L637.6,670.2 L638.1,670.7 L638.6,671.7 L638.6,672.3 L639.1,664 L639.1,662.9 L639.6,656.7 L640.1,650.5 L640.2,649 L640.6,638 L641.1,625.2 L641.1,623.6 L641.6,611.1 L642.1,598.7 L642.1,599.1 L642.6,596.9 L643,594.9 L643.1,588.3 L643.5,571.9 L643.6,570.3 L643.9,566.5 L644.1,568.3 L644.5,573.4 L644.6,575.2 L645,580 L645.1,582.9 L645.6,597.8 L645.7,600.7 L646.1,609.1 L646.4,617.1 L646.6,618.1 L647.1,620.3 L647.6,622.4 L647.8,623.7 L648.1,627.6 L648.6,633.6 L649.1,639 L649.6,645.6 L649.7,646.2 L650.1,649.3 L650.6,652.7 L650.8,655.4 L651.1,656.7 L651.6,659.5 L651.8,660 L652.1,661.3 L652.6,663.8 L652.9,664.3 L653.1,665.6 L653.6,667 L653.9,668.1 L654.1,667.8 L654.6,669.2 L654.8,667.9 L655.3,669.2 L655.8,670.8 L656.3,672 L656.8,673.8 L656.9,674.8 L657.3,667.3 L657.5,662.4 L657.8,659.3 L658.3,654.1 L658.8,648.2 L658.8,648.4 L659.3,638.4 L659.8,628 L660,624.9 L660.3,616.3 L660.8,604.5 L661,598.8 L661.3,598.7 L661.8,597.4 L662.1,596.4 L662.3,591 L662.8,574.1 L662.8,574.2 L663.3,568.6 L663.8,575.2 L663.8,575.8 L664.3,579.3 L664.4,579.8 L664.8,591.8 L665.1,600.5 L665.3,604.6 L665.8,614.5 L666.3,616.8 L666.5,618.5 L666.8,619 L667.2,621.7 L667.3,623 L667.8,630.2 L668,633.3 L668.3,639.2 L668.8,650 L669,654.2 L669.1,646.7 L669.3,650.4 L669.8,656.9 L670,659.8 L670.3,661.1 L670.8,663.5 L671.1,664.1 L671.3,664.5 L671.8,667.3 L672.1,667.6 L672.3,668.4 L672.8,669.1 L673,667.5 L673.5,669 L674,668.8 L674.5,670.7 L675,671.2 L675.1,670.9 L675.5,666.7 L675.8,663.1 L676,659.5 L676.5,653.9 L677,649 L677,648.7 L677.5,638.5 L678,627.9 L678.1,624.5 L678.5,615.3 L679,604.8 L679.2,599.6 L679.5,596.1 L680,590.1 L680.3,586.2 L680.5,577.7 L680.9,563 L681,562.2 L681.4,557.4 L681.5,559.7 L682,564.9 L682,565.5 L682.5,581.1 L683,595 L683.2,600.4 L683.5,604.2 L683.9,608.6 L684,609.8 L684.5,612.4 L684.6,612 L685,614.7 L685.3,614.9 L685.5,620.3 L686,630.3 L686.1,633 L686.5,638 L687,644.8 L687.2,655.4 L687.5,655.9 L688,659.3 L688.2,660.3 L688.5,660.7 L689,662.6 L689.3,665 L689.5,664.4 L690,666.7 L690.3,668 L690.5,668.7 L691,669.3 L691.2,668.1 L691.7,669.5 L692.2,670.8 L692.7,671.9 L693.2,672.5 L693.4,674.2 L693.7,668 L693.9,662.1 L694.2,658.4 L694.7,651.6 L695,648.9 L695.2,642.7 L695.7,628.8 L695.9,624.3 L696.2,615.5 L696.7,601.9 L696.8,600 L697.2,596.8 L697.7,593.1 L697.7,591.7 L698.2,570.7 L698.2,570.7 L698.6,565.2 L698.7,566.5 L699.2,572 L699.2,572.3 L699.7,580.9 L700.2,594.6 L700.4,599.8 L700.7,603.1 L701.1,608.3 L701.2,607.8 L701.7,610.8 L701.8,612.2 L702.2,613.7 L702.5,615 L702.7,619.9 L703.2,630.2 L703.3,633.3 L703.7,637.7 L704.2,644.9 L704.4,647.5 L704.7,648.7 L705.2,652.8 L705.4,654.1 L705.7,656 L706.2,658.8 L706.4,659.5 L706.7,661.7 L707.2,663.1 L707.5,664.5 L707.7,665.6 L708.2,666.6 L708.5,668 L708.7,668.2 L709.2,669.3 L709.4,666.9 L709.9,668.3 L710.4,669.6 L710.9,671.7 L711.4,672 L711.7,673.7 L711.9,669.5 L712.4,659 L712.7,652.1 L712.9,649.8 L713.4,641.2 L713.9,634.1 L713.9,632.9 L714.4,631.1 L714.9,628.5 L715.4,625.8 L715.6,624.3 L715.9,623.8 L716.4,623.7 L716.9,623.1 L716.9,622.9 L717.4,614.1 L717.9,603.9 L718.2,597 L718.4,597.3 L718.9,598.9 L719.3,598 L719.4,593.8 L719.9,575.3 L719.9,575.9 L720.4,570.7 L720.9,576.4 L720.9,576.6 L721.4,582.3 L721.5,582.8 L721.9,598.6 L722.2,610.7 L722.4,617.3 L722.9,633.2 L723.4,641.9 L723.7,647 L723.9,648 L724.4,651 L724.8,654.1 L724.9,655.8 L725.4,661.4 L725.9,663.4 L726.3,664.8 L726.4,665.9 L726.9,668 L727,668 L727.4,669.2 L727.6,667.1 L728.1,668.1 L728.6,669.2 L729.1,670.3 L729.6,672.1 L729.9,672.5 L730.1,669.9 L730.6,658 L730.9,652.6 L731.1,648 L731.6,637.2 L731.9,632.3 L732.1,631.7 L732.6,629.4 L733.1,628.2 L733.4,627.9 L733.6,627.4 L734.1,625.1 L734.6,623.6 L735.1,611.6 L735.6,601.5 L735.8,597.8 L736.1,597.5 L736.6,597 L736.7,597 L737.1,579.7 L737.2,574.3 L737.6,569.9 L737.7,569.2 L738.1,572.9 L738.2,575.1 L738.6,581 L738.8,583.4 L739.1,594.7 L739.5,609.9 L739.6,614.4 L740.1,630.7 L740.2,633.2 L740.6,640.1 L741,646.3 L741.1,647.1 L741.6,651.1 L742.1,654.3 L742.6,656.3 L743.1,658.2 L743.6,661.4 L744.1,663.3 L744.5,665.5 L744.6,665.2 L745.1,668 L745.2,667.2 L745.6,668.9 L745.8,667.6 L746.3,668.8 L746.8,669.7 L747.3,671.6 L747.8,673.4 L748.2,673.7 L748.3,671.9 L748.7,662.6 L748.8,661.5 L749.3,653.9 L749.6,647.9 L749.8,644.7 L750.3,630 L750.5,624 L750.8,615.4 L751.3,599.6 L751.3,598.8 L751.8,588.8 L752.1,581.8 L752.3,574.9 L752.6,560.1 L752.8,556.9 L753,554.1 L753.3,558 L753.5,560.2 L753.8,570.1 L754.1,580.1 L754.3,585.6 L754.8,600.9 L755.3,607.8 L755.5,611.7 L755.8,613.7 L756.2,616 L756.3,616.6 L756.8,618 L756.9,618.5 L757.3,625.3 L757.7,632.8 L757.8,635.1 L758.3,640.8 L758.8,647 L759.3,650.6 L759.8,653.8 L760,655.1 L760.3,656 L760.8,659.1 L761,660.4 L761.3,661.5 L761.8,663.2 L762.1,664.3 L762.3,665.4 L762.8,666.5 L763.1,668.2 L763.3,667.9 L763.8,669 L764,667 L764.5,668 L765,669.2 L765.5,670.7 L766,670.7 L766.5,671.5 L766.5,671.6 L767,661.2 L767.4,652.8 L767.5,650.7 L768,642.5 L768.5,635.3 L768.5,634.3 L769,631.7 L769.5,630.1 L770,626.9 L770,627.4 L770.5,626.1 L771,623.6 L771.2,623.2 L771.5,616.9 L772,606.4 L772.4,598 L772.5,596.2 L773,587.7 L773.4,582.2 L773.5,576.8 L773.9,559.2 L774,558.7 L774.4,553.9 L774.5,555 L775,560.2 L775,563.1 L775.5,583.9 L776,602.4 L776.2,610.5 L776.5,620.5 L776.9,632.7 L777,634.4 L777.5,643.4 L777.7,646.2 L778,648.4 L778.5,651.8 L778.8,654.5 L779,656 L779.5,657.9 L780,660.7 L780.5,663.4 L780.9,665 L781,665.3 L781.5,667.7 L781.6,667.5 L782,668.8 L782.2,666.7 L782.7,668.9 L783.2,670 L783.7,671.7 L784.2,672.8 L784.7,674 L784.7,674.8 L785.2,664.8 L785.7,653.2 L785.7,653 L786.2,644.5 L786.7,636.3 L786.8,634.6 L787.2,632.7 L787.7,630.5 L788.2,628.9 L788.5,628.5 L788.7,627.6 L789.2,625.8 L789.7,623.3 L790.2,612.9 L790.7,601.8 L790.9,598 L791.2,594 L791.7,589.2 L791.9,586.7 L792.2,576.3 L792.5,563.6 L792.7,562.3 L793,558.3 L793.2,560.9 L793.6,565.6 L793.7,570.5 L794.1,582.7 L794.2,586.8 L794.7,606.3 L794.8,610 L795.2,624.1 L795.5,632.9 L795.7,636.3 L796.2,645.5 L796.3,646.9 L796.7,648.9 L797.2,653.1 L797.4,653.8 L797.7,657.2 L798.2,660.8 L798.7,663.5 L799.1,665 L799.2,665.5 L799.7,666.9 L799.8,667.5 L800.2,668.9 L800.4,666.5 L800.9,668.5 L801.4,669.3 L801.9,670.4 L802.4,671.9 L802.9,673.5 L803,673.5 L803.4,665 L803.5,663 L803.9,657.2 L804.4,650.8 L804.6,648 L804.9,639.3 L805.4,626.4 L805.5,624.3 L805.9,613.5 L806.4,599.2 L806.4,598.7 L806.9,592.7 L807.3,589.2 L807.4,583.6 L807.8,565.9 L807.9,564.4 L808.2,560.7 L808.4,562.8 L808.8,568 L808.9,571 L809.3,580.3 L809.4,583.2 L809.9,598 L810,600.8 L810.4,606 L810.7,610 L810.9,612.2 L811.4,615.2 L811.9,617.1 L812.1,617 L812.4,623.5 L812.9,633.3 L813.4,638.7 L813.9,645.4 L814,647.1 L814.4,651.8 L814.6,655.4 L814.9,656.6 L815.4,658.6 L815.6,660.3 L815.9,661.7 L816.4,663.1 L816.7,664.6 L816.9,664.4 L817.4,667.3 L817.7,667.4 L817.9,668.3 L818.4,668.7 L818.6,666.9 L819.1,667.4 L819.6,669.1 L820.1,670.3 L820.6,671.1 L821.1,672.5 L821.3,672.6 L821.6,665.5 L822.1,655.2 L822.2,652.3 L822.6,646.8 L823.1,638.9 L823.3,636 L823.6,634.3 L824.1,632.6 L824.6,630.1 L824.9,629.5 L825.1,627.7 L825.6,625.4 L826.1,622.8 L826.1,622.5 L826.6,612.2 L827.1,601.7 L827.3,597.8 L827.6,594.5 L828.1,587.6 L828.3,586 L828.6,572.9 L828.8,562.9 L829.1,560.1 L829.3,557.7 L829.6,561.6 L829.8,565.1 L830.1,572.5 L830.4,583.8 L830.6,591.3 L831.1,609.9 L831.6,627.3 L831.8,633.2 L832.1,638.4 L832.6,647.2 L833.1,649.6 L833.6,653.6 L833.7,654.9 L834.1,657.3 L834.6,661.7 L835.1,662.9 L835.5,664.5 L835.6,664.8 L836.1,668 L836.2,667.6 L836.6,669.2 L836.8,666.5 L837.3,668.5 L837.8,668.6 L838.3,671.1 L838.8,671.1 L839.3,673.4 L839.5,674.1 L839.8,666 L840.3,652.5 L840.8,641.9 L841.1,635.4 L841.3,634.5 L841.8,633 L842.3,629.9 L842.4,629.6 L842.8,626.2 L843.3,624.1 L843.4,623.5 L843.8,610.9 L844.3,597.2 L844.3,597.6 L844.8,593.9 L845.1,592.4 L845.3,581 L845.5,569.8 L845.8,565.4 L845.9,564.7 L846.3,569.3 L846.4,570.6 L846.8,579.1 L847,583.4 L847.3,595.3 L847.7,610.7 L847.8,613.6 L848.3,629.7 L848.4,632.6 L848.8,640.1 L849.2,647.2 L849.3,647.7 L849.8,651.4 L850.3,654.5 L850.8,655.4 L851.3,656.8 L851.8,658.6 L852.3,660.1 L852.8,661.5 L853.3,663.6 L853.7,665 L853.8,665.7 L854.3,666.9 L854.4,667.7 L854.8,669.1 L855,666.8 L855.5,667.7 L856,669.7 L856.5,671.2 L857,672.6 L857.5,674 L857.8,674.3 L858,669.1 L858.5,655.9 L858.6,653.1 L859,644.5 L859.5,634.2 L859.5,633.3 L860,630.8 L860.5,628.5 L861,626.5 L861,626.1 L861.5,624.3 L862,622.7 L862.5,610.3 L863,599.2 L863,597 L863.5,596.2 L863.9,595.5 L864,590.1 L864.4,573.6 L864.5,571.1 L864.8,566.9 L865,570.5 L865.4,574.1 L865.5,576.1 L865.9,583.6 L866,586.7 L866.5,606.1 L866.6,610.6 L867,624 L867.3,633.6 L867.5,636.2 L868,645.2 L868.1,647.1 L868.5,649.6 L869,652.3 L869.2,654.5 L869.5,656 L870,656.6 L870.5,659.4 L871,661.2 L871.5,662.6 L871.9,665.3 L872,665.9 L872.5,666.9 L872.6,668.1 L873,669.3 L873.2,666.8 L873.7,668.2 L874.2,669 L874.7,670.2 L875.2,671.7 L875.7,672.9 L876.1,674.1 L876.2,669.6 L876.7,655.2 L876.8,652.1 L877.2,642.4 L877.6,632.7 L877.7,632.2 L878.2,630.8 L878.7,629.5 L878.9,627.9 L879.2,626 L879.7,623.1 L879.8,622.9 L880.2,612.8 L880.7,598.8 L880.7,598.2 L881.2,592.5 L881.5,590.5 L881.7,579.5 L881.9,566.8 L882.2,563.7 L882.3,561.2 L882.7,567 L882.9,568.4 L883.2,578.5 L883.4,582.8 L883.7,595.1 L884.1,610.8 L884.2,613.6 L884.7,629.9 L884.8,633.6 L885.2,640.5 L885.6,646.7 L885.7,648.1 L886.2,650.3 L886.7,654.4 L887.2,656 L887.7,657.1 L888.2,658.8 L888.7,659.9 L889.2,660.9 L889.7,663.3 L890.1,665.2 L890.2,665.7 L890.7,667.4 L890.8,667.4 L891.2,669 L891.4,665.9 L891.9,667.5 L892.4,668.8 L892.9,669.7 L893.4,670.4 L893.9,672.2 L894.3,673.1 L894.4,671.2 L894.9,656.9 L895,652.4 L895.4,644.6 L895.8,636.5 L895.9,635.8 L896.4,632.7 L896.9,629.3 L896.9,629.8 L897.4,625.3 L897.8,623.6 L897.9,619.4 L898.4,605.6 L898.7,597.1 L898.9,596.1 L899.4,593 L899.4,589.6 L899.8,569.5 L899.9,566.9 L900.1,563.6 L900.4,567.1 L900.6,571.5 L900.9,576.7 L901.2,583.9 L901.4,590.8 L901.9,610.6 L902.4,626.4 L902.6,632.8 L902.9,637.6 L903.4,646.6 L903.9,649.7 L904.4,653.5 L904.5,654.8 L904.9,654.6 L905.4,656.9 L905.9,658 L906.4,658.2 L906.9,660.1 L907.4,660.8 L907.9,663.8 L908.3,665.4 L908.4,665.1 L908.9,668 L909,667.8 L909.4,668.3 L909.6,665.9 L910.1,667 L910.6,668.9 L911.1,669.7 L911.6,670.2 L912.1,670.6 L912.6,672.6 L913.1,661.6 L913.5,652.9 L913.6,650.8 L914.1,641.7 L914.5,632.9 L914.6,632.5 L915.1,631.3 L915.6,628.6 L916.1,626.5 L916.1,626.4 L916.6,625.6 L917.1,624 L917.3,623.5 L917.6,615.5 L918.1,605.2 L918.4,597.7 L918.6,595.1 L919.1,587 L919.4,582.9 L919.6,574.1 L919.9,559.8 L920.1,557.7 L920.4,554.7 L920.6,557.5 L920.9,560.7 L921.1,567 L921.5,583.2 L921.6,587.4 L922.1,606 L922.2,610.6 L922.6,623.9 L922.9,633.8 L923.1,636.8 L923.6,645 L923.7,647 L924.1,648.9 L924.6,652.7 L924.8,654.3 L925.1,656.5 L925.6,660.9 L926.1,663 L926.5,665 L926.6,665.3 L927.1,667.4 L927.2,667.3 L927.6,669.3 L927.9,665.5 L927.9,679.7 L381.8,679.7 Z" fill="#7eb26d" fill-opacity="0.8" stroke="none"/><path d="M381.8,669.7 L382.3,670.8 L382.8,672.3 L382.9,673.3 L383.3,666.6 L383.5,662.2 L383.8,659.3 L384.3,653.3 L384.7,647.9 L384.8,645.6 L385.3,633.6 L385.7,624.2 L385.8,622.3 L386.3,610.5 L386.7,598.9 L386.8,597.6 L387.3,589.3 L387.7,581.2 L387.8,579 L388.3,560.6 L388.3,558.6 L388.8,553.2 L389.3,559.8 L389.4,560.7 L389.8,576.3 L389.9,580.5 L390.3,591.5 L390.6,599.8 L390.8,604.1 L391.3,614.1 L391.8,617.6 L392,618.2 L392.3,619.7 L392.8,620.8 L393.3,628.3 L393.6,633.8 L393.8,636.2 L394.3,642.3 L394.7,646.2 L394.8,647.5 L395.3,650.3 L395.8,653.8 L396,654.8 L396.3,656.4 L396.8,659 L397,659.7 L397.3,661 L397.8,662.6 L398.1,664.1 L398.3,664.5 L398.8,666.3 L399.1,667.1 L399.3,667.9 L399.8,669.6 L400,668.9 L400.5,670.9 L401,672.1 L401.2,673.2 L401.5,664.1 L401.8,656.9 L402,654.2 L402.5,646.7 L402.6,644.1 L403,644.5 L403.3,646.3 L403.5,638.5 L404,622 L404.3,612.2 L404.5,609.6 L405,603 L405.5,597 L406,592.2 L406.5,585.5 L406.6,585.1 L407,572.8 L407.5,559.2 L407.6,555.6 L408,571 L408.3,583.3 L408.5,590 L409,609.1 L409.5,615.5 L409.7,617.2 L410,614.2 L410.5,607.6 L411,610.1 L411.3,611.5 L411.5,618.4 L412,634.3 L412.2,639.5 L412.5,642.7 L413,645.9 L413.5,650 L413.6,651.5 L414,654.9 L414.5,659.3 L415,660.7 L415.5,662.3 L416,663.9 L416.5,665.4 L417,666.6 L417.2,667.8 L417.5,668.4 L418,668.9 L418.2,668.6 L418.7,671 L419.2,672.7 L419.4,674.2 L419.7,668.8 L420,662.6 L420.2,661.3 L420.7,654.6 L421.2,648.6 L421.2,649.1 L421.7,637.5 L422.2,626.4 L422.3,623.8 L422.7,614.4 L423.2,601.7 L423.3,598.9 L423.7,595.3 L424.2,589.4 L424.3,586.9 L424.7,572.5 L424.9,565.1 L425.2,561.4 L425.4,558.8 L425.7,562.9 L425.9,566 L426.2,572.7 L426.5,580.7 L426.7,586 L427.2,600.6 L427.7,610.7 L427.9,614.3 L428.2,617 L428.6,618.5 L428.7,618.7 L429.2,621.3 L429.3,621.8 L429.7,626.9 L430.1,633.6 L430.2,634.9 L430.7,640.7 L431.2,646.6 L431.7,650.7 L432.2,653.7 L432.4,655 L432.7,655.8 L433.2,658.9 L433.4,659.4 L433.7,661.5 L434.2,663.4 L434.5,664.2 L434.7,664.6 L435.2,666.8 L435.5,668.2 L435.7,668.7 L436.2,669.1 L436.4,668.7 L436.9,670.6 L437.4,671.5 L437.7,671.4 L437.9,669 L438.4,662.2 L438.4,662.8 L438.9,657.9 L439.4,652.6 L439.8,648.1 L439.9,646.2 L440.4,636.3 L440.9,626.4 L441,624.3 L441.4,616 L441.9,604.7 L442.2,599.8 L442.4,596.3 L442.9,586.9 L443.4,579.3 L443.4,577.9 L443.9,562.2 L444,556.6 L444.4,553.1 L444.6,552 L444.9,555 L445.1,557.9 L445.4,568.2 L445.7,580.5 L445.9,586.5 L446.4,600.6 L446.9,611.2 L447.1,615.6 L447.4,616.6 L447.8,619.3 L447.9,619 L448.4,622.1 L448.5,621.3 L448.9,627.3 L449.3,632.6 L449.4,633.9 L449.9,640.1 L450.4,646.7 L450.6,655.4 L450.9,656 L451.4,659.3 L451.6,660.1 L451.9,660.9 L452.4,663.1 L452.7,664.5 L452.9,664.5 L453.4,666.6 L453.7,668 L453.9,668.5 L454.4,668.6 L454.6,669.3 L455.1,670.5 L455.6,671.1 L456,671.5 L456.1,670.2 L456.5,662.2 L456.6,661.3 L457.1,655.3 L457.6,649.1 L457.7,649.2 L458.1,638.5 L458.6,626.4 L458.7,624.7 L459.1,614.7 L459.6,601.9 L459.7,599.2 L460.1,596.5 L460.6,592.9 L460.7,591.9 L461.1,576 L461.2,570.4 L461.6,565.8 L461.7,564.6 L462.1,569.6 L462.2,570.2 L462.6,576.5 L462.8,581.1 L463.1,589 L463.5,600.6 L463.6,602.3 L464.1,610.9 L464.2,612.3 L464.6,614.6 L464.9,616.6 L465.1,617.7 L465.6,619.5 L466.1,628.5 L466.4,633.1 L466.6,635.4 L467.1,642 L467.5,647.4 L467.6,647.9 L468.1,650.7 L468.6,653.4 L468.8,654.4 L469.1,656.5 L469.6,658.4 L469.8,659.7 L470.1,661.2 L470.6,663.3 L470.9,664.4 L471.1,664.8 L471.6,666.9 L471.9,667.5 L472.1,668.2 L472.6,669.5 L472.8,669.5 L473.3,670.2 L473.8,671.3 L474.2,671.7 L474.3,670.5 L474.8,663.7 L474.9,662.2 L475.3,657.3 L475.8,652.3 L476.1,648.6 L476.3,644.9 L476.8,633.2 L477.2,623.9 L477.3,622.2 L477.8,610.6 L478.3,599.1 L478.8,587 L479.3,575.3 L479.4,574.3 L479.8,558.1 L480,551.7 L480.3,548.1 L480.5,545 L480.8,549.7 L481.1,552.7 L481.3,565.6 L481.6,580 L481.8,586.6 L482.3,601 L482.8,608.2 L483,612.4 L483.3,613.2 L483.7,615.7 L483.8,615.8 L484.3,617.7 L484.4,618.6 L484.8,625.6 L485.2,633.9 L485.3,634.1 L485.8,640.6 L486.3,646.5 L486.8,653 L487,654.4 L487.3,655.7 L487.8,659.4 L488,660.1 L488.3,661 L488.8,662.7 L489.1,664.7 L489.3,665.5 L489.8,667.1 L490.1,667.6 L490.3,667.8 L490.8,669.3 L491,669 L491.5,670.4 L492,672.4 L492.5,673.2 L492.5,672.5 L493,664.7 L493.1,662.4 L493.5,658.7 L494,652.3 L494.4,648.1 L494.5,645.1 L495,634.4 L495.5,624.2 L495.5,623.3 L496,611.1 L496.5,600.3 L496.5,599.8 L497,597.4 L497.5,595.5 L497.6,595.8 L498,580.7 L498.2,573 L498.5,570.2 L498.7,567.8 L499,571.6 L499.2,574.2 L499.5,577.4 L499.8,580.9 L500,585.9 L500.5,599.7 L501,610 L501.2,613.2 L501.5,615.3 L501.9,616.9 L502,617.7 L502.5,620.2 L502.6,620.6 L503,627.4 L503.4,633.3 L503.5,634.6 L504,641.1 L504.5,647 L505,652.7 L505.2,654.4 L505.5,656.8 L506,658.2 L506.2,659.9 L506.5,661 L507,663.2 L507.3,663.9 L507.5,664.6 L508,666.7 L508.3,667.8 L508.5,667.9 L509,668.6 L509.2,668.1 L509.7,669.8 L510.2,671.3 L510.7,672.3 L510.8,671.8 L511.2,664.6 L511.3,662.1 L511.7,657.7 L512.2,652.3 L512.5,649 L512.7,643.7 L513.2,632 L513.5,624 L513.7,618.9 L514.2,606.1 L514.5,599.6 L514.7,596.5 L515.2,592.1 L515.5,589 L515.7,579.5 L516,566.9 L516.2,564.9 L516.5,560.2 L516.7,563.4 L517,567.7 L517.2,570.9 L517.6,580.3 L517.7,584 L518.2,597.7 L518.3,600.4 L518.7,607.7 L519,613.5 L519.2,614.2 L519.7,616.5 L520.2,619.3 L520.4,619.9 L520.7,625.4 L521.2,633.5 L521.7,639.2 L522.2,646.1 L522.3,646.3 L522.7,649.2 L523.2,653.9 L523.4,654.2 L523.7,656.5 L524.2,658.5 L524.4,659.5 L524.7,661.4 L525.2,662.9 L525.5,664.2 L525.7,664.7 L526.2,667.1 L526.5,667.5 L526.7,667.5 L527.2,668.9 L527.4,668.6 L527.9,670.5 L528.4,671.8 L528.9,673.5 L529,674.1 L529.4,668.2 L529.7,662.5 L529.9,660.3 L530.4,655.6 L530.9,649.3 L531,648.3 L531.4,641.5 L531.9,630.2 L532.2,624.6 L532.4,620.6 L532.9,609.1 L533.4,599.2 L533.4,599 L533.9,596.9 L534.4,595.1 L534.5,594.9 L534.9,581.5 L535.2,572.6 L535.4,569.2 L535.7,566 L535.9,568.8 L536.2,572.8 L536.4,575.3 L536.8,580.8 L536.9,583.5 L537.4,597 L537.5,601 L537.9,607 L538.2,612.3 L538.4,612.7 L538.9,616.1 L539.4,618.1 L539.6,618.9 L539.9,624.1 L540.4,632.9 L540.9,639.6 L541.4,645.1 L541.5,647.4 L541.6,655.1 L541.9,656.8 L542.4,659.4 L542.6,659.5 L542.9,660.8 L543.4,663.6 L543.7,664.8 L543.9,665.2 L544.4,666.4 L544.7,667.4 L544.9,667.8 L545.4,669 L545.6,668.9 L546.1,669.9 L546.6,671.2 L547.1,673.1 L547.3,673.6 L547.6,667.6 L547.9,663.3 L548.1,660.1 L548.6,654.3 L549.1,648.5 L549.1,648.7 L549.6,638.7 L550.1,627.8 L550.3,624 L550.6,615.7 L551.1,604.3 L551.3,599.5 L551.6,598 L552.1,597.2 L552.4,596.2 L552.6,588.1 L553,574.5 L553.1,572.2 L553.5,567.8 L553.6,569.3 L554.1,574.8 L554.1,575.4 L554.6,580.9 L555.1,594.6 L555.3,601 L555.6,606.8 L556,615.3 L556.1,616.1 L556.6,618.8 L556.7,618.8 L557.1,620.5 L557.4,622.8 L557.6,624.6 L558.1,631.7 L558.2,633.8 L558.6,638.4 L559.1,644.7 L559.3,647.4 L559.6,651.5 L559.8,654.2 L560.1,656.5 L560.6,658.3 L560.8,659.6 L561.1,661.6 L561.6,662.7 L561.9,664.3 L562.1,664.5 L562.6,666.5 L562.9,667.5 L563.1,668.4 L563.6,668.7 L563.8,668.5 L564.3,669 L564.8,670.3 L565.3,671.7 L565.6,672.2 L565.8,668.4 L566.1,663.1 L566.3,661.1 L566.8,654.4 L567.3,648.2 L567.3,648 L567.8,636.3 L568.3,624.2 L568.3,624.5 L568.8,611.8 L569.3,598.9 L569.3,599.3 L569.8,598.2 L570.3,595.7 L570.3,594.7 L570.8,575.5 L570.8,573.9 L571.3,568 L571.8,574.1 L571.8,575.2 L572.3,580.2 L572.4,580.9 L572.8,591.5 L573.1,600.8 L573.3,602.7 L573.8,608.7 L574.3,611.6 L574.5,612.8 L574.8,613.6 L575.2,615.6 L575.3,618 L575.8,629.2 L576,633.7 L576.3,636.9 L576.8,643.7 L577.1,647.5 L577.3,648.7 L577.8,653.1 L578,654.5 L578.3,656.9 L578.8,659 L579,660 L579.3,661.7 L579.8,662.5 L580.1,664.8 L580.3,665.6 L580.8,666.8 L581.1,668.3 L581.3,668 L581.8,669.3 L582,668 L582.5,670.3 L583,671.3 L583.5,673.4 L583.8,673.8 L584,671.2 L584.4,663 L584.5,662.1 L585,655.4 L585.5,649.7 L585.6,648.8 L586,640.3 L586.5,628.2 L586.7,623.5 L587,616.4 L587.5,605 L587.7,599.8 L588,598.5 L588.5,596.1 L588.7,595.3 L589,584.8 L589.3,571.9 L589.5,569.4 L589.8,566.7 L590,568.2 L590.4,573.2 L590.5,574.7 L590.9,579.9 L591,582.7 L591.5,598.1 L591.6,600.6 L592,609 L592.3,615.1 L592.5,617.4 L593,619.9 L593.5,621.2 L593.7,623 L594,626.6 L594.5,633.4 L595,639.2 L595.5,645 L595.6,647.3 L596,651.8 L596.2,654.4 L596.5,655.8 L597,658.8 L597.2,659.3 L597.5,661.3 L598,663.3 L598.3,664.8 L598.5,664.7 L599,666.8 L599.3,668.1 L599.5,668.6 L600,668.8 L600.2,668.3 L600.7,669.2 L601.2,670.8 L601.7,671.1 L602.1,672.8 L602.2,670.4 L602.7,662.3 L602.7,662.2 L603.2,657 L603.7,650.8 L603.9,648.1 L604.2,640.6 L604.7,628.8 L604.9,623.8 L605.2,617.4 L605.7,604.4 L605.9,598.9 L606.2,600 L606.7,601.1 L606.9,601.9 L607.2,591.5 L607.5,578.2 L607.7,577.3 L608,573 L608.2,576.1 L608.6,580.5 L608.7,579.9 L609.1,580.9 L609.2,584 L609.7,598 L609.8,600.2 L610.2,606.5 L610.5,612 L610.7,612.8 L611.2,614.6 L611.7,617.7 L611.9,618 L612.2,623.9 L612.7,632.8 L613.2,639.3 L613.7,645.2 L613.8,646.8 L614.2,652.5 L614.4,655.2 L614.7,656.9 L615.2,658.4 L615.4,660.4 L615.7,661.7 L616.2,662.5 L616.5,664.8 L616.7,664.5 L617.2,667.3 L617.5,667.8 L617.7,668.6 L618.2,668.7 L618.4,667.7 L618.9,668.7 L619.4,670.5 L619.9,671.3 L620.4,672.5 L620.4,672 L620.9,662.2 L620.9,662 L621.4,654.6 L621.9,648.8 L621.9,647.6 L622.4,634.3 L622.8,624 L622.9,621.1 L623.4,606.2 L623.6,599.3 L623.9,597.7 L624.4,593.1 L624.5,592.1 L624.9,574.2 L625,569.5 L625.4,563.9 L625.9,570.6 L625.9,571.1 L626.4,578.1 L626.5,580.7 L626.9,591.9 L627.2,600.9 L627.4,603.8 L627.9,611.7 L628.4,613.5 L628.6,614.9 L628.9,615.7 L629.4,617.3 L629.9,627.4 L630.2,632.6 L630.4,635.6 L630.9,642 L631.3,646.2 L631.4,646.9 L631.9,649.9 L632.4,653.6 L632.6,654.4 L632.9,656.4 L633.4,658.2 L633.6,659.3 L633.9,661.4 L634.4,662.6 L634.7,664.8 L634.9,665.6 L635.4,666.5 L635.7,668.1 L635.9,668.1 L636.4,668.9 L636.6,668.2 L637.1,669.1 L637.6,670.2 L638.1,670.7 L638.6,671.7 L638.6,672.3 L639.1,664 L639.1,662.9 L639.6,656.7 L640.1,650.5 L640.2,649 L640.6,638 L641.1,625.2 L641.1,623.6 L641.6,611.1 L642.1,598.7 L642.1,599.1 L642.6,596.9 L643,594.9 L643.1,588.3 L643.5,571.9 L643.6,570.3 L643.9,566.5 L644.1,568.3 L644.5,573.4 L644.6,575.2 L645,580 L645.1,582.9 L645.6,597.8 L645.7,600.7 L646.1,609.1 L646.4,617.1 L646.6,618.1 L647.1,620.3 L647.6,622.4 L647.8,623.7 L648.1,627.6 L648.6,633.6 L649.1,639 L649.6,645.6 L649.7,646.2 L650.1,649.3 L650.6,652.7 L650.8,655.4 L651.1,656.7 L651.6,659.5 L651.8,660 L652.1,661.3 L652.6,663.8 L652.9,664.3 L653.1,665.6 L653.6,667 L653.9,668.1 L654.1,667.8 L654.6,669.2 L654.8,667.9 L655.3,669.2 L655.8,670.8 L656.3,672 L656.8,673.8 L656.9,674.8 L657.3,667.3 L657.5,662.4 L657.8,659.3 L658.3,654.1 L658.8,648.2 L658.8,648.4 L659.3,638.4 L659.8,628 L660,624.9 L660.3,616.3 L660.8,604.5 L661,598.8 L661.3,598.7 L661.8,597.4 L662.1,596.4 L662.3,591 L662.8,574.1 L662.8,574.2 L663.3,568.6 L663.8,575.2 L663.8,575.8 L664.3,579.3 L664.4,579.8 L664.8,591.8 L665.1,600.5 L665.3,604.6 L665.8,614.5 L666.3,616.8 L666.5,618.5 L666.8,619 L667.2,621.7 L667.3,623 L667.8,630.2 L668,633.3 L668.3,639.2 L668.8,650 L669,654.2 L669.1,646.7 L669.3,650.4 L669.8,656.9 L670,659.8 L670.3,661.1 L670.8,663.5 L671.1,664.1 L671.3,664.5 L671.8,667.3 L672.1,667.6 L672.3,668.4 L672.8,669.1 L673,667.5 L673.5,669 L674,668.8 L674.5,670.7 L675,671.2 L675.1,670.9 L675.5,666.7 L675.8,663.1 L676,659.5 L676.5,653.9 L677,649 L677,648.7 L677.5,638.5 L678,627.9 L678.1,624.5 L678.5,615.3 L679,604.8 L679.2,599.6 L679.5,596.1 L680,590.1 L680.3,586.2 L680.5,577.7 L680.9,563 L681,562.2 L681.4,557.4 L681.5,559.7 L682,564.9 L682,565.5 L682.5,581.1 L683,595 L683.2,600.4 L683.5,604.2 L683.9,608.6 L684,609.8 L684.5,612.4 L684.6,612 L685,614.7 L685.3,614.9 L685.5,620.3 L686,630.3 L686.1,633 L686.5,638 L687,644.8 L687.2,655.4 L687.5,655.9 L688,659.3 L688.2,660.3 L688.5,660.7 L689,662.6 L689.3,665 L689.5,664.4 L690,666.7 L690.3,668 L690.5,668.7 L691,669.3 L691.2,668.1 L691.7,669.5 L692.2,670.8 L692.7,671.9 L693.2,672.5 L693.4,674.2 L693.7,668 L693.9,662.1 L694.2,658.4 L694.7,651.6 L695,648.9 L695.2,642.7 L695.7,628.8 L695.9,624.3 L696.2,615.5 L696.7,601.9 L696.8,600 L697.2,596.8 L697.7,593.1 L697.7,591.7 L698.2,570.7 L698.2,570.7 L698.6,565.2 L698.7,566.5 L699.2,572 L699.2,572.3 L699.7,580.9 L700.2,594.6 L700.4,599.8 L700.7,603.1 L701.1,608.3 L701.2,607.8 L701.7,610.8 L701.8,612.2 L702.2,613.7 L702.5,615 L702.7,619.9 L703.2,630.2 L703.3,633.3 L703.7,637.7 L704.2,644.9 L704.4,647.5 L704.7,648.7 L705.2,652.8 L705.4,654.1 L705.7,656 L706.2,658.8 L706.4,659.5 L706.7,661.7 L707.2,663.1 L707.5,664.5 L707.7,665.6 L708.2,666.6 L708.5,668 L708.7,668.2 L709.2,669.3 L709.4,666.9 L709.9,668.3 L710.4,669.6 L710.9,671.7 L711.4,672 L711.7,673.7 L711.9,669.5 L712.4,659 L712.7,652.1 L712.9,649.8 L713.4,641.2 L713.9,634.1 L713.9,632.9 L714.4,631.1 L714.9,628.5 L715.4,625.8 L715.6,624.3 L715.9,623.8 L716.4,623.7 L716.9,623.1 L716.9,622.9 L717.4,614.1 L717.9,603.9 L718.2,597 L718.4,597.3 L718.9,598.9 L719.3,598 L719.4,593.8 L719.9,575.3 L719.9,575.9 L720.4,570.7 L720.9,576.4 L720.9,576.6 L721.4,582.3 L721.5,582.8 L721.9,598.6 L722.2,610.7 L722.4,617.3 L722.9,633.2 L723.4,641.9 L723.7,647 L723.9,648 L724.4,651 L724.8,654.1 L724.9,655.8 L725.4,661.4 L725.9,663.4 L726.3,664.8 L726.4,665.9 L726.9,668 L727,668 L727.4,669.2 L727.6,667.1 L728.1,668.1 L728.6,669.2 L729.1,670.3 L729.6,672.1 L729.9,672.5 L730.1,669.9 L730.6,658 L730.9,652.6 L731.1,648 L731.6,637.2 L731.9,632.3 L732.1,631.7 L732.6,629.4 L733.1,628.2 L733.4,627.9 L733.6,627.4 L734.1,625.1 L734.6,623.6 L735.1,611.6 L735.6,601.5 L735.8,597.8 L736.1,597.5 L736.6,597 L736.7,597 L737.1,579.7 L737.2,574.3 L737.6,569.9 L737.7,569.2 L738.1,572.9 L738.2,575.1 L738.6,581 L738.8,583.4 L739.1,594.7 L739.5,609.9 L739.6,614.4 L740.1,630.7 L740.2,633.2 L740.6,640.1 L741,646.3 L741.1,647.1 L741.6,651.1 L742.1,654.3 L742.6,656.3 L743.1,658.2 L743.6,661.4 L744.1,663.3 L744.5,665.5 L744.6,665.2 L745.1,668 L745.2,667.2 L745.6,668.9 L745.8,667.6 L746.3,668.8 L746.8,669.7 L747.3,671.6 L747.8,673.4 L748.2,673.7 L748.3,671.9 L748.7,662.6 L748.8,661.5 L749.3,653.9 L749.6,647.9 L749.8,644.7 L750.3,630 L750.5,624 L750.8,615.4 L751.3,599.6 L751.3,598.8 L751.8,588.8 L752.1,581.8 L752.3,574.9 L752.6,560.1 L752.8,556.9 L753,554.1 L753.3,558 L753.5,560.2 L753.8,570.1 L754.1,580.1 L754.3,585.6 L754.8,600.9 L755.3,607.8 L755.5,611.7 L755.8,613.7 L756.2,616 L756.3,616.6 L756.8,618 L756.9,618.5 L757.3,625.3 L757.7,632.8 L757.8,635.1 L758.3,640.8 L758.8,647 L759.3,650.6 L759.8,653.8 L760,655.1 L760.3,656 L760.8,659.1 L761,660.4 L761.3,661.5 L761.8,663.2 L762.1,664.3 L762.3,665.4 L762.8,666.5 L763.1,668.2 L763.3,667.9 L763.8,669 L764,667 L764.5,668 L765,669.2 L765.5,670.7 L766,670.7 L766.5,671.5 L766.5,671.6 L767,661.2 L767.4,652.8 L767.5,650.7 L768,642.5 L768.5,635.3 L768.5,634.3 L769,631.7 L769.5,630.1 L770,626.9 L770,627.4 L770.5,626.1 L771,623.6 L771.2,623.2 L771.5,616.9 L772,606.4 L772.4,598 L772.5,596.2 L773,587.7 L773.4,582.2 L773.5,576.8 L773.9,559.2 L774,558.7 L774.4,553.9 L774.5,555 L775,560.2 L775,563.1 L775.5,583.9 L776,602.4 L776.2,610.5 L776.5,620.5 L776.9,632.7 L777,634.4 L777.5,643.4 L777.7,646.2 L778,648.4 L778.5,651.8 L778.8,654.5 L779,656 L779.5,657.9 L780,660.7 L780.5,663.4 L780.9,665 L781,665.3 L781.5,667.7 L781.6,667.5 L782,668.8 L782.2,666.7 L782.7,668.9 L783.2,670 L783.7,671.7 L784.2,672.8 L784.7,674 L784.7,674.8 L785.2,664.8 L785.7,653.2 L785.7,653 L786.2,644.5 L786.7,636.3 L786.8,634.6 L787.2,632.7 L787.7,630.5 L788.2,628.9 L788.5,628.5 L788.7,627.6 L789.2,625.8 L789.7,623.3 L790.2,612.9 L790.7,601.8 L790.9,598 L791.2,594 L791.7,589.2 L791.9,586.7 L792.2,576.3 L792.5,563.6 L792.7,562.3 L793,558.3 L793.2,560.9 L793.6,565.6 L793.7,570.5 L794.1,582.7 L794.2,586.8 L794.7,606.3 L794.8,610 L795.2,624.1 L795.5,632.9 L795.7,636.3 L796.2,645.5 L796.3,646.9 L796.7,648.9 L797.2,653.1 L797.4,653.8 L797.7,657.2 L798.2,660.8 L798.7,663.5 L799.1,665 L799.2,665.5 L799.7,666.9 L799.8,667.5 L800.2,668.9 L800.4,666.5 L800.9,668.5 L801.4,669.3 L801.9,670.4 L802.4,671.9 L802.9,673.5 L803,673.5 L803.4,665 L803.5,663 L803.9,657.2 L804.4,650.8 L804.6,648 L804.9,639.3 L805.4,626.4 L805.5,624.3 L805.9,613.5 L806.4,599.2 L806.4,598.7 L806.9,592.7 L807.3,589.2 L807.4,583.6 L807.8,565.9 L807.9,564.4 L808.2,560.7 L808.4,562.8 L808.8,568 L808.9,571 L809.3,580.3 L809.4,583.2 L809.9,598 L810,600.8 L810.4,606 L810.7,610 L810.9,612.2 L811.4,615.2 L811.9,617.1 L812.1,617 L812.4,623.5 L812.9,633.3 L813.4,638.7 L813.9,645.4 L814,647.1 L814.4,651.8 L814.6,655.4 L814.9,656.6 L815.4,658.6 L815.6,660.3 L815.9,661.7 L816.4,663.1 L816.7,664.6 L816.9,664.4 L817.4,667.3 L817.7,667.4 L817.9,668.3 L818.4,668.7 L818.6,666.9 L819.1,667.4 L819.6,669.1 L820.1,670.3 L820.6,671.1 L821.1,672.5 L821.3,672.6 L821.6,665.5 L822.1,655.2 L822.2,652.3 L822.6,646.8 L823.1,638.9 L823.3,636 L823.6,634.3 L824.1,632.6 L824.6,630.1 L824.9,629.5 L825.1,627.7 L825.6,625.4 L826.1,622.8 L826.1,622.5 L826.6,612.2 L827.1,601.7 L827.3,597.8 L827.6,594.5 L828.1,587.6 L828.3,586 L828.6,572.9 L828.8,562.9 L829.1,560.1 L829.3,557.7 L829.6,561.6 L829.8,565.1 L830.1,572.5 L830.4,583.8 L830.6,591.3 L831.1,609.9 L831.6,627.3 L831.8,633.2 L832.1,638.4 L832.6,647.2 L833.1,649.6 L833.6,653.6 L833.7,654.9 L834.1,657.3 L834.6,661.7 L835.1,662.9 L835.5,664.5 L835.6,664.8 L836.1,668 L836.2,667.6 L836.6,669.2 L836.8,666.5 L837.3,668.5 L837.8,668.6 L838.3,671.1 L838.8,671.1 L839.3,673.4 L839.5,674.1 L839.8,666 L840.3,652.5 L840.8,641.9 L841.1,635.4 L841.3,634.5 L841.8,633 L842.3,629.9 L842.4,629.6 L842.8,626.2 L843.3,624.1 L843.4,623.5 L843.8,610.9 L844.3,597.2 L844.3,597.6 L844.8,593.9 L845.1,592.4 L845.3,581 L845.5,569.8 L845.8,565.4 L845.9,564.7 L846.3,569.3 L846.4,570.6 L846.8,579.1 L847,583.4 L847.3,595.3 L847.7,610.7 L847.8,613.6 L848.3,629.7 L848.4,632.6 L848.8,640.1 L849.2,647.2 L849.3,647.7 L849.8,651.4 L850.3,654.5 L850.8,655.4 L851.3,656.8 L851.8,658.6 L852.3,660.1 L852.8,661.5 L853.3,663.6 L853.7,665 L853.8,665.7 L854.3,666.9 L854.4,667.7 L854.8,669.1 L855,666.8 L855.5,667.7 L856,669.7 L856.5,671.2 L857,672.6 L857.5,674 L857.8,674.3 L858,669.1 L858.5,655.9 L858.6,653.1 L859,644.5 L859.5,634.2 L859.5,633.3 L860,630.8 L860.5,628.5 L861,626.5 L861,626.1 L861.5,624.3 L862,622.7 L862.5,610.3 L863,599.2 L863,597 L863.5,596.2 L863.9,595.5 L864,590.1 L864.4,573.6 L864.5,571.1 L864.8,566.9 L865,570.5 L865.4,574.1 L865.5,576.1 L865.9,583.6 L866,586.7 L866.5,606.1 L866.6,610.6 L867,624 L867.3,633.6 L867.5,636.2 L868,645.2 L868.1,647.1 L868.5,649.6 L869,652.3 L869.2,654.5 L869.5,656 L870,656.6 L870.5,659.4 L871,661.2 L871.5,662.6 L871.9,665.3 L872,665.9 L872.5,666.9 L872.6,668.1 L873,669.3 L873.2,666.8 L873.7,668.2 L874.2,669 L874.7,670.2 L875.2,671.7 L875.7,672.9 L876.1,674.1 L876.2,669.6 L876.7,655.2 L876.8,652.1 L877.2,642.4 L877.6,632.7 L877.7,632.2 L878.2,630.8 L878.7,629.5 L878.9,627.9 L879.2,626 L879.7,623.1 L879.8,622.9 L880.2,612.8 L880.7,598.8 L880.7,598.2 L881.2,592.5 L881.5,590.5 L881.7,579.5 L881.9,566.8 L882.2,563.7 L882.3,561.2 L882.7,567 L882.9,568.4 L883.2,578.5 L883.4,582.8 L883.7,595.1 L884.1,610.8 L884.2,613.6 L884.7,629.9 L884.8,633.6 L885.2,640.5 L885.6,646.7 L885.7,648.1 L886.2,650.3 L886.7,654.4 L887.2,656 L887.7,657.1 L888.2,658.8 L888.7,659.9 L889.2,660.9 L889.7,663.3 L890.1,665.2 L890.2,665.7 L890.7,667.4 L890.8,667.4 L891.2,669 L891.4,665.9 L891.9,667.5 L892.4,668.8 L892.9,669.7 L893.4,670.4 L893.9,672.2 L894.3,673.1 L894.4,671.2 L894.9,656.9 L895,652.4 L895.4,644.6 L895.8,636.5 L895.9,635.8 L896.4,632.7 L896.9,629.3 L896.9,629.8 L897.4,625.3 L897.8,623.6 L897.9,619.4 L898.4,605.6 L898.7,597.1 L898.9,596.1 L899.4,593 L899.4,589.6 L899.8,569.5 L899.9,566.9 L900.1,563.6 L900.4,567.1 L900.6,571.5 L900.9,576.7 L901.2,583.9 L901.4,590.8 L901.9,610.6 L902.4,626.4 L902.6,632.8 L902.9,637.6 L903.4,646.6 L903.9,649.7 L904.4,653.5 L904.5,654.8 L904.9,654.6 L905.4,656.9 L905.9,658 L906.4,658.2 L906.9,660.1 L907.4,660.8 L907.9,663.8 L908.3,665.4 L908.4,665.1 L908.9,668 L909,667.8 L909.4,668.3 L909.6,665.9 L910.1,667 L910.6,668.9 L911.1,669.7 L911.6,670.2 L912.1,670.6 L912.6,672.6 L913.1,661.6 L913.5,652.9 L913.6,650.8 L914.1,641.7 L914.5,632.9 L914.6,632.5 L915.1,631.3 L915.6,628.6 L916.1,626.5 L916.1,626.4 L916.6,625.6 L917.1,624 L917.3,623.5 L917.6,615.5 L918.1,605.2 L918.4,597.7 L918.6,595.1 L919.1,587 L919.4,582.9 L919.6,574.1 L919.9,559.8 L920.1,557.7 L920.4,554.7 L920.6,557.5 L920.9,560.7 L921.1,567 L921.5,583.2 L921.6,587.4 L922.1,606 L922.2,610.6 L922.6,623.9 L922.9,633.8 L923.1,636.8 L923.6,645 L923.7,647 L924.1,648.9 L924.6,652.7 L924.8,654.3 L925.1,656.5 L925.6,660.9 L926.1,663 L926.5,665 L926.6,665.3 L927.1,667.4 L927.2,667.3 L927.6,669.3 L927.9,665.5" fill="none" stroke="#7eb26d" stroke-width="3.0" stroke-linejoin="round" stroke-linecap="butt"/></g></g><text class="ax" x="376.1" y="682.8" text-anchor="end">12.5 V</text><text class="ax" x="376.1" y="654.5" text-anchor="end">13.0 V</text><text class="ax" x="376.1" y="626.1" text-anchor="end">13.5 V</text><text class="ax" x="376.1" y="597.8" text-anchor="end">14.0 V</text><text class="ax" x="376.1" y="569.4" text-anchor="end">14.5 V</text><text class="ax" x="376.1" y="541.1" text-anchor="end">15.0 V</text><text class="axx" x="435.4" y="696.3" text-anchor="middle">8/5</text><text class="axx" x="490.1" y="696.3" text-anchor="middle">8/8</text><text class="axx" x="544.7" y="696.3" text-anchor="middle">8/11</text><text class="axx" x="599.4" y="696.3" text-anchor="middle">8/14</text><text class="axx" x="654.1" y="696.3" text-anchor="middle">8/17</text><text class="axx" x="708.8" y="696.3" text-anchor="middle">8/20</text><text class="axx" x="763.4" y="696.3" text-anchor="middle">8/23</text><text class="axx" x="818.1" y="696.3" text-anchor="middle">8/26</text><text class="axx" x="872.8" y="696.3" text-anchor="middle">8/29</text><text class="axx" x="927.4" y="696.3" text-anchor="middle">9/1</text><clipPath id="c4"><rect x="1011.0" y="536.0" width="544.8" height="146.10000000000005"/></clipPath><g stroke="rgba(255,255,255,0.13)" stroke-width="1" shape-rendering="crispEdges"><line x1="1064.3" y1="538" x2="1064.3" y2="679.7"/><line x1="1118.7" y1="538" x2="1118.7" y2="679.7"/><line x1="1173.1" y1="538" x2="1173.1" y2="679.7"/><line x1="1227.5" y1="538" x2="1227.5" y2="679.7"/><line x1="1281.9" y1="538" x2="1281.9" y2="679.7"/><line x1="1336.3" y1="538" x2="1336.3" y2="679.7"/><line x1="1390.7" y1="538" x2="1390.7" y2="679.7"/><line x1="1445.1" y1="538" x2="1445.1" y2="679.7"/><line x1="1499.5" y1="538" x2="1499.5" y2="679.7"/><line x1="1553.9" y1="538" x2="1553.9" y2="679.7"/><line x1="1012" y1="679.7" x2="1554.8" y2="679.7"/><line x1="1012" y1="651.4" x2="1554.8" y2="651.4"/><line x1="1012" y1="623" x2="1554.8" y2="623"/><line x1="1012" y1="594.7" x2="1554.8" y2="594.7"/><line x1="1012" y1="566.3" x2="1554.8" y2="566.3"/><line x1="1012" y1="538" x2="1554.8" y2="538"/></g><g clip-path="url(#c4)"><g transform="translate(0,0.8)"><path d="M1012,586.8 L1012.4,587 L1012.8,585.8 L1013.3,587.4 L1013.7,594 L1014.1,630.7 L1014.5,646.9 L1014.9,647 L1015.4,647.9 L1015.8,653.4 L1016.2,650.2 L1016.6,649.6 L1017,652.8 L1017.5,644.6 L1017.9,646.6 L1018.3,649 L1018.7,647.1 L1019.1,651.8 L1019.6,651.5 L1020,648.7 L1020.4,645.6 L1020.8,644.1 L1021.2,641.9 L1021.7,642 L1022.1,646.4 L1022.5,648.5 L1022.9,644.5 L1023.3,650.2 L1023.8,644.9 L1024.2,645.7 L1024.6,648.8 L1025,647.8 L1025.4,644.3 L1025.9,608.9 L1026.3,579.8 L1026.7,580.6 L1027.1,582.8 L1027.5,580.3 L1028,583.2 L1028.4,582.4 L1028.8,579.8 L1029.2,580.3 L1029.6,582.7 L1030.1,582.8 L1030.5,581.3 L1030.9,580.3 L1031.3,581 L1031.7,579.9 L1032.2,623.1 L1032.6,646.9 L1033,646 L1033.4,648 L1033.8,650.3 L1034.3,649.7 L1034.7,649.1 L1035.1,648.7 L1035.5,645.8 L1035.9,651.1 L1036.4,653 L1036.8,646.8 L1037.2,651.1 L1037.6,649.7 L1038,652.5 L1038.5,647.4 L1038.9,643.1 L1039.3,643 L1039.7,643.2 L1040.1,643.1 L1040.6,646.3 L1041,646.7 L1041.4,651.3 L1041.8,646.1 L1042.2,648.1 L1042.7,645.9 L1043.1,650.2 L1043.5,646.4 L1043.9,612.3 L1044.3,584.8 L1044.8,586.6 L1045.2,585.4 L1045.6,584.8 L1046,583.9 L1046.4,584.2 L1046.9,584.8 L1047.3,587.7 L1047.7,585.6 L1048.1,585.3 L1048.5,588 L1049,586.3 L1049.4,584.4 L1049.8,584.3 L1050.2,615.6 L1050.6,645 L1051.1,652.8 L1051.5,648 L1051.9,645.6 L1052.3,647.6 L1052.7,650.7 L1053.2,653.3 L1053.6,645.1 L1054,645.6 L1054.4,647.6 L1054.8,650.2 L1055.3,645.9 L1055.7,646.1 L1056.1,646.9 L1056.5,646.6 L1056.9,642.3 L1057.4,637.4 L1057.8,638.9 L1058.2,645.3 L1058.6,651.3 L1059,650 L1059.5,649.6 L1059.9,646.4 L1060.3,652.7 L1060.7,651.6 L1061.1,650.9 L1061.6,652 L1062,615.7 L1062.4,582 L1062.8,584.9 L1063.2,585.2 L1063.7,582.9 L1064.1,582.1 L1064.5,581.7 L1064.9,582.9 L1065.3,583.9 L1065.8,581.4 L1066.2,582.1 L1066.6,583.2 L1067,582.9 L1067.4,581.2 L1067.9,580.9 L1068.3,608 L1068.7,644.7 L1069.1,645 L1069.5,652.4 L1070,650.6 L1070.4,649.8 L1070.8,652.1 L1071.2,646.5 L1071.6,653.1 L1072.1,645.4 L1072.5,648.2 L1072.9,647.9 L1073.3,649.8 L1073.7,644.9 L1074.2,648.3 L1074.6,645.3 L1075,643 L1075.4,641 L1075.8,640.3 L1076.3,645.2 L1076.7,647.3 L1077.1,649.2 L1077.5,652.4 L1077.9,645.8 L1078.4,649 L1078.8,644.6 L1079.2,648.7 L1079.6,644.9 L1080,619 L1080.5,587.3 L1080.9,587.6 L1081.3,586.2 L1081.7,585.1 L1082.1,584.8 L1082.6,585.6 L1083,588 L1083.4,586.8 L1083.8,588.4 L1084.2,586.9 L1084.7,584.3 L1085.1,587 L1085.5,585.4 L1085.9,585.8 L1086.3,600.4 L1086.8,637.1 L1087.2,652.3 L1087.6,647.2 L1088,652.9 L1088.4,651.9 L1088.9,648.2 L1089.3,652.4 L1089.7,644.7 L1090.1,649.7 L1090.5,647.8 L1091,644.7 L1091.4,643.8 L1091.8,641 L1092.2,635.2 L1092.6,637.9 L1093.1,644.1 L1093.5,652 L1093.9,651.4 L1094.3,650.2 L1094.7,650.4 L1095.2,650.2 L1095.6,646.1 L1096,650.1 L1096.4,647.8 L1096.8,653.3 L1097.3,652.3 L1097.7,647 L1098.1,622.4 L1098.5,583.7 L1098.9,586.3 L1099.4,587.6 L1099.8,586.7 L1100.2,586.1 L1100.6,586.1 L1101,585.2 L1101.5,586.4 L1101.9,584.8 L1102.3,584.2 L1102.7,584.2 L1103.1,584.4 L1103.6,585.1 L1104,586.6 L1104.4,592.8 L1104.8,629.6 L1105.2,645.8 L1105.7,650.9 L1106.1,645.6 L1106.5,649.5 L1106.9,647.8 L1107.3,649 L1107.8,647.5 L1108.2,650.5 L1108.6,648.3 L1109,646.8 L1109.4,650.3 L1109.9,648 L1110.3,649.4 L1110.7,649.3 L1111.1,644.9 L1111.5,642.3 L1112,635.6 L1112.4,639.6 L1112.8,646 L1113.2,647.7 L1113.6,651.3 L1114.1,645.4 L1114.5,651.8 L1114.9,652.6 L1115.3,653.3 L1115.7,646.9 L1116.2,625.8 L1116.6,590.4 L1117,583 L1117.4,582.5 L1117.8,579.5 L1118.3,580.6 L1118.7,580.6 L1119.1,581.3 L1119.5,581 L1119.9,583.9 L1120.4,580.2 L1120.8,582.4 L1121.2,580 L1121.6,582 L1122,579.8 L1122.5,583.9 L1122.9,622 L1123.3,644.5 L1123.7,652.7 L1124.1,648.9 L1124.6,649.2 L1125,644.5 L1125.4,647 L1125.8,644.5 L1126.2,645.2 L1126.7,649.7 L1127.1,652.3 L1127.5,652.3 L1127.9,643.4 L1128.3,642.4 L1128.8,638.1 L1129.2,641.3 L1129.6,647.3 L1130,653 L1130.4,649.1 L1130.9,647.2 L1131.3,651.5 L1131.7,649.9 L1132.1,647.2 L1132.5,651.2 L1133,648.8 L1133.4,648 L1133.8,649.9 L1134.2,629.1 L1134.6,593.8 L1135.1,587 L1135.5,584.8 L1135.9,584.8 L1136.3,587.1 L1136.7,584.3 L1137.2,585 L1137.6,584 L1138,584.4 L1138.4,585.7 L1138.8,584.7 L1139.3,586.5 L1139.7,585 L1140.1,587.6 L1140.5,586.4 L1140.9,614.4 L1141.4,648.9 L1141.8,645.4 L1142.2,647.3 L1142.6,645.2 L1143,645.5 L1143.5,644.6 L1143.9,647.9 L1144.3,647.9 L1144.7,649.3 L1145.1,651.6 L1145.6,646.2 L1146,648 L1146.4,652.1 L1146.8,644.5 L1147.2,639.6 L1147.7,639.4 L1148.1,644.5 L1148.5,649.5 L1148.9,644.4 L1149.3,652.3 L1149.8,651.4 L1150.2,648.1 L1150.6,645.8 L1151,645.1 L1151.4,649.9 L1151.9,646.5 L1152.3,632.5 L1152.7,597.1 L1153.1,585.2 L1153.5,584 L1154,581.9 L1154.4,582.7 L1154.8,583.7 L1155.2,583 L1155.6,583.5 L1156.1,583.3 L1156.5,581.7 L1156.9,581.3 L1157.3,584.8 L1157.7,582.3 L1158.2,581.5 L1158.6,583 L1159,606.8 L1159.4,643.6 L1159.8,649 L1160.3,650.2 L1160.7,649.1 L1161.1,648.2 L1161.5,647.9 L1161.9,652.6 L1162.4,644.3 L1162.8,651.1 L1163.2,648.5 L1163.6,651.8 L1164,647.8 L1164.5,652.9 L1164.9,643.3 L1165.3,638.1 L1165.7,636.8 L1166.1,641.1 L1166.6,644.7 L1167,649.2 L1167.4,649.3 L1167.8,646.5 L1168.2,645.4 L1168.7,648.6 L1169.1,647.4 L1169.5,647.2 L1169.9,648.8 L1170.3,635.9 L1170.8,600.5 L1171.2,584.4 L1171.6,584.9 L1172,584.6 L1172.4,584.5 L1172.9,583 L1173.3,585.9 L1173.7,586.1 L1174.1,582.5 L1174.5,584.4 L1175,583.5 L1175.4,582.5 L1175.8,583.3 L1176.2,584.1 L1176.6,582.4 L1177.1,599.2 L1177.5,636 L1177.9,647.8 L1178.3,649.5 L1178.7,651.9 L1179.2,652.1 L1179.6,646.3 L1180,645.3 L1180.4,650.3 L1180.8,648.7 L1181.3,647.3 L1181.7,648 L1182.1,651.1 L1182.5,644.7 L1182.9,641.9 L1183.4,641.1 L1183.8,644 L1184.2,645.9 L1184.6,650.9 L1185,651.9 L1185.5,652.7 L1185.9,652.5 L1186.3,651.9 L1186.7,649.1 L1187.1,648.3 L1187.6,647.1 L1188,649.6 L1188.4,639.2 L1188.8,603.9 L1189.2,583.2 L1189.7,586.6 L1190.1,585.1 L1190.5,586.2 L1190.9,584.4 L1191.3,584.1 L1191.8,584.1 L1192.2,584.7 L1192.6,585 L1193,585.2 L1193.4,586.2 L1193.9,585.8 L1194.3,584.5 L1194.7,584.1 L1195.1,591.7 L1195.5,628.4 L1196,652.7 L1196.4,645.8 L1196.8,653.4 L1197.2,652.5 L1197.6,649.5 L1198.1,650.5 L1198.5,648.8 L1198.9,647.2 L1199.3,648.1 L1199.7,646.3 L1200.2,649.3 L1200.6,645.6 L1201,644.3 L1201.4,640.4 L1201.8,642.7 L1202.3,644 L1202.7,652.2 L1203.1,644.7 L1203.5,653.6 L1203.9,645.4 L1204.4,644.5 L1204.8,650.2 L1205.2,646.2 L1205.6,648.9 L1206,648.4 L1206.5,642.6 L1206.9,607.2 L1207.3,582.6 L1207.7,582.2 L1208.1,585.1 L1208.6,585.5 L1209,582.3 L1209.4,583.8 L1209.8,582.4 L1210.2,585.5 L1210.7,582.6 L1211.1,585.8 L1211.5,585.8 L1211.9,585.2 L1212.3,582.3 L1212.8,584.7 L1213.2,584.5 L1213.6,620.8 L1214,650.9 L1214.4,652.9 L1214.9,649.5 L1215.3,649 L1215.7,650.5 L1216.1,646.8 L1216.5,650.7 L1217,644.5 L1217.4,645.2 L1217.8,648.2 L1218.2,652.7 L1218.6,648.4 L1219.1,647.9 L1219.5,647.6 L1219.9,649.7 L1220.3,646.9 L1220.7,644.4 L1221.2,647.1 L1221.6,653.2 L1222,647.8 L1222.4,647.8 L1222.8,648.6 L1223.3,644.9 L1223.7,653.1 L1224.1,653.5 L1224.5,646 L1224.9,610.6 L1225.4,584.8 L1225.8,587.6 L1226.2,587.4 L1226.6,584.3 L1227,586.4 L1227.5,584 L1227.9,584.4 L1228.3,585 L1228.7,586.4 L1229.1,587.7 L1229.6,583.6 L1230,584.1 L1230.4,583.9 L1230.8,585.7 L1231.2,586.8 L1231.7,613.2 L1232.1,647.8 L1232.5,649.7 L1232.9,651.8 L1233.3,652.6 L1233.8,649.8 L1234.2,652.2 L1234.6,651.1 L1235,644.5 L1235.4,644.9 L1235.9,645.4 L1236.3,648.9 L1236.7,646.5 L1237.1,644.9 L1237.5,642.1 L1238,641.4 L1238.4,645.9 L1238.8,644.8 L1239.2,648.7 L1239.6,647.8 L1240.1,646.2 L1240.5,650.9 L1240.9,652.3 L1241.3,645.4 L1241.7,648 L1242.2,653.4 L1242.6,647.2 L1243,614 L1243.4,581.5 L1243.8,581.3 L1244.3,584.2 L1244.7,583.5 L1245.1,581.5 L1245.5,581.7 L1245.9,583.2 L1246.4,580.4 L1246.8,583.4 L1247.2,580.7 L1247.6,584.2 L1248,582.7 L1248.5,580.3 L1248.9,581.6 L1249.3,581.3 L1249.7,605.7 L1250.1,642.4 L1250.6,645.4 L1251,647.8 L1251.4,648.6 L1251.8,646 L1252.2,648.7 L1252.7,644.7 L1253.1,646.6 L1253.5,653.6 L1253.9,651 L1254.3,645.4 L1254.8,652.5 L1255.2,653.5 L1255.6,648.2 L1256,647.2 L1256.4,641.1 L1256.9,638.2 L1257.3,637.9 L1257.7,644.7 L1258.1,647.8 L1258.5,653.2 L1259,650.5 L1259.4,650.5 L1259.8,645.1 L1260.2,651.6 L1260.6,650.1 L1261.1,617.4 L1261.5,586 L1261.9,587.6 L1262.3,586.5 L1262.7,587.2 L1263.2,585.3 L1263.6,585 L1264,585.9 L1264.4,584.6 L1264.8,586.3 L1265.3,585.2 L1265.7,588.1 L1266.1,586.8 L1266.5,587.1 L1266.9,584.5 L1267.4,586.3 L1267.8,598.1 L1268.2,634.8 L1268.6,650.1 L1269,647.4 L1269.5,644.8 L1269.9,645.9 L1270.3,646.2 L1270.7,647.4 L1271.1,646.2 L1271.6,648.4 L1272,650 L1272.4,650.7 L1272.8,651.2 L1273.2,643.7 L1273.7,640.4 L1274.1,638.3 L1274.5,643.4 L1274.9,644.6 L1275.3,645.2 L1275.8,650.3 L1276.2,652.1 L1276.6,646.8 L1277,646.6 L1277.4,651.9 L1277.9,653.1 L1278.3,647.4 L1278.7,650.1 L1279.1,620.7 L1279.5,585.4 L1280,585.3 L1280.4,583.8 L1280.8,587.2 L1281.2,586.6 L1281.6,587.7 L1282.1,584.7 L1282.5,587.5 L1282.9,583.9 L1283.3,585.1 L1283.7,585.5 L1284.2,586.6 L1284.6,583.9 L1285,587.3 L1285.4,585.2 L1285.8,590.5 L1286.3,627.2 L1286.7,645.9 L1287.1,647.5 L1287.5,653.2 L1287.9,652.6 L1288.4,651 L1288.8,646.8 L1289.2,652.4 L1289.6,644.7 L1290,645.4 L1290.5,648.3 L1290.9,645.5 L1291.3,646.6 L1291.7,642.8 L1292.1,634.6 L1292.6,639.5 L1293,643.8 L1293.4,650.5 L1293.8,645.1 L1294.2,649.8 L1294.7,651.1 L1295.1,649.6 L1295.5,652.9 L1295.9,650.6 L1296.3,646.8 L1296.8,649.9 L1297.2,624.1 L1297.6,588.7 L1298,574.7 L1298.4,569.9 L1298.9,571.3 L1299.3,576.8 L1299.7,584.5 L1300.1,587.6 L1300.5,585.9 L1301,584.1 L1301.4,585 L1301.8,586.7 L1302.2,587.2 L1302.6,584 L1303.1,587.3 L1303.5,585.1 L1303.9,585.2 L1304.3,619.7 L1304.7,651.9 L1305.2,649.5 L1305.6,645.6 L1306,644.4 L1306.4,652.9 L1306.8,653.3 L1307.3,651.2 L1307.7,653.2 L1308.1,645 L1308.5,652.9 L1308.9,650.2 L1309.4,644.8 L1309.8,643.3 L1310.2,640.6 L1310.6,643.2 L1311,647 L1311.5,649.8 L1311.9,645 L1312.3,652.6 L1312.7,647.1 L1313.1,650.7 L1313.6,649.7 L1314,646.9 L1314.4,650.4 L1314.8,649.1 L1315.2,627.5 L1315.7,592.1 L1316.1,585.4 L1316.5,585.5 L1316.9,587.3 L1317.3,585.9 L1317.8,585.9 L1318.2,585.7 L1318.6,586.4 L1319,585.6 L1319.4,584.3 L1319.9,587.3 L1320.3,587.3 L1320.7,585.2 L1321.1,585 L1321.5,584 L1322,587.5 L1322.4,612.1 L1322.8,648.8 L1323.2,653.5 L1323.6,648 L1324.1,651.6 L1324.5,649 L1324.9,650.9 L1325.3,652.8 L1325.7,648.4 L1326.2,650.7 L1326.6,649.1 L1327,645.5 L1327.4,649.4 L1327.8,645.4 L1328.3,641.8 L1328.7,639 L1329.1,642.1 L1329.5,646.5 L1329.9,651.6 L1330.4,652.3 L1330.8,652.3 L1331.2,644.5 L1331.6,652.7 L1332,645 L1332.5,649.4 L1332.9,645.4 L1333.3,630.8 L1333.7,595.5 L1334.1,579.7 L1334.6,573.9 L1335,574.7 L1335.4,580.4 L1335.8,583.3 L1336.2,584 L1336.7,586 L1337.1,587.5 L1337.5,585.2 L1337.9,584.5 L1338.3,585.8 L1338.8,584.2 L1339.2,586.2 L1339.6,585.8 L1340,585.9 L1340.4,604.5 L1340.9,641.2 L1341.3,652.7 L1341.7,653 L1342.1,647.7 L1342.5,645.4 L1343,651.9 L1343.4,645.2 L1343.8,650.6 L1344.2,649.7 L1344.6,653.2 L1345.1,653.6 L1345.5,642.9 L1345.9,643.3 L1346.3,643.2 L1346.7,643.3 L1347.2,650 L1347.6,650.7 L1348,650.6 L1348.4,650.9 L1348.8,653.5 L1349.3,646.9 L1349.7,650 L1350.1,651.9 L1350.5,650.7 L1350.9,653.2 L1351.4,634.2 L1351.8,598.8 L1352.2,582.3 L1352.6,581.8 L1353,581.6 L1353.5,582.4 L1353.9,579.9 L1354.3,583.7 L1354.7,583.5 L1355.1,581.9 L1355.6,582.5 L1356,583 L1356.4,581.1 L1356.8,582.1 L1357.2,581.8 L1357.7,581.3 L1358.1,582.5 L1358.5,596.9 L1358.9,633.6 L1359.3,648.9 L1359.8,644.4 L1360.2,652.1 L1360.6,649.3 L1361,647.9 L1361.4,646.5 L1361.9,652.8 L1362.3,652.6 L1362.7,651.1 L1363.1,647.4 L1363.5,651.7 L1364,653.3 L1364.4,646.3 L1364.8,641.3 L1365.2,642.8 L1365.6,646.8 L1366.1,649.6 L1366.5,648.8 L1366.9,650.8 L1367.3,649.8 L1367.7,644.9 L1368.2,650.2 L1368.6,651.2 L1369,649.5 L1369.4,637.6 L1369.8,602.2 L1370.3,579.3 L1370.7,580 L1371.1,578 L1371.5,578.8 L1371.9,583.6 L1372.4,586.4 L1372.8,586.3 L1373.2,584.8 L1373.6,587.1 L1374,583.8 L1374.5,584.8 L1374.9,583.9 L1375.3,587 L1375.7,587.6 L1376.1,586.3 L1376.6,589.3 L1377,626.1 L1377.4,649.3 L1377.8,648.7 L1378.2,647.8 L1378.7,653.3 L1379.1,644.9 L1379.5,652.2 L1379.9,651.9 L1380.3,652.5 L1380.8,650.1 L1381.2,652.1 L1381.6,647 L1382,650.4 L1382.4,643.6 L1382.9,638.4 L1383.3,637.2 L1383.7,642 L1384.1,646.7 L1384.5,652.3 L1385,647.1 L1385.4,646.5 L1385.8,645.1 L1386.2,650 L1386.6,651.6 L1387.1,647 L1387.5,640.9 L1387.9,605.6 L1388.3,583.9 L1388.7,584 L1389.2,585.7 L1389.6,587 L1390,584.3 L1390.4,587.7 L1390.8,585.5 L1391.3,584.5 L1391.7,585.9 L1392.1,585.1 L1392.5,586.5 L1392.9,585.2 L1393.4,587.5 L1393.8,585.3 L1394.2,587.8 L1394.6,587.6 L1395,618.5 L1395.5,652.5 L1395.9,650.6 L1396.3,653.6 L1396.7,647.1 L1397.1,645.1 L1397.6,645.8 L1398,653.2 L1398.4,649 L1398.8,652.4 L1399.2,648.3 L1399.7,642.2 L1400.1,640.1 L1400.5,635.6 L1400.9,640.3 L1401.3,645.9 L1401.8,653 L1402.2,648.5 L1402.6,649.2 L1403,650.3 L1403.4,644.7 L1403.9,645.8 L1404.3,649.8 L1404.7,652.3 L1405.1,645.4 L1405.5,644.3 L1406,608.9 L1406.4,584.1 L1406.8,583.5 L1407.2,585.9 L1407.6,586.6 L1408.1,585.3 L1408.5,585.3 L1408.9,584.4 L1409.3,587.1 L1409.7,583.3 L1410.2,585.3 L1410.6,586.4 L1411,585 L1411.4,587.4 L1411.8,583.9 L1412.3,585.3 L1412.7,586.8 L1413.1,610.9 L1413.5,647.6 L1413.9,653.2 L1414.4,648.7 L1414.8,646.2 L1415.2,651.4 L1415.6,644.7 L1416,648 L1416.5,648.9 L1416.9,644.6 L1417.3,650.3 L1417.7,647.1 L1418.1,650.1 L1418.6,644.6 L1419,644.3 L1419.4,644.7 L1419.8,646.7 L1420.2,646.2 L1420.7,647.3 L1421.1,644.7 L1421.5,646.8 L1421.9,650.4 L1422.3,647.9 L1422.8,652.1 L1423.2,649.6 L1423.6,652.6 L1424,612.3 L1424.4,578.6 L1424.9,575.8 L1425.3,574.8 L1425.7,577.7 L1426.1,582.3 L1426.5,584 L1427,584.9 L1427.4,584.8 L1427.8,585.1 L1428.2,587 L1428.6,585.3 L1429.1,584.2 L1429.5,586.1 L1429.9,587.6 L1430.3,586.4 L1430.7,587.6 L1431.2,603.3 L1431.6,640.1 L1432,648.3 L1432.4,649.2 L1432.8,652.6 L1433.3,645.6 L1433.7,651.3 L1434.1,649.5 L1434.5,652.2 L1434.9,648.8 L1435.4,648.3 L1435.8,647.1 L1436.2,653.5 L1436.6,652.2 L1437,652.2 L1437.5,650.8 L1437.9,646.1 L1438.3,645.7 L1438.7,646.8 L1439.1,648.4 L1439.6,653.4 L1440,651 L1440.4,648.9 L1440.8,646.8 L1441.2,650.1 L1441.7,649.4 L1442.1,615.7 L1442.5,587.3 L1442.9,586.3 L1443.3,586.7 L1443.8,587 L1444.2,584.5 L1444.6,585.9 L1445,585.7 L1445.4,584.8 L1445.9,585.3 L1446.3,587.5 L1446.7,585.3 L1447.1,585.9 L1447.5,586.3 L1448,585.5 L1448.4,584.9 L1448.8,587.4 L1449.2,595.7 L1449.6,632.5 L1450.1,650.9 L1450.5,648.7 L1450.9,652.7 L1451.3,646.3 L1451.7,651.7 L1452.2,650.7 L1452.6,646.4 L1453,645.4 L1453.4,651.2 L1453.8,652.5 L1454.3,647.4 L1454.7,647.9 L1455.1,649.9 L1455.5,643.7 L1455.9,642.7 L1456.4,644.5 L1456.8,646.4 L1457.2,647.7 L1457.6,651.1 L1458,650.5 L1458.5,646.1 L1458.9,653.3 L1459.3,646.8 L1459.7,651 L1460.1,619 L1460.6,585 L1461,583.7 L1461.4,586.9 L1461.8,587.5 L1462.2,586.4 L1462.7,584.8 L1463.1,586.7 L1463.5,586.3 L1463.9,583.6 L1464.3,584.1 L1464.8,583.7 L1465.2,585.3 L1465.6,577.5 L1466,573.2 L1466.4,567.5 L1466.9,572.9 L1467.3,588.2 L1467.7,624.9 L1468.1,647.5 L1468.5,649 L1469,647.6 L1469.4,647.2 L1469.8,652.1 L1470.2,647 L1470.6,652.5 L1471.1,645.7 L1471.5,650.4 L1471.9,652.8 L1472.3,653.5 L1472.7,648 L1473.2,653 L1473.6,649.9 L1474,653.2 L1474.4,647.2 L1474.8,645.6 L1475.3,653.4 L1475.7,647.9 L1476.1,647.6 L1476.5,648.5 L1476.9,644.6 L1477.4,650.7 L1477.8,645.3 L1478.2,622.4 L1478.6,584.6 L1479,586.1 L1479.5,585.8 L1479.9,586.6 L1480.3,583.6 L1480.7,586.1 L1481.1,584.4 L1481.6,583.6 L1482,585.9 L1482.4,584.1 L1482.8,584 L1483.2,585.1 L1483.7,583.5 L1484.1,585.1 L1484.5,586.4 L1484.9,586.7 L1485.3,586.4 L1485.8,617.3 L1486.2,646.9 L1486.6,648.9 L1487,652.3 L1487.4,644.8 L1487.9,653.5 L1488.3,648.1 L1488.7,649.2 L1489.1,645.4 L1489.5,648.1 L1490,645.8 L1490.4,651.6 L1490.8,648.7 L1491.2,646.4 L1491.6,650.2 L1492.1,643.9 L1492.5,640.2 L1492.9,635.6 L1493.3,643 L1493.7,647.5 L1494.2,648.9 L1494.6,648.4 L1495,647.2 L1495.4,652.4 L1495.8,645.7 L1496.3,625.8 L1496.7,590.4 L1497.1,582 L1497.5,577.1 L1497.9,580.1 L1498.4,582.2 L1498.8,583.4 L1499.2,583.9 L1499.6,585.4 L1500,587.4 L1500.5,586.4 L1500.9,584.7 L1501.3,584.3 L1501.7,584 L1502.1,585.4 L1502.6,587.2 L1503,586.5 L1503.4,585.9 L1503.8,609.7 L1504.2,646.5 L1504.7,652.4 L1505.1,650.4 L1505.5,650.7 L1505.9,646.9 L1506.3,649.3 L1506.8,648.3 L1507.2,650.9 L1507.6,646.9 L1508,648.5 L1508.4,652.9 L1508.9,645 L1509.3,652.6 L1509.7,651.3 L1510.1,644.1 L1510.5,643.3 L1511,640.8 L1511.4,642.3 L1511.8,645.8 L1512.2,653.3 L1512.6,651.6 L1513.1,644.4 L1513.5,648.7 L1513.9,644.9 L1514.3,629.1 L1514.7,593.8 L1515.2,581.5 L1515.6,576.2 L1516,577.4 L1516.4,580.5 L1516.8,585.2 L1517.3,583.6 L1517.7,586.3 L1518.1,583.6 L1518.5,583.8 L1518.9,587.3 L1519.4,587.3 L1519.8,586 L1520.2,586.6 L1520.6,586 L1521,586.9 L1521.5,584.6 L1521.9,602.2 L1522.3,638.9 L1522.7,652.7 L1523.1,648.1 L1523.6,650.6 L1524,650.5 L1524.4,648 L1524.8,653.5 L1525.2,646.7 L1525.7,649.3 L1526.1,646.7 L1526.5,646 L1526.9,645.1 L1527.3,647.5 L1527.8,644.6 L1528.2,643.3 L1528.6,642.4 L1529,645.7 L1529.4,651.4 L1529.9,649.7 L1530.3,650.3 L1530.7,651.4 L1531.1,644.9 L1531.5,653.6 L1532,653.3 L1532.4,632.5 L1532.8,597.1 L1533.2,582.2 L1533.6,584.5 L1534.1,581.3 L1534.5,582.6 L1534.9,581.7 L1535.3,581.2 L1535.7,582.1 L1536.2,581.1 L1536.6,584.7 L1537,584.6 L1537.4,585.4 L1537.8,585.5 L1538.3,581.9 L1538.7,582.3 L1539.1,584.1 L1539.5,584.8 L1539.9,594.6 L1540.4,631.3 L1540.8,652.7 L1541.2,648.9 L1541.6,644.4 L1542,653.6 L1542.5,648.4 L1542.9,647.1 L1543.3,651.3 L1543.7,652.2 L1544.1,645.1 L1544.6,646.4 L1545,642.3 L1545.4,639.5 L1545.8,640.2 L1546.2,644.9 L1546.7,650.2 L1547.1,646.9 L1547.5,650.6 L1547.9,650.7 L1548.3,650.6 L1548.8,652.9 L1549.2,645.5 L1549.6,647.6 L1550,647.9 L1550.4,635.9 L1550.9,600.5 L1551.3,581.3 L1551.7,580.4 L1552.1,581.2 L1552.5,581.2 L1553,585.6 L1553.4,584.6 L1553.8,583.7 L1554.2,587.1 L1554.6,586.7 L1554.6,679.7 L1012,679.7 Z" fill="#7eb26d" fill-opacity="0.8" stroke="none"/><path d="M1012,586.8 L1012.4,587 L1012.8,585.8 L1013.3,587.4 L1013.7,594 L1014.1,630.7 L1014.5,646.9 L1014.9,647 L1015.4,647.9 L1015.8,653.4 L1016.2,650.2 L1016.6,649.6 L1017,652.8 L1017.5,644.6 L1017.9,646.6 L1018.3,649 L1018.7,647.1 L1019.1,651.8 L1019.6,651.5 L1020,648.7 L1020.4,645.6 L1020.8,644.1 L1021.2,641.9 L1021.7,642 L1022.1,646.4 L1022.5,648.5 L1022.9,644.5 L1023.3,650.2 L1023.8,644.9 L1024.2,645.7 L1024.6,648.8 L1025,647.8 L1025.4,644.3 L1025.9,608.9 L1026.3,579.8 L1026.7,580.6 L1027.1,582.8 L1027.5,580.3 L1028,583.2 L1028.4,582.4 L1028.8,579.8 L1029.2,580.3 L1029.6,582.7 L1030.1,582.8 L1030.5,581.3 L1030.9,580.3 L1031.3,581 L1031.7,579.9 L1032.2,623.1 L1032.6,646.9 L1033,646 L1033.4,648 L1033.8,650.3 L1034.3,649.7 L1034.7,649.1 L1035.1,648.7 L1035.5,645.8 L1035.9,651.1 L1036.4,653 L1036.8,646.8 L1037.2,651.1 L1037.6,649.7 L1038,652.5 L1038.5,647.4 L1038.9,643.1 L1039.3,643 L1039.7,643.2 L1040.1,643.1 L1040.6,646.3 L1041,646.7 L1041.4,651.3 L1041.8,646.1 L1042.2,648.1 L1042.7,645.9 L1043.1,650.2 L1043.5,646.4 L1043.9,612.3 L1044.3,584.8 L1044.8,586.6 L1045.2,585.4 L1045.6,584.8 L1046,583.9 L1046.4,584.2 L1046.9,584.8 L1047.3,587.7 L1047.7,585.6 L1048.1,585.3 L1048.5,588 L1049,586.3 L1049.4,584.4 L1049.8,584.3 L1050.2,615.6 L1050.6,645 L1051.1,652.8 L1051.5,648 L1051.9,645.6 L1052.3,647.6 L1052.7,650.7 L1053.2,653.3 L1053.6,645.1 L1054,645.6 L1054.4,647.6 L1054.8,650.2 L1055.3,645.9 L1055.7,646.1 L1056.1,646.9 L1056.5,646.6 L1056.9,642.3 L1057.4,637.4 L1057.8,638.9 L1058.2,645.3 L1058.6,651.3 L1059,650 L1059.5,649.6 L1059.9,646.4 L1060.3,652.7 L1060.7,651.6 L1061.1,650.9 L1061.6,652 L1062,615.7 L1062.4,582 L1062.8,584.9 L1063.2,585.2 L1063.7,582.9 L1064.1,582.1 L1064.5,581.7 L1064.9,582.9 L1065.3,583.9 L1065.8,581.4 L1066.2,582.1 L1066.6,583.2 L1067,582.9 L1067.4,581.2 L1067.9,580.9 L1068.3,608 L1068.7,644.7 L1069.1,645 L1069.5,652.4 L1070,650.6 L1070.4,649.8 L1070.8,652.1 L1071.2,646.5 L1071.6,653.1 L1072.1,645.4 L1072.5,648.2 L1072.9,647.9 L1073.3,649.8 L1073.7,644.9 L1074.2,648.3 L1074.6,645.3 L1075,643 L1075.4,641 L1075.8,640.3 L1076.3,645.2 L1076.7,647.3 L1077.1,649.2 L1077.5,652.4 L1077.9,645.8 L1078.4,649 L1078.8,644.6 L1079.2,648.7 L1079.6,644.9 L1080,619 L1080.5,587.3 L1080.9,587.6 L1081.3,586.2 L1081.7,585.1 L1082.1,584.8 L1082.6,585.6 L1083,588 L1083.4,586.8 L1083.8,588.4 L1084.2,586.9 L1084.7,584.3 L1085.1,587 L1085.5,585.4 L1085.9,585.8 L1086.3,600.4 L1086.8,637.1 L1087.2,652.3 L1087.6,647.2 L1088,652.9 L1088.4,651.9 L1088.9,648.2 L1089.3,652.4 L1089.7,644.7 L1090.1,649.7 L1090.5,647.8 L1091,644.7 L1091.4,643.8 L1091.8,641 L1092.2,635.2 L1092.6,637.9 L1093.1,644.1 L1093.5,652 L1093.9,651.4 L1094.3,650.2 L1094.7,650.4 L1095.2,650.2 L1095.6,646.1 L1096,650.1 L1096.4,647.8 L1096.8,653.3 L1097.3,652.3 L1097.7,647 L1098.1,622.4 L1098.5,583.7 L1098.9,586.3 L1099.4,587.6 L1099.8,586.7 L1100.2,586.1 L1100.6,586.1 L1101,585.2 L1101.5,586.4 L1101.9,584.8 L1102.3,584.2 L1102.7,584.2 L1103.1,584.4 L1103.6,585.1 L1104,586.6 L1104.4,592.8 L1104.8,629.6 L1105.2,645.8 L1105.7,650.9 L1106.1,645.6 L1106.5,649.5 L1106.9,647.8 L1107.3,649 L1107.8,647.5 L1108.2,650.5 L1108.6,648.3 L1109,646.8 L1109.4,650.3 L1109.9,648 L1110.3,649.4 L1110.7,649.3 L1111.1,644.9 L1111.5,642.3 L1112,635.6 L1112.4,639.6 L1112.8,646 L1113.2,647.7 L1113.6,651.3 L1114.1,645.4 L1114.5,651.8 L1114.9,652.6 L1115.3,653.3 L1115.7,646.9 L1116.2,625.8 L1116.6,590.4 L1117,583 L1117.4,582.5 L1117.8,579.5 L1118.3,580.6 L1118.7,580.6 L1119.1,581.3 L1119.5,581 L1119.9,583.9 L1120.4,580.2 L1120.8,582.4 L1121.2,580 L1121.6,582 L1122,579.8 L1122.5,583.9 L1122.9,622 L1123.3,644.5 L1123.7,652.7 L1124.1,648.9 L1124.6,649.2 L1125,644.5 L1125.4,647 L1125.8,644.5 L1126.2,645.2 L1126.7,649.7 L1127.1,652.3 L1127.5,652.3 L1127.9,643.4 L1128.3,642.4 L1128.8,638.1 L1129.2,641.3 L1129.6,647.3 L1130,653 L1130.4,649.1 L1130.9,647.2 L1131.3,651.5 L1131.7,649.9 L1132.1,647.2 L1132.5,651.2 L1133,648.8 L1133.4,648 L1133.8,649.9 L1134.2,629.1 L1134.6,593.8 L1135.1,587 L1135.5,584.8 L1135.9,584.8 L1136.3,587.1 L1136.7,584.3 L1137.2,585 L1137.6,584 L1138,584.4 L1138.4,585.7 L1138.8,584.7 L1139.3,586.5 L1139.7,585 L1140.1,587.6 L1140.5,586.4 L1140.9,614.4 L1141.4,648.9 L1141.8,645.4 L1142.2,647.3 L1142.6,645.2 L1143,645.5 L1143.5,644.6 L1143.9,647.9 L1144.3,647.9 L1144.7,649.3 L1145.1,651.6 L1145.6,646.2 L1146,648 L1146.4,652.1 L1146.8,644.5 L1147.2,639.6 L1147.7,639.4 L1148.1,644.5 L1148.5,649.5 L1148.9,644.4 L1149.3,652.3 L1149.8,651.4 L1150.2,648.1 L1150.6,645.8 L1151,645.1 L1151.4,649.9 L1151.9,646.5 L1152.3,632.5 L1152.7,597.1 L1153.1,585.2 L1153.5,584 L1154,581.9 L1154.4,582.7 L1154.8,583.7 L1155.2,583 L1155.6,583.5 L1156.1,583.3 L1156.5,581.7 L1156.9,581.3 L1157.3,584.8 L1157.7,582.3 L1158.2,581.5 L1158.6,583 L1159,606.8 L1159.4,643.6 L1159.8,649 L1160.3,650.2 L1160.7,649.1 L1161.1,648.2 L1161.5,647.9 L1161.9,652.6 L1162.4,644.3 L1162.8,651.1 L1163.2,648.5 L1163.6,651.8 L1164,647.8 L1164.5,652.9 L1164.9,643.3 L1165.3,638.1 L1165.7,636.8 L1166.1,641.1 L1166.6,644.7 L1167,649.2 L1167.4,649.3 L1167.8,646.5 L1168.2,645.4 L1168.7,648.6 L1169.1,647.4 L1169.5,647.2 L1169.9,648.8 L1170.3,635.9 L1170.8,600.5 L1171.2,584.4 L1171.6,584.9 L1172,584.6 L1172.4,584.5 L1172.9,583 L1173.3,585.9 L1173.7,586.1 L1174.1,582.5 L1174.5,584.4 L1175,583.5 L1175.4,582.5 L1175.8,583.3 L1176.2,584.1 L1176.6,582.4 L1177.1,599.2 L1177.5,636 L1177.9,647.8 L1178.3,649.5 L1178.7,651.9 L1179.2,652.1 L1179.6,646.3 L1180,645.3 L1180.4,650.3 L1180.8,648.7 L1181.3,647.3 L1181.7,648 L1182.1,651.1 L1182.5,644.7 L1182.9,641.9 L1183.4,641.1 L1183.8,644 L1184.2,645.9 L1184.6,650.9 L1185,651.9 L1185.5,652.7 L1185.9,652.5 L1186.3,651.9 L1186.7,649.1 L1187.1,648.3 L1187.6,647.1 L1188,649.6 L1188.4,639.2 L1188.8,603.9 L1189.2,583.2 L1189.7,586.6 L1190.1,585.1 L1190.5,586.2 L1190.9,584.4 L1191.3,584.1 L1191.8,584.1 L1192.2,584.7 L1192.6,585 L1193,585.2 L1193.4,586.2 L1193.9,585.8 L1194.3,584.5 L1194.7,584.1 L1195.1,591.7 L1195.5,628.4 L1196,652.7 L1196.4,645.8 L1196.8,653.4 L1197.2,652.5 L1197.6,649.5 L1198.1,650.5 L1198.5,648.8 L1198.9,647.2 L1199.3,648.1 L1199.7,646.3 L1200.2,649.3 L1200.6,645.6 L1201,644.3 L1201.4,640.4 L1201.8,642.7 L1202.3,644 L1202.7,652.2 L1203.1,644.7 L1203.5,653.6 L1203.9,645.4 L1204.4,644.5 L1204.8,650.2 L1205.2,646.2 L1205.6,648.9 L1206,648.4 L1206.5,642.6 L1206.9,607.2 L1207.3,582.6 L1207.7,582.2 L1208.1,585.1 L1208.6,585.5 L1209,582.3 L1209.4,583.8 L1209.8,582.4 L1210.2,585.5 L1210.7,582.6 L1211.1,585.8 L1211.5,585.8 L1211.9,585.2 L1212.3,582.3 L1212.8,584.7 L1213.2,584.5 L1213.6,620.8 L1214,650.9 L1214.4,652.9 L1214.9,649.5 L1215.3,649 L1215.7,650.5 L1216.1,646.8 L1216.5,650.7 L1217,644.5 L1217.4,645.2 L1217.8,648.2 L1218.2,652.7 L1218.6,648.4 L1219.1,647.9 L1219.5,647.6 L1219.9,649.7 L1220.3,646.9 L1220.7,644.4 L1221.2,647.1 L1221.6,653.2 L1222,647.8 L1222.4,647.8 L1222.8,648.6 L1223.3,644.9 L1223.7,653.1 L1224.1,653.5 L1224.5,646 L1224.9,610.6 L1225.4,584.8 L1225.8,587.6 L1226.2,587.4 L1226.6,584.3 L1227,586.4 L1227.5,584 L1227.9,584.4 L1228.3,585 L1228.7,586.4 L1229.1,587.7 L1229.6,583.6 L1230,584.1 L1230.4,583.9 L1230.8,585.7 L1231.2,586.8 L1231.7,613.2 L1232.1,647.8 L1232.5,649.7 L1232.9,651.8 L1233.3,652.6 L1233.8,649.8 L1234.2,652.2 L1234.6,651.1 L1235,644.5 L1235.4,644.9 L1235.9,645.4 L1236.3,648.9 L1236.7,646.5 L1237.1,644.9 L1237.5,642.1 L1238,641.4 L1238.4,645.9 L1238.8,644.8 L1239.2,648.7 L1239.6,647.8 L1240.1,646.2 L1240.5,650.9 L1240.9,652.3 L1241.3,645.4 L1241.7,648 L1242.2,653.4 L1242.6,647.2 L1243,614 L1243.4,581.5 L1243.8,581.3 L1244.3,584.2 L1244.7,583.5 L1245.1,581.5 L1245.5,581.7 L1245.9,583.2 L1246.4,580.4 L1246.8,583.4 L1247.2,580.7 L1247.6,584.2 L1248,582.7 L1248.5,580.3 L1248.9,581.6 L1249.3,581.3 L1249.7,605.7 L1250.1,642.4 L1250.6,645.4 L1251,647.8 L1251.4,648.6 L1251.8,646 L1252.2,648.7 L1252.7,644.7 L1253.1,646.6 L1253.5,653.6 L1253.9,651 L1254.3,645.4 L1254.8,652.5 L1255.2,653.5 L1255.6,648.2 L1256,647.2 L1256.4,641.1 L1256.9,638.2 L1257.3,637.9 L1257.7,644.7 L1258.1,647.8 L1258.5,653.2 L1259,650.5 L1259.4,650.5 L1259.8,645.1 L1260.2,651.6 L1260.6,650.1 L1261.1,617.4 L1261.5,586 L1261.9,587.6 L1262.3,586.5 L1262.7,587.2 L1263.2,585.3 L1263.6,585 L1264,585.9 L1264.4,584.6 L1264.8,586.3 L1265.3,585.2 L1265.7,588.1 L1266.1,586.8 L1266.5,587.1 L1266.9,584.5 L1267.4,586.3 L1267.8,598.1 L1268.2,634.8 L1268.6,650.1 L1269,647.4 L1269.5,644.8 L1269.9,645.9 L1270.3,646.2 L1270.7,647.4 L1271.1,646.2 L1271.6,648.4 L1272,650 L1272.4,650.7 L1272.8,651.2 L1273.2,643.7 L1273.7,640.4 L1274.1,638.3 L1274.5,643.4 L1274.9,644.6 L1275.3,645.2 L1275.8,650.3 L1276.2,652.1 L1276.6,646.8 L1277,646.6 L1277.4,651.9 L1277.9,653.1 L1278.3,647.4 L1278.7,650.1 L1279.1,620.7 L1279.5,585.4 L1280,585.3 L1280.4,583.8 L1280.8,587.2 L1281.2,586.6 L1281.6,587.7 L1282.1,584.7 L1282.5,587.5 L1282.9,583.9 L1283.3,585.1 L1283.7,585.5 L1284.2,586.6 L1284.6,583.9 L1285,587.3 L1285.4,585.2 L1285.8,590.5 L1286.3,627.2 L1286.7,645.9 L1287.1,647.5 L1287.5,653.2 L1287.9,652.6 L1288.4,651 L1288.8,646.8 L1289.2,652.4 L1289.6,644.7 L1290,645.4 L1290.5,648.3 L1290.9,645.5 L1291.3,646.6 L1291.7,642.8 L1292.1,634.6 L1292.6,639.5 L1293,643.8 L1293.4,650.5 L1293.8,645.1 L1294.2,649.8 L1294.7,651.1 L1295.1,649.6 L1295.5,652.9 L1295.9,650.6 L1296.3,646.8 L1296.8,649.9 L1297.2,624.1 L1297.6,588.7 L1298,574.7 L1298.4,569.9 L1298.9,571.3 L1299.3,576.8 L1299.7,584.5 L1300.1,587.6 L1300.5,585.9 L1301,584.1 L1301.4,585 L1301.8,586.7 L1302.2,587.2 L1302.6,584 L1303.1,587.3 L1303.5,585.1 L1303.9,585.2 L1304.3,619.7 L1304.7,651.9 L1305.2,649.5 L1305.6,645.6 L1306,644.4 L1306.4,652.9 L1306.8,653.3 L1307.3,651.2 L1307.7,653.2 L1308.1,645 L1308.5,652.9 L1308.9,650.2 L1309.4,644.8 L1309.8,643.3 L1310.2,640.6 L1310.6,643.2 L1311,647 L1311.5,649.8 L1311.9,645 L1312.3,652.6 L1312.7,647.1 L1313.1,650.7 L1313.6,649.7 L1314,646.9 L1314.4,650.4 L1314.8,649.1 L1315.2,627.5 L1315.7,592.1 L1316.1,585.4 L1316.5,585.5 L1316.9,587.3 L1317.3,585.9 L1317.8,585.9 L1318.2,585.7 L1318.6,586.4 L1319,585.6 L1319.4,584.3 L1319.9,587.3 L1320.3,587.3 L1320.7,585.2 L1321.1,585 L1321.5,584 L1322,587.5 L1322.4,612.1 L1322.8,648.8 L1323.2,653.5 L1323.6,648 L1324.1,651.6 L1324.5,649 L1324.9,650.9 L1325.3,652.8 L1325.7,648.4 L1326.2,650.7 L1326.6,649.1 L1327,645.5 L1327.4,649.4 L1327.8,645.4 L1328.3,641.8 L1328.7,639 L1329.1,642.1 L1329.5,646.5 L1329.9,651.6 L1330.4,652.3 L1330.8,652.3 L1331.2,644.5 L1331.6,652.7 L1332,645 L1332.5,649.4 L1332.9,645.4 L1333.3,630.8 L1333.7,595.5 L1334.1,579.7 L1334.6,573.9 L1335,574.7 L1335.4,580.4 L1335.8,583.3 L1336.2,584 L1336.7,586 L1337.1,587.5 L1337.5,585.2 L1337.9,584.5 L1338.3,585.8 L1338.8,584.2 L1339.2,586.2 L1339.6,585.8 L1340,585.9 L1340.4,604.5 L1340.9,641.2 L1341.3,652.7 L1341.7,653 L1342.1,647.7 L1342.5,645.4 L1343,651.9 L1343.4,645.2 L1343.8,650.6 L1344.2,649.7 L1344.6,653.2 L1345.1,653.6 L1345.5,642.9 L1345.9,643.3 L1346.3,643.2 L1346.7,643.3 L1347.2,650 L1347.6,650.7 L1348,650.6 L1348.4,650.9 L1348.8,653.5 L1349.3,646.9 L1349.7,650 L1350.1,651.9 L1350.5,650.7 L1350.9,653.2 L1351.4,634.2 L1351.8,598.8 L1352.2,582.3 L1352.6,581.8 L1353,581.6 L1353.5,582.4 L1353.9,579.9 L1354.3,583.7 L1354.7,583.5 L1355.1,581.9 L1355.6,582.5 L1356,583 L1356.4,581.1 L1356.8,582.1 L1357.2,581.8 L1357.7,581.3 L1358.1,582.5 L1358.5,596.9 L1358.9,633.6 L1359.3,648.9 L1359.8,644.4 L1360.2,652.1 L1360.6,649.3 L1361,647.9 L1361.4,646.5 L1361.9,652.8 L1362.3,652.6 L1362.7,651.1 L1363.1,647.4 L1363.5,651.7 L1364,653.3 L1364.4,646.3 L1364.8,641.3 L1365.2,642.8 L1365.6,646.8 L1366.1,649.6 L1366.5,648.8 L1366.9,650.8 L1367.3,649.8 L1367.7,644.9 L1368.2,650.2 L1368.6,651.2 L1369,649.5 L1369.4,637.6 L1369.8,602.2 L1370.3,579.3 L1370.7,580 L1371.1,578 L1371.5,578.8 L1371.9,583.6 L1372.4,586.4 L1372.8,586.3 L1373.2,584.8 L1373.6,587.1 L1374,583.8 L1374.5,584.8 L1374.9,583.9 L1375.3,587 L1375.7,587.6 L1376.1,586.3 L1376.6,589.3 L1377,626.1 L1377.4,649.3 L1377.8,648.7 L1378.2,647.8 L1378.7,653.3 L1379.1,644.9 L1379.5,652.2 L1379.9,651.9 L1380.3,652.5 L1380.8,650.1 L1381.2,652.1 L1381.6,647 L1382,650.4 L1382.4,643.6 L1382.9,638.4 L1383.3,637.2 L1383.7,642 L1384.1,646.7 L1384.5,652.3 L1385,647.1 L1385.4,646.5 L1385.8,645.1 L1386.2,650 L1386.6,651.6 L1387.1,647 L1387.5,640.9 L1387.9,605.6 L1388.3,583.9 L1388.7,584 L1389.2,585.7 L1389.6,587 L1390,584.3 L1390.4,587.7 L1390.8,585.5 L1391.3,584.5 L1391.7,585.9 L1392.1,585.1 L1392.5,586.5 L1392.9,585.2 L1393.4,587.5 L1393.8,585.3 L1394.2,587.8 L1394.6,587.6 L1395,618.5 L1395.5,652.5 L1395.9,650.6 L1396.3,653.6 L1396.7,647.1 L1397.1,645.1 L1397.6,645.8 L1398,653.2 L1398.4,649 L1398.8,652.4 L1399.2,648.3 L1399.7,642.2 L1400.1,640.1 L1400.5,635.6 L1400.9,640.3 L1401.3,645.9 L1401.8,653 L1402.2,648.5 L1402.6,649.2 L1403,650.3 L1403.4,644.7 L1403.9,645.8 L1404.3,649.8 L1404.7,652.3 L1405.1,645.4 L1405.5,644.3 L1406,608.9 L1406.4,584.1 L1406.8,583.5 L1407.2,585.9 L1407.6,586.6 L1408.1,585.3 L1408.5,585.3 L1408.9,584.4 L1409.3,587.1 L1409.7,583.3 L1410.2,585.3 L1410.6,586.4 L1411,585 L1411.4,587.4 L1411.8,583.9 L1412.3,585.3 L1412.7,586.8 L1413.1,610.9 L1413.5,647.6 L1413.9,653.2 L1414.4,648.7 L1414.8,646.2 L1415.2,651.4 L1415.6,644.7 L1416,648 L1416.5,648.9 L1416.9,644.6 L1417.3,650.3 L1417.7,647.1 L1418.1,650.1 L1418.6,644.6 L1419,644.3 L1419.4,644.7 L1419.8,646.7 L1420.2,646.2 L1420.7,647.3 L1421.1,644.7 L1421.5,646.8 L1421.9,650.4 L1422.3,647.9 L1422.8,652.1 L1423.2,649.6 L1423.6,652.6 L1424,612.3 L1424.4,578.6 L1424.9,575.8 L1425.3,574.8 L1425.7,577.7 L1426.1,582.3 L1426.5,584 L1427,584.9 L1427.4,584.8 L1427.8,585.1 L1428.2,587 L1428.6,585.3 L1429.1,584.2 L1429.5,586.1 L1429.9,587.6 L1430.3,586.4 L1430.7,587.6 L1431.2,603.3 L1431.6,640.1 L1432,648.3 L1432.4,649.2 L1432.8,652.6 L1433.3,645.6 L1433.7,651.3 L1434.1,649.5 L1434.5,652.2 L1434.9,648.8 L1435.4,648.3 L1435.8,647.1 L1436.2,653.5 L1436.6,652.2 L1437,652.2 L1437.5,650.8 L1437.9,646.1 L1438.3,645.7 L1438.7,646.8 L1439.1,648.4 L1439.6,653.4 L1440,651 L1440.4,648.9 L1440.8,646.8 L1441.2,650.1 L1441.7,649.4 L1442.1,615.7 L1442.5,587.3 L1442.9,586.3 L1443.3,586.7 L1443.8,587 L1444.2,584.5 L1444.6,585.9 L1445,585.7 L1445.4,584.8 L1445.9,585.3 L1446.3,587.5 L1446.7,585.3 L1447.1,585.9 L1447.5,586.3 L1448,585.5 L1448.4,584.9 L1448.8,587.4 L1449.2,595.7 L1449.6,632.5 L1450.1,650.9 L1450.5,648.7 L1450.9,652.7 L1451.3,646.3 L1451.7,651.7 L1452.2,650.7 L1452.6,646.4 L1453,645.4 L1453.4,651.2 L1453.8,652.5 L1454.3,647.4 L1454.7,647.9 L1455.1,649.9 L1455.5,643.7 L1455.9,642.7 L1456.4,644.5 L1456.8,646.4 L1457.2,647.7 L1457.6,651.1 L1458,650.5 L1458.5,646.1 L1458.9,653.3 L1459.3,646.8 L1459.7,651 L1460.1,619 L1460.6,585 L1461,583.7 L1461.4,586.9 L1461.8,587.5 L1462.2,586.4 L1462.7,584.8 L1463.1,586.7 L1463.5,586.3 L1463.9,583.6 L1464.3,584.1 L1464.8,583.7 L1465.2,585.3 L1465.6,577.5 L1466,573.2 L1466.4,567.5 L1466.9,572.9 L1467.3,588.2 L1467.7,624.9 L1468.1,647.5 L1468.5,649 L1469,647.6 L1469.4,647.2 L1469.8,652.1 L1470.2,647 L1470.6,652.5 L1471.1,645.7 L1471.5,650.4 L1471.9,652.8 L1472.3,653.5 L1472.7,648 L1473.2,653 L1473.6,649.9 L1474,653.2 L1474.4,647.2 L1474.8,645.6 L1475.3,653.4 L1475.7,647.9 L1476.1,647.6 L1476.5,648.5 L1476.9,644.6 L1477.4,650.7 L1477.8,645.3 L1478.2,622.4 L1478.6,584.6 L1479,586.1 L1479.5,585.8 L1479.9,586.6 L1480.3,583.6 L1480.7,586.1 L1481.1,584.4 L1481.6,583.6 L1482,585.9 L1482.4,584.1 L1482.8,584 L1483.2,585.1 L1483.7,583.5 L1484.1,585.1 L1484.5,586.4 L1484.9,586.7 L1485.3,586.4 L1485.8,617.3 L1486.2,646.9 L1486.6,648.9 L1487,652.3 L1487.4,644.8 L1487.9,653.5 L1488.3,648.1 L1488.7,649.2 L1489.1,645.4 L1489.5,648.1 L1490,645.8 L1490.4,651.6 L1490.8,648.7 L1491.2,646.4 L1491.6,650.2 L1492.1,643.9 L1492.5,640.2 L1492.9,635.6 L1493.3,643 L1493.7,647.5 L1494.2,648.9 L1494.6,648.4 L1495,647.2 L1495.4,652.4 L1495.8,645.7 L1496.3,625.8 L1496.7,590.4 L1497.1,582 L1497.5,577.1 L1497.9,580.1 L1498.4,582.2 L1498.8,583.4 L1499.2,583.9 L1499.6,585.4 L1500,587.4 L1500.5,586.4 L1500.9,584.7 L1501.3,584.3 L1501.7,584 L1502.1,585.4 L1502.6,587.2 L1503,586.5 L1503.4,585.9 L1503.8,609.7 L1504.2,646.5 L1504.7,652.4 L1505.1,650.4 L1505.5,650.7 L1505.9,646.9 L1506.3,649.3 L1506.8,648.3 L1507.2,650.9 L1507.6,646.9 L1508,648.5 L1508.4,652.9 L1508.9,645 L1509.3,652.6 L1509.7,651.3 L1510.1,644.1 L1510.5,643.3 L1511,640.8 L1511.4,642.3 L1511.8,645.8 L1512.2,653.3 L1512.6,651.6 L1513.1,644.4 L1513.5,648.7 L1513.9,644.9 L1514.3,629.1 L1514.7,593.8 L1515.2,581.5 L1515.6,576.2 L1516,577.4 L1516.4,580.5 L1516.8,585.2 L1517.3,583.6 L1517.7,586.3 L1518.1,583.6 L1518.5,583.8 L1518.9,587.3 L1519.4,587.3 L1519.8,586 L1520.2,586.6 L1520.6,586 L1521,586.9 L1521.5,584.6 L1521.9,602.2 L1522.3,638.9 L1522.7,652.7 L1523.1,648.1 L1523.6,650.6 L1524,650.5 L1524.4,648 L1524.8,653.5 L1525.2,646.7 L1525.7,649.3 L1526.1,646.7 L1526.5,646 L1526.9,645.1 L1527.3,647.5 L1527.8,644.6 L1528.2,643.3 L1528.6,642.4 L1529,645.7 L1529.4,651.4 L1529.9,649.7 L1530.3,650.3 L1530.7,651.4 L1531.1,644.9 L1531.5,653.6 L1532,653.3 L1532.4,632.5 L1532.8,597.1 L1533.2,582.2 L1533.6,584.5 L1534.1,581.3 L1534.5,582.6 L1534.9,581.7 L1535.3,581.2 L1535.7,582.1 L1536.2,581.1 L1536.6,584.7 L1537,584.6 L1537.4,585.4 L1537.8,585.5 L1538.3,581.9 L1538.7,582.3 L1539.1,584.1 L1539.5,584.8 L1539.9,594.6 L1540.4,631.3 L1540.8,652.7 L1541.2,648.9 L1541.6,644.4 L1542,653.6 L1542.5,648.4 L1542.9,647.1 L1543.3,651.3 L1543.7,652.2 L1544.1,645.1 L1544.6,646.4 L1545,642.3 L1545.4,639.5 L1545.8,640.2 L1546.2,644.9 L1546.7,650.2 L1547.1,646.9 L1547.5,650.6 L1547.9,650.7 L1548.3,650.6 L1548.8,652.9 L1549.2,645.5 L1549.6,647.6 L1550,647.9 L1550.4,635.9 L1550.9,600.5 L1551.3,581.3 L1551.7,580.4 L1552.1,581.2 L1552.5,581.2 L1553,585.6 L1553.4,584.6 L1553.8,583.7 L1554.2,587.1 L1554.6,586.7" fill="none" stroke="#7eb26d" stroke-width="2.6" stroke-linejoin="round" stroke-linecap="butt"/></g></g><text class="ax" x="1004.7" y="682.8" text-anchor="end">2.5 W</text><text class="ax" x="1004.7" y="654.5" text-anchor="end">5.0 W</text><text class="ax" x="1004.7" y="626.1" text-anchor="end">7.5 W</text><text class="ax" x="1004.7" y="597.8" text-anchor="end">10.0 W</text><text class="ax" x="1004.7" y="569.4" text-anchor="end">12.5 W</text><text class="ax" x="1004.7" y="541.1" text-anchor="end">15.0 W</text><text class="axx" x="1064.3" y="696.3" text-anchor="middle">8/5</text><text class="axx" x="1118.7" y="696.3" text-anchor="middle">8/8</text><text class="axx" x="1173.1" y="696.3" text-anchor="middle">8/11</text><text class="axx" x="1227.5" y="696.3" text-anchor="middle">8/14</text><text class="axx" x="1281.9" y="696.3" text-anchor="middle">8/17</text><text class="axx" x="1336.3" y="696.3" text-anchor="middle">8/20</text><text class="axx" x="1390.7" y="696.3" text-anchor="middle">8/23</text><text class="axx" x="1445.1" y="696.3" text-anchor="middle">8/26</text><text class="axx" x="1499.5" y="696.3" text-anchor="middle">8/29</text><text class="axx" x="1553.9" y="696.3" text-anchor="middle">9/1</text><clipPath id="c5"><rect x="71.0" y="776.3" width="231.0" height="146.4"/></clipPath><g stroke="rgba(255,255,255,0.13)" stroke-width="1" shape-rendering="crispEdges"><line x1="117.5" y1="778.3" x2="117.5" y2="920.3"/><line x1="178.5" y1="778.3" x2="178.5" y2="920.3"/><line x1="239.5" y1="778.3" x2="239.5" y2="920.3"/><line x1="300.7" y1="778.3" x2="300.7" y2="920.3"/><line x1="72" y1="920.3" x2="301" y2="920.3"/><line x1="72" y1="891.9" x2="301" y2="891.9"/><line x1="72" y1="863.5" x2="301" y2="863.5"/><line x1="72" y1="835.1" x2="301" y2="835.1"/><line x1="72" y1="806.7" x2="301" y2="806.7"/><line x1="72" y1="778.3" x2="301" y2="778.3"/></g><g clip-path="url(#c5)"><g transform="translate(0,0.8)"><path d="M72,859.2 L72.4,858.7 L72.8,857.3 L73.2,855.1 L73.6,852.3 L74,849.2 L74.4,846.1 L74.8,843.3 L75.2,841.1 L75.6,839.7 L76,839.2 L76.5,840.4 L76.9,843.7 L77.3,849 L77.8,855.6 L78.2,863 L78.7,870.3 L79.2,876.9 L79.6,882.2 L80,885.5 L80.5,886.7 L80.9,885.7 L81.2,882.9 L81.6,878.6 L82,873.1 L82.4,867 L82.8,860.8 L83.1,855.3 L83.5,851 L83.9,848.2 L84.2,847.2 L84.6,848.3 L85,851.5 L85.4,856.5 L85.8,862.7 L86.1,869.7 L86.5,876.7 L86.9,882.9 L87.2,887.9 L87.6,891.1 L88,892.2 L88.4,891 L88.8,887.4 L89.3,881.9 L89.7,874.9 L90.1,867.2 L90.5,859.5 L91,852.5 L91.4,847 L91.8,843.4 L92.2,842.2 L92.6,843.1 L93,845.7 L93.3,849.7 L93.7,854.8 L94,860.5 L94.3,866.1 L94.7,871.2 L95,875.2 L95.4,877.8 L95.8,878.7 L96.2,877.2 L96.6,872.7 L97,865.7 L97.5,856.8 L97.9,847.1 L98.3,837.3 L98.7,828.5 L99.2,821.5 L99.6,817 L100,815.5 L100.3,816.7 L100.7,820.5 L101,826.3 L101.3,833.6 L101.6,841.7 L102,849.8 L102.3,857.1 L102.6,862.9 L102.9,866.7 L103.2,868 L103.7,866.4 L104.1,861.9 L104.5,855 L105,846.2 L105.4,836.5 L105.8,826.7 L106.2,817.9 L106.7,811 L107.1,806.5 L107.5,805 L107.8,806.4 L108.2,810.4 L108.5,816.8 L108.8,824.8 L109.1,833.7 L109.5,842.6 L109.8,850.6 L110.1,857 L110.4,861 L110.8,862.5 L111.2,860.9 L111.7,856.5 L112.1,849.6 L112.5,840.9 L113,831.2 L113.5,821.5 L113.9,812.8 L114.3,805.9 L114.8,801.5 L115.2,800 L115.6,801.3 L115.9,805.2 L116.2,811.3 L116.5,819 L116.9,827.5 L117.2,835.9 L117.5,843.6 L117.8,849.7 L118.2,853.6 L118.5,855 L118.9,853.7 L119.3,850 L119.7,844.2 L120.1,837 L120.5,829 L120.9,820.9 L121.3,813.7 L121.7,807.9 L122.1,804.2 L122.5,803 L122.9,804.1 L123.2,807.4 L123.6,812.5 L124,818.9 L124.4,826.1 L124.8,833.2 L125.1,839.7 L125.5,844.8 L125.9,848.1 L126.2,849.2 L126.7,848.2 L127,845.1 L127.5,840.4 L127.8,834.5 L128.2,828 L128.7,821.4 L129.1,815.5 L129.4,810.8 L129.8,807.7 L130.2,806.7 L130.6,807.8 L130.9,811 L131.3,816 L131.7,822.2 L132,829.2 L132.3,836.2 L132.7,842.4 L133.1,847.4 L133.4,850.6 L133.8,851.7 L134.2,850.6 L134.6,847.4 L135,842.4 L135.4,836.2 L135.9,829.2 L136.3,822.2 L136.7,816 L137.2,811 L137.6,807.8 L138,806.7 L138.4,807.7 L138.8,810.8 L139.2,815.5 L139.6,821.4 L140,828 L140.4,834.5 L140.8,840.4 L141.2,845.1 L141.6,848.2 L142,849.2 L142.3,848.1 L142.7,845.1 L143,840.3 L143.3,834.3 L143.6,827.6 L143.9,820.9 L144.3,814.9 L144.6,810.1 L144.9,807 L145.2,806 L145.7,807.2 L146.1,810.8 L146.5,816.4 L146.9,823.5 L147.4,831.3 L147.8,839.2 L148.2,846.2 L148.7,851.9 L149.1,855.5 L149.5,856.7 L149.8,855.5 L150.2,852.1 L150.6,846.8 L150.9,840 L151.2,832.6 L151.6,825.1 L151.9,818.4 L152.3,813.1 L152.7,809.6 L153,808.5 L153.4,809.8 L153.8,813.5 L154.2,819.4 L154.6,826.8 L155,835.1 L155.4,843.3 L155.8,850.7 L156.2,856.6 L156.6,860.4 L157,861.7 L157.4,860.5 L157.8,857.1 L158.1,851.8 L158.5,845.1 L158.9,837.7 L159.2,830.3 L159.6,823.6 L160,818.3 L160.4,814.9 L160.8,813.7 L161.1,814.8 L161.5,817.8 L161.9,822.6 L162.2,828.6 L162.6,835.2 L163,841.8 L163.4,847.8 L163.8,852.6 L164.1,855.6 L164.5,856.7 L164.9,855.8 L165.2,853 L165.6,848.7 L166,843.3 L166.4,837.3 L166.8,831.3 L167.1,825.9 L167.5,821.7 L167.9,818.9 L168.2,818 L168.7,819.1 L169.1,822.2 L169.4,827.2 L169.8,833.5 L170.2,840.5 L170.7,847.4 L171.1,853.7 L171.4,858.7 L171.8,861.8 L172.2,863 L172.6,861.7 L173,857.9 L173.4,852 L173.8,844.6 L174.1,836.5 L174.5,828.3 L174.9,820.9 L175.2,815 L175.6,811.2 L176,810 L176.4,811.2 L176.8,814.7 L177.2,820.1 L177.6,827 L178,834.6 L178.4,842.2 L178.8,849 L179.2,854.5 L179.6,858 L180,859.2 L180.4,858 L180.8,854.5 L181.1,849.2 L181.5,842.4 L181.9,834.8 L182.2,827.3 L182.6,820.5 L183,815.1 L183.4,811.6 L183.8,810.5 L184.1,811.6 L184.5,814.9 L184.9,820.1 L185.2,826.6 L185.6,833.8 L186,841 L186.4,847.6 L186.8,852.7 L187.1,856.1 L187.5,857.2 L187.8,856.1 L188.2,852.8 L188.6,847.7 L188.9,841.2 L189.2,834.1 L189.6,826.9 L189.9,820.5 L190.3,815.4 L190.7,812.1 L191,811 L191.4,811.9 L191.8,814.6 L192.2,818.8 L192.6,824.2 L193,830.1 L193.4,836 L193.8,841.3 L194.2,845.5 L194.6,848.3 L195,849.2 L195.4,848.5 L195.8,846.5 L196.1,843.4 L196.5,839.4 L196.9,835.1 L197.2,830.7 L197.6,826.8 L198,823.6 L198.4,821.6 L198.8,821 L199.2,822.1 L199.6,825.4 L200,830.5 L200.4,836.9 L200.9,844.1 L201.3,851.2 L201.7,857.7 L202.2,862.8 L202.6,866.1 L203,867.2 L203.3,866.2 L203.7,863.2 L204.1,858.5 L204.4,852.6 L204.8,846.1 L205.1,839.5 L205.4,833.7 L205.8,829 L206.2,826 L206.5,825 L206.8,825.7 L207.2,827.7 L207.6,831 L207.9,835.1 L208.2,839.6 L208.6,844.1 L208.9,848.2 L209.3,851.4 L209.7,853.5 L210,854.2 L210.4,853.7 L210.8,852.1 L211.2,849.7 L211.6,846.6 L212,843.2 L212.4,839.8 L212.8,836.7 L213.2,834.3 L213.6,832.7 L214,832.2 L214.4,832.6 L214.8,833.9 L215.2,836 L215.6,838.5 L216,841.3 L216.4,844.1 L216.8,846.7 L217.2,848.7 L217.6,850 L218,850.5 L218.4,849.9 L218.8,848.1 L219.1,845.5 L219.5,842.1 L219.9,838.3 L220.2,834.6 L220.6,831.2 L221,828.5 L221.4,826.8 L221.8,826.2 L222.2,827 L222.6,829.2 L222.9,832.7 L223.3,837.2 L223.8,842.1 L224.2,847 L224.6,851.4 L224.9,854.9 L225.3,857.2 L225.8,858 L226,857.5 L226.2,856 L226.5,853.8 L226.8,851 L227,848 L227.2,844.9 L227.5,842.1 L227.8,839.9 L228,838.4 L228.2,838 L228.8,838.8 L229.3,841.3 L229.9,845.2 L230.4,850 L231,855.5 L231.6,860.9 L232.1,865.7 L232.7,869.6 L233.2,872.1 L233.8,873 L234.1,872.4 L234.4,870.8 L234.7,868.2 L235.1,865 L235.4,861.5 L235.7,857.9 L236,854.7 L236.3,852.1 L236.7,850.5 L237,850 L237.4,850.5 L237.8,852.3 L238.1,854.9 L238.5,858.3 L238.9,862.1 L239.2,865.8 L239.6,869.2 L240,871.9 L240.4,873.6 L240.8,874.2 L241.1,873.8 L241.4,872.6 L241.8,870.9 L242.2,868.6 L242.5,866.1 L242.8,863.6 L243.2,861.3 L243.6,859.5 L243.9,858.3 L244.2,858 L244.7,858.9 L245.1,861.5 L245.5,865.7 L245.9,870.9 L246.4,876.7 L246.8,882.5 L247.2,887.7 L247.7,891.9 L248.1,894.5 L248.5,895.5 L248.8,894.7 L249.2,892.5 L249.5,889 L249.8,884.7 L250.1,879.8 L250.4,875 L250.8,870.6 L251.1,867.2 L251.4,865 L251.8,864.2 L252.2,864.5 L252.6,865.3 L253,866.5 L253.4,868.1 L253.9,869.8 L254.3,871.6 L254.7,873.1 L255.2,874.4 L255.6,875.2 L256,875.5 L256.4,875 L256.8,873.5 L257.2,871.3 L257.6,868.5 L258,865.5 L258.4,862.4 L258.8,859.6 L259.2,857.4 L259.6,855.9 L260,855.5 L260.4,856.1 L260.8,857.8 L261.1,860.6 L261.5,864.1 L261.9,868 L262.2,871.8 L262.6,875.3 L263,878.1 L263.4,879.8 L263.8,880.5 L264.1,879.9 L264.4,878.3 L264.8,875.7 L265.1,872.5 L265.5,869 L265.9,865.4 L266.2,862.2 L266.6,859.6 L266.9,858 L267.2,857.5 L267.6,858.1 L268.1,860.1 L268.4,863.2 L268.9,867.1 L269.2,871.5 L269.6,875.8 L270.1,879.7 L270.4,882.8 L270.9,884.8 L271.2,885.5 L271.6,884.7 L272.1,882.6 L272.4,879.4 L272.9,875.3 L273.2,870.7 L273.6,866.1 L274.1,862 L274.4,858.8 L274.9,856.7 L275.2,856 L275.6,856.6 L276,858.6 L276.4,861.6 L276.8,865.5 L277.1,869.7 L277.5,873.9 L277.9,877.8 L278.2,880.8 L278.6,882.8 L279,883.5 L279.4,882.8 L279.8,881 L280.1,878.2 L280.5,874.7 L280.9,870.8 L281.2,866.9 L281.6,863.4 L282,860.6 L282.4,858.8 L282.8,858.2 L283.1,859 L283.6,861.3 L283.9,864.8 L284.4,869.3 L284.8,874.3 L285.1,879.3 L285.6,883.8 L285.9,887.4 L286.4,889.7 L286.8,890.5 L287.1,889.4 L287.4,886.5 L287.8,881.8 L288.1,876 L288.5,869.6 L288.9,863.1 L289.2,857.3 L289.6,852.7 L289.9,849.7 L290.2,848.7 L290.6,849.5 L291,851.9 L291.4,855.5 L291.8,860.1 L292.1,865.2 L292.5,870.3 L292.9,874.9 L293.2,878.5 L293.6,880.9 L294,881.7 L294.4,881.1 L294.7,879.5 L295.1,877 L295.4,873.8 L295.8,870.3 L296.1,866.8 L296.4,863.6 L296.8,861.1 L297.1,859.5 L297.5,859 L297.9,859.7 L298.2,862 L298.6,865.4 L298.9,869.8 L299.2,874.7 L299.6,879.6 L299.9,884 L300.3,887.4 L300.6,889.7 L301,890.5 L301,920.3 L72,920.3 Z" fill="#7eb26d" fill-opacity="0.8" stroke="none"/><path d="M72,859.2 L72.4,858.7 L72.8,857.3 L73.2,855.1 L73.6,852.3 L74,849.2 L74.4,846.1 L74.8,843.3 L75.2,841.1 L75.6,839.7 L76,839.2 L76.5,840.4 L76.9,843.7 L77.3,849 L77.8,855.6 L78.2,863 L78.7,870.3 L79.2,876.9 L79.6,882.2 L80,885.5 L80.5,886.7 L80.9,885.7 L81.2,882.9 L81.6,878.6 L82,873.1 L82.4,867 L82.8,860.8 L83.1,855.3 L83.5,851 L83.9,848.2 L84.2,847.2 L84.6,848.3 L85,851.5 L85.4,856.5 L85.8,862.7 L86.1,869.7 L86.5,876.7 L86.9,882.9 L87.2,887.9 L87.6,891.1 L88,892.2 L88.4,891 L88.8,887.4 L89.3,881.9 L89.7,874.9 L90.1,867.2 L90.5,859.5 L91,852.5 L91.4,847 L91.8,843.4 L92.2,842.2 L92.6,843.1 L93,845.7 L93.3,849.7 L93.7,854.8 L94,860.5 L94.3,866.1 L94.7,871.2 L95,875.2 L95.4,877.8 L95.8,878.7 L96.2,877.2 L96.6,872.7 L97,865.7 L97.5,856.8 L97.9,847.1 L98.3,837.3 L98.7,828.5 L99.2,821.5 L99.6,817 L100,815.5 L100.3,816.7 L100.7,820.5 L101,826.3 L101.3,833.6 L101.6,841.7 L102,849.8 L102.3,857.1 L102.6,862.9 L102.9,866.7 L103.2,868 L103.7,866.4 L104.1,861.9 L104.5,855 L105,846.2 L105.4,836.5 L105.8,826.7 L106.2,817.9 L106.7,811 L107.1,806.5 L107.5,805 L107.8,806.4 L108.2,810.4 L108.5,816.8 L108.8,824.8 L109.1,833.7 L109.5,842.6 L109.8,850.6 L110.1,857 L110.4,861 L110.8,862.5 L111.2,860.9 L111.7,856.5 L112.1,849.6 L112.5,840.9 L113,831.2 L113.5,821.5 L113.9,812.8 L114.3,805.9 L114.8,801.5 L115.2,800 L115.6,801.3 L115.9,805.2 L116.2,811.3 L116.5,819 L116.9,827.5 L117.2,835.9 L117.5,843.6 L117.8,849.7 L118.2,853.6 L118.5,855 L118.9,853.7 L119.3,850 L119.7,844.2 L120.1,837 L120.5,829 L120.9,820.9 L121.3,813.7 L121.7,807.9 L122.1,804.2 L122.5,803 L122.9,804.1 L123.2,807.4 L123.6,812.5 L124,818.9 L124.4,826.1 L124.8,833.2 L125.1,839.7 L125.5,844.8 L125.9,848.1 L126.2,849.2 L126.7,848.2 L127,845.1 L127.5,840.4 L127.8,834.5 L128.2,828 L128.7,821.4 L129.1,815.5 L129.4,810.8 L129.8,807.7 L130.2,806.7 L130.6,807.8 L130.9,811 L131.3,816 L131.7,822.2 L132,829.2 L132.3,836.2 L132.7,842.4 L133.1,847.4 L133.4,850.6 L133.8,851.7 L134.2,850.6 L134.6,847.4 L135,842.4 L135.4,836.2 L135.9,829.2 L136.3,822.2 L136.7,816 L137.2,811 L137.6,807.8 L138,806.7 L138.4,807.7 L138.8,810.8 L139.2,815.5 L139.6,821.4 L140,828 L140.4,834.5 L140.8,840.4 L141.2,845.1 L141.6,848.2 L142,849.2 L142.3,848.1 L142.7,845.1 L143,840.3 L143.3,834.3 L143.6,827.6 L143.9,820.9 L144.3,814.9 L144.6,810.1 L144.9,807 L145.2,806 L145.7,807.2 L146.1,810.8 L146.5,816.4 L146.9,823.5 L147.4,831.3 L147.8,839.2 L148.2,846.2 L148.7,851.9 L149.1,855.5 L149.5,856.7 L149.8,855.5 L150.2,852.1 L150.6,846.8 L150.9,840 L151.2,832.6 L151.6,825.1 L151.9,818.4 L152.3,813.1 L152.7,809.6 L153,808.5 L153.4,809.8 L153.8,813.5 L154.2,819.4 L154.6,826.8 L155,835.1 L155.4,843.3 L155.8,850.7 L156.2,856.6 L156.6,860.4 L157,861.7 L157.4,860.5 L157.8,857.1 L158.1,851.8 L158.5,845.1 L158.9,837.7 L159.2,830.3 L159.6,823.6 L160,818.3 L160.4,814.9 L160.8,813.7 L161.1,814.8 L161.5,817.8 L161.9,822.6 L162.2,828.6 L162.6,835.2 L163,841.8 L163.4,847.8 L163.8,852.6 L164.1,855.6 L164.5,856.7 L164.9,855.8 L165.2,853 L165.6,848.7 L166,843.3 L166.4,837.3 L166.8,831.3 L167.1,825.9 L167.5,821.7 L167.9,818.9 L168.2,818 L168.7,819.1 L169.1,822.2 L169.4,827.2 L169.8,833.5 L170.2,840.5 L170.7,847.4 L171.1,853.7 L171.4,858.7 L171.8,861.8 L172.2,863 L172.6,861.7 L173,857.9 L173.4,852 L173.8,844.6 L174.1,836.5 L174.5,828.3 L174.9,820.9 L175.2,815 L175.6,811.2 L176,810 L176.4,811.2 L176.8,814.7 L177.2,820.1 L177.6,827 L178,834.6 L178.4,842.2 L178.8,849 L179.2,854.5 L179.6,858 L180,859.2 L180.4,858 L180.8,854.5 L181.1,849.2 L181.5,842.4 L181.9,834.8 L182.2,827.3 L182.6,820.5 L183,815.1 L183.4,811.6 L183.8,810.5 L184.1,811.6 L184.5,814.9 L184.9,820.1 L185.2,826.6 L185.6,833.8 L186,841 L186.4,847.6 L186.8,852.7 L187.1,856.1 L187.5,857.2 L187.8,856.1 L188.2,852.8 L188.6,847.7 L188.9,841.2 L189.2,834.1 L189.6,826.9 L189.9,820.5 L190.3,815.4 L190.7,812.1 L191,811 L191.4,811.9 L191.8,814.6 L192.2,818.8 L192.6,824.2 L193,830.1 L193.4,836 L193.8,841.3 L194.2,845.5 L194.6,848.3 L195,849.2 L195.4,848.5 L195.8,846.5 L196.1,843.4 L196.5,839.4 L196.9,835.1 L197.2,830.7 L197.6,826.8 L198,823.6 L198.4,821.6 L198.8,821 L199.2,822.1 L199.6,825.4 L200,830.5 L200.4,836.9 L200.9,844.1 L201.3,851.2 L201.7,857.7 L202.2,862.8 L202.6,866.1 L203,867.2 L203.3,866.2 L203.7,863.2 L204.1,858.5 L204.4,852.6 L204.8,846.1 L205.1,839.5 L205.4,833.7 L205.8,829 L206.2,826 L206.5,825 L206.8,825.7 L207.2,827.7 L207.6,831 L207.9,835.1 L208.2,839.6 L208.6,844.1 L208.9,848.2 L209.3,851.4 L209.7,853.5 L210,854.2 L210.4,853.7 L210.8,852.1 L211.2,849.7 L211.6,846.6 L212,843.2 L212.4,839.8 L212.8,836.7 L213.2,834.3 L213.6,832.7 L214,832.2 L214.4,832.6 L214.8,833.9 L215.2,836 L215.6,838.5 L216,841.3 L216.4,844.1 L216.8,846.7 L217.2,848.7 L217.6,850 L218,850.5 L218.4,849.9 L218.8,848.1 L219.1,845.5 L219.5,842.1 L219.9,838.3 L220.2,834.6 L220.6,831.2 L221,828.5 L221.4,826.8 L221.8,826.2 L222.2,827 L222.6,829.2 L222.9,832.7 L223.3,837.2 L223.8,842.1 L224.2,847 L224.6,851.4 L224.9,854.9 L225.3,857.2 L225.8,858 L226,857.5 L226.2,856 L226.5,853.8 L226.8,851 L227,848 L227.2,844.9 L227.5,842.1 L227.8,839.9 L228,838.4 L228.2,838 L228.8,838.8 L229.3,841.3 L229.9,845.2 L230.4,850 L231,855.5 L231.6,860.9 L232.1,865.7 L232.7,869.6 L233.2,872.1 L233.8,873 L234.1,872.4 L234.4,870.8 L234.7,868.2 L235.1,865 L235.4,861.5 L235.7,857.9 L236,854.7 L236.3,852.1 L236.7,850.5 L237,850 L237.4,850.5 L237.8,852.3 L238.1,854.9 L238.5,858.3 L238.9,862.1 L239.2,865.8 L239.6,869.2 L240,871.9 L240.4,873.6 L240.8,874.2 L241.1,873.8 L241.4,872.6 L241.8,870.9 L242.2,868.6 L242.5,866.1 L242.8,863.6 L243.2,861.3 L243.6,859.5 L243.9,858.3 L244.2,858 L244.7,858.9 L245.1,861.5 L245.5,865.7 L245.9,870.9 L246.4,876.7 L246.8,882.5 L247.2,887.7 L247.7,891.9 L248.1,894.5 L248.5,895.5 L248.8,894.7 L249.2,892.5 L249.5,889 L249.8,884.7 L250.1,879.8 L250.4,875 L250.8,870.6 L251.1,867.2 L251.4,865 L251.8,864.2 L252.2,864.5 L252.6,865.3 L253,866.5 L253.4,868.1 L253.9,869.8 L254.3,871.6 L254.7,873.1 L255.2,874.4 L255.6,875.2 L256,875.5 L256.4,875 L256.8,873.5 L257.2,871.3 L257.6,868.5 L258,865.5 L258.4,862.4 L258.8,859.6 L259.2,857.4 L259.6,855.9 L260,855.5 L260.4,856.1 L260.8,857.8 L261.1,860.6 L261.5,864.1 L261.9,868 L262.2,871.8 L262.6,875.3 L263,878.1 L263.4,879.8 L263.8,880.5 L264.1,879.9 L264.4,878.3 L264.8,875.7 L265.1,872.5 L265.5,869 L265.9,865.4 L266.2,862.2 L266.6,859.6 L266.9,858 L267.2,857.5 L267.6,858.1 L268.1,860.1 L268.4,863.2 L268.9,867.1 L269.2,871.5 L269.6,875.8 L270.1,879.7 L270.4,882.8 L270.9,884.8 L271.2,885.5 L271.6,884.7 L272.1,882.6 L272.4,879.4 L272.9,875.3 L273.2,870.7 L273.6,866.1 L274.1,862 L274.4,858.8 L274.9,856.7 L275.2,856 L275.6,856.6 L276,858.6 L276.4,861.6 L276.8,865.5 L277.1,869.7 L277.5,873.9 L277.9,877.8 L278.2,880.8 L278.6,882.8 L279,883.5 L279.4,882.8 L279.8,881 L280.1,878.2 L280.5,874.7 L280.9,870.8 L281.2,866.9 L281.6,863.4 L282,860.6 L282.4,858.8 L282.8,858.2 L283.1,859 L283.6,861.3 L283.9,864.8 L284.4,869.3 L284.8,874.3 L285.1,879.3 L285.6,883.8 L285.9,887.4 L286.4,889.7 L286.8,890.5 L287.1,889.4 L287.4,886.5 L287.8,881.8 L288.1,876 L288.5,869.6 L288.9,863.1 L289.2,857.3 L289.6,852.7 L289.9,849.7 L290.2,848.7 L290.6,849.5 L291,851.9 L291.4,855.5 L291.8,860.1 L292.1,865.2 L292.5,870.3 L292.9,874.9 L293.2,878.5 L293.6,880.9 L294,881.7 L294.4,881.1 L294.7,879.5 L295.1,877 L295.4,873.8 L295.8,870.3 L296.1,866.8 L296.4,863.6 L296.8,861.1 L297.1,859.5 L297.5,859 L297.9,859.7 L298.2,862 L298.6,865.4 L298.9,869.8 L299.2,874.7 L299.6,879.6 L299.9,884 L300.3,887.4 L300.6,889.7 L301,890.5" fill="none" stroke="#7eb26d" stroke-width="2.8" stroke-linejoin="round" stroke-linecap="butt"/></g></g><text class="ax" x="66.1" y="923.4" text-anchor="end">10.0 °C</text><text class="ax" x="66.1" y="895" text-anchor="end">15.0 °C</text><text class="ax" x="66.1" y="866.6" text-anchor="end">20.0 °C</text><text class="ax" x="66.1" y="838.2" text-anchor="end">25.0 °C</text><text class="ax" x="66.1" y="809.8" text-anchor="end">30.0 °C</text><text class="ax" x="66.1" y="781.4" text-anchor="end">35.0 °C</text><text class="axx" x="117.5" y="936.3" text-anchor="middle">8/8</text><text class="axx" x="178.5" y="936.3" text-anchor="middle">8/16</text><text class="axx" x="239.5" y="936.3" text-anchor="middle">8/24</text><text class="axx" x="300.7" y="936.3" text-anchor="middle">9/1</text><clipPath id="c6"><rect x="1638.9" y="776.0" width="230.89999999999986" height="146.60000000000005"/></clipPath><g stroke="rgba(255,255,255,0.13)" stroke-width="1" shape-rendering="crispEdges"><line x1="1685.5" y1="778" x2="1685.5" y2="920.2"/><line x1="1746.6" y1="778" x2="1746.6" y2="920.2"/><line x1="1807.5" y1="778" x2="1807.5" y2="920.2"/><line x1="1868.5" y1="778" x2="1868.5" y2="920.2"/><line x1="1639.9" y1="920.2" x2="1868.8" y2="920.2"/><line x1="1639.9" y1="872.8" x2="1868.8" y2="872.8"/><line x1="1639.9" y1="825.4" x2="1868.8" y2="825.4"/><line x1="1639.9" y1="778" x2="1868.8" y2="778"/></g><g clip-path="url(#c6)"><g transform="translate(0,0.8)"><path d="M1639.9,866.1 L1640.3,865.3 L1640.7,862.8 L1641.2,859 L1641.6,854.1 L1642,848.8 L1642.4,843.4 L1642.8,838.6 L1643.2,834.7 L1643.7,832.3 L1644.1,831.4 L1644.5,832.8 L1644.9,837 L1645.3,843.4 L1645.6,851.6 L1646,860.6 L1646.4,869.6 L1646.8,877.7 L1647.2,884.2 L1647.6,888.3 L1648,889.8 L1648.4,888.5 L1648.8,884.8 L1649.3,879.2 L1649.7,872 L1650.1,864.1 L1650.5,856.1 L1650.9,849 L1651.3,843.3 L1651.8,839.6 L1652.2,838.4 L1652.6,839.7 L1653,843.5 L1653.4,849.5 L1653.8,857 L1654.1,865.3 L1654.5,873.7 L1654.9,881.2 L1655.3,887.2 L1655.7,891 L1656.1,892.3 L1656.5,890.9 L1656.9,886.7 L1657.4,880.2 L1657.8,872.1 L1658.2,863 L1658.6,854 L1659,845.8 L1659.4,839.3 L1659.9,835.2 L1660.3,833.7 L1660.6,834.9 L1661,838.4 L1661.3,843.8 L1661.7,850.5 L1662,858 L1662.4,865.6 L1662.7,872.3 L1663.1,877.7 L1663.4,881.2 L1663.8,882.3 L1664.1,880.4 L1664.5,874.9 L1664.9,866.3 L1665.3,855.4 L1665.7,843.3 L1666.1,831.3 L1666.5,820.4 L1666.9,811.8 L1667.3,806.2 L1667.7,804.3 L1668,806 L1668.4,810.9 L1668.7,818.4 L1669.1,827.9 L1669.4,838.5 L1669.8,849 L1670.1,858.6 L1670.5,866.1 L1670.8,871 L1671.2,872.6 L1671.6,870.7 L1672,865.2 L1672.4,856.6 L1672.8,845.8 L1673.2,833.7 L1673.7,821.7 L1674.1,810.9 L1674.5,802.3 L1674.9,796.8 L1675.3,794.8 L1675.7,796.5 L1676,801.4 L1676.4,809.1 L1676.7,818.7 L1677.1,829.3 L1677.4,840 L1677.8,849.6 L1678.1,857.2 L1678.4,862.1 L1678.8,863.8 L1679.2,862.1 L1679.6,856.9 L1680,848.8 L1680.5,838.7 L1680.9,827.5 L1681.3,816.3 L1681.7,806.1 L1682.1,798.1 L1682.5,792.9 L1683,791.1 L1683.3,792.8 L1683.7,797.8 L1684,805.4 L1684.4,815.1 L1684.7,825.8 L1685,836.4 L1685.4,846.1 L1685.7,853.7 L1686.1,858.7 L1686.4,860.4 L1686.8,858.7 L1687.2,854 L1687.5,846.7 L1687.9,837.4 L1688.3,827.1 L1688.7,816.9 L1689,807.6 L1689.4,800.3 L1689.8,795.5 L1690.1,793.9 L1690.6,795.5 L1691,799.9 L1691.4,806.8 L1691.8,815.5 L1692.2,825.2 L1692.6,834.8 L1693.1,843.5 L1693.5,850.5 L1693.9,854.9 L1694.3,856.4 L1694.7,855 L1695,851.1 L1695.4,844.8 L1695.8,837 L1696.2,828.3 L1696.5,819.6 L1696.9,811.8 L1697.3,805.5 L1697.6,801.5 L1698,800.2 L1698.4,801.6 L1698.8,805.8 L1699.2,812.3 L1699.6,820.6 L1700,829.7 L1700.4,838.8 L1700.8,847 L1701.2,853.6 L1701.6,857.8 L1701.9,859.2 L1702.3,857.7 L1702.7,853.5 L1703.1,846.9 L1703.5,838.6 L1703.9,829.3 L1704.3,820.1 L1704.7,811.8 L1705.1,805.2 L1705.5,800.9 L1705.9,799.5 L1706.2,800.8 L1706.6,804.7 L1706.9,810.8 L1707.3,818.5 L1707.6,827 L1708,835.5 L1708.3,843.2 L1708.7,849.3 L1709,853.2 L1709.4,854.6 L1709.7,853.2 L1710.1,849.3 L1710.5,843.1 L1710.9,835.4 L1711.3,826.8 L1711.7,818.2 L1712.1,810.5 L1712.5,804.3 L1712.9,800.4 L1713.3,799 L1713.7,800.6 L1714.1,805.1 L1714.5,812.1 L1714.9,821 L1715.3,830.8 L1715.6,840.7 L1716,849.6 L1716.4,856.6 L1716.8,861.1 L1717.2,862.7 L1717.6,861.1 L1718,856.6 L1718.4,849.6 L1718.8,840.7 L1719.2,830.8 L1719.6,821 L1720,812.1 L1720.4,805.1 L1720.8,800.6 L1721.2,799 L1721.5,800.7 L1721.9,805.5 L1722.2,813.1 L1722.5,822.6 L1722.9,833.2 L1723.2,843.7 L1723.6,853.2 L1723.9,860.8 L1724.3,865.6 L1724.6,867.3 L1725,865.8 L1725.4,861.3 L1725.8,854.3 L1726.2,845.5 L1726.6,835.7 L1727,825.9 L1727.4,817.1 L1727.8,810.1 L1728.2,805.7 L1728.6,804.1 L1729,805.6 L1729.4,809.8 L1729.7,816.4 L1730.1,824.7 L1730.5,834 L1730.9,843.2 L1731.3,851.5 L1731.7,858.1 L1732.1,862.4 L1732.5,863.8 L1732.9,862.6 L1733.2,858.9 L1733.6,853.1 L1734,845.8 L1734.4,837.8 L1734.7,829.7 L1735.1,822.5 L1735.5,816.7 L1735.8,813 L1736.2,811.7 L1736.6,813.1 L1737,817.2 L1737.4,823.4 L1737.8,831.3 L1738.2,840.1 L1738.6,848.9 L1739,856.8 L1739.4,863 L1739.7,867.1 L1740.1,868.5 L1740.5,866.8 L1740.9,862 L1741.2,854.6 L1741.6,845.3 L1742,834.9 L1742.4,824.5 L1742.7,815.2 L1743.1,807.7 L1743.5,803 L1743.8,801.3 L1744.2,802.9 L1744.6,807.4 L1745,814.4 L1745.4,823.3 L1745.8,833.2 L1746.2,843 L1746.6,851.9 L1747,858.9 L1747.4,863.4 L1747.8,865 L1748.2,863.5 L1748.6,859.1 L1749,852.2 L1749.4,843.6 L1749.7,834 L1750.1,824.4 L1750.5,815.7 L1750.9,808.9 L1751.3,804.5 L1751.7,803 L1752.1,804.4 L1752.4,808.4 L1752.8,814.8 L1753.1,822.8 L1753.4,831.7 L1753.8,840.5 L1754.1,848.5 L1754.5,854.9 L1754.8,859 L1755.2,860.4 L1755.6,859 L1755.9,854.9 L1756.3,848.5 L1756.7,840.5 L1757,831.7 L1757.4,822.8 L1757.8,814.8 L1758.1,808.4 L1758.5,804.4 L1758.9,803 L1759.3,804.2 L1759.7,807.8 L1760.1,813.4 L1760.6,820.4 L1761,828.2 L1761.4,836 L1761.8,843 L1762.2,848.6 L1762.6,852.2 L1763.1,853.4 L1763.4,852.5 L1763.8,849.8 L1764.2,845.5 L1764.5,840.2 L1764.9,834.3 L1765.3,828.4 L1765.6,823.1 L1766,818.9 L1766.4,816.2 L1766.8,815.2 L1767.1,816.6 L1767.5,820.6 L1767.9,826.9 L1768.2,834.8 L1768.6,843.6 L1769,852.3 L1769.4,860.2 L1769.7,866.5 L1770.1,870.5 L1770.5,871.9 L1770.9,870.6 L1771.2,866.6 L1771.6,860.3 L1772,852.5 L1772.4,843.8 L1772.8,835.1 L1773.2,827.3 L1773.6,821.1 L1774,817.1 L1774.4,815.7 L1774.7,816.8 L1775.1,819.9 L1775.4,824.9 L1775.8,831.1 L1776.1,838 L1776.5,844.9 L1776.8,851.1 L1777.2,856.1 L1777.5,859.3 L1777.9,860.4 L1778.3,859.6 L1778.7,857.6 L1779.1,854.3 L1779.4,850.2 L1779.8,845.7 L1780.2,841.1 L1780.6,837 L1781,833.8 L1781.4,831.7 L1781.8,831 L1782.2,831.6 L1782.5,833.5 L1782.8,836.5 L1783.2,840.3 L1783.5,844.5 L1783.9,848.7 L1784.2,852.5 L1784.6,855.5 L1784.9,857.4 L1785.3,858 L1785.7,857.2 L1786.2,854.7 L1786.7,850.7 L1787.1,845.8 L1787.6,840.3 L1788.1,834.9 L1788.5,829.9 L1789,826 L1789.4,823.5 L1789.9,822.6 L1790.2,823.7 L1790.5,826.7 L1790.8,831.4 L1791.1,837.3 L1791.4,843.8 L1791.7,850.4 L1792,856.3 L1792.3,860.9 L1792.6,864 L1792.9,865 L1793.3,864.2 L1793.6,862 L1794,858.5 L1794.3,854 L1794.7,849.1 L1795,844.2 L1795.3,839.8 L1795.7,836.3 L1796,834.1 L1796.4,833.3 L1796.9,834.3 L1797.3,837.2 L1797.8,841.7 L1798.2,847.4 L1798.7,853.8 L1799.2,860.1 L1799.6,865.8 L1800.1,870.3 L1800.6,873.2 L1801,874.2 L1801.4,873.5 L1801.9,871.5 L1802.3,868.3 L1802.7,864.2 L1803.1,859.8 L1803.5,855.3 L1803.9,851.3 L1804.4,848.1 L1804.8,846 L1805.2,845.3 L1805.5,846.1 L1805.8,848.4 L1806.2,852.1 L1806.5,856.7 L1806.8,861.7 L1807.1,866.8 L1807.5,871.4 L1807.8,875 L1808.1,877.4 L1808.4,878.2 L1808.8,877.6 L1809.2,876 L1809.5,873.5 L1809.9,870.3 L1810.3,866.7 L1810.6,863.2 L1811,860 L1811.4,857.5 L1811.8,855.8 L1812.1,855.3 L1812.5,856.2 L1813,859 L1813.4,863.3 L1813.8,868.8 L1814.2,874.8 L1814.6,880.9 L1815,886.3 L1815.5,890.6 L1815.9,893.4 L1816.3,894.4 L1816.6,893.4 L1816.9,890.4 L1817.3,885.8 L1817.6,880 L1817.9,873.6 L1818.2,867.1 L1818.6,861.3 L1818.9,856.7 L1819.2,853.7 L1819.5,852.7 L1820,853.4 L1820.4,855.2 L1820.9,858.1 L1821.3,861.8 L1821.7,865.8 L1822.2,869.8 L1822.6,873.5 L1823.1,876.4 L1823.5,878.2 L1823.9,878.9 L1824.3,878.2 L1824.7,876.2 L1825.1,873.2 L1825.5,869.3 L1825.9,865 L1826.3,860.7 L1826.7,856.8 L1827.1,853.8 L1827.5,851.8 L1827.9,851.1 L1828.2,851.9 L1828.6,854.3 L1829,857.9 L1829.4,862.5 L1829.7,867.6 L1830.1,872.8 L1830.5,877.4 L1830.8,881 L1831.2,883.4 L1831.6,884.2 L1831.9,883.4 L1832.3,880.9 L1832.7,877.1 L1833.1,872.4 L1833.4,867.1 L1833.8,861.8 L1834.2,857 L1834.5,853.2 L1834.9,850.8 L1835.3,849.9 L1835.7,850.9 L1836.1,853.7 L1836.5,858 L1836.9,863.4 L1837.2,869.4 L1837.6,875.4 L1838,880.8 L1838.4,885.1 L1838.8,887.9 L1839.2,888.8 L1839.6,887.8 L1840,884.9 L1840.4,880.4 L1840.8,874.8 L1841.2,868.5 L1841.6,862.2 L1842,856.5 L1842.4,852 L1842.8,849.1 L1843.1,848.1 L1843.5,849 L1843.9,851.7 L1844.3,855.9 L1844.7,861.1 L1845.1,867 L1845.5,872.8 L1845.9,878 L1846.3,882.2 L1846.7,884.9 L1847.1,885.8 L1847.5,885 L1847.8,882.4 L1848.2,878.5 L1848.6,873.6 L1848.9,868.1 L1849.3,862.6 L1849.7,857.7 L1850,853.8 L1850.4,851.3 L1850.8,850.4 L1851.2,851.4 L1851.6,854.4 L1852,859 L1852.4,864.8 L1852.8,871.2 L1853.1,877.7 L1853.5,883.5 L1853.9,888.1 L1854.3,891.1 L1854.7,892.1 L1855.1,890.7 L1855.4,886.9 L1855.8,880.9 L1856.1,873.4 L1856.5,865 L1856.8,856.6 L1857.2,849.1 L1857.5,843.1 L1857.8,839.2 L1858.2,837.9 L1858.6,839 L1859,842.1 L1859.4,847.1 L1859.8,853.3 L1860.2,860.1 L1860.6,867 L1860.9,873.2 L1861.3,878.1 L1861.7,881.3 L1862.1,882.3 L1862.5,881.6 L1862.8,879.5 L1863.2,876.2 L1863.5,872.1 L1863.9,867.5 L1864.2,863 L1864.6,858.8 L1864.9,855.5 L1865.3,853.4 L1865.6,852.7 L1865.9,853.7 L1866.2,856.7 L1866.6,861.2 L1866.9,867 L1867.2,873.3 L1867.5,879.7 L1867.9,885.4 L1868.2,890 L1868.5,892.9 L1868.8,893.9 L1868.8,920.2 L1639.9,920.2 Z" fill="#7eb26d" fill-opacity="0.8" stroke="none"/><path d="M1639.9,866.1 L1640.3,865.3 L1640.7,862.8 L1641.2,859 L1641.6,854.1 L1642,848.8 L1642.4,843.4 L1642.8,838.6 L1643.2,834.7 L1643.7,832.3 L1644.1,831.4 L1644.5,832.8 L1644.9,837 L1645.3,843.4 L1645.6,851.6 L1646,860.6 L1646.4,869.6 L1646.8,877.7 L1647.2,884.2 L1647.6,888.3 L1648,889.8 L1648.4,888.5 L1648.8,884.8 L1649.3,879.2 L1649.7,872 L1650.1,864.1 L1650.5,856.1 L1650.9,849 L1651.3,843.3 L1651.8,839.6 L1652.2,838.4 L1652.6,839.7 L1653,843.5 L1653.4,849.5 L1653.8,857 L1654.1,865.3 L1654.5,873.7 L1654.9,881.2 L1655.3,887.2 L1655.7,891 L1656.1,892.3 L1656.5,890.9 L1656.9,886.7 L1657.4,880.2 L1657.8,872.1 L1658.2,863 L1658.6,854 L1659,845.8 L1659.4,839.3 L1659.9,835.2 L1660.3,833.7 L1660.6,834.9 L1661,838.4 L1661.3,843.8 L1661.7,850.5 L1662,858 L1662.4,865.6 L1662.7,872.3 L1663.1,877.7 L1663.4,881.2 L1663.8,882.3 L1664.1,880.4 L1664.5,874.9 L1664.9,866.3 L1665.3,855.4 L1665.7,843.3 L1666.1,831.3 L1666.5,820.4 L1666.9,811.8 L1667.3,806.2 L1667.7,804.3 L1668,806 L1668.4,810.9 L1668.7,818.4 L1669.1,827.9 L1669.4,838.5 L1669.8,849 L1670.1,858.6 L1670.5,866.1 L1670.8,871 L1671.2,872.6 L1671.6,870.7 L1672,865.2 L1672.4,856.6 L1672.8,845.8 L1673.2,833.7 L1673.7,821.7 L1674.1,810.9 L1674.5,802.3 L1674.9,796.8 L1675.3,794.8 L1675.7,796.5 L1676,801.4 L1676.4,809.1 L1676.7,818.7 L1677.1,829.3 L1677.4,840 L1677.8,849.6 L1678.1,857.2 L1678.4,862.1 L1678.8,863.8 L1679.2,862.1 L1679.6,856.9 L1680,848.8 L1680.5,838.7 L1680.9,827.5 L1681.3,816.3 L1681.7,806.1 L1682.1,798.1 L1682.5,792.9 L1683,791.1 L1683.3,792.8 L1683.7,797.8 L1684,805.4 L1684.4,815.1 L1684.7,825.8 L1685,836.4 L1685.4,846.1 L1685.7,853.7 L1686.1,858.7 L1686.4,860.4 L1686.8,858.7 L1687.2,854 L1687.5,846.7 L1687.9,837.4 L1688.3,827.1 L1688.7,816.9 L1689,807.6 L1689.4,800.3 L1689.8,795.5 L1690.1,793.9 L1690.6,795.5 L1691,799.9 L1691.4,806.8 L1691.8,815.5 L1692.2,825.2 L1692.6,834.8 L1693.1,843.5 L1693.5,850.5 L1693.9,854.9 L1694.3,856.4 L1694.7,855 L1695,851.1 L1695.4,844.8 L1695.8,837 L1696.2,828.3 L1696.5,819.6 L1696.9,811.8 L1697.3,805.5 L1697.6,801.5 L1698,800.2 L1698.4,801.6 L1698.8,805.8 L1699.2,812.3 L1699.6,820.6 L1700,829.7 L1700.4,838.8 L1700.8,847 L1701.2,853.6 L1701.6,857.8 L1701.9,859.2 L1702.3,857.7 L1702.7,853.5 L1703.1,846.9 L1703.5,838.6 L1703.9,829.3 L1704.3,820.1 L1704.7,811.8 L1705.1,805.2 L1705.5,800.9 L1705.9,799.5 L1706.2,800.8 L1706.6,804.7 L1706.9,810.8 L1707.3,818.5 L1707.6,827 L1708,835.5 L1708.3,843.2 L1708.7,849.3 L1709,853.2 L1709.4,854.6 L1709.7,853.2 L1710.1,849.3 L1710.5,843.1 L1710.9,835.4 L1711.3,826.8 L1711.7,818.2 L1712.1,810.5 L1712.5,804.3 L1712.9,800.4 L1713.3,799 L1713.7,800.6 L1714.1,805.1 L1714.5,812.1 L1714.9,821 L1715.3,830.8 L1715.6,840.7 L1716,849.6 L1716.4,856.6 L1716.8,861.1 L1717.2,862.7 L1717.6,861.1 L1718,856.6 L1718.4,849.6 L1718.8,840.7 L1719.2,830.8 L1719.6,821 L1720,812.1 L1720.4,805.1 L1720.8,800.6 L1721.2,799 L1721.5,800.7 L1721.9,805.5 L1722.2,813.1 L1722.5,822.6 L1722.9,833.2 L1723.2,843.7 L1723.6,853.2 L1723.9,860.8 L1724.3,865.6 L1724.6,867.3 L1725,865.8 L1725.4,861.3 L1725.8,854.3 L1726.2,845.5 L1726.6,835.7 L1727,825.9 L1727.4,817.1 L1727.8,810.1 L1728.2,805.7 L1728.6,804.1 L1729,805.6 L1729.4,809.8 L1729.7,816.4 L1730.1,824.7 L1730.5,834 L1730.9,843.2 L1731.3,851.5 L1731.7,858.1 L1732.1,862.4 L1732.5,863.8 L1732.9,862.6 L1733.2,858.9 L1733.6,853.1 L1734,845.8 L1734.4,837.8 L1734.7,829.7 L1735.1,822.5 L1735.5,816.7 L1735.8,813 L1736.2,811.7 L1736.6,813.1 L1737,817.2 L1737.4,823.4 L1737.8,831.3 L1738.2,840.1 L1738.6,848.9 L1739,856.8 L1739.4,863 L1739.7,867.1 L1740.1,868.5 L1740.5,866.8 L1740.9,862 L1741.2,854.6 L1741.6,845.3 L1742,834.9 L1742.4,824.5 L1742.7,815.2 L1743.1,807.7 L1743.5,803 L1743.8,801.3 L1744.2,802.9 L1744.6,807.4 L1745,814.4 L1745.4,823.3 L1745.8,833.2 L1746.2,843 L1746.6,851.9 L1747,858.9 L1747.4,863.4 L1747.8,865 L1748.2,863.5 L1748.6,859.1 L1749,852.2 L1749.4,843.6 L1749.7,834 L1750.1,824.4 L1750.5,815.7 L1750.9,808.9 L1751.3,804.5 L1751.7,803 L1752.1,804.4 L1752.4,808.4 L1752.8,814.8 L1753.1,822.8 L1753.4,831.7 L1753.8,840.5 L1754.1,848.5 L1754.5,854.9 L1754.8,859 L1755.2,860.4 L1755.6,859 L1755.9,854.9 L1756.3,848.5 L1756.7,840.5 L1757,831.7 L1757.4,822.8 L1757.8,814.8 L1758.1,808.4 L1758.5,804.4 L1758.9,803 L1759.3,804.2 L1759.7,807.8 L1760.1,813.4 L1760.6,820.4 L1761,828.2 L1761.4,836 L1761.8,843 L1762.2,848.6 L1762.6,852.2 L1763.1,853.4 L1763.4,852.5 L1763.8,849.8 L1764.2,845.5 L1764.5,840.2 L1764.9,834.3 L1765.3,828.4 L1765.6,823.1 L1766,818.9 L1766.4,816.2 L1766.8,815.2 L1767.1,816.6 L1767.5,820.6 L1767.9,826.9 L1768.2,834.8 L1768.6,843.6 L1769,852.3 L1769.4,860.2 L1769.7,866.5 L1770.1,870.5 L1770.5,871.9 L1770.9,870.6 L1771.2,866.6 L1771.6,860.3 L1772,852.5 L1772.4,843.8 L1772.8,835.1 L1773.2,827.3 L1773.6,821.1 L1774,817.1 L1774.4,815.7 L1774.7,816.8 L1775.1,819.9 L1775.4,824.9 L1775.8,831.1 L1776.1,838 L1776.5,844.9 L1776.8,851.1 L1777.2,856.1 L1777.5,859.3 L1777.9,860.4 L1778.3,859.6 L1778.7,857.6 L1779.1,854.3 L1779.4,850.2 L1779.8,845.7 L1780.2,841.1 L1780.6,837 L1781,833.8 L1781.4,831.7 L1781.8,831 L1782.2,831.6 L1782.5,833.5 L1782.8,836.5 L1783.2,840.3 L1783.5,844.5 L1783.9,848.7 L1784.2,852.5 L1784.6,855.5 L1784.9,857.4 L1785.3,858 L1785.7,857.2 L1786.2,854.7 L1786.7,850.7 L1787.1,845.8 L1787.6,840.3 L1788.1,834.9 L1788.5,829.9 L1789,826 L1789.4,823.5 L1789.9,822.6 L1790.2,823.7 L1790.5,826.7 L1790.8,831.4 L1791.1,837.3 L1791.4,843.8 L1791.7,850.4 L1792,856.3 L1792.3,860.9 L1792.6,864 L1792.9,865 L1793.3,864.2 L1793.6,862 L1794,858.5 L1794.3,854 L1794.7,849.1 L1795,844.2 L1795.3,839.8 L1795.7,836.3 L1796,834.1 L1796.4,833.3 L1796.9,834.3 L1797.3,837.2 L1797.8,841.7 L1798.2,847.4 L1798.7,853.8 L1799.2,860.1 L1799.6,865.8 L1800.1,870.3 L1800.6,873.2 L1801,874.2 L1801.4,873.5 L1801.9,871.5 L1802.3,868.3 L1802.7,864.2 L1803.1,859.8 L1803.5,855.3 L1803.9,851.3 L1804.4,848.1 L1804.8,846 L1805.2,845.3 L1805.5,846.1 L1805.8,848.4 L1806.2,852.1 L1806.5,856.7 L1806.8,861.7 L1807.1,866.8 L1807.5,871.4 L1807.8,875 L1808.1,877.4 L1808.4,878.2 L1808.8,877.6 L1809.2,876 L1809.5,873.5 L1809.9,870.3 L1810.3,866.7 L1810.6,863.2 L1811,860 L1811.4,857.5 L1811.8,855.8 L1812.1,855.3 L1812.5,856.2 L1813,859 L1813.4,863.3 L1813.8,868.8 L1814.2,874.8 L1814.6,880.9 L1815,886.3 L1815.5,890.6 L1815.9,893.4 L1816.3,894.4 L1816.6,893.4 L1816.9,890.4 L1817.3,885.8 L1817.6,880 L1817.9,873.6 L1818.2,867.1 L1818.6,861.3 L1818.9,856.7 L1819.2,853.7 L1819.5,852.7 L1820,853.4 L1820.4,855.2 L1820.9,858.1 L1821.3,861.8 L1821.7,865.8 L1822.2,869.8 L1822.6,873.5 L1823.1,876.4 L1823.5,878.2 L1823.9,878.9 L1824.3,878.2 L1824.7,876.2 L1825.1,873.2 L1825.5,869.3 L1825.9,865 L1826.3,860.7 L1826.7,856.8 L1827.1,853.8 L1827.5,851.8 L1827.9,851.1 L1828.2,851.9 L1828.6,854.3 L1829,857.9 L1829.4,862.5 L1829.7,867.6 L1830.1,872.8 L1830.5,877.4 L1830.8,881 L1831.2,883.4 L1831.6,884.2 L1831.9,883.4 L1832.3,880.9 L1832.7,877.1 L1833.1,872.4 L1833.4,867.1 L1833.8,861.8 L1834.2,857 L1834.5,853.2 L1834.9,850.8 L1835.3,849.9 L1835.7,850.9 L1836.1,853.7 L1836.5,858 L1836.9,863.4 L1837.2,869.4 L1837.6,875.4 L1838,880.8 L1838.4,885.1 L1838.8,887.9 L1839.2,888.8 L1839.6,887.8 L1840,884.9 L1840.4,880.4 L1840.8,874.8 L1841.2,868.5 L1841.6,862.2 L1842,856.5 L1842.4,852 L1842.8,849.1 L1843.1,848.1 L1843.5,849 L1843.9,851.7 L1844.3,855.9 L1844.7,861.1 L1845.1,867 L1845.5,872.8 L1845.9,878 L1846.3,882.2 L1846.7,884.9 L1847.1,885.8 L1847.5,885 L1847.8,882.4 L1848.2,878.5 L1848.6,873.6 L1848.9,868.1 L1849.3,862.6 L1849.7,857.7 L1850,853.8 L1850.4,851.3 L1850.8,850.4 L1851.2,851.4 L1851.6,854.4 L1852,859 L1852.4,864.8 L1852.8,871.2 L1853.1,877.7 L1853.5,883.5 L1853.9,888.1 L1854.3,891.1 L1854.7,892.1 L1855.1,890.7 L1855.4,886.9 L1855.8,880.9 L1856.1,873.4 L1856.5,865 L1856.8,856.6 L1857.2,849.1 L1857.5,843.1 L1857.8,839.2 L1858.2,837.9 L1858.6,839 L1859,842.1 L1859.4,847.1 L1859.8,853.3 L1860.2,860.1 L1860.6,867 L1860.9,873.2 L1861.3,878.1 L1861.7,881.3 L1862.1,882.3 L1862.5,881.6 L1862.8,879.5 L1863.2,876.2 L1863.5,872.1 L1863.9,867.5 L1864.2,863 L1864.6,858.8 L1864.9,855.5 L1865.3,853.4 L1865.6,852.7 L1865.9,853.7 L1866.2,856.7 L1866.6,861.2 L1866.9,867 L1867.2,873.3 L1867.5,879.7 L1867.9,885.4 L1868.2,890 L1868.5,892.9 L1868.8,893.9" fill="none" stroke="#7eb26d" stroke-width="2.8" stroke-linejoin="round" stroke-linecap="butt"/></g></g><text class="ax" x="1634.1" y="923.3" text-anchor="end">10.0 °C</text><text class="ax" x="1634.1" y="875.9" text-anchor="end">20.0 °C</text><text class="ax" x="1634.1" y="828.5" text-anchor="end">30.0 °C</text><text class="ax" x="1634.1" y="781.1" text-anchor="end">40.0 °C</text><text class="axx" x="1685.5" y="936.3" text-anchor="middle">8/8</text><text class="axx" x="1746.6" y="936.3" text-anchor="middle">8/16</text><text class="axx" x="1807.5" y="936.3" text-anchor="middle">8/24</text><text class="axx" x="1868.5" y="936.3" text-anchor="middle">9/1</text><path d="M26,685 L28.2,653 L30.4,694.8 L33.1,719.8 L35.8,698 L38,659.2 L40.2,698 L42.9,718.2 L45.5,689.8 L47.8,639.2 L50,689.8 L52.6,719.8 L55.3,678.4 L57.5,605 L59.7,678.4 L62.4,718.2 L65,690.1 L67.2,640 L69.5,690.1 L72.1,719.8 L74.8,680.2 L77,610 L79.2,680.2 L81.9,718.2 L84.5,691.4 L86.8,643.8 L89,691.4 L91.6,719.8 L94.3,684.3 L96.5,621.2 L98.7,684.3 L101.4,718.2 L104,691.9 L106.2,645 L108.5,691.9 L111.1,719.8 L113.8,693.7 L116,647.5 L118.2,693.7 L120.9,718.2 L123.5,689.9 L125.8,639.5 L128,689.9 L130.6,719.8 L133.3,691.2 L135.5,640.5 L137.7,691.2 L140.4,718.2 L143.1,692.1 L145.2,645.5 L147.4,692.1 L150.1,719.8 L152.8,691.9 L155,642.5 L157.2,691.9 L159.9,718.2 L162.6,703.1 L164.8,676.2 L166.9,703.1 L169.6,719.8 L172.3,687 L174.5,628.8 L176.7,687 L179.4,718.2 L182.1,679.5 L184.2,610.8 L186.4,679.5 L189.1,719.8 L191.8,691.5 L194,641.2 L196.2,691.5 L198.9,718.2 L201.6,688.3 L203.8,635 L205.9,688.3 L208.6,719.8 L211.3,705.9 L213.5,681.2 L215.7,705.9 L218.4,718.2 L221.1,691.9 L223.2,645 L225.4,691.9 L228.1,719.8 L230.8,677.5 L233,602.5 L235.2,677.5 L237.9,718.2 L240.6,660.4 L242.8,557.5 L244.9,660.4 L247.6,719.8 L250.3,687.4 L252.5,630 L254.7,687.4 L257.4,718.2 L260.1,710.3 L262.2,696.2 L264.4,710.3 L267.1,719.8 L269.8,684.3 L272,621.2 L274.2,684.3 L276.9,718.2 L279.6,702.7 L281.8,675 L283.9,702.7 L286.6,719.8 L289.3,685.6 L291.5,625 L293.7,685.6 L296.4,718.2 L299.1,682.2 L301.2,618.2 L303.4,682.2 L306.1,719.8 L308.8,670.5 L311,583 L313.2,670.5 L317.5,718.8 L317.5,720.2 L317.5,720.8 L26,720.8 Z" fill="#1f78c1" fill-opacity="0.14"/><path d="M26,685 L28.2,653 L30.4,694.8 L33.1,719.8 L35.8,698 L38,659.2 L40.2,698 L42.9,718.2 L45.5,689.8 L47.8,639.2 L50,689.8 L52.6,719.8 L55.3,678.4 L57.5,605 L59.7,678.4 L62.4,718.2 L65,690.1 L67.2,640 L69.5,690.1 L72.1,719.8 L74.8,680.2 L77,610 L79.2,680.2 L81.9,718.2 L84.5,691.4 L86.8,643.8 L89,691.4 L91.6,719.8 L94.3,684.3 L96.5,621.2 L98.7,684.3 L101.4,718.2 L104,691.9 L106.2,645 L108.5,691.9 L111.1,719.8 L113.8,693.7 L116,647.5 L118.2,693.7 L120.9,718.2 L123.5,689.9 L125.8,639.5 L128,689.9 L130.6,719.8 L133.3,691.2 L135.5,640.5 L137.7,691.2 L140.4,718.2 L143.1,692.1 L145.2,645.5 L147.4,692.1 L150.1,719.8 L152.8,691.9 L155,642.5 L157.2,691.9 L159.9,718.2 L162.6,703.1 L164.8,676.2 L166.9,703.1 L169.6,719.8 L172.3,687 L174.5,628.8 L176.7,687 L179.4,718.2 L182.1,679.5 L184.2,610.8 L186.4,679.5 L189.1,719.8 L191.8,691.5 L194,641.2 L196.2,691.5 L198.9,718.2 L201.6,688.3 L203.8,635 L205.9,688.3 L208.6,719.8 L211.3,705.9 L213.5,681.2 L215.7,705.9 L218.4,718.2 L221.1,691.9 L223.2,645 L225.4,691.9 L228.1,719.8 L230.8,677.5 L233,602.5 L235.2,677.5 L237.9,718.2 L240.6,660.4 L242.8,557.5 L244.9,660.4 L247.6,719.8 L250.3,687.4 L252.5,630 L254.7,687.4 L257.4,718.2 L260.1,710.3 L262.2,696.2 L264.4,710.3 L267.1,719.8 L269.8,684.3 L272,621.2 L274.2,684.3 L276.9,718.2 L279.6,702.7 L281.8,675 L283.9,702.7 L286.6,719.8 L289.3,685.6 L291.5,625 L293.7,685.6 L296.4,718.2 L299.1,682.2 L301.2,618.2 L303.4,682.2 L306.1,719.8 L308.8,670.5 L311,583 L313.2,670.5 L317.5,718.8 L317.5,720.2" fill="none" stroke="#1f78c1" stroke-width="1.1" stroke-linejoin="round"/><path d="M86.78,698.36 A89.5,89.5 0 1 1 257.02,698.36 L229.25,689.33 A60.3,60.3 0 1 0 114.55,689.33 Z" fill="#262626"/><path d="M81.17,700.18 A95.4,95.4 0 1 1 262.63,700.18 L257.97,698.67 A90.5,90.5 0 1 0 85.83,698.67 Z" fill="#508642"/><text class="gl" transform="translate(72.61,702.96) rotate(252.0)" text-anchor="middle" y="5">0</text><text class="gl" transform="translate(271.19,702.96) rotate(468.0)" text-anchor="middle" y="5">200</text><text class="gv" x="171.9" y="691.1" text-anchor="middle" font-size="36">0 W</text><path d="M1594.1,586.4 L1596.7,643.1 L1597.9,645 L1599.2,641.3 L1601.2,580.6 L1603.2,588.6 L1606.3,640.3 L1607.5,645.1 L1608.5,644.3 L1609,641.3 L1611,574.2 L1613,582.2 L1616.1,640.3 L1617.3,645.1 L1618.2,644.3 L1618.7,641.3 L1620.7,577.9 L1622.7,585.9 L1625.8,640.3 L1627,645.1 L1627.9,644.3 L1628.5,641.3 L1630.5,576.5 L1632.5,584.5 L1635.6,640.3 L1636.8,645.1 L1637.7,644.3 L1638.2,641.3 L1640.2,577.2 L1642.2,585.2 L1645.3,640.3 L1646.5,645.1 L1647.4,644.3 L1648,641.3 L1650,580 L1652,588 L1655.1,640.3 L1656.3,645.1 L1657.2,644.3 L1657.7,641.3 L1659.7,579.5 L1661.7,587.5 L1664.8,640.3 L1666,645.1 L1666.9,644.3 L1667.5,641.3 L1669.5,574.9 L1671.5,582.9 L1674.6,640.3 L1675.8,645.1 L1676.7,644.3 L1677.2,641.3 L1679.2,574.9 L1681.2,582.9 L1684.3,640.3 L1685.5,645.1 L1686.4,644.3 L1687,641.3 L1689,573.7 L1691,581.7 L1694.1,640.3 L1695.3,645.1 L1696.2,644.3 L1696.7,641.3 L1698.7,574.9 L1700.7,582.9 L1703.8,640.3 L1705,645.1 L1705.9,644.3 L1706.4,641.3 L1708.4,573.2 L1710.4,581.2 L1713.5,640.3 L1714.7,645.1 L1715.6,644.3 L1716.2,641.3 L1718.2,572.8 L1720.2,580.8 L1723.3,640.3 L1724.5,645.1 L1725.4,644.3 L1725.9,641.3 L1727.9,572.3 L1729.9,580.3 L1733,640.3 L1734.2,645.1 L1735.1,644.3 L1735.7,641.3 L1737.7,571.4 L1739.7,579.4 L1742.8,640.3 L1744,645.1 L1744.9,644.3 L1745.4,641.3 L1747.4,570.5 L1749.4,578.5 L1752.5,640.3 L1753.7,645.1 L1754.6,644.3 L1755.2,641.3 L1757.2,569.1 L1759.2,577.1 L1762.3,640.3 L1763.5,645.1 L1764.4,644.3 L1764.9,641.3 L1766.9,566.8 L1768.9,574.8 L1772,640.3 L1773.2,645.1 L1774.1,644.3 L1774.7,641.3 L1776.7,568.6 L1778.7,576.6 L1781.8,640.3 L1783,645.1 L1783.9,644.3 L1784.4,641.3 L1786.4,567.2 L1788.4,575.2 L1791.5,640.3 L1792.7,645.1 L1793.6,644.3 L1794.2,641.3 L1796.2,564.4 L1798.2,572.4 L1801.3,640.3 L1802.5,645.1 L1803.4,644.3 L1803.9,641.3 L1805.9,565.6 L1807.9,573.6 L1811,640.3 L1812.2,645.1 L1813.1,644.3 L1813.6,641.3 L1815.6,564.4 L1817.6,572.4 L1820.7,640.3 L1821.9,645.1 L1822.8,644.3 L1823.4,641.3 L1825.4,559.4 L1827.4,567.4 L1830.5,640.3 L1831.7,645.1 L1832.6,644.3 L1833.1,641.3 L1835.1,562.1 L1837.1,570.1 L1840.2,640.3 L1841.4,645.1 L1842.3,644.3 L1842.9,641.3 L1844.9,561 L1846.9,569 L1850,640.3 L1851.2,645.1 L1852.1,644.3 L1852.6,641.3 L1854.6,562.1 L1856.6,570.1 L1859.7,640.3 L1860.9,645.1 L1861.8,644.3 L1862.4,641.3 L1864.4,563.3 L1866.4,571.3 L1869.5,640.3 L1870.7,645.1 L1871.6,644.3 L1872.1,641.3 L1874.1,559.4 L1876.1,567.4 L1879.2,640.3 L1880.4,645.1 L1881.3,644.3 L1881.9,641.3 L1883.9,558 L1886.2,558 L1886.2,720.8 L1594.1,720.8 Z" fill="#1f78c1" fill-opacity="0.16"/><path d="M1594.1,586.4 L1596.7,643.1 L1597.9,645 L1599.2,641.3 L1601.2,580.6 L1603.2,588.6 L1606.3,640.3 L1607.5,645.1 L1608.5,644.3 L1609,641.3 L1611,574.2 L1613,582.2 L1616.1,640.3 L1617.3,645.1 L1618.2,644.3 L1618.7,641.3 L1620.7,577.9 L1622.7,585.9 L1625.8,640.3 L1627,645.1 L1627.9,644.3 L1628.5,641.3 L1630.5,576.5 L1632.5,584.5 L1635.6,640.3 L1636.8,645.1 L1637.7,644.3 L1638.2,641.3 L1640.2,577.2 L1642.2,585.2 L1645.3,640.3 L1646.5,645.1 L1647.4,644.3 L1648,641.3 L1650,580 L1652,588 L1655.1,640.3 L1656.3,645.1 L1657.2,644.3 L1657.7,641.3 L1659.7,579.5 L1661.7,587.5 L1664.8,640.3 L1666,645.1 L1666.9,644.3 L1667.5,641.3 L1669.5,574.9 L1671.5,582.9 L1674.6,640.3 L1675.8,645.1 L1676.7,644.3 L1677.2,641.3 L1679.2,574.9 L1681.2,582.9 L1684.3,640.3 L1685.5,645.1 L1686.4,644.3 L1687,641.3 L1689,573.7 L1691,581.7 L1694.1,640.3 L1695.3,645.1 L1696.2,644.3 L1696.7,641.3 L1698.7,574.9 L1700.7,582.9 L1703.8,640.3 L1705,645.1 L1705.9,644.3 L1706.4,641.3 L1708.4,573.2 L1710.4,581.2 L1713.5,640.3 L1714.7,645.1 L1715.6,644.3 L1716.2,641.3 L1718.2,572.8 L1720.2,580.8 L1723.3,640.3 L1724.5,645.1 L1725.4,644.3 L1725.9,641.3 L1727.9,572.3 L1729.9,580.3 L1733,640.3 L1734.2,645.1 L1735.1,644.3 L1735.7,641.3 L1737.7,571.4 L1739.7,579.4 L1742.8,640.3 L1744,645.1 L1744.9,644.3 L1745.4,641.3 L1747.4,570.5 L1749.4,578.5 L1752.5,640.3 L1753.7,645.1 L1754.6,644.3 L1755.2,641.3 L1757.2,569.1 L1759.2,577.1 L1762.3,640.3 L1763.5,645.1 L1764.4,644.3 L1764.9,641.3 L1766.9,566.8 L1768.9,574.8 L1772,640.3 L1773.2,645.1 L1774.1,644.3 L1774.7,641.3 L1776.7,568.6 L1778.7,576.6 L1781.8,640.3 L1783,645.1 L1783.9,644.3 L1784.4,641.3 L1786.4,567.2 L1788.4,575.2 L1791.5,640.3 L1792.7,645.1 L1793.6,644.3 L1794.2,641.3 L1796.2,564.4 L1798.2,572.4 L1801.3,640.3 L1802.5,645.1 L1803.4,644.3 L1803.9,641.3 L1805.9,565.6 L1807.9,573.6 L1811,640.3 L1812.2,645.1 L1813.1,644.3 L1813.6,641.3 L1815.6,564.4 L1817.6,572.4 L1820.7,640.3 L1821.9,645.1 L1822.8,644.3 L1823.4,641.3 L1825.4,559.4 L1827.4,567.4 L1830.5,640.3 L1831.7,645.1 L1832.6,644.3 L1833.1,641.3 L1835.1,562.1 L1837.1,570.1 L1840.2,640.3 L1841.4,645.1 L1842.3,644.3 L1842.9,641.3 L1844.9,561 L1846.9,569 L1850,640.3 L1851.2,645.1 L1852.1,644.3 L1852.6,641.3 L1854.6,562.1 L1856.6,570.1 L1859.7,640.3 L1860.9,645.1 L1861.8,644.3 L1862.4,641.3 L1864.4,563.3 L1866.4,571.3 L1869.5,640.3 L1870.7,645.1 L1871.6,644.3 L1872.1,641.3 L1874.1,559.4 L1876.1,567.4 L1879.2,640.3 L1880.4,645.1 L1881.3,644.3 L1881.9,641.3 L1883.9,558 L1886.2,558" fill="none" stroke="#1f78c1" stroke-width="1.1" stroke-linejoin="round"/><path d="M1655.58,698.36 A89.5,89.5 0 1 1 1825.82,698.36 L1798.05,689.33 A60.3,60.3 0 1 0 1683.35,689.33 Z" fill="#262626"/><path d="M1656.53,698.05 A88.5,88.5 0 0 1 1656.26,644.20 L1683.17,652.64 A60.3,60.3 0 0 0 1683.35,689.33 Z" fill="#508642"/><path d="M1649.97,700.18 A95.4,95.4 0 1 1 1831.43,700.18 L1826.77,698.67 A90.5,90.5 0 1 0 1654.63,698.67 Z" fill="#508642"/><text class="gl" transform="translate(1641.41,702.96) rotate(252.0)" text-anchor="middle" y="5">0</text><text class="gl" transform="translate(1839.99,702.96) rotate(468.0)" text-anchor="middle" y="5">5</text><text class="gv" x="1740.7" y="691.1" text-anchor="middle" font-size="36">0.82 A</text><path d="M400.78,938.36 A89.5,89.5 0 1 1 571.02,938.36 L543.25,929.33 A60.3,60.3 0 1 0 428.55,929.33 Z" fill="#262626"/><path d="M395.17,940.18 A95.4,95.4 0 1 1 576.63,940.18 L571.97,938.67 A90.5,90.5 0 1 0 399.83,938.67 Z" fill="#508642"/><text class="gl" transform="translate(386.61,942.96) rotate(252.0)" text-anchor="middle" y="5">0</text><text class="gl" transform="translate(585.19,942.96) rotate(468.0)" text-anchor="middle" y="5">10</text><text class="gv" x="485.9" y="931.1" text-anchor="middle" font-size="36">0 A</text><path d="M1342.28,938.36 A89.5,89.5 0 1 1 1512.52,938.36 L1484.75,929.33 A60.3,60.3 0 1 0 1370.05,929.33 Z" fill="#262626"/><path d="M1343.23,938.05 A88.5,88.5 0 0 1 1379.98,835.98 L1395.09,859.79 A60.3,60.3 0 0 0 1370.05,929.33 Z" fill="#508642"/><path d="M1336.67,940.18 A95.4,95.4 0 0 1 1335.96,883.51 L1340.65,884.91 A90.5,90.5 0 0 0 1341.33,938.67 Z" fill="#bf1b00"/><path d="M1335.96,883.51 A95.4,95.4 0 0 1 1522.61,904.71 L1517.72,905.02 A90.5,90.5 0 0 0 1340.65,884.91 Z" fill="#508642"/><path d="M1522.61,904.71 A95.4,95.4 0 0 1 1518.13,940.18 L1513.47,938.67 A90.5,90.5 0 0 0 1517.72,905.02 Z" fill="#bf1b00"/><text class="gl" transform="translate(1328.11,942.96) rotate(252.0)" text-anchor="middle" y="5">11</text><text class="gl" transform="translate(1327.33,880.94) rotate(286.6)" text-anchor="middle" y="5">11.8</text><text class="gl" transform="translate(1531.59,904.14) rotate(446.4)" text-anchor="middle" y="5">15.5</text><text class="gl" transform="translate(1526.69,942.96) rotate(468.0)" text-anchor="middle" y="5">16</text><text class="gv" x="1427.4" y="931.1" text-anchor="middle" font-size="36">12.75 V</text><path d="M653.3,961 L669.4,961 L672.3,812.3 L675.2,961 L737.8,961 L740.7,798.3 L743.6,961 L945,961 Z" fill="#1f78c1" fill-opacity="0.25"/><path d="M653.3,961 L669.4,961 L672.3,812.3 L675.2,961 L737.8,961 L740.7,798.3 L743.6,961 L945,961" fill="none" stroke="#1f78c1" stroke-width="1" stroke-linejoin="miter"/><path d="M967.3,961 L983.8,961 L986.7,834 L989.6,961 L1051.4,961 L1054.3,798.3 L1057.2,961 L1259,961 Z" fill="#1f78c1" fill-opacity="0.25"/><path d="M967.3,961 L983.8,961 L986.7,834 L989.6,961 L1051.4,961 L1054.3,798.3 L1057.2,961 L1259,961" fill="none" stroke="#1f78c1" stroke-width="1" stroke-linejoin="miter"/></svg>
</body></html>
